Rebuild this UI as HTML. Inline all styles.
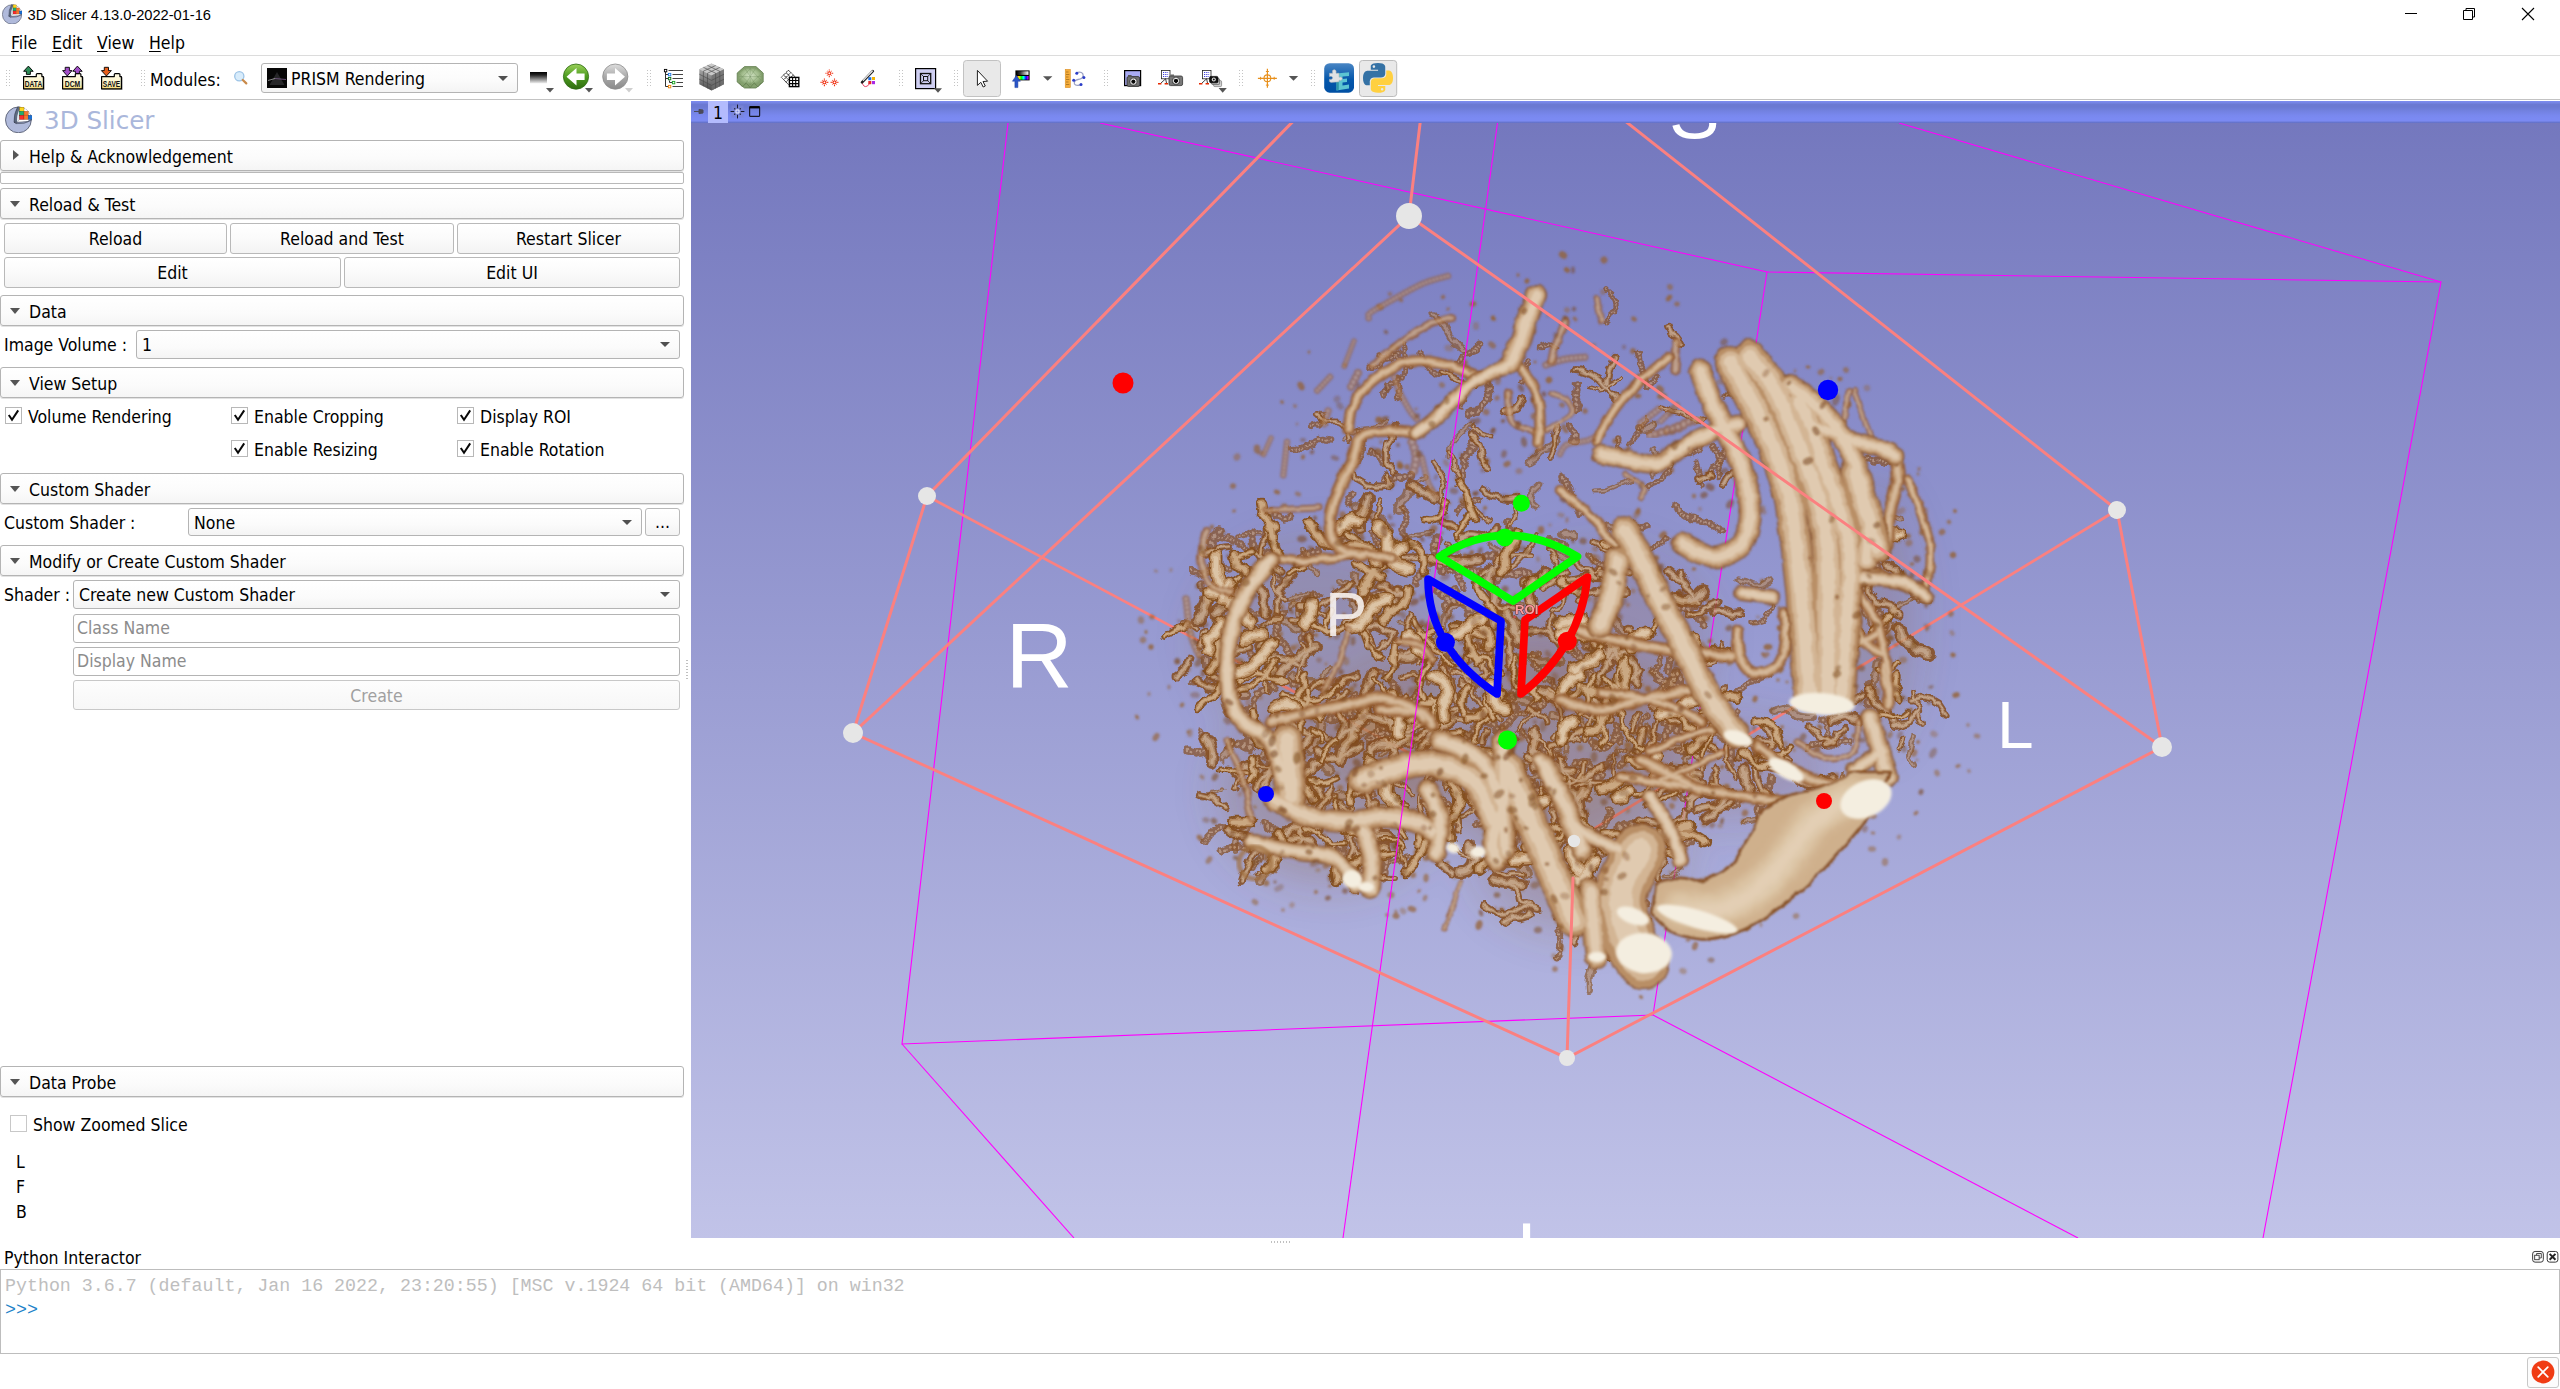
<!DOCTYPE html>
<html lang="en">
<head>
<meta charset="utf-8">
<title>3D Slicer 4.13.0-2022-01-16</title>
<style>
*{box-sizing:border-box;margin:0;padding:0}
html,body{width:2560px;height:1389px;overflow:hidden;background:#fff}
body{position:relative;font-family:"DejaVu Sans Condensed","Liberation Sans",sans-serif;font-size:17.5px;color:#000;line-height:1}
.abs{position:absolute}
.t{position:absolute;white-space:nowrap;line-height:20px;height:20px}
#titlebar{left:0;top:0;width:2560px;height:30px;background:#fff}
#title{left:27.5px;top:5px;font-family:"Liberation Sans",sans-serif;font-size:14.7px;line-height:20px;letter-spacing:-0.04px}
#menubar{left:0;top:30px;width:2560px;height:25px;background:#fff}
.menu{top:33px}
.menu u{text-decoration:underline;text-underline-offset:2px;text-decoration-thickness:1px}
#tbline1{left:0;top:55px;width:2560px;height:1px;background:#dcdcdc}
#tbline2{left:0;top:99px;width:2560px;height:1px;background:#c3c3c3}
.handle{position:absolute;top:69px;width:6px;height:18px;background-image:radial-gradient(circle,#c4c4c4 0.55px,transparent 0.95px);background-size:3px 3px}
.cbtn{position:absolute;left:0;width:684px;height:31px;border:1px solid #b4b4b4;border-radius:3px;background:linear-gradient(#ffffff,#fbfbfb 60%,#f5f5f5);box-shadow:0 1px 0 #e2e2e2}
.cbtn .lbl{position:absolute;left:28px;top:6px;line-height:20px;white-space:nowrap}
.cbtn .arr{position:absolute;left:9px;top:12px;width:0;height:0;border-left:5.5px solid transparent;border-right:5.5px solid transparent;border-top:6px solid #555}
.cbtn .arrr{position:absolute;left:12px;top:9px;width:0;height:0;border-top:5.5px solid transparent;border-bottom:5.5px solid transparent;border-left:6px solid #555}
.pbtn{position:absolute;height:31px;padding-top:1px;border:1px solid #b9b9b9;border-radius:3px;background:linear-gradient(#ffffff,#fafafa 55%,#f3f3f3);text-align:center;line-height:28px;white-space:nowrap}
.combo{position:absolute;height:29px;border:1px solid #b4b4b4;border-radius:3px;background:linear-gradient(#ffffff,#fbfbfb 60%,#f4f4f4);line-height:29px;padding-left:5px;white-space:nowrap}
.combo .dd{position:absolute;right:9px;top:11px;width:0;height:0;border-left:5px solid transparent;border-right:5px solid transparent;border-top:5.5px solid #505050}
.edit{position:absolute;left:73px;width:607px;height:29px;border:1px solid #b4b4b4;border-radius:3px;background:#fff;line-height:27px;padding-left:3px;color:#8c8c8c;white-space:nowrap}
.chk{position:absolute;width:17px;height:17px;border:1px solid #b8b8b8;background:#fff}
.chk svg{position:absolute;left:0;top:0}
.ddarrow{position:absolute;width:0;height:0;border-left:5px solid transparent;border-right:5px solid transparent;border-top:5px solid #555}
.sarrow{position:absolute;width:0;height:0;border-left:4px solid transparent;border-right:4px solid transparent;border-top:4.5px solid #555}
#view{left:691px;top:101px;width:1869px;height:1137px;overflow:hidden;background:linear-gradient(#7478be 22px,#c1c3e8 100%)}
#vbar{left:0;top:0;width:1869px;height:22px;background:linear-gradient(#7d8cf0 0%,#7584e4 8%,#6b79d2 16%,#6b79d2 27%,#7281e0 45%,#7988ee 65%,#7b8af2 80%,#7b8af2 90%,#6b79d4 96%,#5f6cc0 100%)}
#pybox{left:0;top:1269px;width:2560px;height:85px;border:1px solid #bdbdbd;background:#fff}
.mono{font-family:"Liberation Mono","DejaVu Sans Mono",monospace;font-size:18.3px;line-height:24px;white-space:pre;position:absolute}
</style>
</head>
<body>
<svg width="0" height="0" style="position:absolute">
<defs>
<g id="slicerlogo">
<circle cx="13.4" cy="13.9" r="12.9" fill="#b0badb" stroke="#4a5064" stroke-width=".8"/>
<path d="M13.4 1V13.9H26.3A12.9 12.9 0 0 0 13.4 1Z" fill="#fff"/>
<path d="M12.6 .9L16.6 1.6L14.2 13L11.6 17.6L9 16.2Q8.6 8 12.6 .9Z" fill="#5d6a80" stroke="#2a3040" stroke-width=".5"/>
<path d="M14.4 3.4L14.6 13.4L12 16.4Q11.6 9 14.4 3.4Z" fill="#dfe9ec"/>
<path d="M12 16.4L14.8 13.3L25.6 13.2L22.6 15.6Z" fill="#ffffff" stroke="#8088a0" stroke-width=".3"/>
<path d="M9 16.2L11.6 17.6Q19 18.6 26.2 14.4L26.4 13.2L22.6 15.6L12 16.4Z" fill="#9aa5c6" stroke="#2a3040" stroke-width=".5"/>
<rect x="14.7" y="1.2" width="4.3" height="4.1" fill="#fbd51e" stroke="#a07800" stroke-width=".4"/>
<rect x="14.7" y="5.3" width="4.3" height="4" fill="#1fae6e" stroke="#0a6a3c" stroke-width=".4"/>
<rect x="14.7" y="9.3" width="4.3" height="4" fill="#fa2d2d" stroke="#900" stroke-width=".4"/>
<rect x="19" y="5.3" width="4.2" height="8" fill="#f47a30" stroke="#a44a10" stroke-width=".4"/>
<path d="M19 9.3H23.2" stroke="#a44a10" stroke-width=".4"/>
<rect x="23.2" y="9.3" width="4" height="4" fill="#1c6fd0" stroke="#0a3c80" stroke-width=".4"/>
</g>
</defs>
</svg>
<div id="titlebar" class="abs"></div>
<!-- app icon -->
<svg class="abs" style="left:1.8px;top:3.8px" width="20.6" height="20.6" viewBox="0 0 27.4 27.4">
<use href="#slicerlogo"/>
</svg>
<div id="title" class="t">3D Slicer 4.13.0-2022-01-16</div>
<!-- window controls -->
<svg class="abs" style="left:2390px;top:0" width="170" height="30" viewBox="0 0 170 30">
<path d="M15 13.5H27" stroke="#000" stroke-width="1" fill="none"/>
<path d="M73.5 10.5V19.5H82.5V10.5Z M76 10.5V8.5H84.5V17H82.5" stroke="#000" stroke-width="1" fill="none"/>
<path d="M132 8L144 20M144 8L132 20" stroke="#000" stroke-width="1.1" fill="none"/>
</svg>
<div id="menubar" class="abs"></div>
<div class="t menu" style="left:11px"><u>F</u>ile</div>
<div class="t menu" style="left:52px"><u>E</u>dit</div>
<div class="t menu" style="left:97px"><u>V</u>iew</div>
<div class="t menu" style="left:149px"><u>H</u>elp</div>
<div id="tbline1" class="abs"></div>
<div id="tbline2" class="abs"></div>
<!-- toolbar handles -->
<div class="handle" style="left:5px"></div>
<div class="handle" style="left:140px"></div>
<div class="handle" style="left:645.5px"></div>
<div class="handle" style="left:897.5px"></div>
<div class="handle" style="left:952.5px"></div>
<div class="handle" style="left:1102.5px"></div>
<div class="handle" style="left:1237.5px"></div>
<div class="handle" style="left:1310px"></div>
<div class="t" style="left:150px;top:70.3px">Modules:</div>
<!-- module combo -->
<div class="combo" style="left:261px;top:63px;width:257px;height:30px;padding-left:29px;padding-top:1px;line-height:29px">PRISM Rendering<span class="dd" style="right:9px;top:12px"></span></div>
<svg class="abs" style="left:267px;top:68px" width="20" height="20" viewBox="0 0 20 20"><rect width="20" height="20" fill="#060606"/><path d="M10 4L17.5 17H2.5Z" fill="#262628"/><path d="M1 12.5L8 10.5" stroke="#bbb" stroke-width=".7"/><path d="M8 10.5L19 11.5" stroke="#7a5a8a" stroke-width=".8"/></svg>
<svg class="abs" style="left:0;top:56px" width="1400" height="44" viewBox="0 56 1400 44" font-family="'Liberation Sans',sans-serif">
<defs>
<linearGradient id="fold" x1="0" y1="0" x2="0" y2="1"><stop offset="0" stop-color="#fffbe6"/><stop offset=".7" stop-color="#fdf3c4"/><stop offset="1" stop-color="#f5d86a"/></linearGradient>
<linearGradient id="gball" x1="0" y1="0" x2="0" y2="1"><stop offset="0" stop-color="#9bd25a"/><stop offset=".5" stop-color="#4c9a1f"/><stop offset="1" stop-color="#2f6d10"/></linearGradient>
<linearGradient id="grball" x1="0" y1="0" x2="0" y2="1"><stop offset="0" stop-color="#dedede"/><stop offset=".5" stop-color="#a9a9a9"/><stop offset="1" stop-color="#8a8a8a"/></linearGradient>
<linearGradient id="bw" x1="0" y1="0" x2="0" y2="1"><stop offset="0" stop-color="#000"/><stop offset=".25" stop-color="#222"/><stop offset="1" stop-color="#f4f4f4"/></linearGradient>
<linearGradient id="bwh" x1="0" y1="0" x2="1" y2="0"><stop offset="0" stop-color="#000"/><stop offset=".3" stop-color="#333"/><stop offset="1" stop-color="#fff"/></linearGradient>
<linearGradient id="rainbow" x1="0" y1="0" x2="1" y2="0"><stop offset="0" stop-color="#f00"/><stop offset=".2" stop-color="#ff0"/><stop offset=".4" stop-color="#0f0"/><stop offset=".6" stop-color="#0ff"/><stop offset=".8" stop-color="#00f"/><stop offset="1" stop-color="#f0f"/></linearGradient>
<linearGradient id="extbg" x1="0" y1="0" x2="0" y2="1"><stop offset="0" stop-color="#4a86c4"/><stop offset=".55" stop-color="#0457ab"/><stop offset="1" stop-color="#004fa3"/></linearGradient>
<linearGradient id="cubeg" x1="0" y1="0" x2="0" y2="1"><stop offset="0" stop-color="#b9b9b9"/><stop offset=".5" stop-color="#8a8a8a"/><stop offset="1" stop-color="#4b4b4b"/></linearGradient>
<radialGradient id="gemg" cx=".5" cy=".45" r=".6"><stop offset="0" stop-color="#d2e3c4"/><stop offset=".6" stop-color="#a5bf90"/><stop offset="1" stop-color="#7c9966"/></radialGradient>
<radialGradient id="lens" cx=".5" cy=".5" r=".5"><stop offset="0" stop-color="#000"/><stop offset=".45" stop-color="#111"/><stop offset=".6" stop-color="#eee"/><stop offset=".8" stop-color="#999"/><stop offset="1" stop-color="#333"/></radialGradient>
<g id="folder"><path d="M1.2 19.2V31.8H21.8V19.2" fill="#6b6b6b" opacity=".55"/><path d="M.6 18.6V30.9H20.4V18.6H18.9V16.6Q18.9 15.7 18 15.7H14.2Q13.3 15.7 13.3 16.6V18.6Z" fill="url(#fold)" stroke="#000" stroke-width="1.2" stroke-linejoin="round"/></g>
</defs>
<!-- DATA / DCM / SAVE : origin at folder x, y=58 -->
<g transform="translate(23,58)"><use href="#folder"/><path d="M5.4 8.1L.6 13.3H3.4V16.4H7.4V13.3H10.2Z" fill="#2e8b57" stroke="#000" stroke-width=".9" stroke-linejoin="round"/><text x="10.5" y="28.8" font-size="8.6" font-weight="bold" text-anchor="middle" textLength="17.5" lengthAdjust="spacingAndGlyphs" fill="#111">DATA</text></g>
<g transform="translate(62,58)"><use href="#folder"/><path d="M3.2 9.3H7.4V12.6H10L5.3 18L.6 12.6H3.2Z" fill="#a24fc7" stroke="#000" stroke-width=".9" stroke-linejoin="round"/><path d="M15.4 8.1L10.8 13.3H13.4V15.6H17.4V13.3H20.2Z" fill="#a24fc7" stroke="#000" stroke-width=".9" stroke-linejoin="round"/><text x="10.5" y="28.8" font-size="8.6" font-weight="bold" text-anchor="middle" textLength="15.5" lengthAdjust="spacingAndGlyphs" fill="#111">DCM</text></g>
<g transform="translate(101,58)"><use href="#folder"/><path d="M3.3 9.3H7.5V12.6H10.4L5.4 18L.4 12.6H3.3Z" fill="#e8601c" stroke="#000" stroke-width=".9" stroke-linejoin="round"/><text x="10.5" y="28.8" font-size="8.6" font-weight="bold" text-anchor="middle" textLength="17.5" lengthAdjust="spacingAndGlyphs" fill="#111">SAVE</text></g>
<!-- magnifier -->
<g><circle cx="239.3" cy="76.3" r="4.6" fill="#d8ecfb" stroke="#9cc3e6" stroke-width="1.3"/><path d="M242.8 80L246.3 83.4" stroke="#c98a4a" stroke-width="2.2" stroke-linecap="round"/></g>
<!-- history gradient icon -->
<rect x="530" y="72" width="17" height="11.5" fill="url(#bw)"/><path d="M546 88H554L550 92.5Z" fill="#555"/>
<!-- back / forward -->
<circle cx="576" cy="76.6" r="12.6" fill="url(#gball)" stroke="#2c6a10" stroke-width=".8"/>
<path d="M566.5 76.8L576.5 68V73.6H584.6V80H576.5V85.6Z" fill="#fff"/>
<path d="M585 88H593L589 92.5Z" fill="#555"/>
<circle cx="615.3" cy="76.6" r="12.6" fill="url(#grball)" stroke="#8c8c8c" stroke-width=".8"/>
<path d="M625 76.8L615 68V73.6H606.9V80H615V85.6Z" fill="#fff"/>
<path d="M625 88H633L629 92.5Z" fill="#cfcfcf"/>
<!-- subject hierarchy tree -->
<g fill="none" stroke="#333" stroke-width="1">
<path d="M665.5 72V86.5H668M665.5 74.5H668M665.5 78.5H668M669.5 80.5V82.5H672"/>
<path d="M668.5 70.5H683M672.5 74.5H683M672.5 78.5H683M676.5 82.5H683M672.5 86.5H683" stroke="#444"/>
<rect x="664.4" y="69.4" width="2.4" height="2.4" stroke="#000" stroke-width=".9" fill="#fff"/>
<rect x="668.4" y="73.4" width="2.4" height="2.4" stroke="#1e78e6" stroke-width=".9" fill="#fff"/>
<rect x="668.4" y="77.4" width="2.4" height="2.4" stroke="#0a6e14" stroke-width=".9" fill="#fff"/>
<rect x="672.4" y="81.4" width="2.4" height="2.4" stroke="#14a01e" stroke-width=".9" fill="#fff"/>
<rect x="668.4" y="85.4" width="2.4" height="2.4" stroke="#f08200" stroke-width=".9" fill="#fff"/>
</g>
<!-- gray cube -->
<g><path d="M711.5 63.6L724 69.2V84.2L711.5 90.4L699.3 84.2V69.2Z" fill="url(#cubeg)"/><path d="M711.5 63.6L724 69.2L711.5 75.4L699.3 69.2Z" fill="#c9c9c9"/><path d="M711.5 75.4V90.4L724 84.2V69.2Z" fill="#6f6f6f" opacity=".75"/>
<path d="M703.4 67.3L715.8 73.3M707.5 65.4L719.9 71.4M715.6 65.5L703.3 71.2M719.8 67.4L707.4 73.3M699.3 74.2L711.5 80.4L724 74.2M699.3 79.2L711.5 85.4L724 79.2M703.4 71.3V86.3M707.5 73.3V88.4M715.6 73.4V88.4M719.8 71.3V86.3" stroke="#4a4a4a" stroke-width=".8" fill="none" opacity=".8"/></g>
<!-- green gem -->
<g><path d="M744.5 66.6H756L763.2 73V82L756 88H744.5L737.2 82V73Z" fill="#84a06e" stroke="#5f7c4c" stroke-width=".8"/>
<path d="M745 68.6H755.5L761.2 73.6V80.4L755.5 84.6H745L739.2 80.4V73.6Z" fill="url(#gemg)"/>
<path d="M750.2 68.6V84.6M739.2 76.6H761.2M745 68.6L755.5 84.6M755.5 68.6L745 84.6M739.2 73.6L750.2 84.6M761.2 73.6L750.2 84.6M739.2 80.4L750.2 68.6M761.2 80.4L750.2 68.6" stroke="#6a8756" stroke-width=".45" fill="none" opacity=".75"/>
<path d="M739 82.6L742.4 87L746.2 82.8L750.2 87.6L754.2 82.8L758 87L761.4 82.6" stroke="#4e6a3c" stroke-width=".6" fill="none" opacity=".8"/></g>
<!-- grid transforms -->
<g stroke="#000" fill="none"><path d="M788.4 70.2L795.6 77.3L788.4 84.5L781.3 77.3ZM786 72.6L793.2 79.7M783.7 75L790.8 82.1M790.8 72.6L783.7 79.7M793.2 75L786 82.1" stroke-width=".95" stroke-dasharray="1.1 .5"/><rect x="789.4" y="77.4" width="9.4" height="9.2" fill="#fff" stroke-width="1.4"/><path d="M792.6 77.4V86.6M795.7 77.4V86.6M789.4 80.5H798.8M789.4 83.6H798.8" stroke-width="1.1"/></g>
<!-- fiducial stars -->
<path d="M830.2 73.3L833.2 73.3M829.9 73.9L831.6 75.6M829.3 74.2L829.3 77.2M828.7 73.9L827.0 75.6M828.4 73.3L825.4 73.3M828.7 72.7L827.0 71.0M829.3 72.4L829.3 69.4M829.9 72.7L831.6 71.0M825.3 82.4L828.3 82.4M825.0 83.0L826.7 84.7M824.4 83.3L824.4 86.3M823.8 83.0L822.1 84.7M823.5 82.4L820.5 82.4M823.8 81.8L822.1 80.1M824.4 81.5L824.4 78.5M825.0 81.8L826.7 80.1M835.4 82.4L838.4 82.4M835.1 83.0L836.8 84.7M834.5 83.3L834.5 86.3M833.9 83.0L832.2 84.7M833.6 82.4L830.6 82.4M833.9 81.8L832.2 80.1M834.5 81.5L834.5 78.5M835.1 81.8L836.8 80.1" stroke="#f03214" stroke-width="1.1" fill="none" stroke-dasharray="1.3 .5"/>
<!-- segment editor pen -->
<g><path d="M862.2 82.6Q863.5 87.8 867 86.2Q869.5 85 869.8 82" stroke="#e6325a" stroke-width=".9" fill="none"/><rect x="868.3" y="77.2" width="3" height="3" fill="#1e6ee6"/><rect x="872" y="77" width="3" height="3" fill="#f5b400"/><rect x="868.3" y="81" width="3" height="3.2" fill="#e62828"/><rect x="872" y="81" width="3" height="3.2" fill="#aa28e6"/><path d="M862 82.4L872.8 71.2" stroke="#222" stroke-width="2.6" stroke-linecap="round"/><path d="M863.3 80.4L872.4 71" stroke="#f4f4f4" stroke-width="1.1" stroke-linecap="round"/></g>
<!-- layout -->
<g><rect x="915.6" y="68.6" width="20" height="20" fill="#cfcff2" stroke="#000" stroke-width="1.2"/><rect x="920.5" y="73.5" width="10.2" height="10.2" fill="none" stroke="#111" stroke-width="1.3"/><rect x="923.5" y="76.5" width="4.2" height="4.2" fill="none" stroke="#111" stroke-width="1"/><path d="M920.5 73.5L923.5 76.5M930.7 73.5L927.7 76.5M920.5 83.7L923.5 80.7M930.7 83.7L927.7 80.7" stroke="#111" stroke-width=".8"/><path d="M934 88.3H942L938 92.8Z" fill="#555"/></g>
<!-- pressed pointer button -->
<rect x="963.5" y="60.5" width="37" height="36" rx="3" fill="#e9e9e9" stroke="#c2c2c2"/>
<path d="M977.4 70.4V85.4L980.8 82.3L983.2 87L985.3 86L983 81.5L987.6 81.2Z" fill="#fff" stroke="#222" stroke-width="1" stroke-linejoin="miter"/>
<!-- window/level -->
<g><rect x="1015.4" y="70.4" width="14.2" height="10" fill="#000"/><rect x="1016.5" y="71.3" width="12" height="3.6" fill="url(#bwh)"/><rect x="1016.5" y="76" width="12" height="3.6" fill="url(#rainbow)"/><path d="M1016.4 75.4L1020.4 81.2H1017.9V87.6H1014.9V81.2H1012.4Z" fill="#2a55c8" stroke="#1b3c9c" stroke-width=".5"/><path d="M1043 76.2H1052.4L1047.7 80.8Z" fill="#555"/></g>
<!-- ruler + curve -->
<g><rect x="1065.2" y="69.3" width="5.2" height="18.4" fill="#f6ad3c" stroke="#d68a1e" stroke-width=".5"/><path d="M1066 72H1068.5M1066 74.5H1069.3M1066 77H1068.5M1066 79.5H1069.3M1066 82H1068.5M1066 84.5H1069.3" stroke="#8a5a10" stroke-width=".6"/><path d="M1076.5 72.6Q1083 71 1083.2 75.5Q1083 79 1078 79.5Q1073.5 80.6 1074.5 84Q1076 86.6 1081 84.6" fill="none" stroke="#9ba1c4" stroke-width="1.3"/><circle cx="1076.8" cy="73.2" r="1.5" fill="#2a3cc8"/><circle cx="1083.9" cy="77.4" r="1.5" fill="#2a3cc8"/><circle cx="1073.7" cy="80.2" r="1.5" fill="#2a3cc8"/><circle cx="1081" cy="84.4" r="1.5" fill="#2a3cc8"/></g>
<!-- screenshot camera -->
<g id="cam1"><rect x="1124.6" y="70.6" width="16" height="15" fill="#a9abf3" stroke="#000" stroke-width="1.2"/><rect x="1127" y="76.6" width="12.6" height="9.8" rx="1.5" fill="#707070" stroke="#2a2a2a" stroke-width=".8"/><rect x="1128" y="75" width="3.6" height="2" fill="#555"/><circle cx="1133.4" cy="81.6" r="3.9" fill="url(#lens)"/></g>
<!-- scene view camera -->
<g><rect x="1161.4" y="70.4" width="8.6" height="8.4" fill="#fff" stroke="#222" stroke-width=".8"/><path d="M1163 72.5H1168.5M1163 74.5H1168.5M1163 76.5H1168.5" stroke="#3c3cdc" stroke-width="1" stroke-dasharray="1 .8"/><path d="M1165.6 78.8L1161 83M1165.6 78.8L1166.5 83" stroke="#111" stroke-width=".8"/><path d="M1158 83.8H1161.4M1164.6 83.8H1168" stroke="#e62800" stroke-width="1.4"/><rect x="1169" y="76" width="13.6" height="9.6" rx="1.6" fill="#787878" stroke="#333" stroke-width=".8"/><rect x="1170.4" y="74.5" width="3.6" height="2" fill="#666"/><circle cx="1176" cy="80.8" r="3.9" fill="url(#lens)"/></g>
<!-- scene views restore -->
<g><rect x="1202.4" y="70.4" width="8.6" height="8.4" fill="#fff" stroke="#222" stroke-width=".8"/><path d="M1204 72.5H1209.5M1204 74.5H1209.5M1204 76.5H1209.5" stroke="#3c3cdc" stroke-width="1" stroke-dasharray="1 .8"/><path d="M1206.6 78.8L1202 83M1206.6 78.8L1207.5 83" stroke="#111" stroke-width=".8"/><path d="M1199 83.8H1202.4M1205.6 83.8H1209" stroke="#e62800" stroke-width="1.4"/><rect x="1213.6" y="80.6" width="8" height="6" rx="1.2" fill="#d2d2d2" stroke="#777" stroke-width=".7"/><rect x="1211.6" y="78.6" width="8" height="6" rx="1.2" fill="#bbb" stroke="#555" stroke-width=".7"/><rect x="1209.6" y="76.4" width="8.4" height="6.4" rx="1.4" fill="#111" stroke="#000" stroke-width=".7"/><circle cx="1213.8" cy="79.6" r="2" fill="#e6e6e6"/><circle cx="1213.8" cy="79.6" r="1" fill="#111"/><path d="M1218.6 88H1226.8L1222.7 92.8Z" fill="#555"/></g>
<!-- crosshair -->
<g stroke="#e8901c" fill="none"><path d="M1267.4 68.8V87.8M1257.9 78.3H1276.9" stroke-width="1.2"/><circle cx="1267.4" cy="78.3" r="3.4" stroke-width="1.1"/><path d="M1265.9 71.5H1268.9M1265.9 85.1H1268.9M1260.6 76.8V79.8M1274.2 76.8V79.8" stroke-width="1"/></g>
<path d="M1288.8 76H1298.2L1293.5 80.7Z" fill="#555"/>
<!-- extensions manager -->
<g><rect x="1324.2" y="63.2" width="29.8" height="29.5" rx="5.5" fill="url(#extbg)"/><path d="M1336.5 73.5V90.5L1349 88.5V84.6L1342.5 85.4V82.6L1347 82.1V78.6L1342.5 79V76.4L1349 76V72.2Z" fill="#5cc4d2"/><path d="M1336.5 73.5L1338.8 72.9V89.8L1336.5 90.5Z" fill="#2d96a8"/><path d="M1329.4 73.2H1332.6Q1331.6 70 1334.2 69.6Q1336.9 70 1336 73.2H1339V77.2Q1342 76.2 1342.3 78.6Q1342 81.2 1339 80.2V81.8L1331 82.4L1329.4 81.6V79.2Q1332.4 80.2 1332.6 77.8Q1332.4 75.6 1329.4 76.6Z" fill="#dfe1e4" stroke="#a8acb2" stroke-width=".5"/></g>
<!-- python button -->
<rect x="1359.5" y="60.5" width="37.2" height="36" rx="3" fill="#e9e9e9" stroke="#bcbcbc"/>
<g transform="translate(1363,63) scale(.2717)">
<path d="M54.9 0C26.8 0 28.6 12.2 28.6 12.2l.03 12.6H55.4v3.8H17.9S0 26.6 0 54.9c0 28.3 15.7 27.3 15.7 27.3h9.3V69S24.5 53.3 40.4 53.3h26.500000000000004S81.8 53.5 81.8 38.900000000000006V14.7S84.1 0 54.9 0ZM40.1 8.5a4.800000000000001 4.800000000000001 0 1 1 0 9.600000000000001 4.800000000000001 4.800000000000001 0 0 1 0 -9.600000000000001Z" fill="#3572a5"/>
<path d="M55.7 109.8c28.1 0 26.3 -12.2 26.3 -12.2l-.03 -12.6H55.2v-3.8h37.5s17.9 2 17.9 -26.3c0 -28.3 -15.7 -27.3 -15.7 -27.3h-9.3V40.8S86.1 56.5 70.2 56.5H43.7S28.8 56.3 28.8 70.9v24.200000000000003S26.5 109.8 55.7 109.8ZM70.5 101.3a4.800000000000001 4.800000000000001 0 1 1 0 -9.600000000000001 4.800000000000001 4.800000000000001 0 0 1 0 9.600000000000001Z" fill="#ffd040"/>
</g>
</svg>
<!-- left module panel -->
<svg class="abs" style="left:4.6px;top:105.8px" width="27.4" height="27.4" viewBox="0 0 27.4 27.4"><use href="#slicerlogo"/></svg>
<div class="t" style="left:44px;top:105px;height:32px;line-height:32px;font-family:'DejaVu Sans','Liberation Sans',sans-serif;font-size:24.6px;color:#aab7db">3D Slicer</div>

<div class="cbtn" style="top:140px"><span class="arrr"></span><span class="lbl">Help &amp; Acknowledgement</span></div>
<div class="abs" style="left:0;top:172px;width:684px;height:12px;border:1px solid #b9b9b9;border-radius:2px;background:#fff"></div>
<div class="cbtn" style="top:188px"><span class="arr"></span><span class="lbl">Reload &amp; Test</span></div>
<div class="pbtn" style="left:4px;top:223px;width:223px">Reload</div>
<div class="pbtn" style="left:230px;top:223px;width:224px">Reload and Test</div>
<div class="pbtn" style="left:457px;top:223px;width:223px">Restart Slicer</div>
<div class="pbtn" style="left:4px;top:257px;width:337px">Edit</div>
<div class="pbtn" style="left:344px;top:257px;width:336px">Edit UI</div>
<div class="cbtn" style="top:295px"><span class="arr"></span><span class="lbl">Data</span></div>
<div class="t" style="left:4px;top:335px">Image Volume :</div>
<div class="combo" style="left:136px;top:330px;width:544px">1<span class="dd"></span></div>
<div class="cbtn" style="top:367px"><span class="arr"></span><span class="lbl">View Setup</span></div>

<div class="chk" style="left:5px;top:407px"><svg width="15" height="15" viewBox="0 0 15 15"><path d="M2.8 7L6 11.8L12.2 2.4" stroke="#080808" stroke-width="2" fill="none"/></svg></div>
<div class="t" style="left:28px;top:407px">Volume Rendering</div>
<div class="chk" style="left:231px;top:407px"><svg width="15" height="15" viewBox="0 0 15 15"><path d="M2.8 7L6 11.8L12.2 2.4" stroke="#080808" stroke-width="2" fill="none"/></svg></div>
<div class="t" style="left:254px;top:407px">Enable Cropping</div>
<div class="chk" style="left:457px;top:407px"><svg width="15" height="15" viewBox="0 0 15 15"><path d="M2.8 7L6 11.8L12.2 2.4" stroke="#080808" stroke-width="2" fill="none"/></svg></div>
<div class="t" style="left:480px;top:407px">Display ROI</div>
<div class="chk" style="left:231px;top:440px"><svg width="15" height="15" viewBox="0 0 15 15"><path d="M2.8 7L6 11.8L12.2 2.4" stroke="#080808" stroke-width="2" fill="none"/></svg></div>
<div class="t" style="left:254px;top:440px">Enable Resizing</div>
<div class="chk" style="left:457px;top:440px"><svg width="15" height="15" viewBox="0 0 15 15"><path d="M2.8 7L6 11.8L12.2 2.4" stroke="#080808" stroke-width="2" fill="none"/></svg></div>
<div class="t" style="left:480px;top:440px">Enable Rotation</div>

<div class="cbtn" style="top:473px"><span class="arr"></span><span class="lbl">Custom Shader</span></div>
<div class="t" style="left:4px;top:513px">Custom Shader :</div>
<div class="combo" style="left:188px;top:508px;width:454px;height:28px;line-height:28px">None<span class="dd"></span></div>
<div class="pbtn" style="left:645px;top:508px;width:35px;height:28px;line-height:24px">...</div>
<div class="cbtn" style="top:545px"><span class="arr"></span><span class="lbl">Modify or Create Custom Shader</span></div>
<div class="t" style="left:4px;top:585px">Shader :</div>
<div class="combo" style="left:73px;top:580px;width:607px">Create new Custom Shader<span class="dd"></span></div>
<div class="edit" style="top:614px">Class Name</div>
<div class="edit" style="top:647px">Display Name</div>
<div class="pbtn" style="left:73px;top:680px;width:607px;height:30px;color:#a0a0a0;background:linear-gradient(#fdfdfd,#f7f7f7);border-color:#c8c8c8">Create</div>

<div class="cbtn" style="top:1066px;height:31px"><span class="arr"></span><span class="lbl" style="top:6px">Data Probe</span></div>
<div class="chk" style="left:10px;top:1115px;border-color:#c8c8c8"></div>
<div class="t" style="left:33px;top:1115px">Show Zoomed Slice</div>
<div class="t" style="left:16px;top:1152px">L</div>
<div class="t" style="left:16px;top:1177px">F</div>
<div class="t" style="left:16px;top:1202px">B</div>

<!-- splitter handle dots -->
<div class="abs" style="left:686px;top:659px;width:2px;height:22px;background-image:radial-gradient(circle,#c0c0c0 0.6px,transparent 0.9px);background-size:2px 3px"></div>
<div class="abs" style="left:1270px;top:1241px;width:22px;height:2px;background-image:radial-gradient(circle,#c0c0c0 0.6px,transparent 0.9px);background-size:3px 2px"></div>

<!-- python interactor -->
<div class="t" style="left:4px;top:1248px">Python Interactor</div>
<svg class="abs" style="left:2530.5px;top:1250px" width="29.5" height="13.6" viewBox="0 0 30 14"><rect x="1.5" y="1.5" width="11" height="11" rx="2.5" fill="#fff" stroke="#333" stroke-width="1"/><rect x="3.6" y="5.4" width="4.6" height="4.6" fill="none" stroke="#333" stroke-width=".9"/><path d="M5.6 5.4V3.6H10.4V8.2H8.2" fill="none" stroke="#333" stroke-width=".9"/><rect x="16.5" y="1.5" width="11" height="11" rx="2.5" fill="#fff" stroke="#333" stroke-width="1"/><path d="M19 4L25 10M25 4L19 10" stroke="#222" stroke-width="2"/></svg>
<div id="pybox" class="abs"></div>
<div class="mono" style="left:5px;top:1274px;color:#bebebe">Python 3.6.7 (default, Jan 16 2022, 23:20:55) [MSC v.1924 64 bit (AMD64)] on win32</div>
<div class="mono" style="left:5px;top:1298px;color:#1e82c8">&gt;&gt;&gt;</div>
<!-- status bar error button -->
<div class="abs" style="left:2527px;top:1357px;width:32px;height:31px;border:1px solid #c8c8c8;border-radius:3px;background:#fcfcfc"></div>
<svg class="abs" style="left:2531px;top:1360px" width="24" height="24" viewBox="0 0 24 24"><circle cx="12" cy="12" r="11.4" fill="#f03c14"/><path d="M7.2 7.2L16.8 16.8M16.8 7.2L7.2 16.8" stroke="#fff" stroke-width="1.7" stroke-linecap="round"/></svg>
<div id="view" class="abs">
<div id="vbar" class="abs"></div>
<div class="abs" style="left:17px;top:0;width:20px;height:22px;background:#b3bbfd"></div>
<div class="t" style="left:22px;top:2px;font-size:17.5px">1</div>
<svg class="abs" style="left:0;top:0" width="80" height="22" viewBox="691 101 80 22">
<path d="M694 111.5H699M699 109.4V113.6L703 113V110Z" stroke="#4a4a5a" stroke-width="1" fill="#4a4a5a"/>
<rect x="731.5" y="105.5" width="12" height="12" fill="#7c86d4" opacity=".7"/>
<g stroke="#1a1a2a" stroke-width="1" fill="none"><path d="M737.5 104.6V108.2M737.5 114.8V118.4M730.6 111.5H734.2M740.8 111.5H744.4"/><rect x="736" y="110" width="3" height="3" stroke="#eef" /><path d="M734.3 108.3L735.3 109.3M740.7 108.3L739.7 109.3M734.3 114.7L735.3 113.7M740.7 114.7L739.7 113.7" stroke-width="1.2"/></g>
<rect x="749.6" y="106.6" width="10" height="9.8" rx="1" fill="none" stroke="#1a1a2a" stroke-width="1.2"/><rect x="749.6" y="106.2" width="10" height="2.2" fill="#000"/>
</svg>
<svg class="abs" style="left:0;top:22px" width="1869" height="1115" viewBox="691 123 1869 1115" font-family="'Liberation Sans',sans-serif">
<!-- volume bounding box (magenta) -->
<g stroke="#ff00ff" stroke-width="1.1" fill="none" id="mag">
<path d="M1008 123L902 1044L1653 1015L1767 272L1100 123"/>
<path d="M902 1044L1074 1238"/>
<path d="M1653 1015L2078 1238"/>
<path d="M1767 272L2441 282L2263 1238"/>
<path d="M2441 282L1899 123"/>
</g>
<!-- ROI back edges -->
<g stroke="#fb8080" stroke-width="2.7" fill="none" stroke-linecap="round" id="roiback">
<path d="M927 496L1574 841L2117 510M1574 841L1573 878"/>
</g>
<!--VESSELS-->
<defs><filter id="vb" x="-8%" y="-8%" width="116%" height="116%"><feGaussianBlur stdDeviation="0.8"/></filter><filter id="vb2" x="-8%" y="-8%" width="116%" height="116%"><feGaussianBlur stdDeviation="1.6"/></filter><filter id="vb3" x="-30%" y="-30%" width="160%" height="160%"><feGaussianBlur stdDeviation="22"/></filter><filter id="vb4" x="-20%" y="-20%" width="140%" height="140%"><feGaussianBlur stdDeviation="5"/></filter><filter id="rg" x="-8%" y="-8%" width="116%" height="116%"><feTurbulence type="fractalNoise" baseFrequency="0.11" numOctaves="2" seed="4" result="n"/><feDisplacementMap in="SourceGraphic" in2="n" scale="7" xChannelSelector="R" yChannelSelector="G"/><feGaussianBlur stdDeviation="0.7"/></filter><filter id="rg2" x="-8%" y="-8%" width="116%" height="116%"><feTurbulence type="fractalNoise" baseFrequency="0.07" numOctaves="2" seed="9" result="n"/><feDisplacementMap in="SourceGraphic" in2="n" scale="5" xChannelSelector="R" yChannelSelector="G"/><feGaussianBlur stdDeviation="0.8"/></filter>
<path id="v0" d="M1199 647C1200 645 1201 642 1202 639C1203 637 1203 633 1204 631"/>
<path id="v1" d="M1191 683C1193 683 1200 684 1204 683C1209 681 1214 676 1216 675"/>
<path id="v2" d="M1393 854C1392 854 1388 855 1385 855C1383 856 1380 855 1378 854C1375 854 1373 853 1370 852C1368 852 1365 850 1363 849"/>
<path id="v3" d="M1576 825C1576 826 1576 831 1574 833C1573 836 1570 837 1570 840C1569 842 1570 847 1570 848"/>
<path id="v4" d="M1547 840C1549 840 1555 840 1558 839C1560 837 1564 833 1565 832"/>
<path id="v5" d="M1614 754C1614 756 1613 762 1613 766C1613 770 1612 774 1613 778C1613 782 1616 786 1618 789C1621 791 1627 793 1629 794"/>
<path id="v6" d="M1331 609C1331 610 1330 614 1329 616C1329 618 1327 620 1326 623C1326 625 1326 629 1325 630"/>
<path id="v7" d="M1698 664C1700 664 1706 665 1710 663C1713 662 1716 659 1718 655C1721 652 1722 646 1723 644"/>
<path id="v8" d="M1425 519C1427 519 1432 520 1435 519C1438 518 1441 515 1443 512C1444 509 1444 504 1445 502"/>
<path id="v9" d="M1357 863C1358 865 1362 872 1364 876C1366 881 1367 888 1367 890"/>
<path id="v10" d="M1384 726C1382 726 1375 726 1370 727C1366 729 1362 733 1358 735C1354 737 1348 740 1346 742"/>
<path id="v11" d="M1469 844C1469 846 1469 849 1469 851C1470 853 1471 855 1472 856C1473 858 1476 860 1476 861"/>
<path id="v12" d="M1224 598C1223 596 1222 589 1220 584C1219 580 1217 575 1216 571C1216 566 1216 559 1216 557"/>
<path id="v13" d="M1337 684C1338 683 1340 681 1342 680C1344 679 1347 680 1349 680C1351 680 1354 681 1355 681"/>
<path id="v14" d="M1639 824C1637 824 1631 824 1627 825C1622 826 1617 829 1615 830"/>
<path id="v15" d="M1595 830C1597 830 1601 829 1603 828C1605 826 1605 823 1607 821C1608 819 1610 816 1610 814C1610 812 1608 808 1608 807"/>
<path id="v16" d="M1557 847C1558 845 1561 839 1562 835C1563 830 1562 823 1562 821"/>
<path id="v17" d="M1240 577C1239 578 1235 580 1234 583C1233 585 1233 589 1232 590"/>
<path id="v18" d="M1273 744C1272 745 1267 748 1265 751C1263 754 1262 757 1261 761C1260 764 1261 768 1260 771C1259 775 1256 779 1255 781"/>
<path id="v19" d="M1594 576C1593 575 1591 571 1589 569C1586 568 1582 569 1580 568C1578 566 1576 562 1575 561"/>
<path id="v20" d="M1473 647C1472 646 1469 645 1467 644C1465 642 1464 640 1463 638C1461 637 1458 635 1458 634"/>
<path id="v21" d="M1246 640C1247 639 1250 635 1252 635C1255 634 1259 634 1261 634"/>
<path id="v22" d="M1378 620C1377 618 1375 610 1372 606C1369 603 1363 602 1358 601C1354 599 1347 596 1344 595"/>
<path id="v23" d="M1472 507C1473 508 1478 512 1481 515C1484 517 1489 520 1490 521"/>
<path id="v24" d="M1292 449C1294 449 1302 448 1307 447C1311 445 1314 440 1319 439C1323 438 1331 441 1333 441"/>
<path id="v25" d="M1305 624C1305 622 1308 619 1309 617C1310 615 1311 613 1311 611C1312 608 1312 605 1312 603"/>
<path id="v26" d="M1263 786C1264 784 1267 779 1268 775C1270 771 1272 765 1273 763"/>
<path id="v27" d="M1606 852C1605 850 1599 845 1597 841C1594 837 1593 832 1591 829C1588 825 1584 821 1580 820C1576 818 1568 820 1566 820"/>
<path id="v28" d="M1598 715C1598 716 1598 721 1599 723C1600 725 1604 726 1605 729C1606 731 1606 735 1606 737C1605 740 1602 743 1601 744"/>
<path id="v29" d="M1571 802C1572 801 1576 799 1578 798C1580 796 1582 792 1583 791"/>
<path id="v30" d="M1887 463C1886 462 1882 461 1880 460C1878 460 1876 461 1874 461C1871 461 1869 459 1867 459C1865 458 1862 459 1861 459"/>
<path id="v31" d="M1360 747C1359 748 1353 750 1349 752C1345 754 1342 757 1338 758C1334 759 1329 760 1326 758C1322 757 1318 751 1317 750"/>
<path id="v32" d="M1528 464C1529 463 1534 461 1536 459C1539 457 1539 452 1541 450C1544 448 1548 449 1551 447C1554 445 1557 441 1558 440"/>
<path id="v33" d="M1378 525C1379 527 1385 532 1387 537C1388 541 1387 546 1388 551C1390 555 1391 561 1395 564C1398 567 1406 568 1408 569"/>
<path id="v34" d="M1590 782C1590 784 1588 790 1586 793C1583 796 1579 797 1576 799C1572 801 1570 804 1566 805C1562 806 1556 804 1554 804"/>
<path id="v35" d="M1280 557C1279 555 1275 548 1274 544C1272 539 1272 534 1271 529C1269 525 1264 519 1263 516"/>
<path id="v36" d="M1553 716C1555 717 1562 719 1566 721C1570 724 1575 728 1577 730"/>
<path id="v37" d="M1515 658C1515 660 1513 668 1513 672C1513 677 1516 684 1516 686"/>
<path id="v38" d="M1570 681C1570 680 1571 677 1572 676C1573 674 1576 673 1577 673"/>
<path id="v39" d="M1718 477C1718 476 1720 470 1720 466C1720 462 1718 458 1717 454C1716 451 1713 445 1712 443"/>
<path id="v40" d="M1544 765C1544 764 1544 760 1545 757C1545 755 1547 752 1548 750C1549 748 1551 744 1551 743"/>
<path id="v41" d="M1482 742C1482 741 1483 738 1484 736C1485 734 1486 731 1487 730"/>
<path id="v42" d="M1724 483C1725 481 1727 477 1729 475C1732 474 1736 474 1738 473"/>
<path id="v43" d="M1450 527C1452 527 1455 527 1457 527C1459 527 1463 526 1464 526"/>
<path id="v44" d="M1806 817C1804 819 1799 824 1798 828C1796 832 1796 839 1796 841"/>
<path id="v45" d="M1628 629C1629 630 1632 632 1633 634C1634 635 1636 638 1637 639"/>
<path id="v46" d="M1549 775C1549 777 1549 782 1550 785C1551 788 1554 793 1555 794"/>
<path id="v47" d="M1353 575C1355 577 1357 584 1360 588C1363 591 1368 596 1370 598"/>
<path id="v48" d="M1330 848C1330 850 1333 854 1334 858C1334 861 1333 866 1333 868"/>
<path id="v49" d="M1775 742C1774 742 1768 740 1764 740C1760 740 1756 740 1752 741C1749 742 1746 745 1743 748C1741 751 1739 756 1738 758"/>
<path id="v50" d="M1632 732C1632 731 1633 726 1634 723C1635 720 1637 715 1638 714"/>
<path id="v51" d="M1214 678C1215 678 1219 678 1220 679C1222 680 1224 683 1225 683"/>
<path id="v52" d="M1398 700C1400 699 1406 700 1409 699C1413 697 1417 693 1419 692"/>
<path id="v53" d="M1468 633C1468 636 1468 643 1470 648C1471 652 1477 658 1478 660"/>
<path id="v54" d="M1506 574C1508 574 1513 573 1516 573C1520 572 1523 572 1527 573C1530 574 1533 576 1535 578C1538 580 1539 585 1540 587"/>
<path id="v55" d="M1184 623C1186 623 1189 624 1191 625C1193 626 1195 628 1196 629"/>
<path id="v56" d="M1703 784C1701 783 1697 782 1695 780C1693 779 1690 778 1688 776C1687 774 1686 769 1686 768"/>
<path id="v57" d="M1534 688C1534 689 1533 692 1534 694C1535 696 1537 699 1538 699"/>
<path id="v58" d="M1357 819C1358 818 1363 817 1367 817C1370 817 1374 817 1377 818C1380 819 1383 824 1384 825"/>
<path id="v59" d="M1620 741C1620 740 1618 736 1618 734C1617 731 1617 727 1616 726"/>
<path id="v60" d="M1540 703C1542 702 1546 700 1548 698C1550 696 1553 692 1554 691"/>
<path id="v61" d="M1619 686C1618 685 1617 681 1616 679C1616 676 1617 674 1618 672C1619 669 1621 667 1622 665C1623 663 1624 660 1625 658"/>
<path id="v62" d="M1259 742C1260 743 1263 743 1265 744C1267 746 1268 748 1269 750C1270 751 1271 754 1272 755"/>
<path id="v63" d="M1473 426C1474 427 1478 432 1481 434C1484 435 1490 436 1491 436"/>
<path id="v64" d="M1394 472C1393 470 1388 466 1387 462C1386 458 1386 453 1386 449C1387 445 1389 442 1391 438C1392 434 1394 428 1395 426"/>
<path id="v65" d="M1354 727C1356 725 1362 720 1364 716C1366 711 1363 706 1364 701C1365 696 1366 692 1367 687C1369 683 1373 677 1374 674"/>
<path id="v66" d="M1580 599C1581 599 1585 596 1588 594C1591 593 1596 591 1597 590"/>
<path id="v67" d="M1461 683C1462 683 1465 684 1467 685C1469 686 1470 689 1471 690"/>
<path id="v68" d="M1253 726C1254 725 1254 722 1254 720C1254 717 1253 714 1253 713"/>
<path id="v69" d="M1372 780C1372 778 1373 772 1373 768C1372 765 1370 761 1370 757C1370 754 1371 748 1371 746"/>
<path id="v70" d="M1498 822C1499 823 1505 826 1507 829C1509 832 1510 835 1511 839C1512 842 1513 846 1514 850C1516 853 1520 857 1521 859"/>
<path id="v71" d="M1491 653C1491 655 1492 660 1492 663C1491 667 1490 670 1488 673C1486 676 1484 678 1481 680C1478 682 1474 685 1473 686"/>
<path id="v72" d="M1683 799C1682 798 1679 795 1677 793C1675 792 1672 791 1670 789C1667 788 1664 785 1663 784"/>
<path id="v73" d="M1408 636C1409 637 1414 638 1415 640C1417 642 1416 646 1418 648C1419 650 1423 652 1424 653"/>
<path id="v74" d="M1301 722C1301 720 1300 715 1302 712C1303 709 1307 705 1308 704"/>
<path id="v75" d="M1351 796C1352 796 1357 793 1360 792C1363 791 1368 791 1370 791"/>
<path id="v76" d="M1666 682C1665 681 1660 679 1658 676C1655 674 1652 670 1651 669"/>
<path id="v77" d="M1347 533C1345 533 1340 533 1337 534C1334 535 1330 538 1329 539"/>
<path id="v78" d="M1461 407C1462 405 1464 399 1465 396C1467 392 1469 387 1470 385"/>
<path id="v79" d="M1430 723C1428 723 1423 723 1421 724C1418 725 1417 728 1414 729C1412 731 1407 731 1406 731"/>
<path id="v80" d="M1359 528C1359 527 1359 521 1360 518C1361 515 1363 512 1365 509C1366 506 1367 501 1368 499"/>
<path id="v81" d="M1822 719C1822 719 1824 722 1825 724C1826 726 1828 729 1828 730"/>
<path id="v82" d="M1511 831C1512 830 1514 827 1516 826C1518 825 1521 823 1523 822C1525 822 1529 822 1530 822"/>
<path id="v83" d="M1302 763C1302 761 1303 754 1301 751C1300 747 1296 744 1294 741C1291 738 1287 736 1285 733C1283 729 1283 723 1282 721"/>
<path id="v84" d="M1714 432C1715 432 1718 431 1720 431C1722 430 1724 429 1726 428C1728 428 1730 427 1732 427C1734 427 1737 427 1738 427"/>
<path id="v85" d="M1481 344C1480 345 1476 349 1474 351C1471 353 1467 353 1464 355C1461 357 1459 360 1457 363C1455 365 1452 369 1451 371"/>
<path id="v86" d="M1594 862C1593 863 1590 868 1588 870C1586 873 1585 877 1582 879C1580 881 1574 881 1572 881"/>
<path id="v87" d="M1411 485C1412 485 1415 487 1417 489C1419 490 1421 491 1423 492C1425 493 1427 494 1429 495C1431 496 1434 497 1435 498"/>
<path id="v88" d="M1654 765C1655 766 1657 768 1659 770C1660 771 1661 773 1662 775C1664 776 1666 776 1668 777C1670 778 1672 781 1673 781"/>
<path id="v89" d="M1388 562C1387 560 1384 556 1382 552C1381 549 1379 546 1377 542C1375 539 1373 534 1372 532"/>
<path id="v90" d="M1530 555C1528 555 1520 555 1516 555C1511 555 1506 554 1502 556C1498 558 1496 564 1493 567C1489 570 1483 573 1481 575"/>
<path id="v91" d="M1339 793C1337 794 1330 796 1328 799C1325 802 1323 809 1322 811"/>
<path id="v92" d="M1655 775C1656 774 1657 771 1657 769C1657 767 1655 765 1655 763C1654 761 1656 757 1656 756"/>
<path id="v93" d="M1853 787C1852 786 1847 785 1845 783C1844 781 1842 776 1842 775"/>
<path id="v94" d="M1802 460C1801 461 1799 464 1797 465C1795 466 1792 467 1790 468C1788 468 1784 467 1783 467"/>
<path id="v95" d="M1638 751C1638 750 1640 744 1641 741C1642 737 1642 731 1643 730"/>
<path id="v96" d="M1580 513C1579 511 1575 504 1573 500C1571 496 1570 492 1568 487C1566 483 1563 477 1562 475"/>
<path id="v97" d="M1288 769C1286 769 1279 771 1276 773C1272 775 1270 780 1266 781C1262 783 1257 782 1253 782C1249 782 1242 783 1240 783"/>
<path id="v98" d="M1659 833C1660 833 1664 836 1667 836C1670 836 1673 835 1675 833C1677 832 1679 829 1681 827C1684 826 1688 826 1690 826"/>
<path id="v99" d="M1355 827C1356 825 1362 821 1365 818C1367 814 1370 810 1370 806C1371 802 1367 795 1367 793"/>
<path id="v100" d="M1895 625C1894 625 1890 627 1888 628C1886 630 1884 634 1883 635"/>
<path id="v101" d="M1189 659C1188 661 1186 666 1184 669C1182 672 1177 675 1176 676"/>
<path id="v102" d="M1675 598C1677 599 1682 601 1685 601C1688 601 1692 601 1695 599C1698 598 1702 593 1703 592"/>
<path id="v103" d="M1728 394C1730 395 1736 396 1739 398C1743 399 1747 404 1748 405"/>
<path id="v104" d="M1899 535C1898 535 1893 534 1890 533C1887 532 1883 532 1882 531"/>
<path id="v105" d="M1412 795C1411 794 1410 790 1408 789C1406 787 1404 786 1402 785C1399 784 1396 783 1395 782"/>
<path id="v106" d="M1362 871C1362 872 1362 876 1362 878C1362 881 1363 884 1363 885"/>
<path id="v107" d="M1420 354C1420 355 1422 359 1424 362C1426 364 1427 367 1430 369C1432 371 1435 373 1437 374C1440 375 1445 374 1447 375"/>
<path id="v108" d="M1724 396C1726 395 1732 394 1736 392C1739 390 1743 385 1744 383"/>
<path id="v109" d="M1618 400C1616 398 1612 393 1608 390C1605 387 1603 383 1599 380C1596 377 1592 375 1588 373C1584 371 1577 370 1575 370"/>
<path id="v110" d="M1249 742C1249 741 1249 736 1249 733C1249 730 1247 727 1247 724C1246 721 1247 717 1246 715C1245 712 1240 710 1239 709"/>
<path id="v111" d="M1739 580C1741 581 1745 581 1747 582C1750 583 1752 585 1755 585C1758 585 1761 584 1763 584C1766 583 1769 581 1770 580"/>
<path id="v112" d="M1662 593C1663 595 1666 602 1670 605C1673 607 1679 609 1683 609C1687 608 1694 605 1696 604"/>
<path id="v113" d="M1551 457C1551 455 1554 450 1555 447C1556 443 1554 440 1555 436C1555 433 1557 427 1557 426"/>
<path id="v114" d="M1486 718C1487 719 1491 722 1493 724C1495 726 1496 729 1498 731C1500 733 1503 734 1506 736C1508 737 1513 739 1514 739"/>
<path id="v115" d="M1305 776C1304 777 1299 780 1297 782C1296 785 1296 789 1296 793C1296 796 1297 800 1298 803C1299 806 1303 810 1304 811"/>
<path id="v116" d="M1564 867C1562 866 1554 865 1550 861C1547 858 1545 850 1544 848"/>
<path id="v117" d="M1360 717C1363 717 1370 716 1374 717C1379 718 1383 720 1387 723C1391 725 1394 728 1398 730C1402 733 1408 736 1410 737"/>
<path id="v118" d="M1429 639C1428 640 1422 644 1418 646C1415 649 1411 651 1407 653C1404 656 1399 658 1397 661C1394 664 1392 671 1392 673"/>
<path id="v119" d="M1497 529C1495 530 1490 535 1486 536C1482 537 1477 534 1472 534C1468 534 1462 537 1459 538"/>
<path id="v120" d="M1396 709C1396 707 1396 702 1394 699C1393 697 1389 696 1386 693C1384 691 1382 688 1380 685C1378 683 1375 679 1374 678"/>
<path id="v121" d="M1476 621C1477 622 1479 625 1481 626C1483 628 1485 629 1487 631C1488 633 1490 636 1490 638C1491 641 1489 644 1489 646"/>
<path id="v122" d="M1560 624C1561 623 1567 622 1570 621C1574 620 1579 620 1581 619"/>
<path id="v123" d="M1593 929C1591 928 1585 928 1581 928C1577 928 1571 927 1569 927"/>
<path id="v124" d="M1358 729C1357 729 1351 729 1349 730C1346 731 1342 735 1341 736"/>
<path id="v125" d="M1701 678C1701 680 1699 683 1699 686C1699 688 1701 691 1702 693"/>
<path id="v126" d="M1297 712C1299 712 1305 712 1308 712C1312 712 1318 712 1320 712"/>
<path id="v127" d="M1621 378C1620 379 1615 382 1611 384C1608 386 1605 389 1601 389C1598 390 1592 387 1590 387"/>
<path id="v128" d="M1467 777C1468 777 1472 779 1474 779C1476 779 1480 777 1481 776"/>
<path id="v129" d="M1456 548C1454 549 1447 552 1443 554C1439 556 1433 560 1431 562"/>
<path id="v130" d="M1422 572C1422 573 1418 575 1417 577C1415 579 1415 583 1415 584"/>
<path id="v131" d="M1247 773C1246 773 1241 772 1238 771C1235 771 1232 769 1229 769C1226 768 1222 770 1220 770"/>
<path id="v132" d="M1561 652C1563 651 1569 650 1572 647C1575 644 1575 639 1577 635C1579 632 1584 628 1586 626"/>
<path id="v133" d="M1403 740C1405 740 1412 740 1416 739C1420 737 1423 733 1427 731C1431 729 1436 730 1440 728C1443 725 1447 719 1448 717"/>
<path id="v134" d="M1707 914C1707 912 1708 908 1709 906C1709 903 1708 900 1709 897C1709 895 1710 892 1710 889C1710 887 1708 883 1708 882"/>
<path id="v135" d="M1389 532C1387 530 1383 523 1380 520C1376 517 1371 516 1367 514C1363 511 1356 508 1354 507"/>
<path id="v136" d="M1557 751C1555 752 1549 756 1545 758C1540 759 1534 757 1530 759C1526 761 1524 767 1521 770C1517 773 1510 776 1508 777"/>
<path id="v137" d="M1252 758C1253 759 1253 763 1253 766C1253 769 1255 772 1254 774C1254 777 1250 780 1250 781"/>
<path id="v138" d="M1256 667C1254 667 1248 669 1244 670C1240 670 1233 669 1231 669"/>
<path id="v139" d="M1377 517C1378 515 1379 511 1380 508C1380 506 1380 501 1380 500"/>
<path id="v140" d="M1406 597C1405 596 1401 596 1400 595C1398 594 1397 590 1397 589"/>
<path id="v141" d="M1540 830C1542 829 1548 826 1552 827C1555 827 1559 829 1563 831C1566 833 1570 837 1572 838"/>
<path id="v142" d="M1605 715C1604 716 1603 719 1602 721C1601 722 1600 725 1599 726C1598 728 1597 730 1595 731C1593 732 1589 731 1588 731"/>
<path id="v143" d="M1253 721C1254 720 1255 714 1255 711C1256 708 1255 702 1255 701"/>
<path id="v144" d="M1372 740C1372 739 1372 735 1373 733C1374 731 1377 730 1378 729C1379 727 1379 723 1380 722"/>
<path id="v145" d="M1383 578C1381 577 1376 575 1374 573C1371 571 1368 570 1365 568C1362 567 1357 565 1355 564"/>
<path id="v146" d="M1695 701C1693 701 1688 702 1686 703C1683 705 1682 708 1679 710C1677 711 1673 711 1670 712C1667 713 1663 714 1661 714"/>
<path id="v147" d="M1322 797C1322 796 1320 792 1319 789C1317 786 1314 782 1313 781"/>
<path id="v148" d="M1603 543C1604 544 1608 545 1611 545C1613 545 1617 543 1618 543"/>
<path id="v149" d="M1218 643C1218 644 1219 650 1219 653C1218 656 1218 660 1216 663C1215 666 1211 670 1210 671"/>
<path id="v150" d="M1250 622C1248 621 1244 615 1240 612C1237 608 1231 603 1229 602"/>
<path id="v151" d="M1647 549C1649 549 1655 547 1658 545C1661 543 1665 539 1667 538"/>
<path id="v152" d="M1234 789C1235 787 1236 783 1238 780C1239 778 1241 775 1243 773C1246 772 1250 771 1252 770"/>
<path id="v153" d="M1899 750C1899 749 1901 746 1901 744C1902 742 1903 739 1903 738"/>
<path id="v154" d="M1292 660C1291 658 1289 651 1287 648C1285 644 1279 642 1278 638C1276 634 1277 628 1278 624C1279 620 1283 614 1284 612"/>
<path id="v155" d="M1462 602C1460 603 1453 605 1450 609C1447 612 1445 617 1444 621C1443 626 1443 633 1443 635"/>
<path id="v156" d="M1873 686C1873 684 1875 678 1875 674C1876 670 1876 663 1877 661"/>
<path id="v157" d="M1427 658C1428 656 1429 649 1431 646C1433 643 1438 639 1440 638"/>
<path id="v158" d="M1654 425C1653 426 1649 428 1647 429C1644 429 1640 428 1639 428"/>
<path id="v159" d="M1408 805C1406 804 1399 804 1395 802C1391 800 1388 797 1385 793C1383 790 1382 783 1381 781"/>
<path id="v160" d="M1400 734C1398 733 1392 729 1389 729C1385 728 1380 729 1376 731C1373 733 1369 738 1367 740"/>
<path id="v161" d="M1623 661C1621 660 1618 658 1616 656C1615 654 1614 651 1613 648C1612 646 1611 643 1610 641C1608 639 1603 639 1602 638"/>
<path id="v162" d="M1908 712C1907 713 1902 717 1899 717C1895 718 1891 716 1888 715C1884 715 1880 714 1877 715C1873 716 1869 720 1868 721"/>
<path id="v163" d="M1428 775C1427 777 1424 784 1422 788C1421 793 1419 797 1419 802C1419 807 1421 814 1422 816"/>
<path id="v164" d="M1448 736C1448 738 1448 742 1449 745C1450 747 1452 751 1453 752"/>
<path id="v165" d="M1763 726C1764 727 1769 731 1770 734C1772 737 1773 741 1772 745C1772 748 1768 753 1768 755"/>
<path id="v166" d="M1538 909C1536 909 1528 905 1524 906C1519 907 1516 912 1511 913C1506 914 1501 914 1496 913C1492 912 1486 907 1484 906"/>
<path id="v167" d="M1278 755C1277 754 1273 749 1269 747C1266 745 1261 745 1259 742C1256 739 1254 733 1253 731"/>
<path id="v168" d="M1790 760C1788 759 1784 755 1783 751C1781 748 1782 743 1780 741C1777 738 1772 737 1770 735C1768 732 1767 726 1766 724"/>
<path id="v169" d="M1239 611C1240 611 1244 611 1247 611C1249 612 1252 613 1254 614C1257 614 1261 616 1262 616"/>
<path id="v170" d="M1457 535C1458 534 1461 528 1463 525C1465 522 1468 517 1469 515"/>
<path id="v171" d="M1406 728C1404 729 1399 731 1395 732C1392 733 1388 732 1384 733C1380 733 1375 734 1373 734"/>
<path id="v172" d="M1440 749C1438 748 1432 747 1429 745C1426 743 1423 740 1421 736C1420 733 1422 728 1420 724C1419 721 1413 718 1412 716"/>
<path id="v173" d="M1335 524C1336 526 1340 530 1343 532C1346 534 1349 535 1353 537C1356 538 1361 541 1362 542"/>
<path id="v174" d="M1587 929C1587 928 1589 925 1591 924C1593 922 1596 923 1598 922C1600 921 1602 918 1603 917"/>
<path id="v175" d="M1647 525C1646 525 1643 527 1641 527C1639 527 1637 526 1635 525C1633 524 1630 524 1629 523"/>
<path id="v176" d="M1445 743C1447 743 1452 745 1455 746C1458 747 1463 747 1465 748"/>
<path id="v177" d="M1626 592C1624 592 1619 592 1616 591C1612 591 1609 591 1606 591C1602 591 1597 592 1595 592"/>
<path id="v178" d="M1690 798C1691 797 1694 794 1696 792C1698 790 1700 786 1701 785"/>
<path id="v179" d="M1547 878C1549 879 1554 883 1557 885C1560 888 1563 892 1567 893C1570 894 1577 892 1579 892"/>
<path id="v180" d="M1255 551C1256 552 1258 557 1260 558C1263 560 1267 558 1269 560C1272 561 1272 565 1275 567C1277 569 1281 571 1282 572"/>
<path id="v181" d="M1596 628C1595 629 1595 634 1594 636C1594 639 1594 643 1594 644"/>
<path id="v182" d="M1473 789C1474 789 1478 793 1481 794C1484 795 1489 793 1491 793"/>
<path id="v183" d="M1731 796C1730 794 1726 789 1723 787C1719 785 1713 784 1711 784"/>
<path id="v184" d="M1522 399C1521 401 1518 407 1515 409C1512 411 1505 411 1503 412"/>
<path id="v185" d="M1406 873C1407 871 1410 868 1412 865C1414 863 1415 860 1417 857C1419 854 1422 853 1423 850C1425 847 1425 842 1426 841"/>
<path id="v186" d="M1492 752C1493 755 1494 762 1493 767C1491 771 1487 774 1483 778C1480 781 1475 787 1474 788"/>
<path id="v187" d="M1425 805C1426 806 1429 810 1430 812C1432 815 1434 818 1434 820"/>
<path id="v188" d="M1914 736C1914 737 1912 742 1911 746C1910 749 1909 753 1909 756C1910 759 1913 763 1914 765"/>
<path id="v189" d="M1479 765C1480 767 1484 772 1487 775C1490 778 1494 779 1497 782C1500 785 1504 790 1505 792"/>
<path id="v190" d="M1789 769C1791 771 1794 776 1797 779C1800 782 1804 785 1808 785C1812 786 1817 783 1821 782C1825 781 1830 778 1832 777"/>
<path id="v191" d="M1209 678C1210 677 1213 672 1216 670C1218 668 1223 668 1226 666C1228 664 1229 660 1231 656C1232 653 1233 648 1233 646"/>
<path id="v192" d="M1316 822C1315 824 1313 831 1310 833C1306 836 1300 836 1297 838C1294 841 1293 849 1292 851"/>
<path id="v193" d="M1261 628C1262 628 1265 625 1267 623C1269 622 1272 620 1274 619C1277 619 1281 619 1282 618"/>
<path id="v194" d="M1756 721C1758 721 1762 722 1765 723C1768 723 1772 724 1774 726C1776 728 1776 732 1777 735C1778 738 1780 742 1780 744"/>
<path id="v195" d="M1709 474C1710 472 1714 467 1717 464C1719 460 1721 455 1724 453C1727 450 1734 447 1736 446"/>
<path id="v196" d="M1464 714C1463 712 1462 707 1462 704C1462 701 1462 698 1463 695C1464 692 1467 688 1468 687"/>
<path id="v197" d="M1515 498C1515 500 1514 505 1514 508C1513 512 1516 515 1515 518C1514 521 1509 525 1508 526"/>
<path id="v198" d="M1474 648C1474 647 1475 644 1475 642C1474 640 1473 637 1472 636"/>
<path id="v199" d="M1640 911C1639 913 1633 918 1630 920C1626 923 1622 926 1617 927C1613 928 1606 926 1604 926"/>
<path id="v200" d="M1513 849C1513 846 1511 839 1511 834C1512 829 1514 824 1516 820C1518 816 1523 810 1524 808"/>
<path id="v201" d="M1437 739C1438 737 1440 731 1443 727C1445 724 1449 721 1452 718C1454 714 1459 709 1460 707"/>
<path id="v202" d="M1406 867C1405 865 1404 861 1403 858C1402 855 1401 851 1401 849"/>
<path id="v203" d="M1529 709C1530 710 1534 712 1537 713C1539 715 1542 714 1544 716C1546 718 1548 722 1548 723"/>
<path id="v204" d="M1690 807C1690 805 1691 800 1693 798C1694 795 1698 794 1700 792C1701 789 1702 784 1702 782"/>
<path id="v205" d="M1358 430C1359 432 1362 437 1363 440C1363 444 1362 448 1362 452C1361 455 1359 460 1357 462C1354 465 1348 466 1346 467"/>
<path id="v206" d="M1576 636C1578 636 1582 637 1585 637C1588 637 1591 637 1594 637C1597 637 1602 637 1603 637"/>
<path id="v207" d="M1635 860C1636 859 1639 856 1641 853C1643 851 1646 849 1647 848"/>
<path id="v208" d="M1624 691C1624 690 1624 686 1624 684C1625 682 1626 679 1626 677C1626 675 1626 672 1626 670C1626 668 1624 664 1624 663"/>
<path id="v209" d="M1596 857C1596 856 1593 854 1592 853C1590 853 1587 854 1585 854C1583 854 1581 854 1579 854C1577 854 1574 855 1573 855"/>
<path id="v210" d="M1475 743C1476 741 1474 733 1476 729C1478 725 1486 721 1487 719"/>
<path id="v211" d="M1700 774C1699 774 1695 774 1693 773C1691 772 1689 769 1687 769C1685 768 1681 769 1680 769"/>
<path id="v212" d="M1732 716C1730 715 1726 712 1722 711C1719 710 1715 708 1712 708C1708 708 1703 711 1701 712"/>
<path id="v213" d="M1531 858C1529 858 1525 858 1522 858C1520 859 1516 860 1514 860"/>
<path id="v214" d="M1620 530C1619 530 1616 529 1614 528C1612 527 1609 526 1608 525"/>
<path id="v215" d="M1418 664C1418 663 1420 661 1420 659C1421 657 1421 655 1422 653C1423 651 1426 651 1427 649C1428 647 1428 644 1428 643"/>
<path id="v216" d="M1501 673C1499 672 1495 670 1493 668C1490 665 1490 661 1487 659C1484 658 1481 658 1477 657C1474 656 1469 655 1468 655"/>
<path id="v217" d="M1692 778C1689 778 1682 777 1678 778C1674 780 1670 784 1667 787C1663 789 1659 792 1655 795C1652 798 1648 803 1646 805"/>
<path id="v218" d="M1614 556C1616 555 1621 550 1625 550C1629 549 1634 551 1638 553C1641 554 1647 559 1648 560"/>
<path id="v219" d="M1596 858C1594 856 1589 852 1586 849C1584 845 1582 841 1580 837C1579 833 1578 828 1578 824C1577 820 1577 813 1577 811"/>
<path id="v220" d="M1690 664C1691 662 1695 656 1696 652C1696 648 1694 641 1693 639"/>
<path id="v221" d="M1566 751C1566 749 1567 742 1566 738C1565 733 1563 727 1563 725"/>
<path id="v222" d="M1826 780C1827 783 1827 790 1830 794C1832 798 1838 799 1841 802C1845 805 1848 810 1851 813C1855 815 1862 818 1864 819"/>
<path id="v223" d="M1272 643C1271 645 1266 650 1263 654C1260 658 1258 662 1254 665C1251 668 1246 670 1241 671C1237 673 1230 674 1228 674"/>
<path id="v224" d="M1344 440C1345 439 1350 435 1353 433C1356 431 1360 429 1364 429C1368 428 1372 429 1376 428C1379 427 1384 423 1386 422"/>
<path id="v225" d="M1710 475C1709 475 1706 477 1704 478C1702 479 1699 480 1698 480"/>
<path id="v226" d="M1458 831C1458 829 1459 822 1458 818C1456 815 1451 812 1449 810"/>
<path id="v227" d="M1454 733C1456 733 1460 732 1463 733C1465 734 1468 738 1469 738"/>
<path id="v228" d="M1371 600C1370 601 1365 606 1363 609C1362 613 1363 620 1363 622"/>
<path id="v229" d="M1886 565C1888 566 1893 567 1895 569C1897 570 1898 575 1899 577"/>
<path id="v230" d="M1570 427C1571 428 1574 431 1574 433C1575 435 1574 437 1574 440C1574 442 1574 445 1574 446"/>
<path id="v231" d="M1201 585C1202 587 1206 593 1207 597C1209 601 1209 607 1210 610"/>
<path id="v232" d="M1351 627C1353 626 1359 626 1362 623C1365 621 1366 616 1368 613C1370 610 1373 607 1376 604C1379 602 1385 601 1387 600"/>
<path id="v233" d="M1630 917C1632 917 1636 915 1639 916C1641 916 1645 918 1647 919"/>
<path id="v234" d="M1398 398C1398 397 1399 394 1399 392C1399 390 1398 387 1398 386"/>
<path id="v235" d="M1404 551C1404 549 1406 544 1406 540C1406 537 1403 533 1403 529C1403 526 1406 522 1406 519C1406 515 1404 510 1403 508"/>
<path id="v236" d="M1512 666C1513 668 1514 673 1516 676C1517 680 1519 685 1520 686"/>
<path id="v237" d="M1386 741C1387 742 1389 745 1391 748C1392 750 1394 752 1394 755C1395 758 1395 761 1394 763C1393 766 1390 768 1389 770"/>
<path id="v238" d="M1498 688C1499 690 1503 695 1506 697C1510 699 1514 700 1518 700C1522 701 1528 702 1530 702"/>
<path id="v239" d="M1691 842C1689 842 1683 845 1679 845C1675 845 1671 842 1667 841C1663 839 1656 838 1654 837"/>
<path id="v240" d="M1444 774C1444 773 1443 769 1442 767C1440 765 1439 764 1437 762C1435 761 1431 760 1430 760"/>
<path id="v241" d="M1252 551C1250 551 1246 554 1242 555C1239 556 1235 558 1233 559"/>
<path id="v242" d="M1380 657C1378 655 1372 651 1369 647C1367 643 1365 635 1364 633"/>
<path id="v243" d="M1350 858C1350 856 1353 851 1353 847C1353 844 1350 841 1348 837C1346 834 1344 830 1343 827C1343 823 1343 817 1343 816"/>
<path id="v244" d="M1282 765C1282 767 1281 775 1282 779C1283 784 1287 790 1288 792"/>
<path id="v245" d="M1303 598C1302 599 1299 604 1299 607C1298 610 1298 614 1299 616C1300 619 1304 623 1305 624"/>
<path id="v246" d="M1652 766C1652 767 1653 772 1653 776C1653 779 1653 784 1652 786C1650 789 1647 792 1644 793C1641 795 1635 795 1633 795"/>
<path id="v247" d="M1487 468C1486 466 1483 460 1482 456C1481 452 1481 447 1479 443C1477 439 1472 435 1471 433"/>
<path id="v248" d="M1577 786C1579 786 1584 783 1587 783C1591 782 1594 783 1598 783C1601 783 1605 784 1608 783C1612 782 1616 778 1618 777"/>
<path id="v249" d="M1418 771C1418 770 1417 765 1418 762C1418 759 1421 757 1421 754C1421 751 1418 749 1417 746C1417 743 1416 739 1416 737"/>
<path id="v250" d="M1859 592C1861 590 1865 585 1868 583C1872 581 1878 578 1880 578"/>
<path id="v251" d="M1680 712C1681 713 1683 719 1685 722C1687 726 1692 730 1693 732"/>
<path id="v252" d="M1483 772C1484 770 1487 765 1489 762C1491 758 1492 755 1494 751C1496 748 1499 746 1501 742C1503 739 1504 733 1505 731"/>
<path id="v253" d="M1727 793C1729 793 1734 794 1738 794C1741 794 1746 794 1748 795"/>
<path id="v254" d="M1358 521C1357 521 1352 519 1350 520C1347 521 1346 524 1343 526C1341 528 1337 529 1336 530"/>
<path id="v255" d="M1810 727C1811 728 1813 730 1815 732C1817 734 1818 736 1820 737C1822 738 1825 739 1827 740C1829 742 1833 743 1834 743"/>
<path id="v256" d="M1337 778C1335 779 1328 783 1324 783C1320 784 1313 781 1311 781"/>
<path id="v257" d="M1443 705C1444 707 1447 711 1448 714C1449 717 1448 723 1448 724"/>
<path id="v258" d="M1543 807C1542 805 1540 801 1539 798C1539 795 1541 790 1542 789"/>
<path id="v259" d="M1607 290C1608 291 1613 294 1614 297C1616 300 1616 304 1616 307C1615 311 1612 313 1610 316C1608 319 1605 323 1604 325"/>
<path id="v260" d="M1488 696C1487 697 1486 701 1487 703C1487 706 1490 708 1491 710C1492 712 1492 717 1493 718"/>
<path id="v261" d="M1276 829C1274 829 1270 829 1268 827C1266 826 1265 822 1264 821"/>
<path id="v262" d="M1519 690C1520 690 1523 691 1525 691C1528 692 1530 693 1532 692C1534 692 1537 690 1537 689"/>
<path id="v263" d="M1416 817C1416 819 1419 826 1421 830C1422 834 1426 840 1427 842"/>
<path id="v264" d="M1661 580C1661 581 1661 587 1662 590C1662 594 1662 597 1663 601C1664 604 1666 608 1665 611C1665 614 1661 618 1660 620"/>
<path id="v265" d="M1915 599C1913 599 1908 601 1905 603C1902 604 1899 606 1896 609C1894 611 1890 613 1889 616C1888 619 1888 625 1888 627"/>
<path id="v266" d="M1824 655C1823 655 1817 655 1814 653C1811 652 1807 651 1805 649C1802 646 1802 642 1801 639C1800 635 1799 630 1799 628"/>
<path id="v267" d="M1624 751C1622 751 1617 752 1614 753C1612 755 1609 759 1608 760"/>
<path id="v268" d="M1405 605C1404 605 1401 604 1399 604C1397 603 1396 601 1394 600C1392 599 1389 598 1389 597"/>
<path id="v269" d="M1356 793C1358 793 1363 796 1367 796C1370 796 1375 794 1377 793"/>
<path id="v270" d="M1547 790C1549 789 1554 784 1558 783C1561 782 1566 785 1570 784C1574 783 1579 780 1581 777C1583 774 1583 767 1584 764"/>
<path id="v271" d="M1863 695C1862 695 1859 698 1857 699C1855 700 1852 700 1850 701C1847 701 1844 702 1842 702"/>
<path id="v272" d="M1437 772C1438 771 1440 766 1442 764C1445 762 1449 762 1452 762C1455 762 1459 765 1460 766"/>
<path id="v273" d="M1685 705C1685 703 1685 699 1685 696C1684 693 1682 690 1682 688C1681 685 1681 681 1680 679C1679 676 1675 673 1674 672"/>
<path id="v274" d="M1508 523C1508 524 1509 527 1509 529C1508 531 1506 533 1506 535C1506 537 1507 540 1507 542C1507 544 1507 547 1507 548"/>
<path id="v275" d="M1490 673C1488 674 1482 679 1477 679C1473 679 1469 676 1464 675C1460 674 1453 672 1451 672"/>
<path id="v276" d="M1292 620C1294 620 1298 621 1300 620C1303 619 1306 617 1308 616"/>
<path id="v277" d="M1841 578C1842 577 1847 573 1849 569C1851 566 1852 562 1853 558C1854 554 1855 548 1856 546"/>
<path id="v278" d="M1701 660C1703 659 1708 653 1713 652C1717 651 1724 654 1727 654"/>
<path id="v279" d="M1456 655C1454 656 1449 658 1446 659C1443 661 1439 663 1438 664"/>
<path id="v280" d="M1562 740C1563 738 1562 731 1564 728C1566 725 1573 723 1574 721"/>
<path id="v281" d="M1427 775C1428 775 1432 773 1434 772C1437 772 1441 773 1442 773"/>
<path id="v282" d="M1862 632C1861 633 1861 640 1859 643C1857 647 1853 650 1850 652C1846 653 1839 652 1837 652"/>
<path id="v283" d="M1872 631C1873 630 1875 628 1877 627C1879 626 1880 625 1882 623C1883 622 1885 621 1887 620C1888 618 1890 616 1891 615"/>
<path id="v284" d="M1443 652C1444 654 1444 660 1445 663C1447 667 1451 671 1452 672"/>
<path id="v285" d="M1611 665C1610 663 1609 656 1606 653C1603 650 1598 650 1595 646C1593 643 1594 637 1591 635C1589 632 1582 630 1580 629"/>
<path id="v286" d="M1492 603C1493 603 1495 606 1497 607C1499 608 1501 609 1503 609C1505 609 1507 606 1509 606C1511 606 1514 608 1515 608"/>
<path id="v287" d="M1353 823C1352 822 1348 819 1345 817C1342 815 1339 814 1337 811C1336 808 1335 803 1335 801"/>
<path id="v288" d="M1188 625C1186 626 1180 628 1176 630C1172 631 1167 635 1165 636"/>
<path id="v289" d="M1475 647C1474 648 1470 650 1468 653C1467 655 1466 658 1465 660C1465 663 1464 667 1464 669"/>
<path id="v290" d="M1552 611C1553 610 1559 608 1561 606C1563 603 1563 599 1565 595C1566 592 1567 588 1570 585C1572 583 1578 581 1579 580"/>
<path id="v291" d="M1473 862C1473 863 1472 866 1470 868C1469 869 1468 871 1466 871C1464 872 1461 872 1460 872"/>
<path id="v292" d="M1452 747C1453 746 1454 743 1455 741C1456 739 1458 736 1459 735"/>
<path id="v293" d="M1681 345C1680 344 1679 340 1677 338C1676 336 1673 335 1671 333C1670 331 1669 328 1668 326"/>
<path id="v294" d="M1899 628C1900 630 1902 637 1905 640C1908 643 1912 646 1915 649C1919 651 1926 653 1928 654"/>
<path id="v295" d="M1494 794C1493 793 1490 791 1487 790C1484 789 1482 787 1479 787C1476 788 1473 790 1471 791"/>
<path id="v296" d="M1870 566C1869 566 1866 568 1864 568C1861 569 1859 570 1857 570C1855 570 1852 567 1851 567"/>
<path id="v297" d="M1403 344C1403 345 1404 348 1404 350C1404 352 1403 354 1404 356C1404 358 1404 360 1405 362C1406 364 1409 366 1409 367"/>
<path id="v298" d="M1239 673C1241 673 1246 674 1249 674C1253 675 1257 674 1260 675C1262 676 1265 680 1266 683C1268 685 1267 691 1267 693"/>
<path id="v299" d="M1340 685C1338 685 1333 686 1329 687C1325 687 1320 689 1318 689"/>
<path id="v300" d="M1353 807C1352 809 1346 814 1344 818C1343 822 1344 829 1344 832"/>
<path id="v301" d="M1377 769C1378 771 1380 776 1382 779C1385 782 1388 784 1389 787C1391 790 1390 794 1391 797C1392 800 1396 804 1397 806"/>
<path id="v302" d="M1365 813C1364 814 1361 816 1359 817C1357 818 1354 819 1353 821C1351 822 1349 824 1348 826C1346 828 1345 831 1344 832"/>
<path id="v303" d="M1302 643C1303 645 1305 652 1304 656C1304 660 1301 664 1300 669C1299 673 1298 679 1298 681"/>
<path id="v304" d="M1403 547C1402 548 1399 551 1397 552C1395 554 1393 555 1390 556C1388 556 1385 556 1382 557C1380 558 1377 560 1376 561"/>
<path id="v305" d="M1728 792C1727 794 1724 800 1722 803C1720 807 1718 810 1715 813C1712 816 1706 818 1705 819"/>
<path id="v306" d="M1647 420C1646 421 1643 424 1642 426C1640 428 1639 431 1638 433C1636 435 1635 437 1633 439C1631 441 1628 444 1626 445"/>
<path id="v307" d="M1501 835C1500 835 1497 834 1495 833C1493 831 1491 830 1491 828C1490 826 1490 823 1490 822"/>
<path id="v308" d="M1302 785C1303 786 1305 790 1307 793C1309 795 1313 797 1314 798"/>
<path id="v309" d="M1388 837C1386 837 1380 837 1377 836C1373 835 1370 832 1366 831C1363 830 1358 831 1355 829C1351 828 1348 823 1346 822"/>
<path id="v310" d="M1498 748C1498 747 1498 743 1499 741C1500 739 1503 736 1504 735"/>
<path id="v311" d="M1668 571C1670 572 1674 576 1677 578C1680 580 1685 583 1686 584"/>
<path id="v312" d="M1318 828C1316 828 1309 827 1304 827C1299 827 1294 827 1290 830C1286 832 1284 838 1280 840C1276 843 1268 844 1266 845"/>
<path id="v313" d="M1462 481C1462 479 1463 473 1463 469C1464 465 1464 461 1465 457C1467 454 1471 451 1472 447C1474 444 1474 437 1475 435"/>
<path id="v314" d="M1877 569C1877 567 1876 561 1875 557C1874 554 1874 549 1872 546C1870 543 1864 540 1863 539"/>
<path id="v315" d="M1724 789C1724 790 1722 792 1721 794C1720 796 1720 798 1719 800C1718 801 1716 803 1715 804C1713 806 1711 808 1711 808"/>
<path id="v316" d="M1382 839C1384 839 1391 838 1395 839C1398 841 1403 846 1404 848"/>
<path id="v317" d="M1237 593C1236 595 1235 600 1233 602C1231 605 1226 605 1224 607C1221 608 1217 612 1216 613"/>
<path id="v318" d="M1462 809C1460 809 1454 809 1451 807C1447 805 1444 800 1443 798"/>
<path id="v319" d="M1460 701C1458 700 1454 697 1453 694C1452 691 1453 687 1452 684C1451 681 1448 679 1447 676C1445 673 1443 668 1443 667"/>
<path id="v320" d="M1387 780C1387 782 1385 789 1386 793C1388 797 1392 800 1395 803C1398 806 1402 811 1403 813"/>
<path id="v321" d="M1593 697C1593 696 1594 691 1594 687C1593 684 1591 682 1590 678C1590 675 1592 670 1592 669"/>
<path id="v322" d="M1630 889C1629 888 1626 885 1626 882C1625 880 1626 876 1626 874"/>
<path id="v323" d="M1293 573C1292 575 1288 579 1286 582C1284 585 1280 587 1279 590C1278 593 1279 597 1278 601C1278 605 1277 610 1277 612"/>
<path id="v324" d="M1251 655C1252 656 1256 658 1258 659C1261 659 1264 659 1266 660C1269 661 1272 662 1274 664C1275 666 1276 671 1277 672"/>
<path id="v325" d="M1283 731C1283 733 1285 739 1287 742C1289 746 1292 751 1292 753"/>
<path id="v326" d="M1461 564C1458 564 1451 565 1446 564C1441 563 1437 560 1432 559C1427 558 1422 558 1417 557C1412 557 1405 558 1402 558"/>
<path id="v327" d="M1359 833C1359 830 1358 823 1355 819C1352 814 1348 812 1344 808C1341 805 1336 799 1334 797"/>
<path id="v328" d="M1320 595C1319 595 1316 595 1314 595C1312 596 1311 597 1309 598C1307 599 1306 601 1305 603C1305 605 1306 608 1306 609"/>
<path id="v329" d="M1591 852C1590 853 1586 855 1584 858C1583 860 1584 864 1583 867C1582 869 1579 871 1576 872C1573 874 1568 874 1567 874"/>
<path id="v330" d="M1648 849C1646 847 1642 843 1638 841C1635 840 1630 840 1626 839C1622 838 1619 834 1615 833C1611 833 1605 834 1603 834"/>
<path id="v331" d="M1620 680C1620 678 1620 673 1620 670C1620 667 1620 663 1620 660C1620 657 1620 652 1620 650"/>
<path id="v332" d="M1494 623C1494 621 1492 614 1492 610C1492 605 1496 601 1495 596C1495 592 1490 588 1489 584C1488 580 1490 573 1491 570"/>
<path id="v333" d="M1529 914C1528 915 1524 916 1521 917C1518 918 1515 918 1512 918C1510 919 1506 921 1505 922"/>
<path id="v334" d="M1672 842C1673 841 1678 835 1681 834C1685 833 1690 834 1694 835C1698 837 1703 841 1705 842"/>
<path id="v335" d="M1389 769C1390 768 1395 765 1398 764C1401 762 1405 759 1406 758"/>
<path id="v336" d="M1289 574C1290 573 1293 571 1295 570C1297 569 1300 569 1302 568C1304 567 1307 565 1308 564"/>
<path id="v337" d="M1712 748C1711 747 1709 743 1707 741C1705 738 1702 737 1700 735C1699 733 1697 729 1697 727"/>
<path id="v338" d="M1476 583C1476 584 1478 590 1480 593C1482 596 1485 599 1487 602C1489 605 1493 609 1494 610"/>
<path id="v339" d="M1498 579C1499 578 1502 574 1502 571C1503 568 1502 565 1501 562C1499 560 1497 557 1494 556C1492 555 1487 556 1486 556"/>
<path id="v340" d="M1350 441C1350 440 1349 433 1347 430C1345 427 1342 423 1339 422C1335 420 1330 423 1327 422C1323 421 1319 416 1317 415"/>
<path id="v341" d="M1268 554C1266 553 1261 552 1258 550C1256 548 1253 545 1252 542C1252 539 1253 533 1253 532"/>
<path id="v342" d="M1315 807C1316 805 1318 799 1317 795C1316 791 1313 788 1311 784C1310 780 1308 774 1308 772"/>
<path id="v343" d="M1625 652C1622 652 1614 654 1611 657C1607 660 1606 666 1604 670C1601 674 1598 681 1597 683"/>
<path id="v344" d="M1682 852C1682 849 1679 843 1679 838C1679 834 1682 829 1683 824C1684 820 1684 813 1685 811"/>
<path id="v345" d="M1812 473C1813 475 1812 480 1814 483C1815 486 1818 488 1821 490C1823 492 1827 492 1829 495C1832 497 1833 502 1834 503"/>
<path id="v346" d="M1359 596C1361 596 1369 598 1373 597C1377 596 1381 592 1385 590C1390 589 1397 588 1399 588"/>
<path id="v347" d="M1648 486C1650 485 1656 483 1660 480C1663 477 1666 474 1669 471C1671 467 1671 462 1673 458C1675 455 1680 450 1681 448"/>
<path id="v348" d="M1458 820C1456 820 1450 821 1447 823C1444 824 1439 829 1438 830"/>
<path id="v349" d="M1503 792C1504 794 1507 799 1506 802C1506 806 1503 810 1503 812"/>
<path id="v350" d="M1411 488C1410 489 1408 493 1407 496C1405 498 1402 500 1401 503C1400 505 1399 510 1398 511"/>
<path id="v351" d="M1421 626C1419 626 1414 625 1411 624C1408 624 1403 622 1401 622"/>
<path id="v352" d="M1485 711C1484 712 1481 716 1478 717C1476 718 1471 718 1469 718"/>
<path id="v353" d="M1302 637C1302 636 1304 632 1306 629C1308 627 1311 626 1313 623C1314 620 1314 617 1315 614C1317 611 1319 608 1320 606"/>
<path id="v354" d="M1262 641C1263 643 1264 649 1266 652C1269 655 1273 657 1276 658C1280 659 1284 658 1288 660C1291 661 1296 665 1298 666"/>
<path id="v355" d="M1477 806C1475 807 1471 813 1467 815C1463 817 1458 817 1454 818C1451 820 1447 823 1443 826C1440 828 1434 831 1432 832"/>
<path id="v356" d="M1737 698C1735 698 1729 697 1725 697C1722 697 1717 698 1714 700C1711 702 1709 708 1708 709"/>
<path id="v357" d="M1362 591C1362 592 1362 596 1361 598C1360 599 1359 602 1358 603"/>
<path id="v358" d="M1496 766C1495 765 1489 763 1487 760C1484 758 1483 752 1482 750"/>
<path id="v359" d="M1252 821C1250 822 1244 827 1240 828C1236 830 1231 827 1226 827C1222 828 1216 828 1213 831C1209 833 1206 840 1204 842"/>
<path id="v360" d="M1900 519C1899 519 1896 517 1893 517C1891 518 1888 518 1886 520C1884 521 1883 524 1882 526C1881 529 1881 533 1880 534"/>
<path id="v361" d="M1475 805C1473 804 1470 799 1467 797C1463 796 1457 795 1456 795"/>
<path id="v362" d="M1678 686C1677 685 1673 684 1671 683C1669 683 1667 682 1664 682C1662 681 1658 681 1657 681"/>
<path id="v363" d="M1437 539C1436 541 1435 547 1434 551C1434 554 1434 559 1435 562C1437 566 1441 569 1443 571"/>
<path id="v364" d="M1333 745C1334 743 1340 739 1342 734C1344 730 1344 725 1343 720C1342 716 1338 712 1337 707C1337 703 1338 696 1338 693"/>
<path id="v365" d="M1317 786C1315 785 1309 782 1305 779C1301 776 1298 772 1294 770C1290 768 1285 770 1280 769C1276 768 1269 766 1266 766"/>
<path id="v366" d="M1289 783C1291 783 1295 783 1298 782C1300 780 1302 778 1304 776C1306 773 1308 771 1310 769C1312 766 1316 764 1317 763"/>
<path id="v367" d="M1380 769C1382 769 1385 772 1387 772C1390 773 1393 773 1395 772C1398 772 1400 771 1403 770C1405 769 1408 767 1410 767"/>
<path id="v368" d="M1267 520C1267 523 1267 530 1266 535C1265 540 1263 544 1261 549C1260 554 1259 559 1259 564C1259 568 1262 576 1262 578"/>
<path id="v369" d="M1518 640C1517 637 1516 630 1514 625C1512 621 1507 615 1506 613"/>
<path id="v370" d="M1383 620C1385 618 1389 613 1392 610C1396 607 1401 607 1404 604C1406 601 1408 593 1408 591"/>
<path id="v371" d="M1604 891C1603 890 1597 891 1595 889C1592 888 1590 885 1588 882C1587 879 1587 875 1586 872C1585 869 1582 865 1581 864"/>
<path id="v372" d="M1350 877C1351 875 1352 869 1353 865C1355 861 1358 857 1361 854C1364 851 1368 848 1372 847C1376 846 1383 849 1385 849"/>
<path id="v373" d="M1371 452C1373 453 1377 455 1379 457C1381 460 1384 464 1385 465"/>
<path id="v374" d="M1656 736C1654 735 1649 729 1644 729C1640 728 1633 731 1630 731"/>
<path id="v375" d="M1484 679C1484 678 1485 675 1485 673C1485 671 1484 670 1483 668C1483 666 1482 663 1482 662"/>
<path id="v376" d="M1672 651C1673 652 1676 655 1678 656C1680 657 1684 657 1685 657"/>
<path id="v377" d="M1592 659C1590 658 1584 658 1581 657C1577 656 1572 653 1571 652"/>
<path id="v378" d="M1594 714C1594 715 1591 718 1590 720C1589 722 1589 724 1588 727C1587 729 1587 731 1587 733C1586 735 1585 739 1585 740"/>
<path id="v379" d="M1764 763C1763 761 1758 756 1755 752C1753 748 1752 742 1749 739C1746 736 1738 734 1736 733"/>
<path id="v380" d="M1432 660C1431 662 1426 667 1424 671C1422 675 1419 680 1419 684C1419 689 1423 695 1424 698"/>
<path id="v381" d="M1334 826C1335 826 1339 825 1341 825C1344 825 1346 826 1348 828C1350 829 1352 831 1353 833C1355 835 1357 838 1358 839"/>
<path id="v382" d="M1244 711C1245 711 1251 709 1253 706C1255 704 1254 699 1256 696C1258 693 1262 691 1265 690C1268 688 1273 687 1275 686"/>
<path id="v383" d="M1393 696C1393 698 1395 702 1396 705C1397 708 1399 711 1399 715C1400 718 1399 721 1399 725C1399 728 1399 733 1399 734"/>
<path id="v384" d="M1322 414C1322 415 1322 419 1321 420C1320 422 1319 424 1317 425C1315 426 1312 426 1311 427"/>
<path id="v385" d="M1405 721C1406 719 1411 714 1412 710C1414 706 1414 699 1414 697"/>
<path id="v386" d="M1410 476C1408 476 1401 477 1397 478C1392 478 1386 479 1383 479"/>
<path id="v387" d="M1441 681C1440 680 1435 678 1432 677C1428 677 1425 677 1421 676C1418 676 1415 675 1411 675C1408 675 1403 677 1402 678"/>
<path id="v388" d="M1419 857C1417 857 1411 856 1408 857C1404 858 1402 861 1398 862C1395 863 1389 861 1387 861"/>
<path id="v389" d="M1580 675C1579 676 1574 678 1572 679C1569 681 1566 683 1565 686C1563 689 1562 694 1561 695"/>
<path id="v390" d="M1834 487C1833 488 1828 492 1827 496C1825 499 1824 503 1824 507C1825 510 1828 515 1829 517"/>
<path id="v391" d="M1406 839C1405 838 1404 835 1403 833C1403 831 1401 827 1401 826"/>
<path id="v392" d="M1209 750C1208 751 1204 751 1202 752C1199 752 1197 753 1195 753C1192 753 1189 750 1188 750"/>
<path id="v393" d="M1553 616C1552 617 1549 621 1549 624C1548 627 1550 631 1551 633"/>
<path id="v394" d="M1531 801C1529 801 1524 802 1521 802C1518 802 1514 801 1511 802C1509 803 1506 807 1503 807C1500 808 1495 805 1494 805"/>
<path id="v395" d="M1312 731C1311 733 1309 740 1306 744C1303 747 1298 748 1293 750C1289 751 1282 750 1279 750"/>
<path id="v396" d="M1640 849C1642 849 1649 851 1653 852C1657 852 1662 850 1667 852C1671 853 1676 857 1678 859"/>
<path id="v397" d="M1743 768C1744 770 1745 777 1746 781C1748 786 1750 792 1750 794"/>
<path id="v398" d="M1547 769C1546 770 1542 774 1539 775C1536 777 1531 778 1530 778"/>
<path id="v399" d="M1212 763C1212 761 1213 754 1212 750C1211 746 1207 740 1206 738"/>
<path id="v400" d="M1522 884C1520 884 1513 884 1508 883C1504 883 1497 881 1494 880"/>
<path id="v401" d="M1665 876C1666 875 1671 875 1673 874C1676 873 1679 870 1680 869"/>
<path id="v402" d="M1683 731C1682 731 1678 731 1676 729C1674 728 1673 725 1671 723C1669 722 1664 722 1663 721"/>
<path id="v403" d="M1647 748C1648 747 1652 743 1653 740C1655 736 1654 732 1655 729C1655 725 1656 722 1657 719C1659 716 1664 712 1665 711"/>
<path id="v404" d="M1302 550C1303 551 1307 554 1308 557C1310 559 1309 563 1311 566C1312 569 1316 571 1317 573"/>
<path id="v405" d="M1263 740C1263 739 1264 734 1264 732C1263 729 1262 727 1260 725C1259 723 1256 721 1254 720C1252 719 1248 719 1246 719"/>
<path id="v406" d="M1320 688C1320 686 1321 680 1322 677C1324 674 1328 670 1329 668"/>
<path id="v407" d="M1337 686C1335 687 1331 692 1327 694C1324 697 1321 700 1317 701C1313 702 1307 699 1305 698"/>
<path id="v408" d="M1582 780C1583 779 1588 775 1592 773C1596 770 1601 767 1603 766"/>
<path id="v409" d="M1274 867C1273 868 1271 870 1269 871C1267 872 1265 874 1264 875C1262 877 1261 880 1260 881"/>
<path id="v410" d="M1575 537C1574 537 1571 534 1569 534C1567 533 1563 534 1562 534"/>
<path id="v411" d="M1309 523C1310 524 1313 529 1315 532C1318 535 1319 539 1322 541C1324 543 1330 544 1332 544"/>
<path id="v412" d="M1446 726C1445 726 1441 726 1438 727C1436 729 1433 730 1431 732C1429 735 1428 737 1427 740C1425 742 1423 746 1422 747"/>
<path id="v413" d="M1706 439C1705 441 1701 448 1698 450C1695 453 1687 453 1685 454"/>
<path id="v414" d="M1611 889C1611 890 1611 893 1611 895C1611 897 1610 899 1609 901C1608 902 1606 905 1605 905"/>
<path id="v415" d="M1400 593C1399 593 1394 594 1392 593C1390 592 1388 588 1386 587C1383 586 1379 586 1378 586"/>
<path id="v416" d="M1869 584C1869 585 1868 590 1869 593C1870 596 1874 598 1875 601C1875 604 1874 609 1873 610"/>
<path id="v417" d="M1773 608C1772 609 1768 616 1765 619C1761 622 1753 623 1751 623"/>
<path id="v418" d="M1563 649C1562 647 1558 642 1555 639C1551 635 1548 632 1544 631C1539 629 1535 631 1530 631C1526 632 1519 633 1517 634"/>
<path id="v419" d="M1333 690C1335 689 1339 683 1343 680C1346 678 1353 677 1356 676"/>
<path id="v420" d="M1289 681C1290 681 1292 684 1294 685C1296 686 1299 687 1301 687C1304 688 1307 689 1308 690"/>
<path id="v421" d="M1621 711C1621 712 1621 718 1622 722C1623 726 1624 729 1626 733C1628 736 1630 740 1633 742C1635 745 1641 747 1642 749"/>
<path id="v422" d="M1517 832C1517 833 1516 836 1516 838C1515 840 1515 842 1513 844C1512 845 1510 846 1508 847C1506 848 1503 849 1502 849"/>
<path id="v423" d="M1271 540C1270 538 1265 534 1262 533C1258 532 1254 534 1250 534C1246 535 1240 536 1238 537"/>
<path id="v424" d="M1911 700C1914 700 1921 697 1925 697C1929 698 1934 700 1938 703C1941 706 1944 713 1946 715"/>
<path id="v425" d="M1408 740C1405 740 1398 739 1393 739C1389 738 1384 736 1379 737C1375 737 1368 741 1366 742"/>
<path id="v426" d="M1858 721C1855 720 1849 716 1845 716C1840 716 1834 720 1832 721"/>
<path id="v427" d="M1678 750C1680 751 1687 753 1692 753C1696 753 1701 749 1705 749C1710 748 1717 751 1719 752"/>
<path id="v428" d="M1349 554C1348 552 1347 547 1346 543C1344 540 1342 535 1341 533"/>
<path id="v429" d="M1367 631C1367 632 1369 638 1371 641C1372 644 1373 648 1375 651C1377 654 1381 657 1383 658"/>
<path id="v430" d="M1730 695C1732 694 1738 691 1741 689C1744 687 1747 684 1751 683C1754 681 1758 679 1761 678C1765 676 1770 674 1772 673"/>
<path id="v431" d="M1313 832C1312 832 1309 832 1307 830C1305 829 1304 827 1303 825C1301 823 1300 822 1298 821C1296 819 1294 817 1293 816"/>
<path id="v432" d="M1561 634C1563 633 1569 630 1574 629C1578 628 1582 628 1587 628C1591 628 1598 629 1600 629"/>
<path id="v433" d="M1535 800C1536 799 1538 797 1540 795C1541 794 1543 792 1543 790C1543 788 1542 784 1542 783"/>
<path id="v434" d="M1593 734C1595 735 1599 738 1602 740C1605 742 1610 744 1612 745"/>
<path id="v435" d="M1591 882C1591 881 1591 876 1590 873C1589 869 1588 865 1587 863"/>
<path id="v436" d="M1316 647C1314 648 1308 649 1305 651C1302 653 1300 656 1297 659C1294 661 1290 663 1287 666C1284 668 1281 673 1279 675"/>
<path id="v437" d="M1426 704C1426 706 1424 713 1421 716C1419 720 1414 722 1411 724C1407 727 1402 732 1400 733"/>
<path id="v438" d="M1687 615C1689 615 1695 614 1698 613C1702 611 1705 609 1708 607C1711 605 1716 603 1718 602"/>
<path id="v439" d="M1595 491C1597 491 1604 490 1608 489C1612 488 1616 486 1620 484C1624 483 1630 480 1632 480"/>
<path id="v440" d="M1330 719C1332 719 1337 717 1341 715C1344 714 1349 713 1351 712"/>
<path id="v441" d="M1707 658C1706 658 1701 656 1698 656C1696 657 1693 660 1690 660C1687 660 1684 658 1681 656C1679 655 1677 651 1676 649"/>
<path id="v442" d="M1600 573C1601 573 1606 576 1610 576C1613 576 1616 572 1619 572C1622 571 1628 572 1629 573"/>
<path id="v443" d="M1318 551C1317 551 1314 552 1312 552C1310 553 1308 554 1306 555C1304 556 1302 557 1300 558C1299 560 1298 563 1298 564"/>
<path id="v444" d="M1382 755C1383 754 1388 749 1390 745C1392 741 1391 736 1393 733C1395 729 1399 726 1403 725C1407 723 1414 725 1416 726"/>
<path id="v445" d="M1538 710C1537 711 1534 715 1531 717C1529 719 1525 720 1523 723C1521 725 1519 730 1518 731"/>
<path id="v446" d="M1758 751C1759 752 1763 756 1766 756C1769 757 1772 756 1775 755C1778 755 1782 755 1784 753C1787 752 1790 748 1791 747"/>
<path id="v447" d="M1406 741C1403 742 1397 744 1393 745C1388 745 1383 743 1379 745C1375 746 1371 753 1369 754"/>
<path id="v448" d="M1394 801C1392 802 1388 805 1385 806C1382 807 1378 805 1376 807C1373 808 1370 811 1368 812C1365 814 1361 817 1360 818"/>
<path id="v449" d="M1559 913C1559 915 1559 921 1559 925C1559 929 1560 933 1560 936C1560 940 1561 944 1560 948C1560 952 1558 957 1557 959"/>
<path id="v450" d="M1603 640C1605 641 1610 645 1614 646C1618 646 1623 645 1626 643C1630 641 1632 634 1634 633"/>
<path id="v451" d="M1262 853C1262 855 1260 860 1258 862C1256 865 1251 868 1250 869"/>
<path id="v452" d="M1714 611C1715 611 1720 610 1723 611C1726 611 1729 613 1732 614C1735 614 1740 613 1741 613"/>
<path id="v453" d="M1525 813C1525 812 1524 809 1524 807C1524 805 1525 803 1526 801C1526 799 1525 796 1526 794C1526 792 1528 789 1528 788"/>
<path id="v454" d="M1344 843C1341 843 1333 845 1329 843C1325 842 1322 836 1318 833C1314 831 1308 828 1305 827"/>
<path id="v455" d="M1647 633C1646 634 1642 634 1640 635C1637 636 1635 638 1634 640C1632 642 1632 646 1632 647"/>
<path id="v456" d="M1309 596C1308 597 1305 599 1303 600C1301 601 1298 602 1296 603C1294 605 1291 607 1290 607"/>
<path id="v457" d="M1599 725C1600 722 1602 716 1604 712C1606 708 1612 706 1613 702C1615 698 1615 693 1614 689C1612 685 1607 680 1606 678"/>
<path id="v458" d="M1206 662C1208 663 1215 664 1219 666C1223 667 1228 670 1230 674C1233 677 1234 683 1237 687C1239 690 1244 695 1246 697"/>
<path id="v459" d="M1394 562C1395 560 1396 553 1398 550C1399 546 1401 541 1405 539C1408 536 1413 536 1417 535C1421 534 1427 533 1430 533"/>
<path id="v460" d="M1622 909C1624 908 1630 905 1632 903C1634 900 1635 895 1635 891C1635 887 1633 881 1633 880"/>
<path id="v461" d="M1345 622C1346 621 1351 617 1354 616C1357 615 1361 615 1365 615C1369 615 1374 614 1376 614"/>
<path id="v462" d="M1686 748C1688 748 1692 751 1694 753C1697 755 1699 757 1701 760C1702 762 1703 767 1703 769"/>
<path id="v463" d="M1573 771C1572 771 1566 772 1563 770C1560 769 1556 765 1554 764"/>
<path id="v464" d="M1783 753C1782 754 1781 759 1778 761C1776 762 1773 762 1770 763C1768 764 1764 765 1762 766"/>
<path id="v465" d="M1395 646C1395 648 1393 654 1393 658C1393 661 1394 666 1393 669C1392 673 1388 677 1387 679"/>
<path id="v466" d="M1258 847C1257 849 1253 854 1251 858C1249 861 1248 865 1247 869C1245 873 1242 879 1242 881"/>
<path id="v467" d="M1725 737C1723 736 1719 735 1716 733C1714 732 1712 729 1711 726C1710 723 1710 719 1709 717"/>
<path id="v468" d="M1345 550C1346 549 1349 546 1352 546C1354 545 1357 546 1360 546C1362 546 1365 547 1368 548C1370 549 1373 552 1374 553"/>
<path id="v469" d="M1869 804C1869 802 1871 797 1871 794C1871 790 1870 787 1869 784C1868 780 1866 777 1863 775C1861 772 1856 770 1854 769"/>
<path id="v470" d="M1267 787C1267 786 1266 782 1267 780C1267 777 1270 776 1271 773C1271 771 1270 767 1270 766"/>
<path id="v471" d="M1274 841C1274 842 1275 848 1274 851C1274 854 1272 857 1270 860C1269 863 1269 867 1267 869C1265 871 1260 872 1258 873"/>
<path id="v472" d="M1589 556C1591 558 1596 563 1600 565C1604 567 1609 566 1613 568C1617 569 1623 573 1625 574"/>
<path id="v473" d="M1676 506C1677 508 1681 514 1685 516C1688 518 1694 518 1698 520C1702 521 1706 523 1711 524C1715 526 1721 530 1723 531"/>
<path id="v474" d="M1358 825C1357 827 1355 832 1353 835C1351 837 1349 841 1346 843C1344 844 1339 843 1336 845C1334 847 1331 852 1330 853"/>
<path id="v475" d="M1572 846C1572 847 1571 852 1571 855C1572 858 1573 861 1575 863C1576 866 1579 870 1580 871"/>
<path id="v476" d="M1248 848C1247 848 1242 848 1239 848C1237 848 1233 847 1231 847C1228 848 1224 850 1222 851"/>
<path id="v477" d="M1623 658C1625 659 1631 661 1633 663C1635 666 1636 670 1636 674C1637 677 1636 683 1636 684"/>
<path id="v478" d="M1636 873C1637 871 1642 867 1643 863C1645 860 1644 854 1644 852"/>
<path id="v479" d="M1569 699C1570 698 1575 696 1577 694C1579 692 1580 687 1581 686"/>
<path id="v480" d="M1919 711C1918 712 1915 714 1913 716C1911 718 1911 721 1909 723C1907 724 1904 724 1902 725C1899 726 1896 727 1894 727"/>
<path id="v481" d="M1355 794C1352 795 1345 796 1340 797C1335 797 1331 798 1326 799C1321 799 1316 798 1311 799C1307 800 1301 805 1298 806"/>
<path id="v482" d="M1651 764C1649 765 1643 766 1639 766C1636 765 1631 760 1629 759"/>
<path id="v483" d="M1251 572C1252 574 1253 579 1255 582C1257 586 1260 588 1262 591C1263 595 1263 599 1264 603C1265 606 1265 612 1265 614"/>
<path id="v484" d="M1474 612C1473 611 1470 608 1468 607C1466 605 1464 604 1461 603C1459 602 1455 602 1454 601"/>
<path id="v485" d="M1226 807C1224 806 1219 801 1214 799C1210 797 1203 796 1200 795"/>
<path id="v486" d="M1394 878C1392 878 1385 878 1381 877C1377 876 1373 873 1370 871C1367 868 1365 863 1362 860C1360 857 1355 852 1354 851"/>
<path id="v487" d="M1647 381C1646 379 1643 372 1641 368C1640 363 1639 356 1638 353"/>
<path id="v488" d="M1573 640C1575 639 1579 635 1581 632C1582 629 1581 623 1581 621"/>
<path id="v489" d="M1712 785C1712 784 1713 781 1713 779C1714 777 1715 774 1716 773"/>
<path id="v490" d="M1637 795C1636 794 1634 792 1632 791C1631 790 1630 788 1628 786C1627 785 1625 784 1623 782C1622 781 1621 778 1621 777"/>
<path id="v491" d="M1462 733C1460 733 1453 732 1449 734C1446 736 1443 742 1441 744"/>
<path id="v492" d="M1621 590C1619 588 1614 583 1610 581C1605 579 1598 579 1595 579"/>
<path id="v493" d="M1543 704C1541 705 1536 706 1533 708C1530 709 1526 712 1525 713"/>
<path id="v494" d="M1708 714C1706 715 1701 719 1699 722C1697 725 1696 730 1697 733C1698 737 1702 741 1703 743"/>
<path id="v495" d="M1280 579C1278 578 1271 573 1267 572C1262 572 1257 575 1253 577C1248 579 1243 581 1239 583C1234 585 1228 588 1225 589"/>
<path id="v496" d="M1527 362C1527 363 1528 367 1527 370C1527 372 1526 375 1525 377C1524 379 1521 382 1521 383"/>
<path id="v497" d="M1792 488C1794 489 1800 490 1804 491C1807 493 1811 496 1815 496C1819 497 1823 495 1827 496C1831 497 1836 500 1838 501"/>
<path id="v498" d="M1418 844C1419 842 1419 836 1420 833C1421 830 1424 828 1426 825C1428 823 1430 820 1432 817C1434 814 1437 810 1438 809"/>
<path id="v499" d="M1744 794C1743 796 1740 802 1737 804C1734 807 1727 808 1726 808"/>
<path id="v500" d="M1508 708C1509 706 1511 700 1512 696C1514 692 1515 688 1516 684C1518 680 1520 677 1521 673C1522 669 1522 662 1523 660"/>
<path id="v501" d="M1492 610C1493 610 1497 610 1499 609C1502 608 1504 607 1506 606C1509 606 1511 605 1514 605C1516 605 1520 605 1521 605"/>
<path id="v502" d="M1341 847C1341 848 1342 852 1343 854C1345 856 1347 859 1349 860C1351 860 1356 860 1357 860"/>
<path id="v503" d="M1433 676C1435 677 1441 679 1444 682C1446 685 1448 690 1448 693C1447 697 1443 701 1443 705C1442 709 1444 715 1444 717"/>
<path id="v504" d="M1592 679C1592 678 1590 673 1588 670C1587 667 1585 665 1583 662C1581 659 1581 656 1579 653C1577 650 1574 647 1573 645"/>
<path id="v505" d="M1615 786C1615 787 1614 792 1615 795C1615 797 1618 801 1619 803"/>
<path id="v506" d="M1602 646C1601 647 1597 651 1596 653C1594 656 1593 660 1592 662C1590 664 1585 667 1584 668"/>
<path id="v507" d="M1463 588C1462 587 1461 582 1460 579C1459 575 1457 572 1457 569C1456 565 1458 560 1458 558"/>
<path id="v508" d="M1732 801C1730 802 1725 807 1721 808C1717 809 1713 806 1709 806C1705 807 1699 809 1697 810"/>
<path id="v509" d="M1223 702C1224 704 1225 711 1228 715C1231 718 1236 720 1239 723C1243 726 1245 730 1248 733C1252 737 1257 741 1258 743"/>
<path id="v510" d="M1295 852C1293 851 1288 847 1285 844C1283 841 1279 835 1278 834"/>
<path id="v511" d="M1583 587C1584 585 1586 579 1589 576C1592 573 1598 570 1600 569"/>
<path id="v512" d="M1541 348C1542 348 1546 345 1549 345C1551 345 1555 347 1556 348"/>
<path id="v513" d="M1448 762C1450 760 1456 756 1459 753C1461 749 1461 743 1463 740C1465 736 1470 734 1473 730C1476 727 1480 721 1481 719"/>
<path id="v514" d="M1898 662C1897 662 1895 665 1894 666C1892 668 1890 669 1889 669C1887 670 1885 671 1883 671C1881 671 1878 670 1877 670"/>
<path id="v515" d="M1573 769C1575 771 1580 774 1582 777C1584 781 1582 785 1584 789C1585 793 1588 798 1589 799"/>
<path id="v516" d="M1899 700C1899 698 1896 692 1895 688C1895 684 1896 677 1896 675"/>
<path id="v517" d="M1555 553C1557 553 1561 556 1564 557C1567 559 1572 561 1573 562"/>
<path id="v518" d="M1303 714C1303 712 1301 706 1302 703C1303 699 1305 695 1307 692C1310 689 1312 686 1316 684C1319 682 1325 681 1327 681"/>
<path id="v519" d="M1470 615C1470 614 1470 609 1469 607C1467 605 1465 604 1462 602C1460 601 1456 600 1455 600"/>
<path id="v520" d="M1250 748C1248 747 1242 744 1238 744C1234 743 1228 745 1225 746"/>
<path id="v521" d="M1418 496C1417 495 1415 490 1415 488C1415 485 1417 482 1419 481C1421 479 1425 478 1426 477"/>
<path id="v522" d="M1340 760C1341 758 1341 751 1343 748C1345 744 1350 742 1352 738C1353 735 1353 728 1353 725"/>
<path id="v523" d="M1207 669C1209 668 1215 666 1219 663C1222 661 1225 658 1228 655C1232 652 1237 648 1239 647"/>
<path id="v524" d="M1347 692C1346 693 1343 696 1340 698C1338 700 1333 701 1331 701"/>
<path id="v525" d="M1299 852C1299 851 1297 847 1298 844C1299 842 1303 839 1304 838"/>
<path id="v526" d="M1499 777C1498 776 1494 771 1492 769C1489 767 1486 765 1483 763C1480 761 1476 757 1475 756"/>
<path id="v527" d="M1238 772C1239 771 1242 769 1244 768C1246 767 1248 767 1250 765C1252 764 1255 762 1256 762"/>
<path id="v528" d="M1467 747C1466 749 1462 754 1459 757C1455 760 1451 761 1448 764C1445 767 1443 772 1440 774C1436 777 1430 780 1429 782"/>
<path id="v529" d="M1541 579C1543 578 1548 576 1551 577C1553 578 1557 582 1558 583"/>
<path id="v530" d="M1469 645C1470 646 1475 649 1478 651C1481 653 1487 654 1489 655"/>
<path id="v531" d="M1810 651C1811 649 1817 645 1819 642C1821 638 1821 633 1821 629C1821 625 1820 618 1820 616"/>
<path id="v532" d="M1758 791C1760 792 1766 794 1769 796C1773 797 1776 801 1780 803C1783 805 1787 807 1791 807C1795 807 1801 803 1803 802"/>
<path id="v533" d="M1569 790C1570 791 1575 795 1577 798C1578 801 1578 805 1579 808C1580 812 1583 815 1583 818C1583 822 1580 827 1579 829"/>
<path id="v534" d="M1464 349C1463 348 1457 345 1454 342C1451 340 1450 336 1448 333C1446 329 1444 325 1442 322C1439 319 1434 316 1433 314"/>
<path id="v535" d="M1430 699C1432 699 1435 699 1438 699C1440 698 1442 698 1445 698C1447 698 1451 698 1452 699"/>
<path id="v536" d="M1208 596C1208 598 1205 604 1204 608C1202 612 1200 618 1199 620"/>
<path id="v537" d="M1570 785C1569 783 1565 777 1563 773C1562 769 1561 762 1561 759"/>
<path id="v538" d="M1714 767C1715 768 1716 771 1716 773C1717 776 1716 778 1716 780C1716 783 1717 786 1717 787"/>
<path id="v539" d="M1357 828C1356 828 1352 829 1350 829C1347 828 1344 826 1342 826"/>
<path id="v540" d="M1756 756C1757 754 1758 750 1761 748C1763 746 1766 745 1769 744C1772 744 1777 745 1779 745"/>
<path id="v541" d="M1332 786C1331 789 1329 796 1326 800C1324 804 1319 807 1317 811C1314 815 1311 822 1310 824"/>
<path id="v542" d="M1500 744C1500 742 1499 737 1500 733C1501 730 1504 727 1506 724C1508 722 1511 719 1513 716C1514 713 1515 707 1515 706"/>
<path id="v543" d="M1230 569C1229 569 1224 568 1220 569C1217 569 1214 570 1211 571C1207 572 1204 574 1201 574C1198 574 1194 570 1192 570"/>
<path id="v544" d="M1582 730C1581 731 1577 733 1575 734C1572 736 1571 739 1568 740C1566 742 1563 743 1560 744C1557 744 1552 745 1551 746"/>
<path id="v545" d="M1496 819C1495 819 1492 820 1490 820C1488 820 1486 821 1484 822C1482 823 1480 824 1478 824C1476 824 1473 822 1472 821"/>
<path id="v546" d="M1339 693C1340 695 1342 700 1345 702C1347 705 1352 705 1354 707C1357 710 1357 714 1360 716C1362 719 1366 723 1367 724"/>
<path id="v547" d="M1334 743C1332 742 1326 737 1322 735C1317 734 1312 735 1308 734C1303 732 1299 730 1295 727C1291 725 1286 720 1284 718"/>
<path id="v548" d="M1352 604C1353 605 1356 609 1357 612C1357 615 1355 619 1354 621"/>
<path id="v549" d="M1468 414C1470 413 1476 411 1480 408C1483 406 1487 402 1488 398C1490 394 1489 389 1488 385C1487 381 1482 375 1480 374"/>
<path id="v550" d="M1580 583C1581 582 1583 579 1585 577C1586 575 1589 575 1591 573C1593 572 1596 570 1598 569C1600 567 1602 565 1603 564"/>
<path id="v551" d="M1254 765C1257 766 1264 768 1268 767C1272 766 1276 763 1280 761C1284 758 1287 755 1291 753C1295 751 1302 749 1304 748"/>
<path id="v552" d="M1562 789C1563 791 1567 796 1568 799C1568 803 1569 807 1568 811C1567 815 1562 819 1561 821"/>
<path id="v553" d="M1541 770C1540 769 1537 764 1535 761C1532 759 1527 757 1525 756"/>
<path id="v554" d="M1428 683C1429 683 1433 684 1435 683C1437 683 1438 680 1440 679C1442 678 1445 678 1446 678"/>
<path id="v555" d="M1639 821C1641 821 1646 821 1650 822C1654 822 1657 823 1661 824C1665 824 1669 825 1672 824C1676 824 1681 820 1683 819"/>
<path id="v556" d="M1489 650C1488 650 1483 649 1480 648C1477 647 1473 644 1471 643"/>
<path id="v557" d="M1478 560C1477 560 1474 562 1471 562C1469 562 1466 561 1464 562C1461 562 1459 563 1456 563C1454 563 1450 561 1449 561"/>
<path id="v558" d="M1615 685C1616 687 1618 690 1619 693C1620 696 1620 699 1620 702C1620 705 1619 709 1619 710"/>
<path id="v559" d="M1236 691C1238 690 1245 689 1249 687C1252 685 1256 683 1259 681C1263 678 1265 674 1267 671C1270 667 1274 662 1275 661"/>
<path id="v560" d="M1490 866C1492 866 1499 865 1504 864C1508 864 1514 863 1518 865C1522 866 1526 873 1528 875"/>
<path id="v561" d="M1696 462C1697 464 1698 470 1699 474C1700 478 1703 483 1703 485"/>
<path id="v562" d="M1543 588C1545 587 1551 582 1555 580C1559 577 1565 573 1567 572"/>
<path id="v563" d="M1565 694C1564 694 1559 697 1556 697C1554 697 1551 695 1548 694C1545 693 1540 692 1539 692"/>
<path id="v564" d="M1698 750C1696 750 1691 752 1689 754C1687 756 1686 759 1686 762C1685 765 1687 768 1688 771C1690 774 1693 778 1694 779"/>
<path id="v565" d="M1535 739C1534 740 1533 744 1533 746C1534 748 1535 751 1537 753C1538 755 1540 757 1542 758C1545 759 1549 758 1550 758"/>
<path id="v566" d="M1510 712C1510 710 1509 707 1508 705C1507 703 1504 702 1503 700C1502 698 1501 694 1501 693"/>
<path id="v567" d="M1439 742C1439 740 1440 735 1439 732C1439 729 1438 726 1437 723C1435 720 1432 716 1431 715"/>
<path id="v568" d="M1869 684C1869 687 1870 693 1870 697C1869 701 1868 707 1868 709"/>
<path id="v569" d="M1743 752C1744 753 1747 756 1749 758C1751 760 1752 763 1754 764C1757 766 1761 766 1763 766"/>
<path id="v570" d="M1769 816C1767 817 1761 819 1757 820C1753 821 1747 822 1745 822"/>
<path id="v571" d="M1253 846C1252 845 1249 840 1247 838C1244 836 1240 837 1237 835C1234 834 1230 831 1229 830"/>
<path id="v572" d="M1868 538C1867 540 1864 545 1863 548C1862 551 1860 557 1860 558"/>
<path id="v573" d="M1275 528C1274 526 1267 521 1265 517C1263 513 1263 506 1262 503"/>
<path id="v574" d="M1717 708C1717 706 1720 701 1721 697C1723 693 1725 688 1725 686"/>
<path id="v575" d="M1454 626C1456 626 1460 628 1463 629C1467 630 1470 630 1473 632C1476 633 1480 635 1482 636"/>
<path id="v576" d="M1551 835C1551 834 1551 829 1551 827C1552 824 1554 821 1555 819C1555 816 1553 812 1553 810"/>
<path id="v577" d="M1873 626C1872 625 1870 620 1869 617C1867 614 1867 611 1865 608C1863 605 1862 601 1859 600C1857 598 1851 597 1850 597"/>
<path id="v578" d="M1221 684C1220 685 1219 689 1218 692C1216 694 1214 696 1212 697C1210 699 1207 700 1205 701C1203 703 1200 706 1199 707"/>
<path id="v579" d="M1371 586C1369 586 1364 584 1360 584C1357 584 1353 585 1349 585C1346 584 1341 581 1339 581"/>
<path id="v580" d="M1703 624C1702 622 1700 619 1698 617C1696 615 1693 614 1691 613C1689 611 1687 609 1685 607C1684 605 1684 600 1684 599"/>
<path id="v581" d="M1574 942C1574 940 1575 933 1577 929C1578 925 1580 919 1581 917"/>
<path id="v582" d="M1316 598C1315 598 1310 595 1307 594C1304 594 1301 594 1298 595C1295 596 1291 599 1289 599"/>
<path id="v583" d="M1681 572C1681 574 1682 581 1684 584C1685 588 1689 590 1691 593C1694 597 1697 601 1699 603"/>
<path id="v584" d="M1282 695C1284 696 1290 697 1293 698C1297 700 1300 702 1304 703C1307 705 1312 705 1314 708C1317 710 1319 716 1320 718"/>
<path id="v585" d="M1606 765C1605 766 1603 769 1601 771C1600 773 1598 776 1598 779C1598 781 1600 785 1601 786"/>
<path id="v586" d="M1580 713C1582 711 1587 706 1588 702C1590 698 1587 692 1588 688C1590 683 1594 677 1595 675"/>
<path id="v587" d="M1593 541C1595 542 1601 546 1605 549C1609 551 1614 552 1617 555C1620 558 1621 564 1622 568C1622 573 1620 580 1620 582"/>
<path id="v588" d="M1451 665C1449 663 1443 659 1440 655C1437 652 1434 647 1431 643C1428 640 1424 636 1421 633C1418 629 1415 622 1414 620"/>
<path id="v589" d="M1473 783C1474 784 1476 788 1477 790C1479 793 1479 796 1480 798C1481 801 1482 805 1483 807"/>
<path id="v590" d="M1579 740C1578 739 1574 740 1572 739C1569 738 1568 735 1566 734C1564 733 1561 733 1559 733C1557 733 1554 736 1553 737"/>
<path id="v591" d="M1615 736C1614 737 1614 741 1612 743C1611 745 1608 747 1606 748C1603 748 1600 748 1598 747C1595 746 1592 743 1591 742"/>
<path id="v592" d="M1513 657C1515 657 1520 656 1523 656C1526 656 1530 657 1533 656C1536 656 1541 655 1542 655"/>
<path id="v593" d="M1507 777C1506 779 1502 784 1501 788C1500 791 1501 796 1503 799C1504 803 1508 808 1509 809"/>
<path id="v594" d="M1348 504C1349 503 1348 500 1349 498C1350 496 1353 495 1354 494"/>
<path id="v595" d="M1246 571C1245 570 1240 568 1238 565C1236 563 1235 558 1234 556"/>
<path id="v596" d="M1490 755C1488 756 1482 758 1478 758C1474 759 1469 758 1465 759C1461 761 1456 764 1454 765"/>
<path id="v597" d="M1877 760C1878 762 1882 769 1883 773C1883 778 1880 785 1880 788"/>
<path id="v598" d="M1877 610C1878 612 1883 617 1884 621C1885 624 1883 629 1883 633C1883 637 1885 643 1886 645"/>
<path id="v599" d="M1366 708C1365 709 1363 713 1362 715C1361 717 1359 720 1358 721"/>
<path id="v600" d="M1829 687C1828 686 1826 683 1824 682C1822 681 1820 681 1818 680C1815 680 1813 679 1811 679C1809 679 1805 679 1804 679"/>
<path id="v601" d="M1424 803C1426 803 1431 805 1434 806C1437 808 1441 808 1444 810C1447 812 1450 813 1452 816C1455 818 1457 823 1458 824"/>
<path id="v602" d="M1357 776C1356 777 1353 779 1352 782C1351 784 1351 787 1351 789C1350 791 1350 794 1350 796C1350 799 1351 803 1351 804"/>
<path id="v603" d="M1275 708C1276 707 1282 704 1285 704C1289 704 1295 707 1296 707"/>
<path id="v604" d="M1592 940C1592 942 1594 947 1596 949C1598 951 1602 951 1605 952C1607 954 1611 957 1612 958"/>
<path id="v605" d="M1510 885C1511 886 1516 888 1517 890C1519 893 1519 897 1520 900C1522 902 1528 903 1529 904"/>
<path id="v606" d="M1660 659C1660 660 1658 664 1658 667C1657 670 1657 673 1657 675C1658 678 1661 679 1662 682C1664 684 1665 688 1665 690"/>
<path id="v607" d="M1410 745C1409 743 1408 735 1405 732C1402 728 1396 728 1393 725C1389 722 1387 717 1384 713C1381 710 1375 706 1373 704"/>
<path id="v608" d="M1199 730C1200 733 1203 739 1204 744C1206 749 1208 756 1208 758"/>
<path id="v609" d="M1668 698C1669 696 1673 692 1674 689C1675 685 1674 681 1673 678C1672 674 1668 672 1668 668C1668 665 1671 660 1671 658"/>
<path id="v610" d="M1370 639C1369 638 1366 634 1365 631C1365 629 1365 625 1366 623C1367 620 1369 617 1371 615C1373 613 1377 611 1378 610"/>
<path id="v611" d="M1922 724C1922 723 1919 719 1918 716C1918 713 1920 710 1920 707C1919 705 1916 703 1915 700C1914 697 1913 693 1913 691"/>
<path id="v612" d="M1197 681C1199 682 1206 687 1211 688C1215 688 1221 685 1225 686C1230 687 1235 694 1237 695"/>
<path id="v613" d="M1416 714C1417 716 1419 722 1422 725C1426 728 1431 727 1434 730C1438 733 1440 737 1442 741C1443 745 1445 751 1445 753"/>
<path id="v614" d="M1322 741C1321 740 1320 736 1319 734C1317 733 1314 731 1313 731"/>
<path id="v615" d="M1406 696C1405 697 1401 700 1399 701C1396 702 1393 701 1390 702C1387 702 1385 705 1382 705C1380 705 1375 704 1374 703"/>
<path id="v616" d="M1433 809C1436 809 1443 809 1447 808C1451 808 1458 805 1460 804"/>
<path id="v617" d="M1286 707C1285 708 1279 709 1277 711C1274 714 1273 719 1272 720"/>
<path id="v618" d="M1581 850C1582 850 1587 852 1589 852C1592 853 1595 851 1598 851C1600 852 1604 855 1605 856"/>
<path id="v619" d="M1729 768C1729 766 1732 761 1732 758C1732 755 1730 751 1731 748C1732 745 1735 741 1736 739"/>
<path id="v620" d="M1488 861C1487 862 1484 863 1482 865C1481 866 1479 869 1479 870"/>
<path id="v621" d="M1653 474C1653 472 1656 466 1657 462C1657 458 1655 452 1654 450"/>
<path id="v622" d="M1658 376C1657 377 1655 381 1653 382C1651 384 1648 386 1647 386"/>
<path id="v623" d="M1611 613C1612 615 1615 621 1618 625C1620 628 1624 631 1628 633C1631 635 1638 634 1640 635"/>
<path id="v624" d="M1442 372C1444 373 1450 376 1454 378C1458 380 1462 384 1466 385C1470 386 1476 385 1480 383C1484 382 1488 376 1490 375"/>
<path id="v625" d="M1598 578C1597 578 1592 576 1590 576C1587 576 1584 577 1581 577C1578 578 1576 579 1573 579C1570 580 1566 580 1565 580"/>
<path id="v626" d="M1454 591C1454 592 1453 595 1452 597C1451 599 1449 601 1448 603C1446 605 1445 608 1444 609"/>
<path id="v627" d="M1346 829C1345 827 1344 821 1341 818C1338 815 1331 814 1330 813"/>
<path id="v628" d="M1574 669C1576 668 1583 666 1587 664C1591 662 1597 657 1599 655"/>
<path id="v629" d="M1335 741C1334 741 1331 744 1329 746C1327 748 1326 750 1324 752C1323 754 1321 758 1320 759"/>
<path id="v630" d="M1585 688C1586 689 1589 691 1592 692C1594 693 1596 694 1599 694C1601 694 1604 692 1606 691"/>
<path id="v631" d="M1696 682C1696 683 1696 687 1696 689C1696 691 1696 693 1697 695C1697 697 1699 700 1700 701"/>
<path id="v632" d="M1720 416C1720 418 1719 423 1721 427C1722 430 1726 434 1727 435"/>
<path id="v633" d="M1503 760C1501 759 1496 757 1492 756C1488 755 1485 754 1481 754C1477 754 1471 756 1469 757"/>
<path id="v634" d="M1458 529C1457 528 1455 526 1453 525C1452 524 1449 524 1447 524C1445 524 1442 523 1442 522"/>
<path id="v635" d="M1331 851C1328 851 1320 853 1316 851C1312 849 1310 842 1306 840C1302 838 1297 840 1292 840C1287 840 1280 840 1278 840"/>
<path id="v636" d="M1380 357C1382 357 1387 354 1390 354C1393 354 1397 356 1399 359C1402 361 1404 364 1405 367C1405 371 1404 376 1403 378"/>
<path id="v637" d="M1715 793C1713 792 1706 792 1703 790C1699 788 1697 783 1694 780C1691 777 1685 773 1684 772"/>
<path id="v638" d="M1604 650C1604 648 1602 641 1601 636C1601 631 1602 624 1603 621"/>
<path id="v639" d="M1618 689C1619 691 1623 695 1623 698C1624 701 1623 705 1621 708C1620 711 1615 713 1613 714"/>
<path id="v640" d="M1532 658C1534 659 1538 662 1541 663C1544 663 1547 662 1551 662C1554 661 1559 660 1561 660"/>
<path id="v641" d="M1688 698C1686 700 1679 704 1677 708C1674 712 1675 718 1673 722C1671 727 1666 730 1665 735C1664 739 1667 747 1667 749"/>
<path id="v642" d="M1636 903C1637 903 1641 904 1643 904C1646 904 1649 904 1651 904"/>
<path id="v643" d="M1614 554C1614 555 1612 560 1611 563C1610 566 1611 569 1611 572C1610 575 1608 580 1608 581"/>
<path id="v644" d="M1580 719C1581 720 1584 725 1587 727C1589 730 1594 732 1595 733"/>
<path id="v645" d="M1469 857C1467 856 1462 855 1459 853C1457 851 1454 847 1453 846"/>
<path id="v646" d="M1277 617C1279 618 1284 620 1287 622C1290 624 1294 628 1296 629"/>
<path id="v647" d="M1363 593C1364 591 1365 587 1366 584C1367 581 1370 578 1371 576C1373 573 1375 570 1377 568C1379 566 1384 564 1385 563"/>
<path id="v648" d="M1514 673C1514 671 1511 666 1510 663C1509 660 1511 656 1510 653C1510 649 1510 646 1509 642C1508 639 1506 634 1506 632"/>
<path id="v649" d="M1557 692C1556 690 1555 685 1553 683C1551 681 1547 681 1545 679C1543 677 1542 674 1540 671C1538 669 1535 666 1534 664"/>
<path id="v650" d="M1551 549C1552 550 1555 555 1556 558C1557 561 1556 567 1556 568"/>
<path id="v651" d="M1309 637C1309 639 1312 643 1311 646C1311 649 1308 651 1307 653C1305 656 1304 660 1303 662"/>
<path id="v652" d="M1528 809C1529 808 1532 807 1533 806C1535 805 1537 804 1539 803C1541 802 1544 801 1545 800"/>
<path id="v653" d="M1291 745C1292 743 1295 740 1297 737C1298 734 1300 731 1300 728C1300 725 1298 722 1297 719C1296 716 1294 711 1293 710"/>
<path id="v654" d="M1558 919C1559 920 1564 925 1568 926C1572 926 1577 925 1580 923C1584 921 1588 916 1589 914"/>
<path id="v655" d="M1536 506C1535 505 1532 503 1531 501C1530 499 1530 496 1531 494C1531 492 1534 491 1535 489C1537 487 1540 485 1540 484"/>
<path id="v656" d="M1281 728C1281 730 1281 737 1283 740C1285 743 1290 743 1292 746C1295 749 1298 754 1299 756"/>
<path id="v657" d="M1483 489C1485 490 1487 494 1490 495C1493 497 1496 497 1499 497C1502 498 1505 499 1508 499C1511 499 1516 498 1517 498"/>
<path id="v658" d="M1634 760C1636 760 1641 759 1644 760C1647 761 1651 764 1652 765"/>
<path id="v659" d="M1385 748C1387 747 1392 744 1394 741C1397 738 1400 735 1401 731C1402 728 1400 722 1400 720"/>
<path id="v660" d="M1352 864C1354 864 1359 862 1362 860C1365 859 1368 854 1369 853"/>
<path id="v661" d="M1370 368C1372 368 1376 367 1378 366C1381 365 1382 362 1384 360C1387 359 1390 359 1392 358C1395 356 1398 353 1399 353"/>
<path id="v662" d="M1657 621C1656 623 1654 631 1651 634C1647 637 1640 639 1637 640"/>
<path id="v663" d="M1526 582C1528 582 1534 583 1537 581C1540 580 1544 575 1545 573"/>
<path id="v664" d="M1598 722C1596 721 1591 718 1587 716C1584 714 1580 713 1577 710C1574 708 1570 702 1569 701"/>
<path id="v665" d="M1532 580C1531 582 1530 587 1529 591C1529 595 1530 599 1531 602C1532 606 1535 611 1536 612"/>
<path id="v666" d="M1378 868C1376 869 1369 871 1366 874C1363 877 1361 884 1360 886"/>
<path id="v667" d="M1446 661C1448 661 1455 664 1460 663C1465 663 1470 660 1473 657C1477 654 1477 648 1479 644C1482 640 1486 634 1487 632"/>
<path id="v668" d="M1300 731C1300 729 1300 724 1300 720C1301 717 1302 713 1304 710C1305 707 1308 704 1309 701C1309 697 1308 692 1308 690"/>
<path id="v669" d="M1320 850C1322 851 1327 856 1330 860C1333 863 1338 865 1341 869C1344 872 1346 877 1348 881C1350 885 1353 891 1354 893"/>
<path id="v670" d="M1479 501C1477 501 1473 501 1470 501C1467 502 1464 504 1462 505C1460 507 1458 511 1457 512"/>
<path id="v671" d="M1501 572C1502 571 1505 566 1506 562C1507 559 1505 555 1506 552C1508 549 1513 547 1514 544C1516 541 1516 535 1517 534"/>
<path id="v672" d="M1400 859C1400 857 1399 850 1399 846C1399 841 1401 837 1401 833C1402 829 1404 824 1403 820C1402 816 1397 811 1396 809"/>
<path id="v673" d="M1602 776C1601 775 1596 772 1594 770C1591 767 1588 764 1585 763C1582 762 1576 763 1574 763"/>
<path id="v674" d="M1467 777C1466 775 1464 771 1463 769C1463 766 1462 761 1462 760"/>
<path id="v675" d="M1808 747C1810 746 1815 743 1818 743C1821 743 1825 746 1828 746C1832 746 1835 743 1839 742C1842 741 1848 741 1850 741"/>
<path id="v676" d="M1884 557C1883 557 1881 554 1880 552C1879 550 1879 548 1878 546C1878 543 1876 540 1876 539"/>
<path id="v677" d="M1775 711C1777 711 1784 708 1788 709C1792 710 1795 715 1799 716C1803 718 1810 717 1812 717"/>
<path id="v678" d="M1316 802C1317 801 1320 799 1323 799C1325 798 1329 798 1330 798"/>
<path id="v679" d="M1426 657C1424 656 1420 654 1417 654C1414 654 1411 657 1407 657C1404 657 1399 656 1398 656"/>
<path id="v680" d="M1486 717C1485 716 1481 713 1478 713C1475 712 1472 714 1469 713C1467 713 1465 710 1462 709C1459 708 1455 709 1453 709"/>
<path id="v681" d="M1737 778C1736 776 1731 770 1729 766C1727 761 1726 756 1726 751C1726 746 1728 739 1729 736"/>
<path id="v682" d="M1821 779C1822 779 1827 780 1829 782C1832 783 1836 786 1837 787"/>
<path id="v683" d="M1592 779C1590 779 1585 782 1582 781C1578 781 1574 780 1571 778C1569 776 1565 772 1564 770"/>
<path id="v684" d="M1542 859C1540 858 1536 855 1532 853C1529 851 1525 848 1523 847"/>
<path id="v685" d="M1579 592C1577 591 1572 590 1569 588C1566 587 1562 582 1561 580"/>
<path id="v686" d="M1328 623C1328 622 1327 617 1325 616C1323 614 1319 613 1318 612"/>
<path id="v687" d="M1305 648C1306 646 1308 641 1310 637C1312 634 1314 629 1315 627"/>
<path id="v688" d="M1350 779C1350 782 1350 789 1350 794C1350 798 1350 806 1350 808"/>
<path id="v689" d="M1450 453C1451 455 1453 458 1454 461C1454 464 1454 467 1455 469C1456 472 1459 474 1459 477C1460 479 1458 483 1457 485"/>
<path id="v690" d="M1618 438C1618 440 1617 446 1618 449C1619 452 1622 455 1625 457C1627 458 1631 459 1635 459C1638 460 1643 461 1645 461"/>
<path id="v691" d="M1491 685C1492 686 1494 689 1494 692C1495 694 1493 697 1494 700C1495 702 1496 704 1498 706C1500 708 1504 709 1505 709"/>
<path id="v692" d="M1771 779C1770 781 1769 786 1768 789C1767 792 1765 795 1764 798C1762 801 1759 804 1759 807C1758 811 1761 816 1761 817"/>
<path id="v693" d="M1221 622C1220 624 1219 629 1217 632C1215 635 1211 636 1209 639C1208 642 1209 648 1209 650"/>
<path id="v694" d="M1629 681C1630 680 1633 678 1635 677C1637 675 1640 672 1640 671"/>
<path id="v695" d="M1283 700C1285 700 1291 703 1294 703C1298 703 1303 700 1306 701C1310 702 1314 707 1316 708"/>
<path id="v696" d="M1384 878C1384 877 1384 873 1384 870C1384 867 1385 865 1385 862C1385 859 1386 856 1385 854C1384 851 1380 849 1379 848"/>
<path id="v697" d="M1719 756C1718 754 1713 749 1710 745C1707 741 1703 735 1702 733"/>
<path id="v698" d="M1870 687C1870 689 1870 695 1872 698C1873 702 1877 704 1880 706C1883 709 1887 710 1889 713C1891 715 1893 721 1894 723"/>
<path id="v699" d="M1305 618C1307 619 1312 624 1316 627C1320 629 1325 632 1330 632C1334 632 1341 628 1343 627"/>
<path id="v700" d="M1646 727C1645 727 1643 730 1641 732C1639 733 1635 733 1634 734"/>
<path id="v701" d="M1522 733C1523 734 1528 739 1531 741C1534 744 1538 746 1542 748C1545 750 1549 752 1553 754C1557 756 1563 758 1565 759"/>
<path id="v702" d="M1532 781C1533 783 1536 788 1538 792C1540 795 1544 799 1546 801"/>
<path id="v703" d="M1246 549C1244 548 1241 545 1238 543C1235 541 1232 539 1229 538C1226 537 1220 537 1219 537"/>
<path id="v704" d="M1825 745C1826 744 1829 743 1831 742C1833 741 1834 739 1836 737C1837 736 1838 734 1840 733C1842 731 1844 730 1845 729"/>
<path id="v705" d="M1233 742C1232 743 1229 748 1228 751C1226 754 1223 758 1222 760"/>
<path id="v706" d="M1383 394C1384 393 1386 390 1387 388C1389 386 1391 384 1393 383C1395 381 1398 379 1399 378"/>
<path id="v707" d="M1586 692C1584 692 1580 693 1578 694C1576 696 1574 698 1573 700C1571 702 1568 705 1568 705"/>
<path id="v708" d="M1430 583C1431 584 1436 587 1438 590C1441 592 1443 596 1446 598C1448 600 1454 600 1456 601"/>
<path id="v709" d="M1826 746C1826 744 1828 737 1828 732C1828 728 1828 721 1827 718"/>
<path id="v710" d="M1396 546C1398 546 1404 543 1408 544C1412 544 1416 546 1419 549C1421 552 1423 556 1424 560C1425 563 1424 569 1424 571"/>
<path id="v711" d="M1451 784C1453 786 1458 792 1459 797C1460 801 1458 807 1456 811C1455 816 1449 819 1448 824C1447 828 1450 836 1450 838"/>
<path id="v712" d="M1669 607C1670 607 1674 608 1675 607C1677 606 1679 604 1680 602C1680 600 1680 597 1679 595C1679 593 1677 591 1676 590"/>
<path id="v713" d="M1607 383C1607 382 1608 377 1608 374C1609 371 1611 368 1612 366C1613 363 1614 358 1615 357"/>
<path id="v714" d="M1676 671C1675 673 1673 679 1670 682C1668 686 1663 689 1661 691"/>
<path id="v715" d="M1594 936C1595 939 1598 946 1598 950C1598 955 1596 959 1594 964C1593 968 1590 972 1589 977C1588 981 1589 989 1589 991"/>
<path id="v716" d="M1875 602C1877 603 1885 603 1889 605C1893 607 1897 613 1899 615"/>
<path id="v717" d="M1453 718C1456 718 1462 720 1466 720C1470 719 1472 714 1476 713C1480 712 1485 712 1489 713C1493 714 1498 718 1500 719"/>
<path id="v718" d="M1661 407C1663 408 1668 410 1672 411C1676 412 1680 412 1683 414C1687 415 1690 419 1693 420C1697 421 1703 419 1705 419"/>
<path id="v719" d="M1530 731C1532 733 1537 737 1541 741C1544 744 1548 748 1550 752C1551 757 1548 764 1548 767"/>
<path id="v720" d="M1469 426C1467 427 1462 431 1459 434C1456 438 1452 441 1451 445C1449 449 1449 456 1449 458"/>
<path id="v721" d="M1578 410C1577 407 1576 401 1576 397C1576 392 1577 386 1577 383"/>
<path id="v722" d="M1676 794C1674 794 1668 796 1664 797C1660 798 1654 800 1652 800"/>
<path id="v723" d="M1563 544C1562 544 1558 543 1556 543C1553 543 1549 542 1548 542"/>
<path id="v724" d="M1712 730C1710 731 1706 733 1704 736C1701 738 1700 741 1698 743C1696 746 1691 749 1690 750"/>
<path id="v725" d="M1330 772C1329 771 1326 767 1325 765C1324 762 1325 759 1326 756C1326 754 1328 750 1328 748"/>
<path id="v726" d="M1337 880C1337 878 1336 875 1336 873C1336 871 1336 868 1337 866C1338 864 1341 863 1342 862"/>
<path id="v727" d="M1563 687C1562 688 1558 692 1558 695C1557 698 1557 702 1558 705C1559 708 1561 711 1561 714C1562 717 1560 722 1560 723"/>
<path id="v728" d="M1690 757C1688 755 1683 749 1679 747C1675 745 1669 748 1664 746C1659 745 1654 743 1651 739C1648 735 1648 727 1647 725"/>
<path id="v729" d="M1452 716C1452 717 1450 721 1448 723C1446 724 1443 725 1441 725C1438 725 1435 724 1433 723C1431 721 1429 717 1428 716"/>
<path id="v730" d="M1763 766C1766 767 1773 768 1778 769C1782 770 1789 774 1791 775"/>
<path id="v731" d="M1292 676C1293 677 1297 679 1300 680C1303 681 1306 682 1309 682C1312 683 1317 682 1318 682"/>
<path id="v732" d="M1492 776C1494 776 1501 775 1506 775C1510 775 1517 777 1519 777"/>
<path id="v733" d="M1502 694C1501 695 1499 698 1497 700C1495 702 1493 703 1492 705C1491 707 1492 711 1492 712"/>
<path id="v734" d="M1276 845C1276 848 1276 855 1274 859C1273 863 1268 868 1267 870"/>
<path id="v735" d="M1490 863C1491 864 1493 869 1495 871C1498 873 1501 874 1505 875C1508 875 1511 874 1514 874C1518 874 1523 874 1524 875"/>
<path id="v736" d="M1550 690C1552 691 1556 696 1560 696C1563 697 1569 694 1571 694"/>
<path id="v737" d="M1839 570C1840 571 1844 573 1846 573C1848 573 1852 572 1853 572"/>
<path id="v738" d="M1433 756C1432 755 1429 753 1428 751C1426 750 1425 748 1424 746C1422 744 1420 742 1419 741"/>
<path id="v739" d="M1378 649C1380 648 1384 645 1387 642C1389 640 1393 635 1394 634"/>
<path id="v740" d="M1471 798C1472 799 1476 803 1478 806C1480 808 1482 811 1484 814C1486 816 1490 818 1491 821C1493 824 1492 829 1492 831"/>
<path id="v741" d="M1376 671C1378 671 1385 672 1387 675C1390 678 1391 682 1393 686C1395 689 1399 694 1400 696"/>
<path id="v742" d="M1475 519C1474 517 1472 513 1471 510C1469 507 1468 504 1468 500C1467 497 1467 494 1466 491C1465 488 1461 484 1460 482"/>
<path id="v743" d="M1374 805C1373 807 1371 814 1371 818C1372 822 1376 828 1377 830"/>
<path id="v744" d="M1523 863C1523 861 1524 855 1526 852C1529 849 1534 849 1537 847C1540 845 1544 843 1546 840C1547 837 1547 831 1547 829"/>
<path id="v745" d="M1268 759C1269 758 1269 754 1271 752C1272 750 1274 748 1277 748C1279 747 1283 748 1284 748"/>
<path id="v746" d="M1462 673C1463 675 1468 679 1470 683C1471 687 1470 692 1472 695C1474 698 1478 701 1481 703C1484 706 1489 710 1491 711"/>
<path id="v747" d="M1724 733C1725 731 1730 726 1732 722C1735 718 1738 712 1739 710"/>
<path id="v748" d="M1249 648C1248 649 1242 649 1239 650C1236 652 1233 655 1230 657C1227 659 1223 662 1221 663"/>
<path id="v749" d="M1508 566C1507 565 1505 563 1503 561C1502 559 1500 558 1499 556C1498 554 1498 551 1497 549C1495 548 1492 546 1491 546"/>
<path id="v750" d="M1230 547C1228 547 1221 548 1217 549C1212 551 1206 553 1203 554"/>
<path id="v751" d="M1352 584C1350 586 1343 589 1339 592C1335 595 1332 599 1328 601C1324 604 1319 607 1314 607C1309 608 1302 607 1299 607"/>
<path id="v752" d="M1757 758C1757 760 1756 767 1756 772C1756 777 1758 782 1760 786C1762 790 1765 794 1769 797C1773 800 1779 803 1781 804"/>
<path id="v753" d="M1515 782C1514 782 1511 782 1508 781C1506 781 1504 780 1502 779C1500 778 1498 775 1498 774"/>
<path id="v754" d="M1681 752C1682 751 1683 747 1683 745C1684 743 1684 741 1685 739C1686 737 1689 735 1690 734"/>
<path id="v755" d="M1455 635C1456 635 1461 633 1464 630C1467 628 1468 625 1471 623C1474 621 1479 619 1481 619"/>
<path id="v756" d="M1804 837C1805 837 1809 837 1811 839C1813 840 1814 844 1814 845"/>
<path id="v757" d="M1601 647C1599 647 1592 648 1589 647C1585 646 1583 640 1580 639C1576 637 1569 637 1567 637"/>
<path id="v758" d="M1661 585C1659 584 1653 582 1650 581C1646 579 1642 578 1639 575C1637 573 1636 568 1634 565C1631 562 1626 560 1624 558"/>
<path id="v759" d="M1479 786C1480 786 1483 786 1486 786C1488 787 1491 786 1493 786C1495 787 1497 790 1498 791"/>
<path id="v760" d="M1499 571C1500 571 1505 572 1508 573C1511 574 1516 576 1517 576"/>
<path id="v761" d="M1239 682C1241 681 1245 676 1249 675C1253 673 1257 674 1261 675C1266 675 1269 678 1273 679C1277 680 1283 681 1285 682"/>
<path id="v762" d="M1877 506C1876 508 1874 514 1872 516C1869 519 1865 520 1862 522C1858 524 1853 527 1852 528"/>
<path id="v763" d="M1533 701C1532 702 1530 709 1526 712C1523 714 1515 715 1513 715"/>
<path id="v764" d="M1301 827C1301 829 1302 836 1301 841C1299 845 1295 851 1294 853"/>
<path id="v765" d="M1389 487C1389 486 1389 483 1389 481C1388 479 1387 476 1386 475"/>
<path id="v766" d="M1390 485C1388 486 1382 487 1378 487C1375 487 1371 486 1367 485C1364 483 1360 481 1357 479C1354 476 1351 471 1350 470"/>
<path id="v767" d="M1441 501C1441 499 1441 494 1441 491C1442 487 1443 484 1443 480C1443 477 1442 474 1440 471C1439 468 1435 464 1434 462"/>
<path id="v768" d="M1451 571C1453 571 1458 568 1462 568C1465 568 1468 571 1472 572C1476 572 1481 572 1483 572"/>
<path id="v769" d="M1215 686C1216 686 1221 685 1224 686C1227 687 1230 690 1232 692C1234 695 1234 700 1234 702"/>
<path id="v770" d="M1360 554C1362 554 1369 554 1373 553C1378 552 1383 549 1385 548"/>
<path id="v771" d="M1456 548C1456 548 1453 547 1451 546C1449 545 1447 543 1446 543"/>
<path id="v772" d="M1396 642C1398 641 1404 641 1408 641C1412 640 1416 640 1420 639C1424 638 1427 635 1430 633C1434 631 1439 629 1441 628"/>
<path id="v773" d="M1573 781C1574 783 1577 787 1579 790C1581 793 1585 797 1586 798"/>
<path id="v774" d="M1702 757C1702 755 1704 749 1706 745C1708 742 1712 739 1713 736C1715 732 1713 726 1712 724"/>
<path id="v775" d="M1219 567C1217 565 1213 559 1212 555C1211 550 1211 545 1212 541C1214 536 1219 531 1221 529"/>
<path id="v776" d="M1392 634C1391 633 1387 631 1384 630C1381 629 1378 626 1376 626C1373 625 1368 627 1366 627"/>
<path id="v777" d="M1585 734C1583 733 1577 729 1572 726C1568 724 1561 722 1558 721"/>
<path id="v778" d="M1455 755C1454 756 1453 759 1453 761C1453 763 1454 766 1454 767"/>
<path id="v779" d="M1524 775C1524 777 1525 782 1525 786C1526 789 1527 793 1527 796C1527 800 1526 805 1526 807"/>
<path id="v780" d="M1209 592C1210 592 1214 593 1216 593C1219 592 1222 592 1224 591C1226 589 1228 585 1229 584"/>
<path id="v781" d="M1635 749C1635 750 1633 752 1631 754C1630 756 1628 757 1626 759C1625 760 1624 762 1622 764C1621 766 1617 767 1617 768"/>
<path id="v782" d="M1484 644C1486 644 1491 646 1494 646C1497 645 1501 642 1502 642"/>
<path id="v783" d="M1618 797C1619 797 1622 797 1624 796C1626 795 1627 793 1628 792"/>
<path id="v784" d="M1651 594C1651 592 1652 586 1651 583C1650 581 1646 579 1644 576C1641 574 1638 569 1637 568"/>
<path id="v785" d="M1368 760C1369 761 1372 764 1374 766C1375 768 1377 772 1378 773"/>
<path id="v786" d="M1601 789C1603 789 1609 787 1612 785C1616 783 1620 779 1622 778"/>
<path id="v787" d="M1496 796C1497 796 1500 797 1503 798C1505 799 1508 801 1509 802"/>
<path id="v788" d="M1558 655C1559 653 1563 648 1566 645C1568 642 1572 636 1573 635"/>
<path id="v789" d="M1249 824C1248 825 1246 828 1244 830C1242 832 1240 834 1238 836C1236 838 1234 840 1234 842C1233 845 1235 849 1235 850"/>
<path id="v790" d="M1642 736C1641 735 1640 732 1640 730C1639 728 1640 725 1641 723C1641 721 1642 719 1644 718C1645 716 1649 716 1650 716"/>
<path id="v791" d="M1526 864C1525 864 1521 864 1518 864C1516 864 1513 863 1510 862C1508 862 1505 861 1503 860C1500 859 1497 856 1496 856"/>
<path id="v792" d="M1536 767C1536 766 1536 761 1535 758C1535 755 1533 752 1533 749C1533 746 1535 743 1536 739C1536 736 1534 732 1534 730"/>
<path id="v793" d="M1908 587C1910 589 1913 596 1916 599C1920 601 1927 601 1930 602"/>
<path id="v794" d="M1304 674C1304 676 1305 683 1304 686C1302 690 1298 695 1297 696"/>
<path id="v795" d="M1446 789C1446 787 1445 783 1446 780C1447 777 1449 775 1450 772C1451 769 1451 766 1451 763C1451 760 1450 756 1450 754"/>
<path id="v796" d="M1672 850C1671 851 1667 852 1665 854C1663 856 1664 860 1663 863C1661 865 1658 867 1657 869C1657 872 1658 877 1658 878"/>
<path id="v797" d="M1564 779C1563 779 1560 776 1558 775C1556 774 1554 772 1551 771C1549 771 1545 773 1544 773"/>
<path id="v798" d="M1609 696C1608 697 1606 700 1606 703C1605 705 1605 709 1604 710"/>
<path id="v799" d="M1234 822C1235 822 1240 822 1242 822C1245 822 1249 822 1251 822"/>
<path id="v800" d="M1678 789C1677 788 1675 782 1674 779C1672 776 1670 770 1670 769"/>
<path id="v801" d="M1411 614C1411 615 1409 620 1408 624C1407 627 1408 631 1406 634C1405 637 1401 640 1399 642"/>
<path id="v802" d="M1261 646C1262 647 1266 650 1267 653C1269 655 1269 659 1270 662C1271 665 1273 669 1273 670"/>
<path id="v803" d="M1680 722C1678 722 1674 723 1671 721C1669 720 1668 717 1666 715C1664 714 1661 713 1659 711C1657 709 1654 706 1653 705"/>
<path id="v804" d="M1285 601C1283 599 1277 594 1275 590C1273 586 1274 578 1273 576"/>
<path id="v805" d="M1423 845C1425 847 1431 850 1434 853C1437 856 1439 861 1442 864C1445 868 1450 872 1452 873"/>
<path id="v806" d="M1609 719C1609 718 1606 714 1604 712C1603 710 1601 707 1599 705C1597 703 1593 701 1592 700"/>
<path id="v807" d="M1286 767C1285 768 1281 771 1278 772C1275 773 1271 772 1268 773C1265 774 1262 776 1260 779C1258 781 1257 786 1256 788"/>
<path id="v808" d="M1501 770C1502 769 1508 769 1511 769C1515 768 1520 767 1522 767"/>
<path id="v809" d="M1619 640C1618 641 1617 644 1616 646C1615 648 1614 649 1612 651C1611 652 1608 654 1607 655"/>
<path id="v810" d="M1354 695C1353 697 1350 704 1349 708C1349 713 1353 719 1354 722"/>
<path id="v811" d="M1224 788C1223 789 1220 791 1217 792C1215 793 1212 793 1209 794C1207 795 1203 798 1202 798"/>
<path id="v812" d="M1298 715C1300 716 1307 716 1311 717C1316 718 1322 721 1324 722"/>
<path id="v813" d="M1290 517C1289 518 1285 519 1282 518C1280 517 1278 515 1275 514C1273 513 1269 512 1268 512"/>
<path id="v814" d="M1291 839C1292 837 1295 834 1296 831C1298 828 1299 824 1298 821C1298 818 1294 815 1293 813"/>
<path id="v815" d="M1410 721C1411 720 1413 715 1414 712C1416 709 1419 706 1421 704C1424 703 1428 703 1432 703C1435 702 1440 700 1441 700"/>
<path id="v816" d="M1315 713C1316 715 1321 718 1321 722C1322 725 1321 729 1320 732C1319 735 1317 738 1315 741C1314 744 1311 749 1310 750"/>
<path id="v817" d="M1536 534C1535 536 1534 541 1532 545C1530 548 1527 551 1525 554C1522 556 1520 559 1517 562C1515 564 1510 568 1509 569"/>
<path id="v818" d="M1230 701C1231 702 1230 705 1231 707C1231 709 1233 712 1233 713"/>
<path id="v819" d="M1431 699C1431 700 1435 704 1435 707C1435 710 1432 714 1433 717C1433 720 1435 725 1436 726"/>
<path id="v820" d="M1448 276C1444 277 1431 280 1422 284C1413 288 1401 295 1392 300C1383 305 1374 310 1370 313C1366 316 1370 320 1370 321"/>
<path id="v821" d="M1451 318C1447 319 1435 322 1428 325C1421 328 1414 333 1408 337C1402 341 1396 346 1390 351C1384 356 1375 363 1372 365"/>
<path id="v822" d="M1348 430C1349 426 1349 414 1352 407C1355 400 1362 391 1368 385C1374 379 1383 373 1390 369C1397 365 1404 362 1412 361C1420 360 1430 361 1438 363C1446 365 1455 368 1463 371C1471 374 1481 377 1485 378"/>
<path id="v823" d="M1537 295C1535 299 1530 312 1527 320C1524 328 1522 338 1519 345C1516 352 1513 359 1512 362"/>
<path id="v824" d="M1512 362C1509 364 1500 369 1493 372C1486 375 1480 377 1473 382C1466 387 1460 394 1453 401C1446 408 1438 416 1432 421C1426 426 1419 431 1416 433"/>
<path id="v825" d="M1416 433C1412 433 1400 431 1392 431C1384 431 1374 432 1368 433C1362 434 1360 439 1358 440"/>
<path id="v826" d="M1358 440C1357 444 1355 455 1352 462C1349 469 1345 475 1342 482C1339 489 1336 496 1334 502C1332 508 1330 514 1330 520C1330 526 1330 532 1331 536C1332 540 1334 543 1337 546C1340 549 1344 550 1348 552C1352 554 1360 554 1362 555"/>
<path id="v827" d="M1394 377C1395 380 1397 387 1400 393C1403 399 1407 406 1410 411C1413 416 1417 419 1418 421"/>
<path id="v828" d="M1412 442C1413 445 1416 452 1416 458C1416 464 1413 473 1412 476"/>
<path id="v829" d="M1422 458C1423 462 1426 476 1428 482C1430 488 1435 494 1436 496"/>
<path id="v830" d="M1330 377L1315 393"/>
<path id="v831" d="M1328 411L1323 427"/>
<path id="v832" d="M1287 442L1283 478"/>
<path id="v833" d="M1271 438L1263 456"/>
<path id="v834" d="M1267 510L1319 508"/>
<path id="v835" d="M1354 341L1344 367"/>
<path id="v836" d="M1358 373L1350 389"/>
<path id="v837" d="M1514 361C1517 364 1526 374 1530 381C1534 388 1536 394 1538 401C1540 408 1540 418 1540 425C1540 432 1538 439 1538 442"/>
<path id="v838" d="M1546 365C1549 364 1559 360 1566 359C1573 358 1585 357 1589 357"/>
<path id="v839" d="M1566 321C1564 325 1558 338 1556 345C1554 352 1553 358 1552 361"/>
<path id="v840" d="M1597 298L1601 321"/>
<path id="v841" d="M1669 357C1665 360 1653 370 1645 377C1637 384 1628 393 1621 401C1614 409 1609 418 1605 425C1601 432 1598 439 1597 442"/>
<path id="v842" d="M1677 341L1675 371"/>
<path id="v843" d="M1601 454C1606 455 1620 458 1629 460C1638 462 1648 466 1657 464C1666 462 1673 453 1683 447C1693 441 1707 434 1716 430C1725 426 1734 425 1738 424"/>
<path id="v844" d="M1560 490C1562 492 1570 498 1575 502C1580 506 1585 510 1591 516C1597 522 1604 533 1611 540C1618 547 1628 553 1631 556"/>
<path id="v845" d="M1560 454C1561 452 1563 446 1568 444C1573 442 1584 442 1589 440C1594 438 1599 434 1601 433"/>
<path id="v846" d="M1641 423L1659 409"/>
<path id="v847" d="M1661 421L1677 405"/>
<path id="v848" d="M1625 474C1628 476 1642 484 1645 488C1648 492 1642 496 1641 498"/>
<path id="v849" d="M1508 393C1509 398 1507 414 1512 421C1517 428 1531 428 1536 433C1541 438 1539 446 1540 448"/>
<path id="v850" d="M1552 393C1555 394 1565 397 1568 401C1571 405 1575 410 1571 415C1567 420 1550 428 1546 430"/>
<path id="v851" d="M1700 370C1702 376 1708 393 1713 404C1718 415 1724 426 1729 437C1734 448 1740 459 1743 470C1746 481 1749 494 1750 504C1751 514 1750 523 1748 530C1746 537 1744 544 1738 548C1732 552 1721 558 1712 557C1703 556 1687 546 1682 544"/>
<path id="v852" d="M1790 385C1797 391 1819 406 1830 420C1841 434 1852 453 1858 470C1864 487 1867 505 1868 520C1869 535 1866 553 1866 560"/>
<path id="v853" d="M1799 401C1801 406 1808 419 1812 429C1816 439 1818 451 1822 462C1826 473 1831 484 1835 495C1839 506 1842 517 1845 528C1848 539 1850 548 1850 560C1850 572 1849 585 1848 600C1847 615 1846 634 1845 650C1844 666 1842 688 1842 695"/>
<path id="v854" d="M1730 362C1733 368 1743 385 1749 396C1755 407 1761 418 1766 429C1771 440 1775 451 1779 462C1783 473 1786 484 1789 495C1792 506 1792 517 1794 528C1796 539 1797 548 1798 560C1799 572 1801 585 1802 600C1803 615 1805 634 1806 650C1807 666 1809 688 1810 695"/>
<path id="v855" d="M1749 356C1752 360 1763 370 1769 380C1775 390 1781 402 1786 413C1791 424 1795 435 1799 446C1803 457 1808 468 1812 479C1816 490 1819 498 1822 512C1825 526 1827 544 1828 560C1829 576 1828 595 1828 610C1828 625 1828 636 1828 650C1828 664 1828 688 1828 695"/>
<path id="v856" d="M1815 426C1821 428 1838 435 1849 439C1860 443 1874 446 1882 449C1890 452 1893 455 1895 456"/>
<path id="v857" d="M1895 456C1896 460 1899 470 1898 479C1897 488 1892 501 1890 512C1888 523 1888 540 1888 545"/>
<path id="v858" d="M1908 479C1910 484 1917 501 1921 512C1925 523 1929 540 1931 545"/>
<path id="v859" d="M1849 390C1848 394 1846 406 1845 413C1844 420 1842 426 1842 429"/>
<path id="v860" d="M1854 390C1855 394 1859 405 1862 413C1865 421 1869 432 1870 436"/>
<path id="v861" d="M1650 436C1654 435 1667 431 1675 428C1683 425 1696 420 1700 418"/>
<path id="v862" d="M1271 560C1268 564 1257 576 1251 585C1245 594 1241 604 1237 613C1233 622 1231 631 1229 641C1227 651 1227 661 1227 671C1227 681 1228 694 1231 702C1234 710 1236 715 1243 722C1250 729 1264 732 1271 742C1278 752 1281 774 1283 780"/>
<path id="v863" d="M1271 558C1276 558 1291 561 1301 561C1311 561 1322 559 1332 558C1342 557 1352 554 1362 554C1372 554 1387 557 1392 558"/>
<path id="v864" d="M1271 722C1278 720 1298 715 1311 712C1324 709 1340 706 1352 704C1364 702 1372 697 1382 698C1392 699 1405 705 1412 708C1419 711 1422 716 1424 718"/>
<path id="v865" d="M1398 641C1402 642 1416 642 1422 645C1428 648 1430 658 1432 661"/>
<path id="v866" d="M1348 629C1347 634 1344 651 1340 661C1336 671 1326 686 1323 691"/>
<path id="v867" d="M1186 599C1187 604 1188 621 1190 631C1192 641 1198 653 1200 657"/>
<path id="v868" d="M1207 530C1206 535 1200 551 1201 560C1202 569 1206 580 1211 585C1216 590 1228 592 1231 593"/>
<path id="v869" d="M1617 560C1616 566 1614 586 1611 597C1608 608 1602 620 1600 625"/>
<path id="v870" d="M1625 530C1628 535 1636 550 1640 558C1644 566 1646 570 1651 581C1656 592 1664 608 1671 621C1678 634 1684 648 1691 661C1698 674 1704 690 1712 702C1720 714 1732 729 1736 734"/>
<path id="v871" d="M1738 631C1738 635 1737 650 1740 657C1743 664 1748 672 1754 673C1760 674 1773 670 1778 665C1783 660 1785 650 1786 641C1787 632 1784 618 1784 613"/>
<path id="v872" d="M1742 593L1772 597"/>
<path id="v873" d="M1581 631C1588 633 1608 638 1621 641C1634 644 1648 647 1661 649C1674 651 1690 652 1702 653C1714 654 1727 656 1732 657"/>
<path id="v874" d="M1601 693C1608 694 1628 695 1641 698C1654 701 1671 706 1681 710C1691 714 1698 720 1702 722"/>
<path id="v875" d="M1863 571C1866 572 1877 575 1883 577C1889 579 1897 580 1900 581"/>
<path id="v876" d="M1855 621C1856 624 1858 636 1863 641C1868 646 1880 651 1883 653"/>
<path id="v877" d="M1883 665L1889 702"/>
<path id="v878" d="M1649 752C1654 750 1670 742 1681 738C1692 734 1707 731 1712 730"/>
<path id="v879" d="M1661 780C1668 777 1692 767 1702 762C1712 757 1719 754 1722 752"/>
<path id="v880" d="M1798 742C1802 745 1814 756 1823 758C1832 760 1847 758 1853 752C1859 746 1858 727 1859 722"/>
<path id="v881" d="M1930 545C1930 549 1931 558 1930 567C1929 576 1923 592 1922 597"/>
<path id="v882" d="M1855 473C1857 479 1862 498 1866 510C1870 522 1875 542 1877 548"/>
<path id="v883" d="M1862 578C1869 579 1892 579 1903 582C1914 585 1922 594 1926 597"/>
<path id="v884" d="M1855 590C1859 596 1872 609 1877 623C1882 637 1886 658 1888 672C1890 686 1888 700 1888 705"/>
<path id="v885" d="M1851 619C1852 623 1855 640 1859 642C1863 644 1874 635 1877 634"/>
<path id="v886" d="M1870 717C1872 723 1878 744 1881 754C1884 764 1887 773 1888 777"/>
<path id="v887" d="M1287 740C1287 745 1288 761 1289 770C1290 779 1291 792 1291 796"/>
<path id="v888" d="M1275 800C1281 803 1298 814 1311 817C1324 820 1340 821 1352 821C1364 821 1372 817 1382 817C1392 817 1404 819 1412 821C1420 823 1429 829 1432 831"/>
<path id="v889" d="M1251 841C1256 842 1271 847 1281 849C1291 851 1302 852 1311 853C1320 854 1326 854 1332 857C1338 860 1344 866 1348 871C1352 876 1355 883 1356 885"/>
<path id="v890" d="M1362 780C1367 778 1380 773 1392 770C1404 767 1418 762 1432 764C1446 766 1463 771 1473 780C1483 789 1490 813 1493 820"/>
<path id="v891" d="M1428 790C1430 795 1439 810 1440 820C1441 830 1437 848 1436 853"/>
<path id="v892" d="M1503 740C1503 750 1505 783 1503 800C1501 817 1494 831 1493 841C1492 851 1496 858 1497 861"/>
<path id="v893" d="M1364 831C1365 836 1371 851 1372 861C1373 871 1370 884 1370 889"/>
<path id="v894" d="M1461 881C1460 885 1456 897 1453 905C1450 913 1446 925 1444 929"/>
<path id="v895" d="M1227 740C1230 747 1239 767 1243 780C1247 793 1250 813 1251 820"/>
<path id="v896" d="M1507 768C1510 774 1517 792 1523 805C1529 818 1535 832 1541 845C1547 858 1552 872 1558 885C1564 898 1571 915 1574 921"/>
<path id="v897" d="M1545 765C1548 772 1559 791 1565 805C1571 819 1579 842 1582 850"/>
<path id="v898" d="M1621 776C1631 778 1661 783 1681 786C1701 789 1725 793 1742 796C1759 799 1775 801 1782 802"/>
<path id="v899" d="M1758 746C1762 749 1773 758 1782 764C1791 770 1804 776 1814 780C1824 784 1838 785 1843 786"/>
<path id="v900" d="M1853 770L1883 752"/>
<path id="v901" d="M1649 796C1652 800 1660 813 1665 821C1670 829 1674 838 1677 845C1680 852 1680 858 1681 861"/>
<path id="v902" d="M1640 850C1638 855 1628 871 1625 880C1622 889 1620 895 1621 905C1622 915 1627 932 1631 942C1635 952 1641 959 1643 962"/>
<path id="v903" d="M1590 890C1591 897 1593 919 1594 930C1595 941 1596 952 1597 957"/>
<path id="v904" d="M1440 740C1447 743 1470 750 1480 760C1490 770 1496 785 1500 800C1504 815 1504 842 1505 850"/>
<path id="v905" d="M1540 760C1543 767 1553 788 1560 800C1567 812 1570 822 1580 830C1590 838 1613 847 1620 850"/>
<path id="v906" d="M1560 700C1567 702 1587 710 1600 710C1613 710 1625 703 1640 700C1655 697 1682 692 1690 690"/>
<path id="v907" d="M1640 760C1647 763 1670 775 1680 780C1690 785 1697 788 1700 790"/>
<path id="v908" d="M1380 710C1387 710 1411 710 1420 712C1429 714 1430 723 1432 725"/>
</defs>
<g id="vessels">
<g fill="#8a5a30" filter="url(#vb3)"><ellipse cx="1510" cy="735" rx="175" ry="95" opacity=".30"/><ellipse cx="1330" cy="790" rx="110" ry="95" opacity=".26"/><ellipse cx="1320" cy="640" rx="120" ry="100" opacity=".18"/><ellipse cx="1600" cy="640" rx="110" ry="90" opacity=".20"/><ellipse cx="1580" cy="860" rx="100" ry="70" opacity=".26"/><ellipse cx="1870" cy="620" rx="45" ry="130" opacity=".22"/><ellipse cx="1720" cy="770" rx="110" ry="50" opacity=".20"/></g>
<g fill="#94602f" filter="url(#vb)"><ellipse cx="1672" cy="470" rx="2.9" ry="2.1" opacity="0.72" transform="rotate(91 1672 470)"/><ellipse cx="1400" cy="859" rx="2.9" ry="2.7" opacity="0.68" transform="rotate(162 1400 859)"/><ellipse cx="1821" cy="372" rx="3.6" ry="2.8" opacity="0.57" transform="rotate(150 1821 372)"/><ellipse cx="1869" cy="578" rx="3.4" ry="2.8" opacity="0.52" transform="rotate(175 1869 578)"/><ellipse cx="1813" cy="401" rx="2.2" ry="2.4" opacity="0.48" transform="rotate(172 1813 401)"/><ellipse cx="1513" cy="910" rx="2.3" ry="1.6" opacity="0.47" transform="rotate(109 1513 910)"/><ellipse cx="1503" cy="728" rx="3.5" ry="3.2" opacity="0.71" transform="rotate(63 1503 728)"/><ellipse cx="1508" cy="771" rx="3.8" ry="3.2" opacity="0.67" transform="rotate(65 1508 771)"/><ellipse cx="1805" cy="649" rx="1.6" ry="1.7" opacity="0.66" transform="rotate(111 1805 649)"/><ellipse cx="1835" cy="740" rx="1.8" ry="1.5" opacity="0.45" transform="rotate(128 1835 740)"/><ellipse cx="1344" cy="615" rx="2.4" ry="2.2" opacity="0.68" transform="rotate(103 1344 615)"/><ellipse cx="1447" cy="863" rx="2.7" ry="1.8" opacity="0.75" transform="rotate(161 1447 863)"/><ellipse cx="1638" cy="511" rx="3.5" ry="2.3" opacity="0.72" transform="rotate(110 1638 511)"/><ellipse cx="1677" cy="304" rx="2.8" ry="2.4" opacity="0.63" transform="rotate(16 1677 304)"/><ellipse cx="1333" cy="849" rx="2.2" ry="1.5" opacity="0.64" transform="rotate(160 1333 849)"/><ellipse cx="1780" cy="758" rx="3.0" ry="2.4" opacity="0.47" transform="rotate(171 1780 758)"/><ellipse cx="1417" cy="688" rx="3.0" ry="3.2" opacity="0.69" transform="rotate(145 1417 688)"/><ellipse cx="1538" cy="661" rx="2.1" ry="1.7" opacity="0.43" transform="rotate(12 1538 661)"/><ellipse cx="1597" cy="558" rx="4.2" ry="3.3" opacity="0.42" transform="rotate(44 1597 558)"/><ellipse cx="1716" cy="357" rx="2.1" ry="2.3" opacity="0.48" transform="rotate(88 1716 357)"/><ellipse cx="1821" cy="846" rx="2.6" ry="1.7" opacity="0.77" transform="rotate(98 1821 846)"/><ellipse cx="1434" cy="528" rx="3.6" ry="3.2" opacity="0.63" transform="rotate(19 1434 528)"/><ellipse cx="1927" cy="629" rx="2.5" ry="1.7" opacity="0.62" transform="rotate(110 1927 629)"/><ellipse cx="1779" cy="608" rx="1.9" ry="1.9" opacity="0.65" transform="rotate(88 1779 608)"/><ellipse cx="1969" cy="771" rx="2.1" ry="1.8" opacity="0.44" transform="rotate(32 1969 771)"/><ellipse cx="1143" cy="640" rx="3.3" ry="3.2" opacity="0.55" transform="rotate(143 1143 640)"/><ellipse cx="1640" cy="578" rx="2.9" ry="2.0" opacity="0.41" transform="rotate(47 1640 578)"/><ellipse cx="1693" cy="778" rx="2.7" ry="2.2" opacity="0.69" transform="rotate(18 1693 778)"/><ellipse cx="1668" cy="850" rx="3.2" ry="2.2" opacity="0.54" transform="rotate(68 1668 850)"/><ellipse cx="1841" cy="597" rx="3.1" ry="2.4" opacity="0.69" transform="rotate(58 1841 597)"/><ellipse cx="1555" cy="969" rx="2.8" ry="2.8" opacity="0.61" transform="rotate(86 1555 969)"/><ellipse cx="1425" cy="626" rx="2.4" ry="1.8" opacity="0.66" transform="rotate(96 1425 626)"/><ellipse cx="1417" cy="548" rx="4.4" ry="3.1" opacity="0.63" transform="rotate(96 1417 548)"/><ellipse cx="1518" cy="636" rx="1.9" ry="1.5" opacity="0.79" transform="rotate(43 1518 636)"/><ellipse cx="1224" cy="533" rx="2.5" ry="1.6" opacity="0.55" transform="rotate(107 1224 533)"/><ellipse cx="1482" cy="624" rx="2.2" ry="2.2" opacity="0.76" transform="rotate(83 1482 624)"/><ellipse cx="1437" cy="747" rx="3.4" ry="2.3" opacity="0.73" transform="rotate(105 1437 747)"/><ellipse cx="1384" cy="616" rx="3.2" ry="2.8" opacity="0.55" transform="rotate(152 1384 616)"/><ellipse cx="1567" cy="270" rx="3.2" ry="2.5" opacity="0.78" transform="rotate(33 1567 270)"/><ellipse cx="1421" cy="773" rx="2.7" ry="2.2" opacity="0.68" transform="rotate(116 1421 773)"/><ellipse cx="1874" cy="634" rx="1.8" ry="2.0" opacity="0.76" transform="rotate(29 1874 634)"/><ellipse cx="1763" cy="395" rx="2.3" ry="2.2" opacity="0.53" transform="rotate(49 1763 395)"/><ellipse cx="1758" cy="617" rx="2.2" ry="1.5" opacity="0.38" transform="rotate(4 1758 617)"/><ellipse cx="1901" cy="511" rx="4.8" ry="3.0" opacity="0.37" transform="rotate(152 1901 511)"/><ellipse cx="1663" cy="535" rx="4.3" ry="3.1" opacity="0.76" transform="rotate(139 1663 535)"/><ellipse cx="1663" cy="882" rx="3.0" ry="2.3" opacity="0.36" transform="rotate(165 1663 882)"/><ellipse cx="1761" cy="925" rx="2.0" ry="1.5" opacity="0.47" transform="rotate(94 1761 925)"/><ellipse cx="1602" cy="550" rx="1.9" ry="1.4" opacity="0.58" transform="rotate(34 1602 550)"/><ellipse cx="1878" cy="646" rx="4.3" ry="3.2" opacity="0.68" transform="rotate(81 1878 646)"/><ellipse cx="1795" cy="371" rx="2.0" ry="1.4" opacity="0.45" transform="rotate(101 1795 371)"/><ellipse cx="1286" cy="713" rx="2.9" ry="2.4" opacity="0.70" transform="rotate(19 1286 713)"/><ellipse cx="1399" cy="378" rx="2.5" ry="2.7" opacity="0.53" transform="rotate(124 1399 378)"/><ellipse cx="1628" cy="811" rx="2.8" ry="1.9" opacity="0.46" transform="rotate(130 1628 811)"/><ellipse cx="1501" cy="875" rx="3.3" ry="3.3" opacity="0.61" transform="rotate(154 1501 875)"/><ellipse cx="1789" cy="478" rx="2.9" ry="2.5" opacity="0.68" transform="rotate(132 1789 478)"/><ellipse cx="1704" cy="618" rx="3.6" ry="3.3" opacity="0.72" transform="rotate(124 1704 618)"/><ellipse cx="1670" cy="872" rx="1.5" ry="1.4" opacity="0.47" transform="rotate(32 1670 872)"/><ellipse cx="1407" cy="467" rx="2.9" ry="2.8" opacity="0.65" transform="rotate(57 1407 467)"/><ellipse cx="1253" cy="663" rx="3.6" ry="3.2" opacity="0.78" transform="rotate(144 1253 663)"/><ellipse cx="1933" cy="573" rx="1.4" ry="1.6" opacity="0.42" transform="rotate(130 1933 573)"/><ellipse cx="1263" cy="608" rx="2.5" ry="1.7" opacity="0.77" transform="rotate(98 1263 608)"/><ellipse cx="1561" cy="515" rx="3.7" ry="2.4" opacity="0.38" transform="rotate(15 1561 515)"/><ellipse cx="1593" cy="847" rx="2.2" ry="1.7" opacity="0.54" transform="rotate(48 1593 847)"/><ellipse cx="1589" cy="599" rx="2.7" ry="2.7" opacity="0.42" transform="rotate(133 1589 599)"/><ellipse cx="1323" cy="706" rx="2.1" ry="1.7" opacity="0.66" transform="rotate(170 1323 706)"/><ellipse cx="1669" cy="298" rx="3.9" ry="2.4" opacity="0.75" transform="rotate(129 1669 298)"/><ellipse cx="1942" cy="532" rx="3.4" ry="3.0" opacity="0.66" transform="rotate(150 1942 532)"/><ellipse cx="1899" cy="837" rx="2.6" ry="2.2" opacity="0.39" transform="rotate(122 1899 837)"/><ellipse cx="1578" cy="765" rx="3.6" ry="2.6" opacity="0.63" transform="rotate(122 1578 765)"/><ellipse cx="1427" cy="858" rx="4.2" ry="2.8" opacity="0.69" transform="rotate(171 1427 858)"/><ellipse cx="1579" cy="717" rx="1.5" ry="1.5" opacity="0.42" transform="rotate(95 1579 717)"/><ellipse cx="1387" cy="703" rx="2.8" ry="2.4" opacity="0.69" transform="rotate(91 1387 703)"/><ellipse cx="1779" cy="770" rx="2.8" ry="1.9" opacity="0.54" transform="rotate(96 1779 770)"/><ellipse cx="1815" cy="476" rx="3.7" ry="2.6" opacity="0.60" transform="rotate(119 1815 476)"/><ellipse cx="1562" cy="641" rx="1.8" ry="1.6" opacity="0.63" transform="rotate(12 1562 641)"/><ellipse cx="1754" cy="623" rx="2.2" ry="2.4" opacity="0.62" transform="rotate(106 1754 623)"/><ellipse cx="1686" cy="626" rx="2.4" ry="2.0" opacity="0.77" transform="rotate(47 1686 626)"/><ellipse cx="1326" cy="697" rx="1.7" ry="1.7" opacity="0.57" transform="rotate(6 1326 697)"/><ellipse cx="1840" cy="820" rx="2.0" ry="1.6" opacity="0.66" transform="rotate(163 1840 820)"/><ellipse cx="1243" cy="687" rx="2.1" ry="1.8" opacity="0.78" transform="rotate(10 1243 687)"/><ellipse cx="1608" cy="613" rx="2.9" ry="3.2" opacity="0.72" transform="rotate(127 1608 613)"/><ellipse cx="1272" cy="797" rx="3.7" ry="2.6" opacity="0.61" transform="rotate(139 1272 797)"/><ellipse cx="1475" cy="512" rx="3.8" ry="3.1" opacity="0.80" transform="rotate(110 1475 512)"/><ellipse cx="1696" cy="648" rx="2.6" ry="2.3" opacity="0.50" transform="rotate(132 1696 648)"/><ellipse cx="1824" cy="666" rx="3.9" ry="3.2" opacity="0.40" transform="rotate(176 1824 666)"/><ellipse cx="1368" cy="383" rx="2.2" ry="1.8" opacity="0.73" transform="rotate(68 1368 383)"/><ellipse cx="1898" cy="540" rx="2.5" ry="2.6" opacity="0.52" transform="rotate(178 1898 540)"/><ellipse cx="1495" cy="908" rx="2.2" ry="1.5" opacity="0.37" transform="rotate(148 1495 908)"/><ellipse cx="1507" cy="464" rx="3.8" ry="2.7" opacity="0.70" transform="rotate(152 1507 464)"/><ellipse cx="1626" cy="750" rx="2.9" ry="2.1" opacity="0.59" transform="rotate(175 1626 750)"/><ellipse cx="1827" cy="407" rx="4.0" ry="2.8" opacity="0.54" transform="rotate(103 1827 407)"/><ellipse cx="1903" cy="489" rx="2.2" ry="2.0" opacity="0.71" transform="rotate(154 1903 489)"/><ellipse cx="1894" cy="572" rx="4.4" ry="3.3" opacity="0.37" transform="rotate(27 1894 572)"/><ellipse cx="1327" cy="611" rx="3.5" ry="2.7" opacity="0.78" transform="rotate(95 1327 611)"/><ellipse cx="1909" cy="543" rx="3.6" ry="3.2" opacity="0.48" transform="rotate(157 1909 543)"/><ellipse cx="1541" cy="530" rx="4.0" ry="3.3" opacity="0.70" transform="rotate(94 1541 530)"/><ellipse cx="1566" cy="431" rx="2.8" ry="1.9" opacity="0.76" transform="rotate(17 1566 431)"/><ellipse cx="1786" cy="379" rx="4.1" ry="2.6" opacity="0.78" transform="rotate(150 1786 379)"/><ellipse cx="1755" cy="699" rx="3.4" ry="2.6" opacity="0.72" transform="rotate(109 1755 699)"/><ellipse cx="1603" cy="292" rx="3.0" ry="2.9" opacity="0.44" transform="rotate(76 1603 292)"/><ellipse cx="1318" cy="870" rx="2.7" ry="2.1" opacity="0.36" transform="rotate(159 1318 870)"/><ellipse cx="1431" cy="629" rx="4.5" ry="2.9" opacity="0.58" transform="rotate(117 1431 629)"/><ellipse cx="1617" cy="747" rx="2.1" ry="1.8" opacity="0.44" transform="rotate(129 1617 747)"/><ellipse cx="1759" cy="810" rx="3.4" ry="2.2" opacity="0.44" transform="rotate(21 1759 810)"/><ellipse cx="1956" cy="695" rx="3.7" ry="2.7" opacity="0.80" transform="rotate(164 1956 695)"/><ellipse cx="1873" cy="833" rx="2.3" ry="1.5" opacity="0.59" transform="rotate(7 1873 833)"/><ellipse cx="1825" cy="681" rx="2.9" ry="2.9" opacity="0.55" transform="rotate(19 1825 681)"/><ellipse cx="1156" cy="571" rx="2.2" ry="1.4" opacity="0.46" transform="rotate(11 1156 571)"/><ellipse cx="1814" cy="454" rx="4.0" ry="2.9" opacity="0.58" transform="rotate(114 1814 454)"/><ellipse cx="1782" cy="900" rx="3.5" ry="2.4" opacity="0.67" transform="rotate(132 1782 900)"/><ellipse cx="1457" cy="551" rx="3.0" ry="3.0" opacity="0.65" transform="rotate(162 1457 551)"/><ellipse cx="1415" cy="725" rx="3.6" ry="3.4" opacity="0.45" transform="rotate(57 1415 725)"/><ellipse cx="1784" cy="900" rx="2.8" ry="2.1" opacity="0.59" transform="rotate(65 1784 900)"/><ellipse cx="1326" cy="866" rx="3.5" ry="2.7" opacity="0.56" transform="rotate(159 1326 866)"/><ellipse cx="1635" cy="958" rx="2.2" ry="1.7" opacity="0.41" transform="rotate(146 1635 958)"/><ellipse cx="1695" cy="934" rx="3.1" ry="2.0" opacity="0.77" transform="rotate(110 1695 934)"/><ellipse cx="1188" cy="732" rx="1.4" ry="1.5" opacity="0.77" transform="rotate(98 1188 732)"/><ellipse cx="1280" cy="635" rx="3.9" ry="2.6" opacity="0.65" transform="rotate(110 1280 635)"/><ellipse cx="1266" cy="523" rx="2.0" ry="2.0" opacity="0.56" transform="rotate(171 1266 523)"/><ellipse cx="1716" cy="554" rx="4.1" ry="3.3" opacity="0.48" transform="rotate(172 1716 554)"/><ellipse cx="1346" cy="661" rx="4.3" ry="3.2" opacity="0.44" transform="rotate(77 1346 661)"/><ellipse cx="1381" cy="598" rx="2.9" ry="2.0" opacity="0.41" transform="rotate(130 1381 598)"/><ellipse cx="1911" cy="710" rx="2.5" ry="1.9" opacity="0.77" transform="rotate(79 1911 710)"/><ellipse cx="1584" cy="891" rx="4.0" ry="3.0" opacity="0.76" transform="rotate(39 1584 891)"/><ellipse cx="1493" cy="318" rx="2.7" ry="2.2" opacity="0.78" transform="rotate(76 1493 318)"/><ellipse cx="1500" cy="876" rx="2.6" ry="2.8" opacity="0.35" transform="rotate(112 1500 876)"/><ellipse cx="1502" cy="910" rx="3.0" ry="2.4" opacity="0.74" transform="rotate(34 1502 910)"/><ellipse cx="1695" cy="916" rx="4.4" ry="2.9" opacity="0.45" transform="rotate(59 1695 916)"/><ellipse cx="1350" cy="532" rx="4.4" ry="3.3" opacity="0.56" transform="rotate(104 1350 532)"/><ellipse cx="1693" cy="770" rx="2.9" ry="3.0" opacity="0.45" transform="rotate(159 1693 770)"/><ellipse cx="1560" cy="745" rx="3.3" ry="2.4" opacity="0.40" transform="rotate(139 1560 745)"/><ellipse cx="1270" cy="766" rx="3.8" ry="3.0" opacity="0.65" transform="rotate(113 1270 766)"/><ellipse cx="1614" cy="885" rx="2.2" ry="2.3" opacity="0.71" transform="rotate(89 1614 885)"/><ellipse cx="1628" cy="449" rx="3.5" ry="2.2" opacity="0.77" transform="rotate(125 1628 449)"/><ellipse cx="1768" cy="647" rx="4.4" ry="2.9" opacity="0.78" transform="rotate(177 1768 647)"/><ellipse cx="1651" cy="560" rx="2.1" ry="1.5" opacity="0.53" transform="rotate(70 1651 560)"/><ellipse cx="1394" cy="483" rx="2.6" ry="1.8" opacity="0.59" transform="rotate(96 1394 483)"/><ellipse cx="1422" cy="556" rx="2.1" ry="1.4" opacity="0.71" transform="rotate(123 1422 556)"/><ellipse cx="1729" cy="663" rx="3.0" ry="2.0" opacity="0.53" transform="rotate(71 1729 663)"/><ellipse cx="1343" cy="755" rx="3.4" ry="2.5" opacity="0.62" transform="rotate(66 1343 755)"/><ellipse cx="1639" cy="892" rx="1.6" ry="1.5" opacity="0.54" transform="rotate(57 1639 892)"/><ellipse cx="1243" cy="723" rx="3.4" ry="3.2" opacity="0.60" transform="rotate(15 1243 723)"/><ellipse cx="1320" cy="715" rx="1.9" ry="1.5" opacity="0.76" transform="rotate(174 1320 715)"/><ellipse cx="1564" cy="427" rx="2.8" ry="2.7" opacity="0.70" transform="rotate(17 1564 427)"/><ellipse cx="1200" cy="838" rx="3.9" ry="2.5" opacity="0.72" transform="rotate(46 1200 838)"/><ellipse cx="1303" cy="457" rx="2.6" ry="2.0" opacity="0.76" transform="rotate(100 1303 457)"/><ellipse cx="1421" cy="681" rx="2.1" ry="2.1" opacity="0.79" transform="rotate(169 1421 681)"/><ellipse cx="1885" cy="862" rx="3.9" ry="3.2" opacity="0.49" transform="rotate(96 1885 862)"/><ellipse cx="1396" cy="912" rx="2.4" ry="1.7" opacity="0.54" transform="rotate(72 1396 912)"/><ellipse cx="1760" cy="773" rx="2.3" ry="1.8" opacity="0.43" transform="rotate(179 1760 773)"/><ellipse cx="1190" cy="733" rx="4.2" ry="2.7" opacity="0.42" transform="rotate(99 1190 733)"/><ellipse cx="1955" cy="511" rx="1.9" ry="2.1" opacity="0.75" transform="rotate(167 1955 511)"/><ellipse cx="1378" cy="811" rx="1.7" ry="1.6" opacity="0.60" transform="rotate(116 1378 811)"/><ellipse cx="1344" cy="537" rx="2.9" ry="2.6" opacity="0.74" transform="rotate(43 1344 537)"/><ellipse cx="1351" cy="690" rx="3.8" ry="2.8" opacity="0.73" transform="rotate(121 1351 690)"/><ellipse cx="1257" cy="449" rx="4.6" ry="3.3" opacity="0.67" transform="rotate(88 1257 449)"/><ellipse cx="1627" cy="555" rx="4.1" ry="3.4" opacity="0.44" transform="rotate(23 1627 555)"/><ellipse cx="1412" cy="909" rx="4.5" ry="2.9" opacity="0.66" transform="rotate(17 1412 909)"/><ellipse cx="1233" cy="486" rx="3.0" ry="2.8" opacity="0.68" transform="rotate(11 1233 486)"/><ellipse cx="1763" cy="752" rx="1.6" ry="1.5" opacity="0.75" transform="rotate(3 1763 752)"/><ellipse cx="1630" cy="653" rx="5.2" ry="3.3" opacity="0.71" transform="rotate(44 1630 653)"/><ellipse cx="1694" cy="496" rx="2.3" ry="2.3" opacity="0.63" transform="rotate(22 1694 496)"/><ellipse cx="1820" cy="727" rx="3.2" ry="2.1" opacity="0.79" transform="rotate(46 1820 727)"/><ellipse cx="1833" cy="700" rx="2.8" ry="3.0" opacity="0.70" transform="rotate(61 1833 700)"/><ellipse cx="1251" cy="863" rx="4.8" ry="3.2" opacity="0.73" transform="rotate(164 1251 863)"/><ellipse cx="1504" cy="545" rx="2.9" ry="2.2" opacity="0.44" transform="rotate(177 1504 545)"/><ellipse cx="1284" cy="610" rx="2.2" ry="1.8" opacity="0.39" transform="rotate(131 1284 610)"/><ellipse cx="1517" cy="495" rx="3.2" ry="3.4" opacity="0.48" transform="rotate(124 1517 495)"/><ellipse cx="1918" cy="742" rx="1.8" ry="1.9" opacity="0.72" transform="rotate(66 1918 742)"/><ellipse cx="1420" cy="853" rx="3.7" ry="2.5" opacity="0.53" transform="rotate(9 1420 853)"/><ellipse cx="1466" cy="651" rx="3.2" ry="2.5" opacity="0.67" transform="rotate(172 1466 651)"/><ellipse cx="1156" cy="737" rx="4.4" ry="2.9" opacity="0.64" transform="rotate(123 1156 737)"/><ellipse cx="1676" cy="767" rx="3.5" ry="3.0" opacity="0.58" transform="rotate(40 1676 767)"/><ellipse cx="1353" cy="628" rx="2.2" ry="1.4" opacity="0.77" transform="rotate(0 1353 628)"/><ellipse cx="1284" cy="506" rx="3.1" ry="3.2" opacity="0.43" transform="rotate(83 1284 506)"/><ellipse cx="1484" cy="598" rx="1.5" ry="1.6" opacity="0.39" transform="rotate(172 1484 598)"/><ellipse cx="1452" cy="710" rx="2.1" ry="1.8" opacity="0.55" transform="rotate(12 1452 710)"/><ellipse cx="1688" cy="940" rx="2.5" ry="2.0" opacity="0.54" transform="rotate(7 1688 940)"/><ellipse cx="1856" cy="632" rx="3.0" ry="3.2" opacity="0.36" transform="rotate(46 1856 632)"/><ellipse cx="1189" cy="632" rx="3.1" ry="2.3" opacity="0.40" transform="rotate(61 1189 632)"/><ellipse cx="1773" cy="840" rx="3.8" ry="2.8" opacity="0.76" transform="rotate(86 1773 840)"/><ellipse cx="1502" cy="660" rx="2.2" ry="1.6" opacity="0.39" transform="rotate(58 1502 660)"/><ellipse cx="1594" cy="345" rx="2.2" ry="1.8" opacity="0.48" transform="rotate(22 1594 345)"/><ellipse cx="1659" cy="940" rx="1.5" ry="1.5" opacity="0.72" transform="rotate(33 1659 940)"/><ellipse cx="1295" cy="406" rx="2.1" ry="1.9" opacity="0.52" transform="rotate(43 1295 406)"/><ellipse cx="1763" cy="747" rx="1.9" ry="1.8" opacity="0.43" transform="rotate(134 1763 747)"/><ellipse cx="1255" cy="902" rx="3.6" ry="2.7" opacity="0.52" transform="rotate(33 1255 902)"/><ellipse cx="1755" cy="915" rx="5.1" ry="3.2" opacity="0.66" transform="rotate(53 1755 915)"/><ellipse cx="1762" cy="509" rx="3.9" ry="2.7" opacity="0.46" transform="rotate(125 1762 509)"/><ellipse cx="1563" cy="589" rx="3.4" ry="2.2" opacity="0.75" transform="rotate(93 1563 589)"/><ellipse cx="1628" cy="745" rx="3.7" ry="3.1" opacity="0.80" transform="rotate(159 1628 745)"/><ellipse cx="1444" cy="506" rx="2.1" ry="1.9" opacity="0.74" transform="rotate(157 1444 506)"/><ellipse cx="1482" cy="664" rx="2.5" ry="2.5" opacity="0.73" transform="rotate(21 1482 664)"/><ellipse cx="1266" cy="858" rx="3.4" ry="2.6" opacity="0.78" transform="rotate(115 1266 858)"/><ellipse cx="1839" cy="557" rx="1.9" ry="1.5" opacity="0.59" transform="rotate(98 1839 557)"/><ellipse cx="1958" cy="766" rx="2.8" ry="1.8" opacity="0.63" transform="rotate(166 1958 766)"/><ellipse cx="1377" cy="812" rx="4.9" ry="3.4" opacity="0.79" transform="rotate(121 1377 812)"/><ellipse cx="1380" cy="870" rx="4.9" ry="3.4" opacity="0.45" transform="rotate(139 1380 870)"/><ellipse cx="1519" cy="334" rx="2.4" ry="1.6" opacity="0.51" transform="rotate(74 1519 334)"/><ellipse cx="1773" cy="423" rx="4.1" ry="3.0" opacity="0.62" transform="rotate(134 1773 423)"/><ellipse cx="1315" cy="825" rx="2.9" ry="1.8" opacity="0.43" transform="rotate(26 1315 825)"/><ellipse cx="1883" cy="564" rx="2.2" ry="1.8" opacity="0.59" transform="rotate(69 1883 564)"/><ellipse cx="1563" cy="255" rx="4.4" ry="3.4" opacity="0.73" transform="rotate(34 1563 255)"/><ellipse cx="1456" cy="832" rx="2.3" ry="2.4" opacity="0.54" transform="rotate(19 1456 832)"/><ellipse cx="1588" cy="649" rx="4.4" ry="3.2" opacity="0.71" transform="rotate(28 1588 649)"/><ellipse cx="1876" cy="633" rx="2.3" ry="2.5" opacity="0.65" transform="rotate(73 1876 633)"/><ellipse cx="1679" cy="672" rx="1.6" ry="1.5" opacity="0.46" transform="rotate(131 1679 672)"/><ellipse cx="1301" cy="386" rx="4.7" ry="3.1" opacity="0.72" transform="rotate(61 1301 386)"/><ellipse cx="1473" cy="797" rx="2.0" ry="1.9" opacity="0.61" transform="rotate(51 1473 797)"/><ellipse cx="1951" cy="614" rx="3.1" ry="2.5" opacity="0.62" transform="rotate(131 1951 614)"/><ellipse cx="1678" cy="576" rx="1.8" ry="1.6" opacity="0.64" transform="rotate(123 1678 576)"/><ellipse cx="1700" cy="509" rx="2.3" ry="1.7" opacity="0.39" transform="rotate(84 1700 509)"/><ellipse cx="1670" cy="724" rx="2.6" ry="2.2" opacity="0.58" transform="rotate(88 1670 724)"/><ellipse cx="1720" cy="826" rx="2.9" ry="2.2" opacity="0.37" transform="rotate(11 1720 826)"/><ellipse cx="1695" cy="946" rx="4.4" ry="2.8" opacity="0.65" transform="rotate(109 1695 946)"/><ellipse cx="1953" cy="655" rx="2.7" ry="2.3" opacity="0.78" transform="rotate(22 1953 655)"/><ellipse cx="1348" cy="850" rx="2.8" ry="1.9" opacity="0.75" transform="rotate(2 1348 850)"/><ellipse cx="1702" cy="588" rx="3.2" ry="2.1" opacity="0.67" transform="rotate(72 1702 588)"/><ellipse cx="1478" cy="739" rx="2.3" ry="1.9" opacity="0.76" transform="rotate(125 1478 739)"/><ellipse cx="1263" cy="571" rx="3.5" ry="2.7" opacity="0.46" transform="rotate(151 1263 571)"/><ellipse cx="1596" cy="743" rx="2.9" ry="2.5" opacity="0.57" transform="rotate(140 1596 743)"/><ellipse cx="1552" cy="582" rx="2.1" ry="1.4" opacity="0.56" transform="rotate(47 1552 582)"/><ellipse cx="1759" cy="880" rx="2.1" ry="2.0" opacity="0.48" transform="rotate(35 1759 880)"/><ellipse cx="1212" cy="527" rx="2.4" ry="2.1" opacity="0.71" transform="rotate(72 1212 527)"/><ellipse cx="1554" cy="915" rx="2.3" ry="1.6" opacity="0.45" transform="rotate(169 1554 915)"/><ellipse cx="1720" cy="382" rx="3.9" ry="2.7" opacity="0.38" transform="rotate(20 1720 382)"/><ellipse cx="1504" cy="917" rx="1.8" ry="1.5" opacity="0.74" transform="rotate(138 1504 917)"/><ellipse cx="1567" cy="310" rx="3.1" ry="2.7" opacity="0.43" transform="rotate(13 1567 310)"/><ellipse cx="1562" cy="405" rx="2.9" ry="2.5" opacity="0.64" transform="rotate(23 1562 405)"/><ellipse cx="1314" cy="839" rx="2.8" ry="2.0" opacity="0.45" transform="rotate(142 1314 839)"/><ellipse cx="1339" cy="762" rx="3.4" ry="2.5" opacity="0.75" transform="rotate(112 1339 762)"/><ellipse cx="1606" cy="576" rx="1.7" ry="1.5" opacity="0.51" transform="rotate(119 1606 576)"/><ellipse cx="1231" cy="709" rx="2.4" ry="2.4" opacity="0.42" transform="rotate(162 1231 709)"/><ellipse cx="1846" cy="370" rx="3.0" ry="2.8" opacity="0.56" transform="rotate(35 1846 370)"/><ellipse cx="1447" cy="572" rx="2.2" ry="1.8" opacity="0.63" transform="rotate(83 1447 572)"/><ellipse cx="1647" cy="884" rx="4.1" ry="2.5" opacity="0.75" transform="rotate(73 1647 884)"/><ellipse cx="1277" cy="492" rx="3.2" ry="2.2" opacity="0.76" transform="rotate(25 1277 492)"/><ellipse cx="1282" cy="606" rx="2.8" ry="1.9" opacity="0.60" transform="rotate(30 1282 606)"/><ellipse cx="1778" cy="680" rx="1.9" ry="1.9" opacity="0.56" transform="rotate(117 1778 680)"/><ellipse cx="1372" cy="839" rx="3.9" ry="2.6" opacity="0.53" transform="rotate(4 1372 839)"/><ellipse cx="1293" cy="648" rx="3.2" ry="2.8" opacity="0.65" transform="rotate(26 1293 648)"/><ellipse cx="1707" cy="910" rx="3.2" ry="3.3" opacity="0.49" transform="rotate(126 1707 910)"/><ellipse cx="1666" cy="432" rx="2.4" ry="2.2" opacity="0.71" transform="rotate(108 1666 432)"/><ellipse cx="1362" cy="543" rx="2.0" ry="1.5" opacity="0.70" transform="rotate(85 1362 543)"/><ellipse cx="1343" cy="515" rx="4.0" ry="3.3" opacity="0.62" transform="rotate(65 1343 515)"/><ellipse cx="1361" cy="535" rx="2.7" ry="2.6" opacity="0.59" transform="rotate(96 1361 535)"/><ellipse cx="1364" cy="635" rx="3.9" ry="2.9" opacity="0.63" transform="rotate(144 1364 635)"/><ellipse cx="1811" cy="729" rx="2.7" ry="2.9" opacity="0.37" transform="rotate(47 1811 729)"/><ellipse cx="1575" cy="319" rx="2.7" ry="1.9" opacity="0.66" transform="rotate(45 1575 319)"/><ellipse cx="1482" cy="826" rx="4.1" ry="2.8" opacity="0.57" transform="rotate(44 1482 826)"/><ellipse cx="1408" cy="694" rx="1.9" ry="1.5" opacity="0.66" transform="rotate(177 1408 694)"/><ellipse cx="1333" cy="588" rx="2.1" ry="1.5" opacity="0.39" transform="rotate(94 1333 588)"/><ellipse cx="1301" cy="771" rx="4.6" ry="3.4" opacity="0.74" transform="rotate(11 1301 771)"/><ellipse cx="1670" cy="452" rx="2.4" ry="2.4" opacity="0.76" transform="rotate(80 1670 452)"/><ellipse cx="1302" cy="828" rx="3.2" ry="2.1" opacity="0.63" transform="rotate(152 1302 828)"/><ellipse cx="1624" cy="686" rx="4.5" ry="3.4" opacity="0.75" transform="rotate(151 1624 686)"/><ellipse cx="1842" cy="511" rx="1.8" ry="1.7" opacity="0.37" transform="rotate(66 1842 511)"/><ellipse cx="1578" cy="592" rx="4.9" ry="3.4" opacity="0.54" transform="rotate(80 1578 592)"/><ellipse cx="1614" cy="797" rx="2.7" ry="1.8" opacity="0.48" transform="rotate(97 1614 797)"/><ellipse cx="1387" cy="915" rx="1.6" ry="1.7" opacity="0.73" transform="rotate(117 1387 915)"/><ellipse cx="1457" cy="538" rx="1.6" ry="1.6" opacity="0.66" transform="rotate(79 1457 538)"/><ellipse cx="1860" cy="495" rx="4.0" ry="2.7" opacity="0.79" transform="rotate(55 1860 495)"/><ellipse cx="1316" cy="635" rx="2.3" ry="2.0" opacity="0.70" transform="rotate(35 1316 635)"/><ellipse cx="1476" cy="513" rx="2.7" ry="2.8" opacity="0.69" transform="rotate(3 1476 513)"/><ellipse cx="1702" cy="646" rx="4.7" ry="3.4" opacity="0.47" transform="rotate(101 1702 646)"/><ellipse cx="1272" cy="619" rx="3.5" ry="2.8" opacity="0.75" transform="rotate(152 1272 619)"/><ellipse cx="1275" cy="612" rx="3.4" ry="3.3" opacity="0.75" transform="rotate(61 1275 612)"/><ellipse cx="1919" cy="469" rx="2.4" ry="1.7" opacity="0.51" transform="rotate(110 1919 469)"/><ellipse cx="1728" cy="390" rx="2.1" ry="2.0" opacity="0.50" transform="rotate(94 1728 390)"/><ellipse cx="1830" cy="803" rx="4.0" ry="3.2" opacity="0.60" transform="rotate(64 1830 803)"/><ellipse cx="1438" cy="619" rx="3.0" ry="2.3" opacity="0.75" transform="rotate(81 1438 619)"/><ellipse cx="1454" cy="692" rx="2.1" ry="2.1" opacity="0.55" transform="rotate(93 1454 692)"/><ellipse cx="1426" cy="878" rx="4.2" ry="2.7" opacity="0.59" transform="rotate(94 1426 878)"/><ellipse cx="1668" cy="792" rx="4.1" ry="2.7" opacity="0.52" transform="rotate(175 1668 792)"/><ellipse cx="1275" cy="678" rx="3.4" ry="2.3" opacity="0.74" transform="rotate(84 1275 678)"/><ellipse cx="1655" cy="423" rx="3.0" ry="2.2" opacity="0.57" transform="rotate(159 1655 423)"/><ellipse cx="1857" cy="543" rx="3.1" ry="3.0" opacity="0.78" transform="rotate(95 1857 543)"/><ellipse cx="1890" cy="735" rx="3.7" ry="2.4" opacity="0.55" transform="rotate(118 1890 735)"/><ellipse cx="1292" cy="905" rx="2.8" ry="2.7" opacity="0.37" transform="rotate(107 1292 905)"/><ellipse cx="1683" cy="789" rx="2.2" ry="1.6" opacity="0.77" transform="rotate(51 1683 789)"/><ellipse cx="1403" cy="911" rx="3.7" ry="2.9" opacity="0.38" transform="rotate(48 1403 911)"/><ellipse cx="1863" cy="772" rx="1.8" ry="1.5" opacity="0.71" transform="rotate(125 1863 772)"/><ellipse cx="1337" cy="716" rx="1.8" ry="1.4" opacity="0.43" transform="rotate(149 1337 716)"/><ellipse cx="1340" cy="730" rx="2.3" ry="1.9" opacity="0.46" transform="rotate(130 1340 730)"/><ellipse cx="1567" cy="520" rx="2.9" ry="1.8" opacity="0.45" transform="rotate(97 1567 520)"/><ellipse cx="1223" cy="597" rx="2.8" ry="2.3" opacity="0.54" transform="rotate(131 1223 597)"/><ellipse cx="1558" cy="898" rx="1.5" ry="1.5" opacity="0.41" transform="rotate(121 1558 898)"/><ellipse cx="1867" cy="388" rx="3.2" ry="3.3" opacity="0.36" transform="rotate(66 1867 388)"/><ellipse cx="1903" cy="660" rx="4.2" ry="3.2" opacity="0.48" transform="rotate(168 1903 660)"/><ellipse cx="1298" cy="494" rx="3.3" ry="2.2" opacity="0.54" transform="rotate(27 1298 494)"/><ellipse cx="1887" cy="690" rx="3.5" ry="3.1" opacity="0.52" transform="rotate(169 1887 690)"/><ellipse cx="1199" cy="656" rx="2.2" ry="1.9" opacity="0.62" transform="rotate(82 1199 656)"/><ellipse cx="1413" cy="875" rx="3.1" ry="3.1" opacity="0.65" transform="rotate(91 1413 875)"/><ellipse cx="1794" cy="750" rx="1.9" ry="1.5" opacity="0.58" transform="rotate(58 1794 750)"/><ellipse cx="1661" cy="772" rx="3.4" ry="2.8" opacity="0.75" transform="rotate(111 1661 772)"/><ellipse cx="1392" cy="818" rx="2.1" ry="2.3" opacity="0.54" transform="rotate(27 1392 818)"/><ellipse cx="1836" cy="777" rx="4.6" ry="3.0" opacity="0.67" transform="rotate(102 1836 777)"/><ellipse cx="1410" cy="544" rx="3.9" ry="3.0" opacity="0.66" transform="rotate(113 1410 544)"/><ellipse cx="1386" cy="739" rx="3.7" ry="2.7" opacity="0.64" transform="rotate(45 1386 739)"/><ellipse cx="1593" cy="559" rx="5.0" ry="3.2" opacity="0.77" transform="rotate(89 1593 559)"/><ellipse cx="1260" cy="697" rx="3.3" ry="2.8" opacity="0.40" transform="rotate(38 1260 697)"/><ellipse cx="1493" cy="571" rx="2.0" ry="2.1" opacity="0.71" transform="rotate(168 1493 571)"/><ellipse cx="1505" cy="610" rx="4.9" ry="3.2" opacity="0.79" transform="rotate(73 1505 610)"/><ellipse cx="1741" cy="911" rx="3.8" ry="2.4" opacity="0.77" transform="rotate(123 1741 911)"/><ellipse cx="1443" cy="297" rx="2.2" ry="2.1" opacity="0.69" transform="rotate(152 1443 297)"/><ellipse cx="1705" cy="763" rx="2.9" ry="2.8" opacity="0.79" transform="rotate(112 1705 763)"/><ellipse cx="1357" cy="878" rx="3.4" ry="3.3" opacity="0.57" transform="rotate(115 1357 878)"/><ellipse cx="1637" cy="514" rx="5.1" ry="3.2" opacity="0.44" transform="rotate(125 1637 514)"/><ellipse cx="1419" cy="891" rx="2.1" ry="1.4" opacity="0.66" transform="rotate(138 1419 891)"/><ellipse cx="1556" cy="792" rx="3.3" ry="2.5" opacity="0.60" transform="rotate(114 1556 792)"/><ellipse cx="1870" cy="794" rx="2.9" ry="2.2" opacity="0.45" transform="rotate(156 1870 794)"/><ellipse cx="1679" cy="725" rx="2.7" ry="2.0" opacity="0.40" transform="rotate(115 1679 725)"/><ellipse cx="1519" cy="546" rx="3.6" ry="2.9" opacity="0.50" transform="rotate(115 1519 546)"/><ellipse cx="1483" cy="865" rx="2.8" ry="2.6" opacity="0.60" transform="rotate(150 1483 865)"/><ellipse cx="1332" cy="523" rx="2.9" ry="2.5" opacity="0.38" transform="rotate(10 1332 523)"/><ellipse cx="1802" cy="590" rx="3.5" ry="2.6" opacity="0.71" transform="rotate(145 1802 590)"/><ellipse cx="1952" cy="633" rx="3.2" ry="2.3" opacity="0.40" transform="rotate(61 1952 633)"/><ellipse cx="1178" cy="662" rx="2.1" ry="1.7" opacity="0.61" transform="rotate(28 1178 662)"/><ellipse cx="1263" cy="511" rx="3.5" ry="2.6" opacity="0.37" transform="rotate(150 1263 511)"/><ellipse cx="1725" cy="690" rx="2.5" ry="1.7" opacity="0.44" transform="rotate(31 1725 690)"/><ellipse cx="1787" cy="682" rx="1.9" ry="1.5" opacity="0.52" transform="rotate(179 1787 682)"/><ellipse cx="1473" cy="304" rx="3.6" ry="2.5" opacity="0.76" transform="rotate(163 1473 304)"/><ellipse cx="1523" cy="890" rx="1.8" ry="1.5" opacity="0.39" transform="rotate(128 1523 890)"/><ellipse cx="1750" cy="913" rx="5.4" ry="3.4" opacity="0.79" transform="rotate(62 1750 913)"/><ellipse cx="1489" cy="752" rx="5.2" ry="3.4" opacity="0.73" transform="rotate(83 1489 752)"/><ellipse cx="1877" cy="749" rx="3.5" ry="2.4" opacity="0.64" transform="rotate(55 1877 749)"/><ellipse cx="1642" cy="380" rx="4.5" ry="3.1" opacity="0.70" transform="rotate(20 1642 380)"/><ellipse cx="1146" cy="632" rx="1.9" ry="1.5" opacity="0.80" transform="rotate(90 1146 632)"/><ellipse cx="1877" cy="692" rx="4.9" ry="3.2" opacity="0.56" transform="rotate(84 1877 692)"/><ellipse cx="1149" cy="694" rx="2.3" ry="1.6" opacity="0.44" transform="rotate(92 1149 694)"/><ellipse cx="1515" cy="597" rx="4.1" ry="2.7" opacity="0.55" transform="rotate(132 1515 597)"/><ellipse cx="1524" cy="856" rx="2.6" ry="1.8" opacity="0.40" transform="rotate(68 1524 856)"/><ellipse cx="1916" cy="813" rx="2.8" ry="1.8" opacity="0.66" transform="rotate(142 1916 813)"/><ellipse cx="1595" cy="602" rx="2.5" ry="2.2" opacity="0.45" transform="rotate(52 1595 602)"/><ellipse cx="1937" cy="773" rx="3.5" ry="2.7" opacity="0.48" transform="rotate(72 1937 773)"/><ellipse cx="1727" cy="787" rx="3.0" ry="3.3" opacity="0.77" transform="rotate(164 1727 787)"/><ellipse cx="1436" cy="547" rx="2.7" ry="2.3" opacity="0.78" transform="rotate(107 1436 547)"/><ellipse cx="1447" cy="657" rx="2.3" ry="1.9" opacity="0.56" transform="rotate(121 1447 657)"/><ellipse cx="1617" cy="748" rx="2.1" ry="2.3" opacity="0.61" transform="rotate(112 1617 748)"/><ellipse cx="1383" cy="420" rx="3.9" ry="2.7" opacity="0.48" transform="rotate(150 1383 420)"/><ellipse cx="1840" cy="379" rx="2.6" ry="2.3" opacity="0.69" transform="rotate(171 1840 379)"/><ellipse cx="1261" cy="453" rx="3.6" ry="2.3" opacity="0.51" transform="rotate(172 1261 453)"/><ellipse cx="1442" cy="533" rx="1.8" ry="1.6" opacity="0.54" transform="rotate(166 1442 533)"/><ellipse cx="1498" cy="366" rx="4.4" ry="2.8" opacity="0.48" transform="rotate(170 1498 366)"/><ellipse cx="1779" cy="904" rx="4.8" ry="3.1" opacity="0.39" transform="rotate(55 1779 904)"/><ellipse cx="1647" cy="461" rx="2.0" ry="1.7" opacity="0.51" transform="rotate(171 1647 461)"/><ellipse cx="1456" cy="401" rx="4.2" ry="2.9" opacity="0.41" transform="rotate(170 1456 401)"/><ellipse cx="1844" cy="491" rx="3.7" ry="2.8" opacity="0.70" transform="rotate(142 1844 491)"/><ellipse cx="1869" cy="453" rx="2.1" ry="1.6" opacity="0.78" transform="rotate(150 1869 453)"/><ellipse cx="1534" cy="864" rx="2.4" ry="2.4" opacity="0.40" transform="rotate(175 1534 864)"/><ellipse cx="1609" cy="715" rx="2.7" ry="1.7" opacity="0.80" transform="rotate(132 1609 715)"/><ellipse cx="1240" cy="661" rx="4.3" ry="2.9" opacity="0.70" transform="rotate(24 1240 661)"/><ellipse cx="1288" cy="819" rx="2.9" ry="2.5" opacity="0.51" transform="rotate(70 1288 819)"/><ellipse cx="1595" cy="549" rx="3.1" ry="2.8" opacity="0.44" transform="rotate(41 1595 549)"/><ellipse cx="1731" cy="796" rx="4.6" ry="3.4" opacity="0.37" transform="rotate(38 1731 796)"/><ellipse cx="1896" cy="645" rx="2.8" ry="1.9" opacity="0.43" transform="rotate(8 1896 645)"/><ellipse cx="1535" cy="362" rx="1.6" ry="1.5" opacity="0.77" transform="rotate(151 1535 362)"/><ellipse cx="1452" cy="817" rx="3.5" ry="2.8" opacity="0.58" transform="rotate(11 1452 817)"/><ellipse cx="1282" cy="402" rx="2.1" ry="1.8" opacity="0.69" transform="rotate(42 1282 402)"/><ellipse cx="1433" cy="664" rx="1.9" ry="1.5" opacity="0.75" transform="rotate(49 1433 664)"/><ellipse cx="1311" cy="610" rx="3.5" ry="2.5" opacity="0.48" transform="rotate(44 1311 610)"/><ellipse cx="1511" cy="679" rx="3.0" ry="3.2" opacity="0.70" transform="rotate(124 1511 679)"/><ellipse cx="1628" cy="605" rx="2.4" ry="2.0" opacity="0.43" transform="rotate(140 1628 605)"/><ellipse cx="1593" cy="458" rx="2.4" ry="1.6" opacity="0.79" transform="rotate(142 1593 458)"/><ellipse cx="1714" cy="744" rx="2.8" ry="2.1" opacity="0.40" transform="rotate(175 1714 744)"/><ellipse cx="1665" cy="742" rx="2.2" ry="1.8" opacity="0.63" transform="rotate(30 1665 742)"/><ellipse cx="1694" cy="569" rx="2.2" ry="1.7" opacity="0.72" transform="rotate(170 1694 569)"/><ellipse cx="1319" cy="743" rx="2.8" ry="2.3" opacity="0.52" transform="rotate(44 1319 743)"/><ellipse cx="1741" cy="511" rx="2.5" ry="2.2" opacity="0.65" transform="rotate(131 1741 511)"/><ellipse cx="1563" cy="484" rx="1.6" ry="1.4" opacity="0.45" transform="rotate(34 1563 484)"/><ellipse cx="1171" cy="570" rx="2.3" ry="1.7" opacity="0.36" transform="rotate(99 1171 570)"/><ellipse cx="1710" cy="934" rx="3.5" ry="2.7" opacity="0.74" transform="rotate(20 1710 934)"/><ellipse cx="1764" cy="512" rx="2.7" ry="2.6" opacity="0.39" transform="rotate(158 1764 512)"/><ellipse cx="1689" cy="839" rx="2.3" ry="2.5" opacity="0.37" transform="rotate(4 1689 839)"/><ellipse cx="1739" cy="361" rx="3.0" ry="2.6" opacity="0.56" transform="rotate(8 1739 361)"/><ellipse cx="1330" cy="886" rx="1.9" ry="1.5" opacity="0.67" transform="rotate(173 1330 886)"/><ellipse cx="1479" cy="925" rx="5.1" ry="3.3" opacity="0.72" transform="rotate(110 1479 925)"/><ellipse cx="1660" cy="389" rx="4.4" ry="3.2" opacity="0.71" transform="rotate(41 1660 389)"/><ellipse cx="1364" cy="828" rx="2.3" ry="1.8" opacity="0.65" transform="rotate(164 1364 828)"/><ellipse cx="1568" cy="785" rx="3.1" ry="2.5" opacity="0.71" transform="rotate(107 1568 785)"/><ellipse cx="1462" cy="502" rx="3.7" ry="2.3" opacity="0.75" transform="rotate(67 1462 502)"/><ellipse cx="1352" cy="828" rx="2.3" ry="1.6" opacity="0.79" transform="rotate(94 1352 828)"/><ellipse cx="1768" cy="856" rx="2.1" ry="1.5" opacity="0.59" transform="rotate(130 1768 856)"/><ellipse cx="1914" cy="753" rx="3.9" ry="3.2" opacity="0.60" transform="rotate(119 1914 753)"/><ellipse cx="1430" cy="491" rx="4.4" ry="3.2" opacity="0.50" transform="rotate(145 1430 491)"/><ellipse cx="1816" cy="501" rx="4.0" ry="2.9" opacity="0.37" transform="rotate(107 1816 501)"/><ellipse cx="1674" cy="798" rx="3.3" ry="2.7" opacity="0.74" transform="rotate(20 1674 798)"/><ellipse cx="1229" cy="597" rx="3.3" ry="3.3" opacity="0.48" transform="rotate(28 1229 597)"/><ellipse cx="1678" cy="708" rx="3.5" ry="2.4" opacity="0.72" transform="rotate(22 1678 708)"/><ellipse cx="1725" cy="720" rx="2.8" ry="1.9" opacity="0.60" transform="rotate(27 1725 720)"/><ellipse cx="1671" cy="451" rx="2.7" ry="2.9" opacity="0.48" transform="rotate(115 1671 451)"/><ellipse cx="1662" cy="396" rx="5.1" ry="3.3" opacity="0.73" transform="rotate(172 1662 396)"/><ellipse cx="1750" cy="592" rx="3.3" ry="2.3" opacity="0.64" transform="rotate(143 1750 592)"/><ellipse cx="1793" cy="547" rx="3.2" ry="2.6" opacity="0.77" transform="rotate(161 1793 547)"/><ellipse cx="1844" cy="736" rx="3.1" ry="2.0" opacity="0.70" transform="rotate(67 1844 736)"/><ellipse cx="1281" cy="618" rx="1.8" ry="1.5" opacity="0.55" transform="rotate(173 1281 618)"/><ellipse cx="1720" cy="462" rx="3.7" ry="2.4" opacity="0.70" transform="rotate(72 1720 462)"/><ellipse cx="1838" cy="438" rx="2.5" ry="2.7" opacity="0.62" transform="rotate(12 1838 438)"/><ellipse cx="1359" cy="573" rx="3.0" ry="2.2" opacity="0.38" transform="rotate(94 1359 573)"/><ellipse cx="1912" cy="564" rx="2.4" ry="1.8" opacity="0.70" transform="rotate(179 1912 564)"/><ellipse cx="1248" cy="702" rx="4.8" ry="3.1" opacity="0.37" transform="rotate(89 1248 702)"/><ellipse cx="1628" cy="672" rx="3.7" ry="2.6" opacity="0.65" transform="rotate(85 1628 672)"/><ellipse cx="1554" cy="703" rx="4.0" ry="2.6" opacity="0.57" transform="rotate(102 1554 703)"/><ellipse cx="1391" cy="480" rx="3.4" ry="2.6" opacity="0.48" transform="rotate(81 1391 480)"/><ellipse cx="1316" cy="892" rx="2.1" ry="2.2" opacity="0.58" transform="rotate(3 1316 892)"/><ellipse cx="1137" cy="717" rx="2.7" ry="1.8" opacity="0.70" transform="rotate(59 1137 717)"/><ellipse cx="1584" cy="911" rx="4.3" ry="2.9" opacity="0.58" transform="rotate(42 1584 911)"/><ellipse cx="1785" cy="745" rx="4.2" ry="3.1" opacity="0.41" transform="rotate(87 1785 745)"/><ellipse cx="1446" cy="463" rx="4.0" ry="2.5" opacity="0.39" transform="rotate(58 1446 463)"/><ellipse cx="1646" cy="844" rx="3.8" ry="2.6" opacity="0.48" transform="rotate(165 1646 844)"/><ellipse cx="1372" cy="519" rx="2.0" ry="2.1" opacity="0.43" transform="rotate(118 1372 519)"/><ellipse cx="1449" cy="348" rx="4.5" ry="3.4" opacity="0.35" transform="rotate(2 1449 348)"/><ellipse cx="1846" cy="689" rx="5.2" ry="3.4" opacity="0.50" transform="rotate(123 1846 689)"/><ellipse cx="1395" cy="348" rx="5.2" ry="3.4" opacity="0.69" transform="rotate(12 1395 348)"/><ellipse cx="1891" cy="583" rx="4.2" ry="3.2" opacity="0.69" transform="rotate(165 1891 583)"/><ellipse cx="1253" cy="620" rx="3.0" ry="2.6" opacity="0.72" transform="rotate(171 1253 620)"/><ellipse cx="1756" cy="795" rx="2.3" ry="2.3" opacity="0.56" transform="rotate(119 1756 795)"/><ellipse cx="1644" cy="794" rx="2.3" ry="1.5" opacity="0.42" transform="rotate(53 1644 794)"/><ellipse cx="1415" cy="631" rx="4.1" ry="2.6" opacity="0.37" transform="rotate(113 1415 631)"/><ellipse cx="1815" cy="534" rx="2.9" ry="3.1" opacity="0.77" transform="rotate(85 1815 534)"/><ellipse cx="1266" cy="883" rx="3.3" ry="3.0" opacity="0.70" transform="rotate(16 1266 883)"/><ellipse cx="1451" cy="822" rx="4.0" ry="3.1" opacity="0.43" transform="rotate(158 1451 822)"/><ellipse cx="1442" cy="385" rx="3.2" ry="2.6" opacity="0.55" transform="rotate(35 1442 385)"/><ellipse cx="1272" cy="510" rx="2.8" ry="2.3" opacity="0.54" transform="rotate(142 1272 510)"/><ellipse cx="1467" cy="734" rx="4.3" ry="2.9" opacity="0.43" transform="rotate(27 1467 734)"/><ellipse cx="1337" cy="755" rx="1.9" ry="1.4" opacity="0.78" transform="rotate(82 1337 755)"/><ellipse cx="1977" cy="736" rx="3.3" ry="2.4" opacity="0.50" transform="rotate(17 1977 736)"/><ellipse cx="1368" cy="699" rx="2.2" ry="2.2" opacity="0.72" transform="rotate(22 1368 699)"/><ellipse cx="1638" cy="396" rx="3.4" ry="2.3" opacity="0.76" transform="rotate(171 1638 396)"/><ellipse cx="1193" cy="627" rx="1.9" ry="1.5" opacity="0.74" transform="rotate(87 1193 627)"/><ellipse cx="1234" cy="511" rx="2.0" ry="1.6" opacity="0.66" transform="rotate(172 1234 511)"/><ellipse cx="1555" cy="957" rx="4.5" ry="2.8" opacity="0.38" transform="rotate(45 1555 957)"/><ellipse cx="1683" cy="971" rx="3.8" ry="3.0" opacity="0.41" transform="rotate(23 1683 971)"/><ellipse cx="1534" cy="849" rx="2.2" ry="2.4" opacity="0.61" transform="rotate(52 1534 849)"/><ellipse cx="1633" cy="591" rx="2.6" ry="2.4" opacity="0.44" transform="rotate(16 1633 591)"/><ellipse cx="1953" cy="555" rx="3.2" ry="3.1" opacity="0.77" transform="rotate(157 1953 555)"/><ellipse cx="1626" cy="765" rx="2.3" ry="2.5" opacity="0.60" transform="rotate(177 1626 765)"/><ellipse cx="1585" cy="411" rx="2.7" ry="2.8" opacity="0.68" transform="rotate(152 1585 411)"/><ellipse cx="1745" cy="813" rx="3.5" ry="3.2" opacity="0.66" transform="rotate(110 1745 813)"/><ellipse cx="1225" cy="684" rx="1.8" ry="1.7" opacity="0.39" transform="rotate(119 1225 684)"/><ellipse cx="1634" cy="319" rx="3.0" ry="2.3" opacity="0.70" transform="rotate(36 1634 319)"/><ellipse cx="1209" cy="860" rx="4.3" ry="2.7" opacity="0.56" transform="rotate(125 1209 860)"/><ellipse cx="1497" cy="709" rx="2.7" ry="2.4" opacity="0.76" transform="rotate(58 1497 709)"/><ellipse cx="1781" cy="670" rx="3.4" ry="2.2" opacity="0.79" transform="rotate(124 1781 670)"/><ellipse cx="1408" cy="632" rx="4.1" ry="2.9" opacity="0.68" transform="rotate(34 1408 632)"/><ellipse cx="1463" cy="499" rx="4.0" ry="3.1" opacity="0.41" transform="rotate(170 1463 499)"/><ellipse cx="1391" cy="895" rx="3.7" ry="3.2" opacity="0.53" transform="rotate(11 1391 895)"/><ellipse cx="1199" cy="651" rx="2.5" ry="1.6" opacity="0.69" transform="rotate(119 1199 651)"/><ellipse cx="1577" cy="720" rx="3.3" ry="3.2" opacity="0.71" transform="rotate(48 1577 720)"/><ellipse cx="1327" cy="786" rx="2.0" ry="2.1" opacity="0.60" transform="rotate(144 1327 786)"/><ellipse cx="1684" cy="581" rx="2.4" ry="1.6" opacity="0.37" transform="rotate(170 1684 581)"/><ellipse cx="1187" cy="670" rx="4.4" ry="2.8" opacity="0.52" transform="rotate(144 1187 670)"/><ellipse cx="1763" cy="654" rx="2.1" ry="1.9" opacity="0.62" transform="rotate(22 1763 654)"/><ellipse cx="1341" cy="540" rx="2.2" ry="1.7" opacity="0.36" transform="rotate(55 1341 540)"/><ellipse cx="1785" cy="755" rx="3.6" ry="3.1" opacity="0.61" transform="rotate(174 1785 755)"/><ellipse cx="1518" cy="275" rx="1.9" ry="1.6" opacity="0.68" transform="rotate(103 1518 275)"/><ellipse cx="1545" cy="809" rx="2.1" ry="1.4" opacity="0.57" transform="rotate(54 1545 809)"/><ellipse cx="1796" cy="916" rx="3.3" ry="2.8" opacity="0.48" transform="rotate(151 1796 916)"/><ellipse cx="1386" cy="562" rx="2.2" ry="2.3" opacity="0.76" transform="rotate(58 1386 562)"/><ellipse cx="1550" cy="525" rx="1.7" ry="1.8" opacity="0.37" transform="rotate(53 1550 525)"/><ellipse cx="1888" cy="632" rx="3.0" ry="2.9" opacity="0.71" transform="rotate(50 1888 632)"/><ellipse cx="1527" cy="281" rx="2.7" ry="2.3" opacity="0.78" transform="rotate(129 1527 281)"/><ellipse cx="1699" cy="736" rx="3.8" ry="3.0" opacity="0.78" transform="rotate(158 1699 736)"/><ellipse cx="1850" cy="638" rx="2.0" ry="1.6" opacity="0.54" transform="rotate(98 1850 638)"/><ellipse cx="1390" cy="843" rx="3.6" ry="2.5" opacity="0.54" transform="rotate(75 1390 843)"/><ellipse cx="1629" cy="825" rx="1.9" ry="1.4" opacity="0.55" transform="rotate(179 1629 825)"/><ellipse cx="1450" cy="503" rx="1.8" ry="1.5" opacity="0.49" transform="rotate(51 1450 503)"/><ellipse cx="1774" cy="595" rx="2.3" ry="1.7" opacity="0.70" transform="rotate(50 1774 595)"/><ellipse cx="1324" cy="836" rx="2.8" ry="2.7" opacity="0.66" transform="rotate(104 1324 836)"/><ellipse cx="1497" cy="398" rx="2.7" ry="2.5" opacity="0.61" transform="rotate(137 1497 398)"/><ellipse cx="1624" cy="771" rx="2.5" ry="1.6" opacity="0.51" transform="rotate(3 1624 771)"/><ellipse cx="1400" cy="465" rx="4.5" ry="2.9" opacity="0.59" transform="rotate(66 1400 465)"/><ellipse cx="1766" cy="655" rx="3.8" ry="2.5" opacity="0.59" transform="rotate(150 1766 655)"/><ellipse cx="1737" cy="767" rx="2.1" ry="1.5" opacity="0.43" transform="rotate(89 1737 767)"/><ellipse cx="1549" cy="380" rx="3.2" ry="3.3" opacity="0.79" transform="rotate(60 1549 380)"/><ellipse cx="1379" cy="420" rx="3.7" ry="3.4" opacity="0.78" transform="rotate(18 1379 420)"/><ellipse cx="1888" cy="639" rx="4.5" ry="3.0" opacity="0.68" transform="rotate(150 1888 639)"/><ellipse cx="1440" cy="822" rx="1.8" ry="1.6" opacity="0.52" transform="rotate(3 1440 822)"/><ellipse cx="1561" cy="948" rx="3.4" ry="2.4" opacity="0.70" transform="rotate(48 1561 948)"/><ellipse cx="1869" cy="686" rx="1.9" ry="1.7" opacity="0.38" transform="rotate(108 1869 686)"/><ellipse cx="1330" cy="637" rx="2.1" ry="1.7" opacity="0.45" transform="rotate(122 1330 637)"/><ellipse cx="1558" cy="640" rx="2.2" ry="1.6" opacity="0.64" transform="rotate(140 1558 640)"/><ellipse cx="1722" cy="875" rx="1.6" ry="1.5" opacity="0.56" transform="rotate(29 1722 875)"/><ellipse cx="1542" cy="673" rx="2.8" ry="1.8" opacity="0.36" transform="rotate(98 1542 673)"/><ellipse cx="1742" cy="358" rx="2.4" ry="1.5" opacity="0.76" transform="rotate(170 1742 358)"/><ellipse cx="1416" cy="409" rx="2.0" ry="1.5" opacity="0.45" transform="rotate(137 1416 409)"/><ellipse cx="1817" cy="749" rx="3.6" ry="3.4" opacity="0.78" transform="rotate(84 1817 749)"/><ellipse cx="1295" cy="569" rx="3.7" ry="2.6" opacity="0.57" transform="rotate(128 1295 569)"/><ellipse cx="1464" cy="367" rx="2.7" ry="2.6" opacity="0.47" transform="rotate(152 1464 367)"/><ellipse cx="1448" cy="309" rx="2.2" ry="1.6" opacity="0.56" transform="rotate(128 1448 309)"/><ellipse cx="1637" cy="647" rx="2.4" ry="1.5" opacity="0.60" transform="rotate(39 1637 647)"/><ellipse cx="1182" cy="705" rx="2.6" ry="2.2" opacity="0.67" transform="rotate(112 1182 705)"/><ellipse cx="1670" cy="287" rx="3.0" ry="2.9" opacity="0.56" transform="rotate(74 1670 287)"/><ellipse cx="1283" cy="910" rx="1.9" ry="2.0" opacity="0.46" transform="rotate(128 1283 910)"/><ellipse cx="1464" cy="363" rx="4.0" ry="3.1" opacity="0.70" transform="rotate(158 1464 363)"/><ellipse cx="1141" cy="620" rx="3.8" ry="3.2" opacity="0.48" transform="rotate(79 1141 620)"/><ellipse cx="1918" cy="474" rx="1.7" ry="1.7" opacity="0.48" transform="rotate(21 1918 474)"/><ellipse cx="1718" cy="812" rx="3.1" ry="2.8" opacity="0.70" transform="rotate(125 1718 812)"/><ellipse cx="1521" cy="825" rx="2.1" ry="2.1" opacity="0.65" transform="rotate(47 1521 825)"/><ellipse cx="1781" cy="845" rx="1.7" ry="1.7" opacity="0.43" transform="rotate(64 1781 845)"/><ellipse cx="1840" cy="825" rx="1.9" ry="1.8" opacity="0.53" transform="rotate(42 1840 825)"/><ellipse cx="1709" cy="808" rx="5.2" ry="3.4" opacity="0.46" transform="rotate(149 1709 808)"/><ellipse cx="1566" cy="597" rx="2.3" ry="2.3" opacity="0.44" transform="rotate(2 1566 597)"/><ellipse cx="1596" cy="598" rx="2.5" ry="1.9" opacity="0.76" transform="rotate(159 1596 598)"/><ellipse cx="1492" cy="345" rx="4.3" ry="2.8" opacity="0.63" transform="rotate(38 1492 345)"/><ellipse cx="1522" cy="738" rx="4.1" ry="3.2" opacity="0.62" transform="rotate(144 1522 738)"/><ellipse cx="1381" cy="442" rx="2.4" ry="1.9" opacity="0.44" transform="rotate(101 1381 442)"/><ellipse cx="1379" cy="452" rx="4.3" ry="3.2" opacity="0.80" transform="rotate(36 1379 452)"/><ellipse cx="1328" cy="805" rx="2.0" ry="1.8" opacity="0.60" transform="rotate(141 1328 805)"/><ellipse cx="1511" cy="910" rx="2.5" ry="1.7" opacity="0.44" transform="rotate(121 1511 910)"/><ellipse cx="1854" cy="736" rx="2.9" ry="2.7" opacity="0.54" transform="rotate(19 1854 736)"/><ellipse cx="1682" cy="664" rx="4.2" ry="3.2" opacity="0.73" transform="rotate(4 1682 664)"/><ellipse cx="1566" cy="789" rx="2.7" ry="2.7" opacity="0.69" transform="rotate(122 1566 789)"/><ellipse cx="1561" cy="577" rx="2.3" ry="2.2" opacity="0.70" transform="rotate(35 1561 577)"/><ellipse cx="1498" cy="381" rx="4.1" ry="2.9" opacity="0.50" transform="rotate(102 1498 381)"/><ellipse cx="1601" cy="540" rx="2.7" ry="2.5" opacity="0.35" transform="rotate(89 1601 540)"/><ellipse cx="1250" cy="586" rx="2.5" ry="2.4" opacity="0.36" transform="rotate(52 1250 586)"/><ellipse cx="1411" cy="594" rx="4.2" ry="3.2" opacity="0.79" transform="rotate(144 1411 594)"/><ellipse cx="1785" cy="500" rx="4.4" ry="2.8" opacity="0.62" transform="rotate(11 1785 500)"/><ellipse cx="1519" cy="471" rx="3.1" ry="3.4" opacity="0.42" transform="rotate(86 1519 471)"/><ellipse cx="1713" cy="449" rx="1.7" ry="1.6" opacity="0.57" transform="rotate(162 1713 449)"/><ellipse cx="1434" cy="795" rx="4.2" ry="3.3" opacity="0.75" transform="rotate(77 1434 795)"/><ellipse cx="1520" cy="712" rx="2.2" ry="2.1" opacity="0.75" transform="rotate(128 1520 712)"/><ellipse cx="1642" cy="685" rx="2.3" ry="1.7" opacity="0.53" transform="rotate(12 1642 685)"/><ellipse cx="1237" cy="457" rx="3.7" ry="3.2" opacity="0.49" transform="rotate(138 1237 457)"/><ellipse cx="1255" cy="807" rx="1.9" ry="1.5" opacity="0.60" transform="rotate(25 1255 807)"/><ellipse cx="1676" cy="650" rx="3.7" ry="2.4" opacity="0.71" transform="rotate(21 1676 650)"/><ellipse cx="1225" cy="660" rx="2.5" ry="2.5" opacity="0.45" transform="rotate(123 1225 660)"/><ellipse cx="1779" cy="628" rx="2.8" ry="2.3" opacity="0.79" transform="rotate(79 1779 628)"/><ellipse cx="1810" cy="747" rx="1.5" ry="1.7" opacity="0.66" transform="rotate(68 1810 747)"/><ellipse cx="1790" cy="774" rx="3.2" ry="3.3" opacity="0.63" transform="rotate(37 1790 774)"/><ellipse cx="1383" cy="827" rx="1.9" ry="1.5" opacity="0.46" transform="rotate(156 1383 827)"/><ellipse cx="1848" cy="405" rx="3.5" ry="3.0" opacity="0.72" transform="rotate(163 1848 405)"/><ellipse cx="1633" cy="351" rx="2.9" ry="3.0" opacity="0.71" transform="rotate(17 1633 351)"/><ellipse cx="1819" cy="573" rx="2.5" ry="2.4" opacity="0.63" transform="rotate(49 1819 573)"/><ellipse cx="1465" cy="556" rx="2.9" ry="2.3" opacity="0.74" transform="rotate(66 1465 556)"/><ellipse cx="1634" cy="572" rx="2.1" ry="2.0" opacity="0.36" transform="rotate(61 1634 572)"/><ellipse cx="1519" cy="622" rx="3.4" ry="2.8" opacity="0.44" transform="rotate(123 1519 622)"/><ellipse cx="1520" cy="675" rx="3.9" ry="2.7" opacity="0.73" transform="rotate(56 1520 675)"/><ellipse cx="1593" cy="542" rx="2.7" ry="2.7" opacity="0.35" transform="rotate(5 1593 542)"/><ellipse cx="1534" cy="704" rx="2.1" ry="1.5" opacity="0.69" transform="rotate(81 1534 704)"/><ellipse cx="1355" cy="833" rx="3.0" ry="2.3" opacity="0.47" transform="rotate(19 1355 833)"/><ellipse cx="1743" cy="503" rx="3.2" ry="2.4" opacity="0.36" transform="rotate(139 1743 503)"/><ellipse cx="1710" cy="641" rx="2.7" ry="2.3" opacity="0.69" transform="rotate(141 1710 641)"/><ellipse cx="1487" cy="461" rx="3.4" ry="2.8" opacity="0.71" transform="rotate(60 1487 461)"/><ellipse cx="1804" cy="625" rx="4.3" ry="3.4" opacity="0.58" transform="rotate(90 1804 625)"/><ellipse cx="1397" cy="541" rx="3.5" ry="2.9" opacity="0.43" transform="rotate(43 1397 541)"/><ellipse cx="1309" cy="352" rx="1.6" ry="1.4" opacity="0.73" transform="rotate(123 1309 352)"/><ellipse cx="1293" cy="602" rx="3.3" ry="2.6" opacity="0.71" transform="rotate(171 1293 602)"/><ellipse cx="1949" cy="522" rx="2.3" ry="2.2" opacity="0.63" transform="rotate(44 1949 522)"/><ellipse cx="1830" cy="661" rx="2.2" ry="2.3" opacity="0.45" transform="rotate(28 1830 661)"/><ellipse cx="1820" cy="829" rx="3.2" ry="2.0" opacity="0.54" transform="rotate(130 1820 829)"/><ellipse cx="1881" cy="556" rx="1.6" ry="1.5" opacity="0.56" transform="rotate(8 1881 556)"/><ellipse cx="1394" cy="354" rx="2.4" ry="1.5" opacity="0.72" transform="rotate(160 1394 354)"/><ellipse cx="1425" cy="638" rx="3.9" ry="3.2" opacity="0.65" transform="rotate(148 1425 638)"/><ellipse cx="1494" cy="319" rx="2.6" ry="1.8" opacity="0.44" transform="rotate(33 1494 319)"/><ellipse cx="1721" cy="454" rx="2.4" ry="2.0" opacity="0.50" transform="rotate(149 1721 454)"/><ellipse cx="1747" cy="797" rx="4.4" ry="2.8" opacity="0.76" transform="rotate(32 1747 797)"/><ellipse cx="1271" cy="686" rx="3.6" ry="2.9" opacity="0.55" transform="rotate(88 1271 686)"/><ellipse cx="1476" cy="326" rx="4.1" ry="3.0" opacity="0.36" transform="rotate(86 1476 326)"/><ellipse cx="1485" cy="508" rx="2.0" ry="2.2" opacity="0.73" transform="rotate(37 1485 508)"/><ellipse cx="1484" cy="574" rx="2.3" ry="1.9" opacity="0.62" transform="rotate(129 1484 574)"/><ellipse cx="1908" cy="536" rx="2.6" ry="2.8" opacity="0.70" transform="rotate(84 1908 536)"/><ellipse cx="1584" cy="724" rx="4.0" ry="2.5" opacity="0.41" transform="rotate(18 1584 724)"/><ellipse cx="1540" cy="418" rx="1.5" ry="1.4" opacity="0.60" transform="rotate(150 1540 418)"/><ellipse cx="1534" cy="416" rx="3.5" ry="3.2" opacity="0.64" transform="rotate(131 1534 416)"/><ellipse cx="1616" cy="441" rx="3.7" ry="2.8" opacity="0.76" transform="rotate(178 1616 441)"/><ellipse cx="1246" cy="629" rx="2.4" ry="2.4" opacity="0.47" transform="rotate(27 1246 629)"/><ellipse cx="1604" cy="734" rx="1.8" ry="2.0" opacity="0.50" transform="rotate(14 1604 734)"/><ellipse cx="1762" cy="581" rx="2.1" ry="2.1" opacity="0.75" transform="rotate(166 1762 581)"/><ellipse cx="1707" cy="619" rx="3.6" ry="2.6" opacity="0.38" transform="rotate(113 1707 619)"/><ellipse cx="1708" cy="373" rx="4.4" ry="3.3" opacity="0.58" transform="rotate(136 1708 373)"/><ellipse cx="1400" cy="707" rx="3.7" ry="2.4" opacity="0.35" transform="rotate(53 1400 707)"/><ellipse cx="1373" cy="819" rx="2.0" ry="1.5" opacity="0.47" transform="rotate(14 1373 819)"/><ellipse cx="1793" cy="709" rx="2.6" ry="1.8" opacity="0.68" transform="rotate(148 1793 709)"/><ellipse cx="1554" cy="787" rx="1.6" ry="1.7" opacity="0.71" transform="rotate(151 1554 787)"/><ellipse cx="1859" cy="543" rx="3.3" ry="2.6" opacity="0.59" transform="rotate(71 1859 543)"/><ellipse cx="1507" cy="396" rx="3.3" ry="2.1" opacity="0.80" transform="rotate(97 1507 396)"/><ellipse cx="1839" cy="575" rx="3.3" ry="3.2" opacity="0.67" transform="rotate(26 1839 575)"/><ellipse cx="1917" cy="760" rx="1.8" ry="1.6" opacity="0.38" transform="rotate(16 1917 760)"/><ellipse cx="1672" cy="806" rx="3.0" ry="2.8" opacity="0.59" transform="rotate(74 1672 806)"/><ellipse cx="1763" cy="401" rx="2.7" ry="3.0" opacity="0.36" transform="rotate(125 1763 401)"/><ellipse cx="1853" cy="702" rx="2.5" ry="2.2" opacity="0.45" transform="rotate(97 1853 702)"/><ellipse cx="1630" cy="751" rx="3.7" ry="2.8" opacity="0.72" transform="rotate(163 1630 751)"/><ellipse cx="1334" cy="631" rx="2.6" ry="2.2" opacity="0.49" transform="rotate(10 1334 631)"/><ellipse cx="1278" cy="674" rx="2.0" ry="1.9" opacity="0.49" transform="rotate(92 1278 674)"/><ellipse cx="1345" cy="365" rx="1.8" ry="1.8" opacity="0.72" transform="rotate(53 1345 365)"/><ellipse cx="1266" cy="768" rx="4.5" ry="2.8" opacity="0.40" transform="rotate(9 1266 768)"/><ellipse cx="1770" cy="455" rx="3.0" ry="2.5" opacity="0.62" transform="rotate(44 1770 455)"/><ellipse cx="1831" cy="378" rx="1.6" ry="1.4" opacity="0.36" transform="rotate(87 1831 378)"/><ellipse cx="1451" cy="604" rx="2.0" ry="1.6" opacity="0.69" transform="rotate(30 1451 604)"/><ellipse cx="1514" cy="834" rx="2.4" ry="2.4" opacity="0.72" transform="rotate(168 1514 834)"/><ellipse cx="1656" cy="558" rx="2.8" ry="3.1" opacity="0.77" transform="rotate(101 1656 558)"/><ellipse cx="1242" cy="715" rx="1.5" ry="1.6" opacity="0.36" transform="rotate(99 1242 715)"/><ellipse cx="1872" cy="849" rx="4.0" ry="2.7" opacity="0.47" transform="rotate(5 1872 849)"/><ellipse cx="1871" cy="809" rx="2.5" ry="2.6" opacity="0.36" transform="rotate(156 1871 809)"/><ellipse cx="1468" cy="874" rx="2.5" ry="1.7" opacity="0.52" transform="rotate(86 1468 874)"/><ellipse cx="1381" cy="588" rx="1.6" ry="1.5" opacity="0.47" transform="rotate(170 1381 588)"/><ellipse cx="1513" cy="840" rx="1.7" ry="1.6" opacity="0.56" transform="rotate(175 1513 840)"/><ellipse cx="1483" cy="463" rx="4.1" ry="3.3" opacity="0.61" transform="rotate(12 1483 463)"/><ellipse cx="1377" cy="544" rx="3.6" ry="2.5" opacity="0.64" transform="rotate(160 1377 544)"/><ellipse cx="1400" cy="466" rx="2.8" ry="3.1" opacity="0.80" transform="rotate(101 1400 466)"/><ellipse cx="1722" cy="767" rx="2.4" ry="2.1" opacity="0.72" transform="rotate(152 1722 767)"/><ellipse cx="1361" cy="533" rx="2.1" ry="1.5" opacity="0.76" transform="rotate(22 1361 533)"/><ellipse cx="1652" cy="800" rx="2.7" ry="2.3" opacity="0.73" transform="rotate(171 1652 800)"/><ellipse cx="1867" cy="613" rx="2.2" ry="1.9" opacity="0.51" transform="rotate(95 1867 613)"/><ellipse cx="1925" cy="512" rx="4.5" ry="2.9" opacity="0.43" transform="rotate(95 1925 512)"/><ellipse cx="1808" cy="367" rx="2.4" ry="1.5" opacity="0.78" transform="rotate(6 1808 367)"/><ellipse cx="1830" cy="659" rx="3.7" ry="2.8" opacity="0.38" transform="rotate(29 1830 659)"/><ellipse cx="1241" cy="707" rx="2.6" ry="2.3" opacity="0.72" transform="rotate(117 1241 707)"/><ellipse cx="1299" cy="720" rx="2.2" ry="1.6" opacity="0.45" transform="rotate(104 1299 720)"/><ellipse cx="1240" cy="794" rx="2.6" ry="2.3" opacity="0.37" transform="rotate(111 1240 794)"/><ellipse cx="1540" cy="795" rx="2.7" ry="2.5" opacity="0.55" transform="rotate(75 1540 795)"/><ellipse cx="1553" cy="797" rx="4.2" ry="3.0" opacity="0.68" transform="rotate(78 1553 797)"/><ellipse cx="1890" cy="483" rx="1.4" ry="1.4" opacity="0.43" transform="rotate(86 1890 483)"/><ellipse cx="1513" cy="771" rx="2.7" ry="2.4" opacity="0.55" transform="rotate(119 1513 771)"/><ellipse cx="1743" cy="821" rx="2.6" ry="2.1" opacity="0.74" transform="rotate(105 1743 821)"/><ellipse cx="1648" cy="689" rx="3.3" ry="3.1" opacity="0.75" transform="rotate(85 1648 689)"/><ellipse cx="1403" cy="605" rx="4.7" ry="3.0" opacity="0.57" transform="rotate(129 1403 605)"/><ellipse cx="1430" cy="762" rx="4.3" ry="2.7" opacity="0.61" transform="rotate(171 1430 762)"/><ellipse cx="1652" cy="673" rx="4.3" ry="3.2" opacity="0.56" transform="rotate(21 1652 673)"/><ellipse cx="1892" cy="479" rx="2.7" ry="2.3" opacity="0.66" transform="rotate(165 1892 479)"/><ellipse cx="1603" cy="684" rx="3.8" ry="3.1" opacity="0.69" transform="rotate(29 1603 684)"/><ellipse cx="1335" cy="820" rx="2.8" ry="3.0" opacity="0.63" transform="rotate(141 1335 820)"/><ellipse cx="1390" cy="294" rx="2.2" ry="2.4" opacity="0.49" transform="rotate(80 1390 294)"/><ellipse cx="1340" cy="788" rx="3.2" ry="3.2" opacity="0.58" transform="rotate(1 1340 788)"/><ellipse cx="1538" cy="559" rx="2.7" ry="2.1" opacity="0.41" transform="rotate(77 1538 559)"/><ellipse cx="1934" cy="734" rx="3.9" ry="3.1" opacity="0.37" transform="rotate(33 1934 734)"/><ellipse cx="1663" cy="589" rx="3.6" ry="3.4" opacity="0.74" transform="rotate(44 1663 589)"/><ellipse cx="1704" cy="824" rx="3.3" ry="3.1" opacity="0.52" transform="rotate(76 1704 824)"/><ellipse cx="1297" cy="646" rx="3.3" ry="2.6" opacity="0.37" transform="rotate(161 1297 646)"/><ellipse cx="1775" cy="494" rx="3.8" ry="3.0" opacity="0.71" transform="rotate(139 1775 494)"/><ellipse cx="1326" cy="664" rx="1.5" ry="1.7" opacity="0.47" transform="rotate(50 1326 664)"/><ellipse cx="1548" cy="315" rx="1.7" ry="1.7" opacity="0.49" transform="rotate(40 1548 315)"/><ellipse cx="1457" cy="479" rx="2.3" ry="2.5" opacity="0.72" transform="rotate(127 1457 479)"/><ellipse cx="1752" cy="790" rx="2.3" ry="1.6" opacity="0.55" transform="rotate(177 1752 790)"/><ellipse cx="1711" cy="797" rx="2.9" ry="2.3" opacity="0.69" transform="rotate(78 1711 797)"/><ellipse cx="1169" cy="687" rx="2.6" ry="1.7" opacity="0.51" transform="rotate(91 1169 687)"/><ellipse cx="1536" cy="451" rx="2.1" ry="1.8" opacity="0.58" transform="rotate(69 1536 451)"/><ellipse cx="1509" cy="498" rx="4.5" ry="3.1" opacity="0.35" transform="rotate(47 1509 498)"/><ellipse cx="1923" cy="531" rx="4.8" ry="3.2" opacity="0.72" transform="rotate(122 1923 531)"/><ellipse cx="1765" cy="833" rx="2.8" ry="2.3" opacity="0.48" transform="rotate(153 1765 833)"/><ellipse cx="1839" cy="594" rx="2.5" ry="1.9" opacity="0.43" transform="rotate(170 1839 594)"/><ellipse cx="1437" cy="494" rx="1.7" ry="1.4" opacity="0.74" transform="rotate(145 1437 494)"/><ellipse cx="1873" cy="816" rx="3.7" ry="2.8" opacity="0.65" transform="rotate(0 1873 816)"/><ellipse cx="1417" cy="853" rx="4.8" ry="3.4" opacity="0.79" transform="rotate(98 1417 853)"/><ellipse cx="1832" cy="680" rx="3.4" ry="2.7" opacity="0.47" transform="rotate(33 1832 680)"/><ellipse cx="1707" cy="600" rx="3.7" ry="2.3" opacity="0.71" transform="rotate(35 1707 600)"/><ellipse cx="1423" cy="435" rx="3.4" ry="2.2" opacity="0.76" transform="rotate(78 1423 435)"/><ellipse cx="1396" cy="916" rx="3.6" ry="2.9" opacity="0.68" transform="rotate(13 1396 916)"/><ellipse cx="1546" cy="882" rx="4.0" ry="3.1" opacity="0.72" transform="rotate(115 1546 882)"/><ellipse cx="1604" cy="661" rx="3.1" ry="2.9" opacity="0.58" transform="rotate(85 1604 661)"/><ellipse cx="1968" cy="725" rx="1.9" ry="1.8" opacity="0.50" transform="rotate(178 1968 725)"/><ellipse cx="1306" cy="733" rx="1.9" ry="1.6" opacity="0.64" transform="rotate(36 1306 733)"/><ellipse cx="1604" cy="260" rx="3.5" ry="3.4" opacity="0.70" transform="rotate(143 1604 260)"/><ellipse cx="1516" cy="502" rx="3.2" ry="2.4" opacity="0.36" transform="rotate(72 1516 502)"/><ellipse cx="1572" cy="797" rx="2.3" ry="2.4" opacity="0.79" transform="rotate(17 1572 797)"/><ellipse cx="1626" cy="660" rx="2.3" ry="2.3" opacity="0.77" transform="rotate(145 1626 660)"/><ellipse cx="1680" cy="592" rx="2.4" ry="1.7" opacity="0.70" transform="rotate(162 1680 592)"/><ellipse cx="1788" cy="652" rx="3.6" ry="3.2" opacity="0.72" transform="rotate(115 1788 652)"/><ellipse cx="1274" cy="570" rx="4.2" ry="2.8" opacity="0.67" transform="rotate(84 1274 570)"/><ellipse cx="1569" cy="579" rx="3.7" ry="2.3" opacity="0.49" transform="rotate(13 1569 579)"/><ellipse cx="1753" cy="430" rx="3.3" ry="2.7" opacity="0.44" transform="rotate(163 1753 430)"/><ellipse cx="1694" cy="640" rx="2.5" ry="2.4" opacity="0.60" transform="rotate(151 1694 640)"/><ellipse cx="1438" cy="672" rx="4.5" ry="3.3" opacity="0.65" transform="rotate(122 1438 672)"/><ellipse cx="1782" cy="727" rx="1.8" ry="1.7" opacity="0.79" transform="rotate(145 1782 727)"/><ellipse cx="1380" cy="307" rx="3.6" ry="2.7" opacity="0.72" transform="rotate(19 1380 307)"/><ellipse cx="1566" cy="756" rx="2.3" ry="1.8" opacity="0.48" transform="rotate(168 1566 756)"/><ellipse cx="1202" cy="777" rx="2.9" ry="1.9" opacity="0.52" transform="rotate(41 1202 777)"/><ellipse cx="1670" cy="630" rx="5.2" ry="3.3" opacity="0.72" transform="rotate(64 1670 630)"/><ellipse cx="1355" cy="626" rx="2.2" ry="1.5" opacity="0.76" transform="rotate(78 1355 626)"/><ellipse cx="1619" cy="525" rx="3.3" ry="2.3" opacity="0.64" transform="rotate(116 1619 525)"/><ellipse cx="1396" cy="612" rx="4.8" ry="3.1" opacity="0.66" transform="rotate(30 1396 612)"/><ellipse cx="1815" cy="619" rx="4.3" ry="3.3" opacity="0.48" transform="rotate(130 1815 619)"/><ellipse cx="1152" cy="617" rx="2.9" ry="2.3" opacity="0.64" transform="rotate(17 1152 617)"/><ellipse cx="1580" cy="748" rx="3.4" ry="3.1" opacity="0.55" transform="rotate(132 1580 748)"/><ellipse cx="1151" cy="647" rx="2.6" ry="2.7" opacity="0.78" transform="rotate(2 1151 647)"/><ellipse cx="1641" cy="997" rx="2.2" ry="1.7" opacity="0.73" transform="rotate(39 1641 997)"/><ellipse cx="1455" cy="877" rx="2.5" ry="1.9" opacity="0.49" transform="rotate(104 1455 877)"/><ellipse cx="1446" cy="633" rx="2.4" ry="2.3" opacity="0.58" transform="rotate(89 1446 633)"/><ellipse cx="1401" cy="300" rx="2.4" ry="2.3" opacity="0.61" transform="rotate(23 1401 300)"/><ellipse cx="1847" cy="570" rx="3.4" ry="2.2" opacity="0.60" transform="rotate(124 1847 570)"/><ellipse cx="1425" cy="898" rx="3.2" ry="2.2" opacity="0.50" transform="rotate(115 1425 898)"/><ellipse cx="1706" cy="473" rx="3.3" ry="2.6" opacity="0.47" transform="rotate(153 1706 473)"/><ellipse cx="1246" cy="587" rx="2.5" ry="1.9" opacity="0.72" transform="rotate(37 1246 587)"/><ellipse cx="1604" cy="677" rx="3.3" ry="2.4" opacity="0.54" transform="rotate(130 1604 677)"/><ellipse cx="1729" cy="460" rx="3.2" ry="2.1" opacity="0.40" transform="rotate(25 1729 460)"/><ellipse cx="1638" cy="693" rx="2.7" ry="1.9" opacity="0.45" transform="rotate(61 1638 693)"/><ellipse cx="1870" cy="567" rx="4.9" ry="3.3" opacity="0.71" transform="rotate(54 1870 567)"/><ellipse cx="1297" cy="424" rx="1.4" ry="1.5" opacity="0.44" transform="rotate(38 1297 424)"/><ellipse cx="1472" cy="552" rx="2.0" ry="2.2" opacity="0.75" transform="rotate(132 1472 552)"/><ellipse cx="1438" cy="409" rx="4.5" ry="3.3" opacity="0.70" transform="rotate(91 1438 409)"/><ellipse cx="1381" cy="715" rx="3.1" ry="2.5" opacity="0.44" transform="rotate(167 1381 715)"/><ellipse cx="1558" cy="743" rx="2.5" ry="2.7" opacity="0.50" transform="rotate(139 1558 743)"/><ellipse cx="1361" cy="559" rx="2.5" ry="1.7" opacity="0.54" transform="rotate(18 1361 559)"/><ellipse cx="1365" cy="639" rx="3.1" ry="2.0" opacity="0.51" transform="rotate(50 1365 639)"/><ellipse cx="1887" cy="766" rx="2.1" ry="1.8" opacity="0.56" transform="rotate(96 1887 766)"/><ellipse cx="1486" cy="412" rx="3.4" ry="3.1" opacity="0.64" transform="rotate(24 1486 412)"/><ellipse cx="1668" cy="450" rx="1.5" ry="1.5" opacity="0.43" transform="rotate(14 1668 450)"/><ellipse cx="1466" cy="770" rx="5.1" ry="3.2" opacity="0.55" transform="rotate(12 1466 770)"/></g>
<g opacity=".68" filter="url(#rg)"><g fill="none" stroke="#8a5628" stroke-linecap="round" stroke-linejoin="round" opacity="1" ><use href="#v10" stroke-width="10.0"/><use href="#v18" stroke-width="5.0"/><use href="#v20" stroke-width="6.0"/><use href="#v32" stroke-width="7.0"/><use href="#v36" stroke-width="8.0"/><use href="#v38" stroke-width="7.0"/><use href="#v47" stroke-width="8.0"/><use href="#v91" stroke-width="6.0"/><use href="#v97" stroke-width="6.0"/><use href="#v100" stroke-width="7.0"/><use href="#v103" stroke-width="6.0"/><use href="#v111" stroke-width="7.0"/><use href="#v116" stroke-width="8.0"/><use href="#v129" stroke-width="9.0"/><use href="#v135" stroke-width="10.0"/><use href="#v136" stroke-width="10.0"/><use href="#v155" stroke-width="7.0"/><use href="#v156" stroke-width="8.0"/><use href="#v157" stroke-width="10.0"/><use href="#v158" stroke-width="8.0"/><use href="#v164" stroke-width="7.0"/><use href="#v172" stroke-width="8.0"/><use href="#v174" stroke-width="8.0"/><use href="#v181" stroke-width="10.0"/><use href="#v188" stroke-width="6.0"/><use href="#v189" stroke-width="6.0"/><use href="#v198" stroke-width="7.0"/><use href="#v200" stroke-width="6.0"/><use href="#v207" stroke-width="6.0"/><use href="#v214" stroke-width="6.0"/><use href="#v221" stroke-width="7.0"/><use href="#v224" stroke-width="5.0"/><use href="#v227" stroke-width="8.0"/><use href="#v238" stroke-width="10.0"/><use href="#v245" stroke-width="6.0"/><use href="#v249" stroke-width="6.0"/><use href="#v257" stroke-width="8.0"/><use href="#v265" stroke-width="6.0"/><use href="#v266" stroke-width="5.0"/><use href="#v301" stroke-width="8.0"/><use href="#v302" stroke-width="6.0"/><use href="#v315" stroke-width="7.0"/><use href="#v342" stroke-width="7.0"/><use href="#v350" stroke-width="10.0"/><use href="#v351" stroke-width="5.0"/><use href="#v360" stroke-width="5.0"/><use href="#v371" stroke-width="5.0"/><use href="#v379" stroke-width="7.0"/><use href="#v381" stroke-width="9.0"/><use href="#v385" stroke-width="7.0"/><use href="#v398" stroke-width="7.0"/><use href="#v401" stroke-width="5.0"/><use href="#v404" stroke-width="6.0"/><use href="#v406" stroke-width="6.0"/><use href="#v409" stroke-width="10.0"/><use href="#v410" stroke-width="8.0"/><use href="#v433" stroke-width="6.0"/><use href="#v435" stroke-width="10.0"/><use href="#v439" stroke-width="5.0"/><use href="#v444" stroke-width="6.0"/><use href="#v448" stroke-width="5.0"/><use href="#v456" stroke-width="6.0"/><use href="#v459" stroke-width="6.0"/><use href="#v467" stroke-width="7.0"/><use href="#v469" stroke-width="8.0"/><use href="#v481" stroke-width="9.0"/><use href="#v492" stroke-width="6.0"/><use href="#v501" stroke-width="8.0"/><use href="#v517" stroke-width="6.0"/><use href="#v521" stroke-width="5.0"/><use href="#v530" stroke-width="9.0"/><use href="#v532" stroke-width="8.0"/><use href="#v534" stroke-width="7.0"/><use href="#v546" stroke-width="6.0"/><use href="#v548" stroke-width="8.0"/><use href="#v560" stroke-width="10.0"/><use href="#v564" stroke-width="7.0"/><use href="#v570" stroke-width="7.0"/><use href="#v577" stroke-width="8.0"/><use href="#v579" stroke-width="6.0"/><use href="#v582" stroke-width="6.0"/><use href="#v600" stroke-width="8.0"/><use href="#v621" stroke-width="7.0"/><use href="#v623" stroke-width="10.0"/><use href="#v640" stroke-width="10.0"/><use href="#v644" stroke-width="5.0"/><use href="#v646" stroke-width="10.0"/><use href="#v655" stroke-width="7.0"/><use href="#v658" stroke-width="9.0"/><use href="#v667" stroke-width="8.0"/><use href="#v672" stroke-width="7.0"/><use href="#v677" stroke-width="10.0"/><use href="#v688" stroke-width="5.0"/><use href="#v700" stroke-width="5.0"/><use href="#v705" stroke-width="7.0"/><use href="#v714" stroke-width="8.0"/><use href="#v715" stroke-width="8.0"/><use href="#v720" stroke-width="5.0"/><use href="#v725" stroke-width="9.0"/><use href="#v728" stroke-width="6.0"/><use href="#v731" stroke-width="9.0"/><use href="#v737" stroke-width="6.0"/><use href="#v749" stroke-width="7.0"/><use href="#v756" stroke-width="7.0"/><use href="#v769" stroke-width="9.0"/><use href="#v770" stroke-width="7.0"/><use href="#v784" stroke-width="7.0"/><use href="#v788" stroke-width="5.0"/><use href="#v789" stroke-width="8.0"/><use href="#v811" stroke-width="5.0"/><use href="#v812" stroke-width="5.0"/><use href="#v814" stroke-width="8.0"/><use href="#v816" stroke-width="10.0"/></g><g fill="none" stroke="#b48a62" stroke-linecap="round" stroke-linejoin="round" opacity="1" ><use href="#v10" stroke-width="4.0"/><use href="#v18" stroke-width="1.8"/><use href="#v20" stroke-width="2.2"/><use href="#v32" stroke-width="2.7"/><use href="#v36" stroke-width="3.1"/><use href="#v38" stroke-width="2.7"/><use href="#v47" stroke-width="3.1"/><use href="#v91" stroke-width="2.2"/><use href="#v97" stroke-width="2.2"/><use href="#v100" stroke-width="2.7"/><use href="#v103" stroke-width="2.2"/><use href="#v111" stroke-width="2.7"/><use href="#v116" stroke-width="3.1"/><use href="#v129" stroke-width="3.6"/><use href="#v135" stroke-width="4.0"/><use href="#v136" stroke-width="4.0"/><use href="#v155" stroke-width="2.7"/><use href="#v156" stroke-width="3.1"/><use href="#v157" stroke-width="4.0"/><use href="#v158" stroke-width="3.1"/><use href="#v164" stroke-width="2.7"/><use href="#v172" stroke-width="3.1"/><use href="#v174" stroke-width="3.1"/><use href="#v181" stroke-width="4.0"/><use href="#v188" stroke-width="2.2"/><use href="#v189" stroke-width="2.2"/><use href="#v198" stroke-width="2.7"/><use href="#v200" stroke-width="2.2"/><use href="#v207" stroke-width="2.2"/><use href="#v214" stroke-width="2.2"/><use href="#v221" stroke-width="2.7"/><use href="#v224" stroke-width="1.8"/><use href="#v227" stroke-width="3.1"/><use href="#v238" stroke-width="4.0"/><use href="#v245" stroke-width="2.2"/><use href="#v249" stroke-width="2.2"/><use href="#v257" stroke-width="3.1"/><use href="#v265" stroke-width="2.2"/><use href="#v266" stroke-width="1.8"/><use href="#v301" stroke-width="3.1"/><use href="#v302" stroke-width="2.2"/><use href="#v315" stroke-width="2.7"/><use href="#v342" stroke-width="2.7"/><use href="#v350" stroke-width="4.0"/><use href="#v351" stroke-width="1.8"/><use href="#v360" stroke-width="1.8"/><use href="#v371" stroke-width="1.8"/><use href="#v379" stroke-width="2.7"/><use href="#v381" stroke-width="3.6"/><use href="#v385" stroke-width="2.7"/><use href="#v398" stroke-width="2.7"/><use href="#v401" stroke-width="1.8"/><use href="#v404" stroke-width="2.2"/><use href="#v406" stroke-width="2.2"/><use href="#v409" stroke-width="4.0"/><use href="#v410" stroke-width="3.1"/><use href="#v433" stroke-width="2.2"/><use href="#v435" stroke-width="4.0"/><use href="#v439" stroke-width="1.8"/><use href="#v444" stroke-width="2.2"/><use href="#v448" stroke-width="1.8"/><use href="#v456" stroke-width="2.2"/><use href="#v459" stroke-width="2.2"/><use href="#v467" stroke-width="2.7"/><use href="#v469" stroke-width="3.1"/><use href="#v481" stroke-width="3.6"/><use href="#v492" stroke-width="2.2"/><use href="#v501" stroke-width="3.1"/><use href="#v517" stroke-width="2.2"/><use href="#v521" stroke-width="1.8"/><use href="#v530" stroke-width="3.6"/><use href="#v532" stroke-width="3.1"/><use href="#v534" stroke-width="2.7"/><use href="#v546" stroke-width="2.2"/><use href="#v548" stroke-width="3.1"/><use href="#v560" stroke-width="4.0"/><use href="#v564" stroke-width="2.7"/><use href="#v570" stroke-width="2.7"/><use href="#v577" stroke-width="3.1"/><use href="#v579" stroke-width="2.2"/><use href="#v582" stroke-width="2.2"/><use href="#v600" stroke-width="3.1"/><use href="#v621" stroke-width="2.7"/><use href="#v623" stroke-width="4.0"/><use href="#v640" stroke-width="4.0"/><use href="#v644" stroke-width="1.8"/><use href="#v646" stroke-width="4.0"/><use href="#v655" stroke-width="2.7"/><use href="#v658" stroke-width="3.6"/><use href="#v667" stroke-width="3.1"/><use href="#v672" stroke-width="2.7"/><use href="#v677" stroke-width="4.0"/><use href="#v688" stroke-width="1.8"/><use href="#v700" stroke-width="1.8"/><use href="#v705" stroke-width="2.7"/><use href="#v714" stroke-width="3.1"/><use href="#v715" stroke-width="3.1"/><use href="#v720" stroke-width="1.8"/><use href="#v725" stroke-width="3.6"/><use href="#v728" stroke-width="2.2"/><use href="#v731" stroke-width="3.6"/><use href="#v737" stroke-width="2.2"/><use href="#v749" stroke-width="2.7"/><use href="#v756" stroke-width="2.7"/><use href="#v769" stroke-width="3.6"/><use href="#v770" stroke-width="2.7"/><use href="#v784" stroke-width="2.7"/><use href="#v788" stroke-width="1.8"/><use href="#v789" stroke-width="3.1"/><use href="#v811" stroke-width="1.8"/><use href="#v812" stroke-width="1.8"/><use href="#v814" stroke-width="3.1"/><use href="#v816" stroke-width="4.0"/></g></g>
<g opacity=".75" filter="url(#rg)"><g fill="none" stroke="#87522a" stroke-linecap="round" stroke-linejoin="round" opacity="1" ><use href="#v1" stroke-width="6.5" stroke-dasharray="0.1 3.6"/><use href="#v3" stroke-width="7.5" stroke-dasharray="0.1 4.3"/><use href="#v9" stroke-width="5.5" stroke-dasharray="0.1 2.9"/><use href="#v13" stroke-width="10.5" stroke-dasharray="0.1 6.5"/><use href="#v14" stroke-width="10.5" stroke-dasharray="0.1 6.5"/><use href="#v15" stroke-width="6.5" stroke-dasharray="0.1 3.6"/><use href="#v22" stroke-width="7.5" stroke-dasharray="0.1 4.3"/><use href="#v24" stroke-width="6.5" stroke-dasharray="0.1 3.6"/><use href="#v30" stroke-width="7.5" stroke-dasharray="0.1 4.3"/><use href="#v39" stroke-width="6.5" stroke-dasharray="0.1 3.6"/><use href="#v40" stroke-width="7.5" stroke-dasharray="0.1 4.3"/><use href="#v43" stroke-width="6.5" stroke-dasharray="0.1 3.6"/><use href="#v44" stroke-width="5.5" stroke-dasharray="0.1 2.9"/><use href="#v52" stroke-width="7.5" stroke-dasharray="0.1 4.3"/><use href="#v54" stroke-width="9.5" stroke-dasharray="0.1 5.8"/><use href="#v58" stroke-width="7.5" stroke-dasharray="0.1 4.3"/><use href="#v59" stroke-width="8.5" stroke-dasharray="0.1 5.0"/><use href="#v60" stroke-width="7.5" stroke-dasharray="0.1 4.3"/><use href="#v71" stroke-width="8.5" stroke-dasharray="0.1 5.0"/><use href="#v72" stroke-width="7.5" stroke-dasharray="0.1 4.3"/><use href="#v76" stroke-width="6.5" stroke-dasharray="0.1 3.6"/><use href="#v78" stroke-width="5.5" stroke-dasharray="0.1 2.9"/><use href="#v81" stroke-width="7.5" stroke-dasharray="0.1 4.3"/><use href="#v83" stroke-width="9.5" stroke-dasharray="0.1 5.8"/><use href="#v84" stroke-width="6.5" stroke-dasharray="0.1 3.6"/><use href="#v85" stroke-width="6.5" stroke-dasharray="0.1 3.6"/><use href="#v88" stroke-width="5.5" stroke-dasharray="0.1 2.9"/><use href="#v89" stroke-width="6.5" stroke-dasharray="0.1 3.6"/><use href="#v94" stroke-width="6.5" stroke-dasharray="0.1 3.6"/><use href="#v96" stroke-width="7.5" stroke-dasharray="0.1 4.3"/><use href="#v106" stroke-width="6.5" stroke-dasharray="0.1 3.6"/><use href="#v107" stroke-width="5.5" stroke-dasharray="0.1 2.9"/><use href="#v108" stroke-width="5.5" stroke-dasharray="0.1 2.9"/><use href="#v110" stroke-width="10.5" stroke-dasharray="0.1 6.5"/><use href="#v112" stroke-width="9.5" stroke-dasharray="0.1 5.8"/><use href="#v114" stroke-width="8.5" stroke-dasharray="0.1 5.0"/><use href="#v115" stroke-width="10.5" stroke-dasharray="0.1 6.5"/><use href="#v123" stroke-width="10.5" stroke-dasharray="0.1 6.5"/><use href="#v128" stroke-width="7.5" stroke-dasharray="0.1 4.3"/><use href="#v130" stroke-width="7.5" stroke-dasharray="0.1 4.3"/><use href="#v134" stroke-width="5.5" stroke-dasharray="0.1 2.9"/><use href="#v143" stroke-width="5.5" stroke-dasharray="0.1 2.9"/><use href="#v144" stroke-width="6.5" stroke-dasharray="0.1 3.6"/><use href="#v151" stroke-width="6.5" stroke-dasharray="0.1 3.6"/><use href="#v154" stroke-width="7.5" stroke-dasharray="0.1 4.3"/><use href="#v160" stroke-width="6.5" stroke-dasharray="0.1 3.6"/><use href="#v169" stroke-width="6.5" stroke-dasharray="0.1 3.6"/><use href="#v171" stroke-width="8.5" stroke-dasharray="0.1 5.0"/><use href="#v175" stroke-width="7.5" stroke-dasharray="0.1 4.3"/><use href="#v179" stroke-width="8.5" stroke-dasharray="0.1 5.0"/><use href="#v182" stroke-width="6.5" stroke-dasharray="0.1 3.6"/><use href="#v186" stroke-width="7.5" stroke-dasharray="0.1 4.3"/><use href="#v192" stroke-width="8.5" stroke-dasharray="0.1 5.0"/><use href="#v195" stroke-width="7.5" stroke-dasharray="0.1 4.3"/><use href="#v199" stroke-width="6.5" stroke-dasharray="0.1 3.6"/><use href="#v205" stroke-width="5.5" stroke-dasharray="0.1 2.9"/><use href="#v219" stroke-width="9.5" stroke-dasharray="0.1 5.8"/><use href="#v222" stroke-width="6.5" stroke-dasharray="0.1 3.6"/><use href="#v230" stroke-width="8.5" stroke-dasharray="0.1 5.0"/><use href="#v231" stroke-width="9.5" stroke-dasharray="0.1 5.8"/><use href="#v234" stroke-width="6.5" stroke-dasharray="0.1 3.6"/><use href="#v235" stroke-width="7.5" stroke-dasharray="0.1 4.3"/><use href="#v236" stroke-width="6.5" stroke-dasharray="0.1 3.6"/><use href="#v239" stroke-width="6.5" stroke-dasharray="0.1 3.6"/><use href="#v240" stroke-width="5.5" stroke-dasharray="0.1 2.9"/><use href="#v250" stroke-width="9.5" stroke-dasharray="0.1 5.8"/><use href="#v252" stroke-width="5.5" stroke-dasharray="0.1 2.9"/><use href="#v259" stroke-width="5.5" stroke-dasharray="0.1 2.9"/><use href="#v261" stroke-width="7.5" stroke-dasharray="0.1 4.3"/><use href="#v262" stroke-width="6.5" stroke-dasharray="0.1 3.6"/><use href="#v264" stroke-width="9.5" stroke-dasharray="0.1 5.8"/><use href="#v267" stroke-width="5.5" stroke-dasharray="0.1 2.9"/><use href="#v269" stroke-width="6.5" stroke-dasharray="0.1 3.6"/><use href="#v273" stroke-width="10.5" stroke-dasharray="0.1 6.5"/><use href="#v274" stroke-width="10.5" stroke-dasharray="0.1 6.5"/><use href="#v279" stroke-width="8.5" stroke-dasharray="0.1 5.0"/><use href="#v284" stroke-width="10.5" stroke-dasharray="0.1 6.5"/><use href="#v292" stroke-width="10.5" stroke-dasharray="0.1 6.5"/><use href="#v297" stroke-width="5.5" stroke-dasharray="0.1 2.9"/><use href="#v299" stroke-width="9.5" stroke-dasharray="0.1 5.8"/><use href="#v306" stroke-width="5.5" stroke-dasharray="0.1 2.9"/><use href="#v307" stroke-width="8.5" stroke-dasharray="0.1 5.0"/><use href="#v313" stroke-width="8.5" stroke-dasharray="0.1 5.0"/><use href="#v314" stroke-width="7.5" stroke-dasharray="0.1 4.3"/><use href="#v318" stroke-width="6.5" stroke-dasharray="0.1 3.6"/><use href="#v321" stroke-width="5.5" stroke-dasharray="0.1 2.9"/><use href="#v324" stroke-width="8.5" stroke-dasharray="0.1 5.0"/><use href="#v325" stroke-width="7.5" stroke-dasharray="0.1 4.3"/><use href="#v328" stroke-width="6.5" stroke-dasharray="0.1 3.6"/><use href="#v331" stroke-width="6.5" stroke-dasharray="0.1 3.6"/><use href="#v337" stroke-width="9.5" stroke-dasharray="0.1 5.8"/><use href="#v339" stroke-width="9.5" stroke-dasharray="0.1 5.8"/><use href="#v341" stroke-width="9.5" stroke-dasharray="0.1 5.8"/><use href="#v345" stroke-width="6.5" stroke-dasharray="0.1 3.6"/><use href="#v346" stroke-width="8.5" stroke-dasharray="0.1 5.0"/><use href="#v347" stroke-width="6.5" stroke-dasharray="0.1 3.6"/><use href="#v348" stroke-width="5.5" stroke-dasharray="0.1 2.9"/><use href="#v349" stroke-width="7.5" stroke-dasharray="0.1 4.3"/><use href="#v353" stroke-width="8.5" stroke-dasharray="0.1 5.0"/><use href="#v359" stroke-width="6.5" stroke-dasharray="0.1 3.6"/><use href="#v361" stroke-width="8.5" stroke-dasharray="0.1 5.0"/><use href="#v362" stroke-width="10.5" stroke-dasharray="0.1 6.5"/><use href="#v363" stroke-width="9.5" stroke-dasharray="0.1 5.8"/><use href="#v365" stroke-width="8.5" stroke-dasharray="0.1 5.0"/><use href="#v367" stroke-width="7.5" stroke-dasharray="0.1 4.3"/><use href="#v373" stroke-width="6.5" stroke-dasharray="0.1 3.6"/><use href="#v374" stroke-width="8.5" stroke-dasharray="0.1 5.0"/><use href="#v377" stroke-width="6.5" stroke-dasharray="0.1 3.6"/><use href="#v382" stroke-width="9.5" stroke-dasharray="0.1 5.8"/><use href="#v384" stroke-width="6.5" stroke-dasharray="0.1 3.6"/><use href="#v386" stroke-width="8.5" stroke-dasharray="0.1 5.0"/><use href="#v388" stroke-width="5.5" stroke-dasharray="0.1 2.9"/><use href="#v390" stroke-width="8.5" stroke-dasharray="0.1 5.0"/><use href="#v392" stroke-width="7.5" stroke-dasharray="0.1 4.3"/><use href="#v402" stroke-width="10.5" stroke-dasharray="0.1 6.5"/><use href="#v405" stroke-width="6.5" stroke-dasharray="0.1 3.6"/><use href="#v413" stroke-width="6.5" stroke-dasharray="0.1 3.6"/><use href="#v414" stroke-width="7.5" stroke-dasharray="0.1 4.3"/><use href="#v417" stroke-width="5.5" stroke-dasharray="0.1 2.9"/><use href="#v420" stroke-width="9.5" stroke-dasharray="0.1 5.8"/><use href="#v422" stroke-width="8.5" stroke-dasharray="0.1 5.0"/><use href="#v423" stroke-width="5.5" stroke-dasharray="0.1 2.9"/><use href="#v425" stroke-width="7.5" stroke-dasharray="0.1 4.3"/><use href="#v427" stroke-width="7.5" stroke-dasharray="0.1 4.3"/><use href="#v428" stroke-width="10.5" stroke-dasharray="0.1 6.5"/><use href="#v430" stroke-width="6.5" stroke-dasharray="0.1 3.6"/><use href="#v440" stroke-width="8.5" stroke-dasharray="0.1 5.0"/><use href="#v441" stroke-width="8.5" stroke-dasharray="0.1 5.0"/><use href="#v443" stroke-width="8.5" stroke-dasharray="0.1 5.0"/><use href="#v449" stroke-width="6.5" stroke-dasharray="0.1 3.6"/><use href="#v450" stroke-width="8.5" stroke-dasharray="0.1 5.0"/><use href="#v451" stroke-width="6.5" stroke-dasharray="0.1 3.6"/><use href="#v458" stroke-width="10.5" stroke-dasharray="0.1 6.5"/><use href="#v472" stroke-width="7.5" stroke-dasharray="0.1 4.3"/><use href="#v473" stroke-width="7.5" stroke-dasharray="0.1 4.3"/><use href="#v476" stroke-width="7.5" stroke-dasharray="0.1 4.3"/><use href="#v484" stroke-width="6.5" stroke-dasharray="0.1 3.6"/><use href="#v487" stroke-width="6.5" stroke-dasharray="0.1 3.6"/><use href="#v489" stroke-width="8.5" stroke-dasharray="0.1 5.0"/><use href="#v490" stroke-width="7.5" stroke-dasharray="0.1 4.3"/><use href="#v493" stroke-width="7.5" stroke-dasharray="0.1 4.3"/><use href="#v495" stroke-width="6.5" stroke-dasharray="0.1 3.6"/><use href="#v496" stroke-width="5.5" stroke-dasharray="0.1 2.9"/><use href="#v497" stroke-width="6.5" stroke-dasharray="0.1 3.6"/><use href="#v499" stroke-width="6.5" stroke-dasharray="0.1 3.6"/><use href="#v500" stroke-width="9.5" stroke-dasharray="0.1 5.8"/><use href="#v502" stroke-width="10.5" stroke-dasharray="0.1 6.5"/><use href="#v504" stroke-width="7.5" stroke-dasharray="0.1 4.3"/><use href="#v507" stroke-width="7.5" stroke-dasharray="0.1 4.3"/><use href="#v509" stroke-width="5.5" stroke-dasharray="0.1 2.9"/><use href="#v512" stroke-width="6.5" stroke-dasharray="0.1 3.6"/><use href="#v513" stroke-width="7.5" stroke-dasharray="0.1 4.3"/><use href="#v515" stroke-width="9.5" stroke-dasharray="0.1 5.8"/><use href="#v519" stroke-width="10.5" stroke-dasharray="0.1 6.5"/><use href="#v520" stroke-width="10.5" stroke-dasharray="0.1 6.5"/><use href="#v526" stroke-width="7.5" stroke-dasharray="0.1 4.3"/><use href="#v528" stroke-width="7.5" stroke-dasharray="0.1 4.3"/><use href="#v529" stroke-width="10.5" stroke-dasharray="0.1 6.5"/><use href="#v540" stroke-width="7.5" stroke-dasharray="0.1 4.3"/><use href="#v542" stroke-width="8.5" stroke-dasharray="0.1 5.0"/><use href="#v543" stroke-width="7.5" stroke-dasharray="0.1 4.3"/><use href="#v545" stroke-width="7.5" stroke-dasharray="0.1 4.3"/><use href="#v549" stroke-width="8.5" stroke-dasharray="0.1 5.0"/><use href="#v550" stroke-width="7.5" stroke-dasharray="0.1 4.3"/><use href="#v554" stroke-width="6.5" stroke-dasharray="0.1 3.6"/><use href="#v556" stroke-width="6.5" stroke-dasharray="0.1 3.6"/><use href="#v561" stroke-width="5.5" stroke-dasharray="0.1 2.9"/><use href="#v567" stroke-width="7.5" stroke-dasharray="0.1 4.3"/><use href="#v568" stroke-width="10.5" stroke-dasharray="0.1 6.5"/><use href="#v572" stroke-width="8.5" stroke-dasharray="0.1 5.0"/><use href="#v580" stroke-width="8.5" stroke-dasharray="0.1 5.0"/><use href="#v585" stroke-width="8.5" stroke-dasharray="0.1 5.0"/><use href="#v591" stroke-width="7.5" stroke-dasharray="0.1 4.3"/><use href="#v592" stroke-width="6.5" stroke-dasharray="0.1 3.6"/><use href="#v594" stroke-width="6.5" stroke-dasharray="0.1 3.6"/><use href="#v597" stroke-width="7.5" stroke-dasharray="0.1 4.3"/><use href="#v598" stroke-width="9.5" stroke-dasharray="0.1 5.8"/><use href="#v599" stroke-width="8.5" stroke-dasharray="0.1 5.0"/><use href="#v606" stroke-width="6.5" stroke-dasharray="0.1 3.6"/><use href="#v608" stroke-width="5.5" stroke-dasharray="0.1 2.9"/><use href="#v609" stroke-width="8.5" stroke-dasharray="0.1 5.0"/><use href="#v610" stroke-width="7.5" stroke-dasharray="0.1 4.3"/><use href="#v613" stroke-width="7.5" stroke-dasharray="0.1 4.3"/><use href="#v616" stroke-width="7.5" stroke-dasharray="0.1 4.3"/><use href="#v618" stroke-width="10.5" stroke-dasharray="0.1 6.5"/><use href="#v619" stroke-width="8.5" stroke-dasharray="0.1 5.0"/><use href="#v622" stroke-width="6.5" stroke-dasharray="0.1 3.6"/><use href="#v626" stroke-width="9.5" stroke-dasharray="0.1 5.8"/><use href="#v627" stroke-width="8.5" stroke-dasharray="0.1 5.0"/><use href="#v636" stroke-width="5.5" stroke-dasharray="0.1 2.9"/><use href="#v639" stroke-width="6.5" stroke-dasharray="0.1 3.6"/><use href="#v641" stroke-width="8.5" stroke-dasharray="0.1 5.0"/><use href="#v642" stroke-width="8.5" stroke-dasharray="0.1 5.0"/><use href="#v643" stroke-width="6.5" stroke-dasharray="0.1 3.6"/><use href="#v649" stroke-width="6.5" stroke-dasharray="0.1 3.6"/><use href="#v661" stroke-width="5.5" stroke-dasharray="0.1 2.9"/><use href="#v666" stroke-width="10.5" stroke-dasharray="0.1 6.5"/><use href="#v670" stroke-width="6.5" stroke-dasharray="0.1 3.6"/><use href="#v673" stroke-width="8.5" stroke-dasharray="0.1 5.0"/><use href="#v675" stroke-width="7.5" stroke-dasharray="0.1 4.3"/><use href="#v678" stroke-width="8.5" stroke-dasharray="0.1 5.0"/><use href="#v687" stroke-width="6.5" stroke-dasharray="0.1 3.6"/><use href="#v690" stroke-width="5.5" stroke-dasharray="0.1 2.9"/><use href="#v692" stroke-width="10.5" stroke-dasharray="0.1 6.5"/><use href="#v695" stroke-width="7.5" stroke-dasharray="0.1 4.3"/><use href="#v696" stroke-width="9.5" stroke-dasharray="0.1 5.8"/><use href="#v701" stroke-width="7.5" stroke-dasharray="0.1 4.3"/><use href="#v702" stroke-width="8.5" stroke-dasharray="0.1 5.0"/><use href="#v703" stroke-width="6.5" stroke-dasharray="0.1 3.6"/><use href="#v706" stroke-width="7.5" stroke-dasharray="0.1 4.3"/><use href="#v708" stroke-width="9.5" stroke-dasharray="0.1 5.8"/><use href="#v709" stroke-width="5.5" stroke-dasharray="0.1 2.9"/><use href="#v712" stroke-width="10.5" stroke-dasharray="0.1 6.5"/><use href="#v721" stroke-width="8.5" stroke-dasharray="0.1 5.0"/><use href="#v723" stroke-width="10.5" stroke-dasharray="0.1 6.5"/><use href="#v738" stroke-width="8.5" stroke-dasharray="0.1 5.0"/><use href="#v741" stroke-width="7.5" stroke-dasharray="0.1 4.3"/><use href="#v745" stroke-width="8.5" stroke-dasharray="0.1 5.0"/><use href="#v747" stroke-width="6.5" stroke-dasharray="0.1 3.6"/><use href="#v753" stroke-width="6.5" stroke-dasharray="0.1 3.6"/><use href="#v754" stroke-width="6.5" stroke-dasharray="0.1 3.6"/><use href="#v757" stroke-width="8.5" stroke-dasharray="0.1 5.0"/><use href="#v760" stroke-width="6.5" stroke-dasharray="0.1 3.6"/><use href="#v762" stroke-width="6.5" stroke-dasharray="0.1 3.6"/><use href="#v763" stroke-width="6.5" stroke-dasharray="0.1 3.6"/><use href="#v768" stroke-width="7.5" stroke-dasharray="0.1 4.3"/><use href="#v773" stroke-width="6.5" stroke-dasharray="0.1 3.6"/><use href="#v775" stroke-width="10.5" stroke-dasharray="0.1 6.5"/><use href="#v777" stroke-width="7.5" stroke-dasharray="0.1 4.3"/><use href="#v779" stroke-width="7.5" stroke-dasharray="0.1 4.3"/><use href="#v781" stroke-width="7.5" stroke-dasharray="0.1 4.3"/><use href="#v790" stroke-width="5.5" stroke-dasharray="0.1 2.9"/><use href="#v793" stroke-width="7.5" stroke-dasharray="0.1 4.3"/><use href="#v810" stroke-width="6.5" stroke-dasharray="0.1 3.6"/><use href="#v813" stroke-width="8.5" stroke-dasharray="0.1 5.0"/></g><g fill="none" stroke="#b98f68" stroke-linecap="round" stroke-linejoin="round" opacity="1" ><use href="#v1" stroke-width="2.2" stroke-dasharray="0.1 3.6"/><use href="#v3" stroke-width="2.7" stroke-dasharray="0.1 4.3"/><use href="#v9" stroke-width="1.8" stroke-dasharray="0.1 2.9"/><use href="#v13" stroke-width="4.0" stroke-dasharray="0.1 6.5"/><use href="#v14" stroke-width="4.0" stroke-dasharray="0.1 6.5"/><use href="#v15" stroke-width="2.2" stroke-dasharray="0.1 3.6"/><use href="#v22" stroke-width="2.7" stroke-dasharray="0.1 4.3"/><use href="#v24" stroke-width="2.2" stroke-dasharray="0.1 3.6"/><use href="#v30" stroke-width="2.7" stroke-dasharray="0.1 4.3"/><use href="#v39" stroke-width="2.2" stroke-dasharray="0.1 3.6"/><use href="#v40" stroke-width="2.7" stroke-dasharray="0.1 4.3"/><use href="#v43" stroke-width="2.2" stroke-dasharray="0.1 3.6"/><use href="#v44" stroke-width="1.8" stroke-dasharray="0.1 2.9"/><use href="#v52" stroke-width="2.7" stroke-dasharray="0.1 4.3"/><use href="#v54" stroke-width="3.6" stroke-dasharray="0.1 5.8"/><use href="#v58" stroke-width="2.7" stroke-dasharray="0.1 4.3"/><use href="#v59" stroke-width="3.1" stroke-dasharray="0.1 5.0"/><use href="#v60" stroke-width="2.7" stroke-dasharray="0.1 4.3"/><use href="#v71" stroke-width="3.1" stroke-dasharray="0.1 5.0"/><use href="#v72" stroke-width="2.7" stroke-dasharray="0.1 4.3"/><use href="#v76" stroke-width="2.2" stroke-dasharray="0.1 3.6"/><use href="#v78" stroke-width="1.8" stroke-dasharray="0.1 2.9"/><use href="#v81" stroke-width="2.7" stroke-dasharray="0.1 4.3"/><use href="#v83" stroke-width="3.6" stroke-dasharray="0.1 5.8"/><use href="#v84" stroke-width="2.2" stroke-dasharray="0.1 3.6"/><use href="#v85" stroke-width="2.2" stroke-dasharray="0.1 3.6"/><use href="#v88" stroke-width="1.8" stroke-dasharray="0.1 2.9"/><use href="#v89" stroke-width="2.2" stroke-dasharray="0.1 3.6"/><use href="#v94" stroke-width="2.2" stroke-dasharray="0.1 3.6"/><use href="#v96" stroke-width="2.7" stroke-dasharray="0.1 4.3"/><use href="#v106" stroke-width="2.2" stroke-dasharray="0.1 3.6"/><use href="#v107" stroke-width="1.8" stroke-dasharray="0.1 2.9"/><use href="#v108" stroke-width="1.8" stroke-dasharray="0.1 2.9"/><use href="#v110" stroke-width="4.0" stroke-dasharray="0.1 6.5"/><use href="#v112" stroke-width="3.6" stroke-dasharray="0.1 5.8"/><use href="#v114" stroke-width="3.1" stroke-dasharray="0.1 5.0"/><use href="#v115" stroke-width="4.0" stroke-dasharray="0.1 6.5"/><use href="#v123" stroke-width="4.0" stroke-dasharray="0.1 6.5"/><use href="#v128" stroke-width="2.7" stroke-dasharray="0.1 4.3"/><use href="#v130" stroke-width="2.7" stroke-dasharray="0.1 4.3"/><use href="#v134" stroke-width="1.8" stroke-dasharray="0.1 2.9"/><use href="#v143" stroke-width="1.8" stroke-dasharray="0.1 2.9"/><use href="#v144" stroke-width="2.2" stroke-dasharray="0.1 3.6"/><use href="#v151" stroke-width="2.2" stroke-dasharray="0.1 3.6"/><use href="#v154" stroke-width="2.7" stroke-dasharray="0.1 4.3"/><use href="#v160" stroke-width="2.2" stroke-dasharray="0.1 3.6"/><use href="#v169" stroke-width="2.2" stroke-dasharray="0.1 3.6"/><use href="#v171" stroke-width="3.1" stroke-dasharray="0.1 5.0"/><use href="#v175" stroke-width="2.7" stroke-dasharray="0.1 4.3"/><use href="#v179" stroke-width="3.1" stroke-dasharray="0.1 5.0"/><use href="#v182" stroke-width="2.2" stroke-dasharray="0.1 3.6"/><use href="#v186" stroke-width="2.7" stroke-dasharray="0.1 4.3"/><use href="#v192" stroke-width="3.1" stroke-dasharray="0.1 5.0"/><use href="#v195" stroke-width="2.7" stroke-dasharray="0.1 4.3"/><use href="#v199" stroke-width="2.2" stroke-dasharray="0.1 3.6"/><use href="#v205" stroke-width="1.8" stroke-dasharray="0.1 2.9"/><use href="#v219" stroke-width="3.6" stroke-dasharray="0.1 5.8"/><use href="#v222" stroke-width="2.2" stroke-dasharray="0.1 3.6"/><use href="#v230" stroke-width="3.1" stroke-dasharray="0.1 5.0"/><use href="#v231" stroke-width="3.6" stroke-dasharray="0.1 5.8"/><use href="#v234" stroke-width="2.2" stroke-dasharray="0.1 3.6"/><use href="#v235" stroke-width="2.7" stroke-dasharray="0.1 4.3"/><use href="#v236" stroke-width="2.2" stroke-dasharray="0.1 3.6"/><use href="#v239" stroke-width="2.2" stroke-dasharray="0.1 3.6"/><use href="#v240" stroke-width="1.8" stroke-dasharray="0.1 2.9"/><use href="#v250" stroke-width="3.6" stroke-dasharray="0.1 5.8"/><use href="#v252" stroke-width="1.8" stroke-dasharray="0.1 2.9"/><use href="#v259" stroke-width="1.8" stroke-dasharray="0.1 2.9"/><use href="#v261" stroke-width="2.7" stroke-dasharray="0.1 4.3"/><use href="#v262" stroke-width="2.2" stroke-dasharray="0.1 3.6"/><use href="#v264" stroke-width="3.6" stroke-dasharray="0.1 5.8"/><use href="#v267" stroke-width="1.8" stroke-dasharray="0.1 2.9"/><use href="#v269" stroke-width="2.2" stroke-dasharray="0.1 3.6"/><use href="#v273" stroke-width="4.0" stroke-dasharray="0.1 6.5"/><use href="#v274" stroke-width="4.0" stroke-dasharray="0.1 6.5"/><use href="#v279" stroke-width="3.1" stroke-dasharray="0.1 5.0"/><use href="#v284" stroke-width="4.0" stroke-dasharray="0.1 6.5"/><use href="#v292" stroke-width="4.0" stroke-dasharray="0.1 6.5"/><use href="#v297" stroke-width="1.8" stroke-dasharray="0.1 2.9"/><use href="#v299" stroke-width="3.6" stroke-dasharray="0.1 5.8"/><use href="#v306" stroke-width="1.8" stroke-dasharray="0.1 2.9"/><use href="#v307" stroke-width="3.1" stroke-dasharray="0.1 5.0"/><use href="#v313" stroke-width="3.1" stroke-dasharray="0.1 5.0"/><use href="#v314" stroke-width="2.7" stroke-dasharray="0.1 4.3"/><use href="#v318" stroke-width="2.2" stroke-dasharray="0.1 3.6"/><use href="#v321" stroke-width="1.8" stroke-dasharray="0.1 2.9"/><use href="#v324" stroke-width="3.1" stroke-dasharray="0.1 5.0"/><use href="#v325" stroke-width="2.7" stroke-dasharray="0.1 4.3"/><use href="#v328" stroke-width="2.2" stroke-dasharray="0.1 3.6"/><use href="#v331" stroke-width="2.2" stroke-dasharray="0.1 3.6"/><use href="#v337" stroke-width="3.6" stroke-dasharray="0.1 5.8"/><use href="#v339" stroke-width="3.6" stroke-dasharray="0.1 5.8"/><use href="#v341" stroke-width="3.6" stroke-dasharray="0.1 5.8"/><use href="#v345" stroke-width="2.2" stroke-dasharray="0.1 3.6"/><use href="#v346" stroke-width="3.1" stroke-dasharray="0.1 5.0"/><use href="#v347" stroke-width="2.2" stroke-dasharray="0.1 3.6"/><use href="#v348" stroke-width="1.8" stroke-dasharray="0.1 2.9"/><use href="#v349" stroke-width="2.7" stroke-dasharray="0.1 4.3"/><use href="#v353" stroke-width="3.1" stroke-dasharray="0.1 5.0"/><use href="#v359" stroke-width="2.2" stroke-dasharray="0.1 3.6"/><use href="#v361" stroke-width="3.1" stroke-dasharray="0.1 5.0"/><use href="#v362" stroke-width="4.0" stroke-dasharray="0.1 6.5"/><use href="#v363" stroke-width="3.6" stroke-dasharray="0.1 5.8"/><use href="#v365" stroke-width="3.1" stroke-dasharray="0.1 5.0"/><use href="#v367" stroke-width="2.7" stroke-dasharray="0.1 4.3"/><use href="#v373" stroke-width="2.2" stroke-dasharray="0.1 3.6"/><use href="#v374" stroke-width="3.1" stroke-dasharray="0.1 5.0"/><use href="#v377" stroke-width="2.2" stroke-dasharray="0.1 3.6"/><use href="#v382" stroke-width="3.6" stroke-dasharray="0.1 5.8"/><use href="#v384" stroke-width="2.2" stroke-dasharray="0.1 3.6"/><use href="#v386" stroke-width="3.1" stroke-dasharray="0.1 5.0"/><use href="#v388" stroke-width="1.8" stroke-dasharray="0.1 2.9"/><use href="#v390" stroke-width="3.1" stroke-dasharray="0.1 5.0"/><use href="#v392" stroke-width="2.7" stroke-dasharray="0.1 4.3"/><use href="#v402" stroke-width="4.0" stroke-dasharray="0.1 6.5"/><use href="#v405" stroke-width="2.2" stroke-dasharray="0.1 3.6"/><use href="#v413" stroke-width="2.2" stroke-dasharray="0.1 3.6"/><use href="#v414" stroke-width="2.7" stroke-dasharray="0.1 4.3"/><use href="#v417" stroke-width="1.8" stroke-dasharray="0.1 2.9"/><use href="#v420" stroke-width="3.6" stroke-dasharray="0.1 5.8"/><use href="#v422" stroke-width="3.1" stroke-dasharray="0.1 5.0"/><use href="#v423" stroke-width="1.8" stroke-dasharray="0.1 2.9"/><use href="#v425" stroke-width="2.7" stroke-dasharray="0.1 4.3"/><use href="#v427" stroke-width="2.7" stroke-dasharray="0.1 4.3"/><use href="#v428" stroke-width="4.0" stroke-dasharray="0.1 6.5"/><use href="#v430" stroke-width="2.2" stroke-dasharray="0.1 3.6"/><use href="#v440" stroke-width="3.1" stroke-dasharray="0.1 5.0"/><use href="#v441" stroke-width="3.1" stroke-dasharray="0.1 5.0"/><use href="#v443" stroke-width="3.1" stroke-dasharray="0.1 5.0"/><use href="#v449" stroke-width="2.2" stroke-dasharray="0.1 3.6"/><use href="#v450" stroke-width="3.1" stroke-dasharray="0.1 5.0"/><use href="#v451" stroke-width="2.2" stroke-dasharray="0.1 3.6"/><use href="#v458" stroke-width="4.0" stroke-dasharray="0.1 6.5"/><use href="#v472" stroke-width="2.7" stroke-dasharray="0.1 4.3"/><use href="#v473" stroke-width="2.7" stroke-dasharray="0.1 4.3"/><use href="#v476" stroke-width="2.7" stroke-dasharray="0.1 4.3"/><use href="#v484" stroke-width="2.2" stroke-dasharray="0.1 3.6"/><use href="#v487" stroke-width="2.2" stroke-dasharray="0.1 3.6"/><use href="#v489" stroke-width="3.1" stroke-dasharray="0.1 5.0"/><use href="#v490" stroke-width="2.7" stroke-dasharray="0.1 4.3"/><use href="#v493" stroke-width="2.7" stroke-dasharray="0.1 4.3"/><use href="#v495" stroke-width="2.2" stroke-dasharray="0.1 3.6"/><use href="#v496" stroke-width="1.8" stroke-dasharray="0.1 2.9"/><use href="#v497" stroke-width="2.2" stroke-dasharray="0.1 3.6"/><use href="#v499" stroke-width="2.2" stroke-dasharray="0.1 3.6"/><use href="#v500" stroke-width="3.6" stroke-dasharray="0.1 5.8"/><use href="#v502" stroke-width="4.0" stroke-dasharray="0.1 6.5"/><use href="#v504" stroke-width="2.7" stroke-dasharray="0.1 4.3"/><use href="#v507" stroke-width="2.7" stroke-dasharray="0.1 4.3"/><use href="#v509" stroke-width="1.8" stroke-dasharray="0.1 2.9"/><use href="#v512" stroke-width="2.2" stroke-dasharray="0.1 3.6"/><use href="#v513" stroke-width="2.7" stroke-dasharray="0.1 4.3"/><use href="#v515" stroke-width="3.6" stroke-dasharray="0.1 5.8"/><use href="#v519" stroke-width="4.0" stroke-dasharray="0.1 6.5"/><use href="#v520" stroke-width="4.0" stroke-dasharray="0.1 6.5"/><use href="#v526" stroke-width="2.7" stroke-dasharray="0.1 4.3"/><use href="#v528" stroke-width="2.7" stroke-dasharray="0.1 4.3"/><use href="#v529" stroke-width="4.0" stroke-dasharray="0.1 6.5"/><use href="#v540" stroke-width="2.7" stroke-dasharray="0.1 4.3"/><use href="#v542" stroke-width="3.1" stroke-dasharray="0.1 5.0"/><use href="#v543" stroke-width="2.7" stroke-dasharray="0.1 4.3"/><use href="#v545" stroke-width="2.7" stroke-dasharray="0.1 4.3"/><use href="#v549" stroke-width="3.1" stroke-dasharray="0.1 5.0"/><use href="#v550" stroke-width="2.7" stroke-dasharray="0.1 4.3"/><use href="#v554" stroke-width="2.2" stroke-dasharray="0.1 3.6"/><use href="#v556" stroke-width="2.2" stroke-dasharray="0.1 3.6"/><use href="#v561" stroke-width="1.8" stroke-dasharray="0.1 2.9"/><use href="#v567" stroke-width="2.7" stroke-dasharray="0.1 4.3"/><use href="#v568" stroke-width="4.0" stroke-dasharray="0.1 6.5"/><use href="#v572" stroke-width="3.1" stroke-dasharray="0.1 5.0"/><use href="#v580" stroke-width="3.1" stroke-dasharray="0.1 5.0"/><use href="#v585" stroke-width="3.1" stroke-dasharray="0.1 5.0"/><use href="#v591" stroke-width="2.7" stroke-dasharray="0.1 4.3"/><use href="#v592" stroke-width="2.2" stroke-dasharray="0.1 3.6"/><use href="#v594" stroke-width="2.2" stroke-dasharray="0.1 3.6"/><use href="#v597" stroke-width="2.7" stroke-dasharray="0.1 4.3"/><use href="#v598" stroke-width="3.6" stroke-dasharray="0.1 5.8"/><use href="#v599" stroke-width="3.1" stroke-dasharray="0.1 5.0"/><use href="#v606" stroke-width="2.2" stroke-dasharray="0.1 3.6"/><use href="#v608" stroke-width="1.8" stroke-dasharray="0.1 2.9"/><use href="#v609" stroke-width="3.1" stroke-dasharray="0.1 5.0"/><use href="#v610" stroke-width="2.7" stroke-dasharray="0.1 4.3"/><use href="#v613" stroke-width="2.7" stroke-dasharray="0.1 4.3"/><use href="#v616" stroke-width="2.7" stroke-dasharray="0.1 4.3"/><use href="#v618" stroke-width="4.0" stroke-dasharray="0.1 6.5"/><use href="#v619" stroke-width="3.1" stroke-dasharray="0.1 5.0"/><use href="#v622" stroke-width="2.2" stroke-dasharray="0.1 3.6"/><use href="#v626" stroke-width="3.6" stroke-dasharray="0.1 5.8"/><use href="#v627" stroke-width="3.1" stroke-dasharray="0.1 5.0"/><use href="#v636" stroke-width="1.8" stroke-dasharray="0.1 2.9"/><use href="#v639" stroke-width="2.2" stroke-dasharray="0.1 3.6"/><use href="#v641" stroke-width="3.1" stroke-dasharray="0.1 5.0"/><use href="#v642" stroke-width="3.1" stroke-dasharray="0.1 5.0"/><use href="#v643" stroke-width="2.2" stroke-dasharray="0.1 3.6"/><use href="#v649" stroke-width="2.2" stroke-dasharray="0.1 3.6"/><use href="#v661" stroke-width="1.8" stroke-dasharray="0.1 2.9"/><use href="#v666" stroke-width="4.0" stroke-dasharray="0.1 6.5"/><use href="#v670" stroke-width="2.2" stroke-dasharray="0.1 3.6"/><use href="#v673" stroke-width="3.1" stroke-dasharray="0.1 5.0"/><use href="#v675" stroke-width="2.7" stroke-dasharray="0.1 4.3"/><use href="#v678" stroke-width="3.1" stroke-dasharray="0.1 5.0"/><use href="#v687" stroke-width="2.2" stroke-dasharray="0.1 3.6"/><use href="#v690" stroke-width="1.8" stroke-dasharray="0.1 2.9"/><use href="#v692" stroke-width="4.0" stroke-dasharray="0.1 6.5"/><use href="#v695" stroke-width="2.7" stroke-dasharray="0.1 4.3"/><use href="#v696" stroke-width="3.6" stroke-dasharray="0.1 5.8"/><use href="#v701" stroke-width="2.7" stroke-dasharray="0.1 4.3"/><use href="#v702" stroke-width="3.1" stroke-dasharray="0.1 5.0"/><use href="#v703" stroke-width="2.2" stroke-dasharray="0.1 3.6"/><use href="#v706" stroke-width="2.7" stroke-dasharray="0.1 4.3"/><use href="#v708" stroke-width="3.6" stroke-dasharray="0.1 5.8"/><use href="#v709" stroke-width="1.8" stroke-dasharray="0.1 2.9"/><use href="#v712" stroke-width="4.0" stroke-dasharray="0.1 6.5"/><use href="#v721" stroke-width="3.1" stroke-dasharray="0.1 5.0"/><use href="#v723" stroke-width="4.0" stroke-dasharray="0.1 6.5"/><use href="#v738" stroke-width="3.1" stroke-dasharray="0.1 5.0"/><use href="#v741" stroke-width="2.7" stroke-dasharray="0.1 4.3"/><use href="#v745" stroke-width="3.1" stroke-dasharray="0.1 5.0"/><use href="#v747" stroke-width="2.2" stroke-dasharray="0.1 3.6"/><use href="#v753" stroke-width="2.2" stroke-dasharray="0.1 3.6"/><use href="#v754" stroke-width="2.2" stroke-dasharray="0.1 3.6"/><use href="#v757" stroke-width="3.1" stroke-dasharray="0.1 5.0"/><use href="#v760" stroke-width="2.2" stroke-dasharray="0.1 3.6"/><use href="#v762" stroke-width="2.2" stroke-dasharray="0.1 3.6"/><use href="#v763" stroke-width="2.2" stroke-dasharray="0.1 3.6"/><use href="#v768" stroke-width="2.7" stroke-dasharray="0.1 4.3"/><use href="#v773" stroke-width="2.2" stroke-dasharray="0.1 3.6"/><use href="#v775" stroke-width="4.0" stroke-dasharray="0.1 6.5"/><use href="#v777" stroke-width="2.7" stroke-dasharray="0.1 4.3"/><use href="#v779" stroke-width="2.7" stroke-dasharray="0.1 4.3"/><use href="#v781" stroke-width="2.7" stroke-dasharray="0.1 4.3"/><use href="#v790" stroke-width="1.8" stroke-dasharray="0.1 2.9"/><use href="#v793" stroke-width="2.7" stroke-dasharray="0.1 4.3"/><use href="#v810" stroke-width="2.2" stroke-dasharray="0.1 3.6"/><use href="#v813" stroke-width="3.1" stroke-dasharray="0.1 5.0"/></g></g>
<g opacity=".88" filter="url(#rg)"><g fill="none" stroke="#864f22" stroke-linecap="round" stroke-linejoin="round" opacity="1" ><use href="#v0" stroke-width="7.0"/><use href="#v5" stroke-width="5.0"/><use href="#v7" stroke-width="6.0"/><use href="#v11" stroke-width="12.0"/><use href="#v16" stroke-width="10.0"/><use href="#v19" stroke-width="7.0"/><use href="#v23" stroke-width="5.0"/><use href="#v26" stroke-width="10.0"/><use href="#v29" stroke-width="14.0"/><use href="#v31" stroke-width="10.0"/><use href="#v34" stroke-width="10.0"/><use href="#v41" stroke-width="8.0"/><use href="#v42" stroke-width="8.0"/><use href="#v45" stroke-width="8.0"/><use href="#v48" stroke-width="8.0"/><use href="#v49" stroke-width="7.0"/><use href="#v50" stroke-width="6.0"/><use href="#v51" stroke-width="8.0"/><use href="#v55" stroke-width="6.0"/><use href="#v56" stroke-width="9.0"/><use href="#v62" stroke-width="12.0"/><use href="#v63" stroke-width="5.0"/><use href="#v64" stroke-width="8.0"/><use href="#v65" stroke-width="14.0"/><use href="#v66" stroke-width="7.0"/><use href="#v67" stroke-width="8.0"/><use href="#v69" stroke-width="8.0"/><use href="#v70" stroke-width="8.0"/><use href="#v75" stroke-width="8.0"/><use href="#v77" stroke-width="7.0"/><use href="#v79" stroke-width="8.0"/><use href="#v80" stroke-width="14.0"/><use href="#v82" stroke-width="14.0"/><use href="#v87" stroke-width="12.0"/><use href="#v90" stroke-width="6.0"/><use href="#v93" stroke-width="6.0"/><use href="#v95" stroke-width="10.0"/><use href="#v99" stroke-width="7.0"/><use href="#v101" stroke-width="9.0"/><use href="#v102" stroke-width="14.0"/><use href="#v105" stroke-width="6.0"/><use href="#v109" stroke-width="8.0"/><use href="#v113" stroke-width="6.0"/><use href="#v117" stroke-width="12.0"/><use href="#v118" stroke-width="7.0"/><use href="#v119" stroke-width="8.0"/><use href="#v124" stroke-width="10.0"/><use href="#v125" stroke-width="12.0"/><use href="#v127" stroke-width="5.0"/><use href="#v132" stroke-width="6.0"/><use href="#v133" stroke-width="7.0"/><use href="#v138" stroke-width="12.0"/><use href="#v139" stroke-width="6.0"/><use href="#v140" stroke-width="9.0"/><use href="#v147" stroke-width="10.0"/><use href="#v152" stroke-width="6.0"/><use href="#v153" stroke-width="5.0"/><use href="#v161" stroke-width="14.0"/><use href="#v163" stroke-width="5.0"/><use href="#v165" stroke-width="7.0"/><use href="#v166" stroke-width="8.0"/><use href="#v168" stroke-width="6.0"/><use href="#v177" stroke-width="10.0"/><use href="#v178" stroke-width="9.0"/><use href="#v180" stroke-width="7.0"/><use href="#v183" stroke-width="6.0"/><use href="#v184" stroke-width="8.0"/><use href="#v187" stroke-width="6.0"/><use href="#v190" stroke-width="10.0"/><use href="#v191" stroke-width="6.0"/><use href="#v193" stroke-width="6.0"/><use href="#v197" stroke-width="5.0"/><use href="#v201" stroke-width="5.0"/><use href="#v202" stroke-width="5.0"/><use href="#v203" stroke-width="7.0"/><use href="#v204" stroke-width="9.0"/><use href="#v211" stroke-width="10.0"/><use href="#v215" stroke-width="6.0"/><use href="#v217" stroke-width="7.0"/><use href="#v218" stroke-width="6.0"/><use href="#v225" stroke-width="8.0"/><use href="#v226" stroke-width="7.0"/><use href="#v228" stroke-width="9.0"/><use href="#v229" stroke-width="10.0"/><use href="#v237" stroke-width="10.0"/><use href="#v243" stroke-width="7.0"/><use href="#v244" stroke-width="5.0"/><use href="#v247" stroke-width="8.0"/><use href="#v248" stroke-width="6.0"/><use href="#v253" stroke-width="7.0"/><use href="#v255" stroke-width="7.0"/><use href="#v258" stroke-width="6.0"/><use href="#v263" stroke-width="7.0"/><use href="#v268" stroke-width="9.0"/><use href="#v270" stroke-width="6.0"/><use href="#v271" stroke-width="9.0"/><use href="#v272" stroke-width="12.0"/><use href="#v275" stroke-width="6.0"/><use href="#v276" stroke-width="7.0"/><use href="#v277" stroke-width="10.0"/><use href="#v281" stroke-width="6.0"/><use href="#v285" stroke-width="8.0"/><use href="#v286" stroke-width="7.0"/><use href="#v289" stroke-width="8.0"/><use href="#v290" stroke-width="6.0"/><use href="#v291" stroke-width="14.0"/><use href="#v293" stroke-width="8.0"/><use href="#v294" stroke-width="14.0"/><use href="#v295" stroke-width="12.0"/><use href="#v296" stroke-width="7.0"/><use href="#v298" stroke-width="5.0"/><use href="#v300" stroke-width="6.0"/><use href="#v303" stroke-width="5.0"/><use href="#v305" stroke-width="12.0"/><use href="#v309" stroke-width="14.0"/><use href="#v310" stroke-width="8.0"/><use href="#v311" stroke-width="10.0"/><use href="#v312" stroke-width="14.0"/><use href="#v317" stroke-width="14.0"/><use href="#v319" stroke-width="8.0"/><use href="#v322" stroke-width="14.0"/><use href="#v323" stroke-width="8.0"/><use href="#v326" stroke-width="8.0"/><use href="#v327" stroke-width="6.0"/><use href="#v329" stroke-width="14.0"/><use href="#v332" stroke-width="14.0"/><use href="#v333" stroke-width="10.0"/><use href="#v335" stroke-width="6.0"/><use href="#v340" stroke-width="6.0"/><use href="#v343" stroke-width="10.0"/><use href="#v344" stroke-width="7.0"/><use href="#v354" stroke-width="9.0"/><use href="#v355" stroke-width="5.0"/><use href="#v357" stroke-width="7.0"/><use href="#v364" stroke-width="8.0"/><use href="#v366" stroke-width="14.0"/><use href="#v368" stroke-width="6.0"/><use href="#v369" stroke-width="14.0"/><use href="#v372" stroke-width="12.0"/><use href="#v375" stroke-width="6.0"/><use href="#v376" stroke-width="8.0"/><use href="#v378" stroke-width="6.0"/><use href="#v387" stroke-width="6.0"/><use href="#v393" stroke-width="7.0"/><use href="#v395" stroke-width="10.0"/><use href="#v397" stroke-width="12.0"/><use href="#v399" stroke-width="12.0"/><use href="#v400" stroke-width="12.0"/><use href="#v403" stroke-width="7.0"/><use href="#v408" stroke-width="9.0"/><use href="#v412" stroke-width="10.0"/><use href="#v415" stroke-width="10.0"/><use href="#v416" stroke-width="8.0"/><use href="#v418" stroke-width="8.0"/><use href="#v419" stroke-width="9.0"/><use href="#v424" stroke-width="7.0"/><use href="#v426" stroke-width="12.0"/><use href="#v429" stroke-width="7.0"/><use href="#v431" stroke-width="5.0"/><use href="#v434" stroke-width="5.0"/><use href="#v436" stroke-width="12.0"/><use href="#v437" stroke-width="14.0"/><use href="#v438" stroke-width="7.0"/><use href="#v442" stroke-width="9.0"/><use href="#v445" stroke-width="5.0"/><use href="#v447" stroke-width="12.0"/><use href="#v452" stroke-width="10.0"/><use href="#v453" stroke-width="8.0"/><use href="#v460" stroke-width="8.0"/><use href="#v461" stroke-width="6.0"/><use href="#v462" stroke-width="6.0"/><use href="#v463" stroke-width="10.0"/><use href="#v466" stroke-width="8.0"/><use href="#v470" stroke-width="7.0"/><use href="#v471" stroke-width="5.0"/><use href="#v474" stroke-width="5.0"/><use href="#v477" stroke-width="12.0"/><use href="#v478" stroke-width="6.0"/><use href="#v480" stroke-width="8.0"/><use href="#v483" stroke-width="12.0"/><use href="#v485" stroke-width="8.0"/><use href="#v486" stroke-width="6.0"/><use href="#v488" stroke-width="9.0"/><use href="#v494" stroke-width="12.0"/><use href="#v505" stroke-width="6.0"/><use href="#v508" stroke-width="8.0"/><use href="#v511" stroke-width="5.0"/><use href="#v518" stroke-width="8.0"/><use href="#v522" stroke-width="14.0"/><use href="#v523" stroke-width="7.0"/><use href="#v524" stroke-width="9.0"/><use href="#v525" stroke-width="6.0"/><use href="#v527" stroke-width="14.0"/><use href="#v531" stroke-width="6.0"/><use href="#v533" stroke-width="12.0"/><use href="#v535" stroke-width="7.0"/><use href="#v536" stroke-width="14.0"/><use href="#v537" stroke-width="8.0"/><use href="#v538" stroke-width="7.0"/><use href="#v541" stroke-width="7.0"/><use href="#v544" stroke-width="8.0"/><use href="#v547" stroke-width="8.0"/><use href="#v551" stroke-width="5.0"/><use href="#v552" stroke-width="8.0"/><use href="#v553" stroke-width="8.0"/><use href="#v555" stroke-width="9.0"/><use href="#v557" stroke-width="14.0"/><use href="#v562" stroke-width="8.0"/><use href="#v563" stroke-width="14.0"/><use href="#v565" stroke-width="8.0"/><use href="#v566" stroke-width="8.0"/><use href="#v571" stroke-width="12.0"/><use href="#v574" stroke-width="6.0"/><use href="#v576" stroke-width="7.0"/><use href="#v581" stroke-width="7.0"/><use href="#v583" stroke-width="9.0"/><use href="#v587" stroke-width="7.0"/><use href="#v590" stroke-width="6.0"/><use href="#v601" stroke-width="8.0"/><use href="#v605" stroke-width="8.0"/><use href="#v607" stroke-width="7.0"/><use href="#v611" stroke-width="6.0"/><use href="#v612" stroke-width="9.0"/><use href="#v615" stroke-width="7.0"/><use href="#v617" stroke-width="8.0"/><use href="#v624" stroke-width="7.0"/><use href="#v625" stroke-width="8.0"/><use href="#v631" stroke-width="6.0"/><use href="#v632" stroke-width="5.0"/><use href="#v634" stroke-width="8.0"/><use href="#v635" stroke-width="12.0"/><use href="#v637" stroke-width="14.0"/><use href="#v638" stroke-width="7.0"/><use href="#v645" stroke-width="5.0"/><use href="#v648" stroke-width="9.0"/><use href="#v650" stroke-width="6.0"/><use href="#v651" stroke-width="9.0"/><use href="#v653" stroke-width="6.0"/><use href="#v654" stroke-width="7.0"/><use href="#v656" stroke-width="14.0"/><use href="#v657" stroke-width="8.0"/><use href="#v659" stroke-width="9.0"/><use href="#v663" stroke-width="14.0"/><use href="#v664" stroke-width="5.0"/><use href="#v669" stroke-width="6.0"/><use href="#v674" stroke-width="5.0"/><use href="#v676" stroke-width="10.0"/><use href="#v679" stroke-width="14.0"/><use href="#v680" stroke-width="9.0"/><use href="#v681" stroke-width="6.0"/><use href="#v683" stroke-width="6.0"/><use href="#v686" stroke-width="5.0"/><use href="#v689" stroke-width="5.0"/><use href="#v694" stroke-width="8.0"/><use href="#v697" stroke-width="7.0"/><use href="#v698" stroke-width="10.0"/><use href="#v704" stroke-width="8.0"/><use href="#v707" stroke-width="5.0"/><use href="#v713" stroke-width="8.0"/><use href="#v716" stroke-width="9.0"/><use href="#v717" stroke-width="6.0"/><use href="#v718" stroke-width="5.0"/><use href="#v719" stroke-width="5.0"/><use href="#v727" stroke-width="6.0"/><use href="#v729" stroke-width="12.0"/><use href="#v730" stroke-width="8.0"/><use href="#v732" stroke-width="14.0"/><use href="#v735" stroke-width="6.0"/><use href="#v736" stroke-width="7.0"/><use href="#v739" stroke-width="8.0"/><use href="#v740" stroke-width="14.0"/><use href="#v743" stroke-width="12.0"/><use href="#v744" stroke-width="8.0"/><use href="#v746" stroke-width="6.0"/><use href="#v748" stroke-width="9.0"/><use href="#v750" stroke-width="8.0"/><use href="#v751" stroke-width="8.0"/><use href="#v752" stroke-width="8.0"/><use href="#v758" stroke-width="6.0"/><use href="#v759" stroke-width="9.0"/><use href="#v764" stroke-width="9.0"/><use href="#v765" stroke-width="5.0"/><use href="#v766" stroke-width="7.0"/><use href="#v767" stroke-width="6.0"/><use href="#v771" stroke-width="5.0"/><use href="#v776" stroke-width="10.0"/><use href="#v782" stroke-width="7.0"/><use href="#v791" stroke-width="8.0"/><use href="#v792" stroke-width="12.0"/><use href="#v795" stroke-width="5.0"/><use href="#v796" stroke-width="8.0"/><use href="#v800" stroke-width="14.0"/><use href="#v801" stroke-width="7.0"/><use href="#v802" stroke-width="14.0"/><use href="#v803" stroke-width="9.0"/><use href="#v804" stroke-width="5.0"/><use href="#v805" stroke-width="9.0"/><use href="#v806" stroke-width="12.0"/><use href="#v807" stroke-width="9.0"/><use href="#v809" stroke-width="12.0"/><use href="#v817" stroke-width="6.0"/><use href="#v818" stroke-width="14.0"/></g><g fill="none" stroke="#b0855a" stroke-linecap="round" stroke-linejoin="round" opacity="1" ><use href="#v0" stroke-width="3.6"/><use href="#v5" stroke-width="2.4"/><use href="#v7" stroke-width="3.0"/><use href="#v11" stroke-width="6.6"/><use href="#v16" stroke-width="5.4"/><use href="#v19" stroke-width="3.6"/><use href="#v23" stroke-width="2.4"/><use href="#v26" stroke-width="5.4"/><use href="#v29" stroke-width="7.8"/><use href="#v31" stroke-width="5.4"/><use href="#v34" stroke-width="5.4"/><use href="#v41" stroke-width="4.2"/><use href="#v42" stroke-width="4.2"/><use href="#v45" stroke-width="4.2"/><use href="#v48" stroke-width="4.2"/><use href="#v49" stroke-width="3.6"/><use href="#v50" stroke-width="3.0"/><use href="#v51" stroke-width="4.2"/><use href="#v55" stroke-width="3.0"/><use href="#v56" stroke-width="4.8"/><use href="#v62" stroke-width="6.6"/><use href="#v63" stroke-width="2.4"/><use href="#v64" stroke-width="4.2"/><use href="#v65" stroke-width="7.8"/><use href="#v66" stroke-width="3.6"/><use href="#v67" stroke-width="4.2"/><use href="#v69" stroke-width="4.2"/><use href="#v70" stroke-width="4.2"/><use href="#v75" stroke-width="4.2"/><use href="#v77" stroke-width="3.6"/><use href="#v79" stroke-width="4.2"/><use href="#v80" stroke-width="7.8"/><use href="#v82" stroke-width="7.8"/><use href="#v87" stroke-width="6.6"/><use href="#v90" stroke-width="3.0"/><use href="#v93" stroke-width="3.0"/><use href="#v95" stroke-width="5.4"/><use href="#v99" stroke-width="3.6"/><use href="#v101" stroke-width="4.8"/><use href="#v102" stroke-width="7.8"/><use href="#v105" stroke-width="3.0"/><use href="#v109" stroke-width="4.2"/><use href="#v113" stroke-width="3.0"/><use href="#v117" stroke-width="6.6"/><use href="#v118" stroke-width="3.6"/><use href="#v119" stroke-width="4.2"/><use href="#v124" stroke-width="5.4"/><use href="#v125" stroke-width="6.6"/><use href="#v127" stroke-width="2.4"/><use href="#v132" stroke-width="3.0"/><use href="#v133" stroke-width="3.6"/><use href="#v138" stroke-width="6.6"/><use href="#v139" stroke-width="3.0"/><use href="#v140" stroke-width="4.8"/><use href="#v147" stroke-width="5.4"/><use href="#v152" stroke-width="3.0"/><use href="#v153" stroke-width="2.4"/><use href="#v161" stroke-width="7.8"/><use href="#v163" stroke-width="2.4"/><use href="#v165" stroke-width="3.6"/><use href="#v166" stroke-width="4.2"/><use href="#v168" stroke-width="3.0"/><use href="#v177" stroke-width="5.4"/><use href="#v178" stroke-width="4.8"/><use href="#v180" stroke-width="3.6"/><use href="#v183" stroke-width="3.0"/><use href="#v184" stroke-width="4.2"/><use href="#v187" stroke-width="3.0"/><use href="#v190" stroke-width="5.4"/><use href="#v191" stroke-width="3.0"/><use href="#v193" stroke-width="3.0"/><use href="#v197" stroke-width="2.4"/><use href="#v201" stroke-width="2.4"/><use href="#v202" stroke-width="2.4"/><use href="#v203" stroke-width="3.6"/><use href="#v204" stroke-width="4.8"/><use href="#v211" stroke-width="5.4"/><use href="#v215" stroke-width="3.0"/><use href="#v217" stroke-width="3.6"/><use href="#v218" stroke-width="3.0"/><use href="#v225" stroke-width="4.2"/><use href="#v226" stroke-width="3.6"/><use href="#v228" stroke-width="4.8"/><use href="#v229" stroke-width="5.4"/><use href="#v237" stroke-width="5.4"/><use href="#v243" stroke-width="3.6"/><use href="#v244" stroke-width="2.4"/><use href="#v247" stroke-width="4.2"/><use href="#v248" stroke-width="3.0"/><use href="#v253" stroke-width="3.6"/><use href="#v255" stroke-width="3.6"/><use href="#v258" stroke-width="3.0"/><use href="#v263" stroke-width="3.6"/><use href="#v268" stroke-width="4.8"/><use href="#v270" stroke-width="3.0"/><use href="#v271" stroke-width="4.8"/><use href="#v272" stroke-width="6.6"/><use href="#v275" stroke-width="3.0"/><use href="#v276" stroke-width="3.6"/><use href="#v277" stroke-width="5.4"/><use href="#v281" stroke-width="3.0"/><use href="#v285" stroke-width="4.2"/><use href="#v286" stroke-width="3.6"/><use href="#v289" stroke-width="4.2"/><use href="#v290" stroke-width="3.0"/><use href="#v291" stroke-width="7.8"/><use href="#v293" stroke-width="4.2"/><use href="#v294" stroke-width="7.8"/><use href="#v295" stroke-width="6.6"/><use href="#v296" stroke-width="3.6"/><use href="#v298" stroke-width="2.4"/><use href="#v300" stroke-width="3.0"/><use href="#v303" stroke-width="2.4"/><use href="#v305" stroke-width="6.6"/><use href="#v309" stroke-width="7.8"/><use href="#v310" stroke-width="4.2"/><use href="#v311" stroke-width="5.4"/><use href="#v312" stroke-width="7.8"/><use href="#v317" stroke-width="7.8"/><use href="#v319" stroke-width="4.2"/><use href="#v322" stroke-width="7.8"/><use href="#v323" stroke-width="4.2"/><use href="#v326" stroke-width="4.2"/><use href="#v327" stroke-width="3.0"/><use href="#v329" stroke-width="7.8"/><use href="#v332" stroke-width="7.8"/><use href="#v333" stroke-width="5.4"/><use href="#v335" stroke-width="3.0"/><use href="#v340" stroke-width="3.0"/><use href="#v343" stroke-width="5.4"/><use href="#v344" stroke-width="3.6"/><use href="#v354" stroke-width="4.8"/><use href="#v355" stroke-width="2.4"/><use href="#v357" stroke-width="3.6"/><use href="#v364" stroke-width="4.2"/><use href="#v366" stroke-width="7.8"/><use href="#v368" stroke-width="3.0"/><use href="#v369" stroke-width="7.8"/><use href="#v372" stroke-width="6.6"/><use href="#v375" stroke-width="3.0"/><use href="#v376" stroke-width="4.2"/><use href="#v378" stroke-width="3.0"/><use href="#v387" stroke-width="3.0"/><use href="#v393" stroke-width="3.6"/><use href="#v395" stroke-width="5.4"/><use href="#v397" stroke-width="6.6"/><use href="#v399" stroke-width="6.6"/><use href="#v400" stroke-width="6.6"/><use href="#v403" stroke-width="3.6"/><use href="#v408" stroke-width="4.8"/><use href="#v412" stroke-width="5.4"/><use href="#v415" stroke-width="5.4"/><use href="#v416" stroke-width="4.2"/><use href="#v418" stroke-width="4.2"/><use href="#v419" stroke-width="4.8"/><use href="#v424" stroke-width="3.6"/><use href="#v426" stroke-width="6.6"/><use href="#v429" stroke-width="3.6"/><use href="#v431" stroke-width="2.4"/><use href="#v434" stroke-width="2.4"/><use href="#v436" stroke-width="6.6"/><use href="#v437" stroke-width="7.8"/><use href="#v438" stroke-width="3.6"/><use href="#v442" stroke-width="4.8"/><use href="#v445" stroke-width="2.4"/><use href="#v447" stroke-width="6.6"/><use href="#v452" stroke-width="5.4"/><use href="#v453" stroke-width="4.2"/><use href="#v460" stroke-width="4.2"/><use href="#v461" stroke-width="3.0"/><use href="#v462" stroke-width="3.0"/><use href="#v463" stroke-width="5.4"/><use href="#v466" stroke-width="4.2"/><use href="#v470" stroke-width="3.6"/><use href="#v471" stroke-width="2.4"/><use href="#v474" stroke-width="2.4"/><use href="#v477" stroke-width="6.6"/><use href="#v478" stroke-width="3.0"/><use href="#v480" stroke-width="4.2"/><use href="#v483" stroke-width="6.6"/><use href="#v485" stroke-width="4.2"/><use href="#v486" stroke-width="3.0"/><use href="#v488" stroke-width="4.8"/><use href="#v494" stroke-width="6.6"/><use href="#v505" stroke-width="3.0"/><use href="#v508" stroke-width="4.2"/><use href="#v511" stroke-width="2.4"/><use href="#v518" stroke-width="4.2"/><use href="#v522" stroke-width="7.8"/><use href="#v523" stroke-width="3.6"/><use href="#v524" stroke-width="4.8"/><use href="#v525" stroke-width="3.0"/><use href="#v527" stroke-width="7.8"/><use href="#v531" stroke-width="3.0"/><use href="#v533" stroke-width="6.6"/><use href="#v535" stroke-width="3.6"/><use href="#v536" stroke-width="7.8"/><use href="#v537" stroke-width="4.2"/><use href="#v538" stroke-width="3.6"/><use href="#v541" stroke-width="3.6"/><use href="#v544" stroke-width="4.2"/><use href="#v547" stroke-width="4.2"/><use href="#v551" stroke-width="2.4"/><use href="#v552" stroke-width="4.2"/><use href="#v553" stroke-width="4.2"/><use href="#v555" stroke-width="4.8"/><use href="#v557" stroke-width="7.8"/><use href="#v562" stroke-width="4.2"/><use href="#v563" stroke-width="7.8"/><use href="#v565" stroke-width="4.2"/><use href="#v566" stroke-width="4.2"/><use href="#v571" stroke-width="6.6"/><use href="#v574" stroke-width="3.0"/><use href="#v576" stroke-width="3.6"/><use href="#v581" stroke-width="3.6"/><use href="#v583" stroke-width="4.8"/><use href="#v587" stroke-width="3.6"/><use href="#v590" stroke-width="3.0"/><use href="#v601" stroke-width="4.2"/><use href="#v605" stroke-width="4.2"/><use href="#v607" stroke-width="3.6"/><use href="#v611" stroke-width="3.0"/><use href="#v612" stroke-width="4.8"/><use href="#v615" stroke-width="3.6"/><use href="#v617" stroke-width="4.2"/><use href="#v624" stroke-width="3.6"/><use href="#v625" stroke-width="4.2"/><use href="#v631" stroke-width="3.0"/><use href="#v632" stroke-width="2.4"/><use href="#v634" stroke-width="4.2"/><use href="#v635" stroke-width="6.6"/><use href="#v637" stroke-width="7.8"/><use href="#v638" stroke-width="3.6"/><use href="#v645" stroke-width="2.4"/><use href="#v648" stroke-width="4.8"/><use href="#v650" stroke-width="3.0"/><use href="#v651" stroke-width="4.8"/><use href="#v653" stroke-width="3.0"/><use href="#v654" stroke-width="3.6"/><use href="#v656" stroke-width="7.8"/><use href="#v657" stroke-width="4.2"/><use href="#v659" stroke-width="4.8"/><use href="#v663" stroke-width="7.8"/><use href="#v664" stroke-width="2.4"/><use href="#v669" stroke-width="3.0"/><use href="#v674" stroke-width="2.4"/><use href="#v676" stroke-width="5.4"/><use href="#v679" stroke-width="7.8"/><use href="#v680" stroke-width="4.8"/><use href="#v681" stroke-width="3.0"/><use href="#v683" stroke-width="3.0"/><use href="#v686" stroke-width="2.4"/><use href="#v689" stroke-width="2.4"/><use href="#v694" stroke-width="4.2"/><use href="#v697" stroke-width="3.6"/><use href="#v698" stroke-width="5.4"/><use href="#v704" stroke-width="4.2"/><use href="#v707" stroke-width="2.4"/><use href="#v713" stroke-width="4.2"/><use href="#v716" stroke-width="4.8"/><use href="#v717" stroke-width="3.0"/><use href="#v718" stroke-width="2.4"/><use href="#v719" stroke-width="2.4"/><use href="#v727" stroke-width="3.0"/><use href="#v729" stroke-width="6.6"/><use href="#v730" stroke-width="4.2"/><use href="#v732" stroke-width="7.8"/><use href="#v735" stroke-width="3.0"/><use href="#v736" stroke-width="3.6"/><use href="#v739" stroke-width="4.2"/><use href="#v740" stroke-width="7.8"/><use href="#v743" stroke-width="6.6"/><use href="#v744" stroke-width="4.2"/><use href="#v746" stroke-width="3.0"/><use href="#v748" stroke-width="4.8"/><use href="#v750" stroke-width="4.2"/><use href="#v751" stroke-width="4.2"/><use href="#v752" stroke-width="4.2"/><use href="#v758" stroke-width="3.0"/><use href="#v759" stroke-width="4.8"/><use href="#v764" stroke-width="4.8"/><use href="#v765" stroke-width="2.4"/><use href="#v766" stroke-width="3.6"/><use href="#v767" stroke-width="3.0"/><use href="#v771" stroke-width="2.4"/><use href="#v776" stroke-width="5.4"/><use href="#v782" stroke-width="3.6"/><use href="#v791" stroke-width="4.2"/><use href="#v792" stroke-width="6.6"/><use href="#v795" stroke-width="2.4"/><use href="#v796" stroke-width="4.2"/><use href="#v800" stroke-width="7.8"/><use href="#v801" stroke-width="3.6"/><use href="#v802" stroke-width="7.8"/><use href="#v803" stroke-width="4.8"/><use href="#v804" stroke-width="2.4"/><use href="#v805" stroke-width="4.8"/><use href="#v806" stroke-width="6.6"/><use href="#v807" stroke-width="4.8"/><use href="#v809" stroke-width="6.6"/><use href="#v817" stroke-width="3.0"/><use href="#v818" stroke-width="7.8"/></g><g fill="none" stroke="#c7a480" stroke-linecap="round" stroke-linejoin="round" opacity="1" ><use href="#v0" stroke-width="1.7"/><use href="#v5" stroke-width="1.1"/><use href="#v7" stroke-width="1.4"/><use href="#v11" stroke-width="3.1"/><use href="#v16" stroke-width="2.5"/><use href="#v19" stroke-width="1.7"/><use href="#v23" stroke-width="1.1"/><use href="#v26" stroke-width="2.5"/><use href="#v29" stroke-width="3.6"/><use href="#v31" stroke-width="2.5"/><use href="#v34" stroke-width="2.5"/><use href="#v41" stroke-width="2.0"/><use href="#v42" stroke-width="2.0"/><use href="#v45" stroke-width="2.0"/><use href="#v48" stroke-width="2.0"/><use href="#v49" stroke-width="1.7"/><use href="#v50" stroke-width="1.4"/><use href="#v51" stroke-width="2.0"/><use href="#v55" stroke-width="1.4"/><use href="#v56" stroke-width="2.2"/><use href="#v62" stroke-width="3.1"/><use href="#v63" stroke-width="1.1"/><use href="#v64" stroke-width="2.0"/><use href="#v65" stroke-width="3.6"/><use href="#v66" stroke-width="1.7"/><use href="#v67" stroke-width="2.0"/><use href="#v69" stroke-width="2.0"/><use href="#v70" stroke-width="2.0"/><use href="#v75" stroke-width="2.0"/><use href="#v77" stroke-width="1.7"/><use href="#v79" stroke-width="2.0"/><use href="#v80" stroke-width="3.6"/><use href="#v82" stroke-width="3.6"/><use href="#v87" stroke-width="3.1"/><use href="#v90" stroke-width="1.4"/><use href="#v93" stroke-width="1.4"/><use href="#v95" stroke-width="2.5"/><use href="#v99" stroke-width="1.7"/><use href="#v101" stroke-width="2.2"/><use href="#v102" stroke-width="3.6"/><use href="#v105" stroke-width="1.4"/><use href="#v109" stroke-width="2.0"/><use href="#v113" stroke-width="1.4"/><use href="#v117" stroke-width="3.1"/><use href="#v118" stroke-width="1.7"/><use href="#v119" stroke-width="2.0"/><use href="#v124" stroke-width="2.5"/><use href="#v125" stroke-width="3.1"/><use href="#v127" stroke-width="1.1"/><use href="#v132" stroke-width="1.4"/><use href="#v133" stroke-width="1.7"/><use href="#v138" stroke-width="3.1"/><use href="#v139" stroke-width="1.4"/><use href="#v140" stroke-width="2.2"/><use href="#v147" stroke-width="2.5"/><use href="#v152" stroke-width="1.4"/><use href="#v153" stroke-width="1.1"/><use href="#v161" stroke-width="3.6"/><use href="#v163" stroke-width="1.1"/><use href="#v165" stroke-width="1.7"/><use href="#v166" stroke-width="2.0"/><use href="#v168" stroke-width="1.4"/><use href="#v177" stroke-width="2.5"/><use href="#v178" stroke-width="2.2"/><use href="#v180" stroke-width="1.7"/><use href="#v183" stroke-width="1.4"/><use href="#v184" stroke-width="2.0"/><use href="#v187" stroke-width="1.4"/><use href="#v190" stroke-width="2.5"/><use href="#v191" stroke-width="1.4"/><use href="#v193" stroke-width="1.4"/><use href="#v197" stroke-width="1.1"/><use href="#v201" stroke-width="1.1"/><use href="#v202" stroke-width="1.1"/><use href="#v203" stroke-width="1.7"/><use href="#v204" stroke-width="2.2"/><use href="#v211" stroke-width="2.5"/><use href="#v215" stroke-width="1.4"/><use href="#v217" stroke-width="1.7"/><use href="#v218" stroke-width="1.4"/><use href="#v225" stroke-width="2.0"/><use href="#v226" stroke-width="1.7"/><use href="#v228" stroke-width="2.2"/><use href="#v229" stroke-width="2.5"/><use href="#v237" stroke-width="2.5"/><use href="#v243" stroke-width="1.7"/><use href="#v244" stroke-width="1.1"/><use href="#v247" stroke-width="2.0"/><use href="#v248" stroke-width="1.4"/><use href="#v253" stroke-width="1.7"/><use href="#v255" stroke-width="1.7"/><use href="#v258" stroke-width="1.4"/><use href="#v263" stroke-width="1.7"/><use href="#v268" stroke-width="2.2"/><use href="#v270" stroke-width="1.4"/><use href="#v271" stroke-width="2.2"/><use href="#v272" stroke-width="3.1"/><use href="#v275" stroke-width="1.4"/><use href="#v276" stroke-width="1.7"/><use href="#v277" stroke-width="2.5"/><use href="#v281" stroke-width="1.4"/><use href="#v285" stroke-width="2.0"/><use href="#v286" stroke-width="1.7"/><use href="#v289" stroke-width="2.0"/><use href="#v290" stroke-width="1.4"/><use href="#v291" stroke-width="3.6"/><use href="#v293" stroke-width="2.0"/><use href="#v294" stroke-width="3.6"/><use href="#v295" stroke-width="3.1"/><use href="#v296" stroke-width="1.7"/><use href="#v298" stroke-width="1.1"/><use href="#v300" stroke-width="1.4"/><use href="#v303" stroke-width="1.1"/><use href="#v305" stroke-width="3.1"/><use href="#v309" stroke-width="3.6"/><use href="#v310" stroke-width="2.0"/><use href="#v311" stroke-width="2.5"/><use href="#v312" stroke-width="3.6"/><use href="#v317" stroke-width="3.6"/><use href="#v319" stroke-width="2.0"/><use href="#v322" stroke-width="3.6"/><use href="#v323" stroke-width="2.0"/><use href="#v326" stroke-width="2.0"/><use href="#v327" stroke-width="1.4"/><use href="#v329" stroke-width="3.6"/><use href="#v332" stroke-width="3.6"/><use href="#v333" stroke-width="2.5"/><use href="#v335" stroke-width="1.4"/><use href="#v340" stroke-width="1.4"/><use href="#v343" stroke-width="2.5"/><use href="#v344" stroke-width="1.7"/><use href="#v354" stroke-width="2.2"/><use href="#v355" stroke-width="1.1"/><use href="#v357" stroke-width="1.7"/><use href="#v364" stroke-width="2.0"/><use href="#v366" stroke-width="3.6"/><use href="#v368" stroke-width="1.4"/><use href="#v369" stroke-width="3.6"/><use href="#v372" stroke-width="3.1"/><use href="#v375" stroke-width="1.4"/><use href="#v376" stroke-width="2.0"/><use href="#v378" stroke-width="1.4"/><use href="#v387" stroke-width="1.4"/><use href="#v393" stroke-width="1.7"/><use href="#v395" stroke-width="2.5"/><use href="#v397" stroke-width="3.1"/><use href="#v399" stroke-width="3.1"/><use href="#v400" stroke-width="3.1"/><use href="#v403" stroke-width="1.7"/><use href="#v408" stroke-width="2.2"/><use href="#v412" stroke-width="2.5"/><use href="#v415" stroke-width="2.5"/><use href="#v416" stroke-width="2.0"/><use href="#v418" stroke-width="2.0"/><use href="#v419" stroke-width="2.2"/><use href="#v424" stroke-width="1.7"/><use href="#v426" stroke-width="3.1"/><use href="#v429" stroke-width="1.7"/><use href="#v431" stroke-width="1.1"/><use href="#v434" stroke-width="1.1"/><use href="#v436" stroke-width="3.1"/><use href="#v437" stroke-width="3.6"/><use href="#v438" stroke-width="1.7"/><use href="#v442" stroke-width="2.2"/><use href="#v445" stroke-width="1.1"/><use href="#v447" stroke-width="3.1"/><use href="#v452" stroke-width="2.5"/><use href="#v453" stroke-width="2.0"/><use href="#v460" stroke-width="2.0"/><use href="#v461" stroke-width="1.4"/><use href="#v462" stroke-width="1.4"/><use href="#v463" stroke-width="2.5"/><use href="#v466" stroke-width="2.0"/><use href="#v470" stroke-width="1.7"/><use href="#v471" stroke-width="1.1"/><use href="#v474" stroke-width="1.1"/><use href="#v477" stroke-width="3.1"/><use href="#v478" stroke-width="1.4"/><use href="#v480" stroke-width="2.0"/><use href="#v483" stroke-width="3.1"/><use href="#v485" stroke-width="2.0"/><use href="#v486" stroke-width="1.4"/><use href="#v488" stroke-width="2.2"/><use href="#v494" stroke-width="3.1"/><use href="#v505" stroke-width="1.4"/><use href="#v508" stroke-width="2.0"/><use href="#v511" stroke-width="1.1"/><use href="#v518" stroke-width="2.0"/><use href="#v522" stroke-width="3.6"/><use href="#v523" stroke-width="1.7"/><use href="#v524" stroke-width="2.2"/><use href="#v525" stroke-width="1.4"/><use href="#v527" stroke-width="3.6"/><use href="#v531" stroke-width="1.4"/><use href="#v533" stroke-width="3.1"/><use href="#v535" stroke-width="1.7"/><use href="#v536" stroke-width="3.6"/><use href="#v537" stroke-width="2.0"/><use href="#v538" stroke-width="1.7"/><use href="#v541" stroke-width="1.7"/><use href="#v544" stroke-width="2.0"/><use href="#v547" stroke-width="2.0"/><use href="#v551" stroke-width="1.1"/><use href="#v552" stroke-width="2.0"/><use href="#v553" stroke-width="2.0"/><use href="#v555" stroke-width="2.2"/><use href="#v557" stroke-width="3.6"/><use href="#v562" stroke-width="2.0"/><use href="#v563" stroke-width="3.6"/><use href="#v565" stroke-width="2.0"/><use href="#v566" stroke-width="2.0"/><use href="#v571" stroke-width="3.1"/><use href="#v574" stroke-width="1.4"/><use href="#v576" stroke-width="1.7"/><use href="#v581" stroke-width="1.7"/><use href="#v583" stroke-width="2.2"/><use href="#v587" stroke-width="1.7"/><use href="#v590" stroke-width="1.4"/><use href="#v601" stroke-width="2.0"/><use href="#v605" stroke-width="2.0"/><use href="#v607" stroke-width="1.7"/><use href="#v611" stroke-width="1.4"/><use href="#v612" stroke-width="2.2"/><use href="#v615" stroke-width="1.7"/><use href="#v617" stroke-width="2.0"/><use href="#v624" stroke-width="1.7"/><use href="#v625" stroke-width="2.0"/><use href="#v631" stroke-width="1.4"/><use href="#v632" stroke-width="1.1"/><use href="#v634" stroke-width="2.0"/><use href="#v635" stroke-width="3.1"/><use href="#v637" stroke-width="3.6"/><use href="#v638" stroke-width="1.7"/><use href="#v645" stroke-width="1.1"/><use href="#v648" stroke-width="2.2"/><use href="#v650" stroke-width="1.4"/><use href="#v651" stroke-width="2.2"/><use href="#v653" stroke-width="1.4"/><use href="#v654" stroke-width="1.7"/><use href="#v656" stroke-width="3.6"/><use href="#v657" stroke-width="2.0"/><use href="#v659" stroke-width="2.2"/><use href="#v663" stroke-width="3.6"/><use href="#v664" stroke-width="1.1"/><use href="#v669" stroke-width="1.4"/><use href="#v674" stroke-width="1.1"/><use href="#v676" stroke-width="2.5"/><use href="#v679" stroke-width="3.6"/><use href="#v680" stroke-width="2.2"/><use href="#v681" stroke-width="1.4"/><use href="#v683" stroke-width="1.4"/><use href="#v686" stroke-width="1.1"/><use href="#v689" stroke-width="1.1"/><use href="#v694" stroke-width="2.0"/><use href="#v697" stroke-width="1.7"/><use href="#v698" stroke-width="2.5"/><use href="#v704" stroke-width="2.0"/><use href="#v707" stroke-width="1.1"/><use href="#v713" stroke-width="2.0"/><use href="#v716" stroke-width="2.2"/><use href="#v717" stroke-width="1.4"/><use href="#v718" stroke-width="1.1"/><use href="#v719" stroke-width="1.1"/><use href="#v727" stroke-width="1.4"/><use href="#v729" stroke-width="3.1"/><use href="#v730" stroke-width="2.0"/><use href="#v732" stroke-width="3.6"/><use href="#v735" stroke-width="1.4"/><use href="#v736" stroke-width="1.7"/><use href="#v739" stroke-width="2.0"/><use href="#v740" stroke-width="3.6"/><use href="#v743" stroke-width="3.1"/><use href="#v744" stroke-width="2.0"/><use href="#v746" stroke-width="1.4"/><use href="#v748" stroke-width="2.2"/><use href="#v750" stroke-width="2.0"/><use href="#v751" stroke-width="2.0"/><use href="#v752" stroke-width="2.0"/><use href="#v758" stroke-width="1.4"/><use href="#v759" stroke-width="2.2"/><use href="#v764" stroke-width="2.2"/><use href="#v765" stroke-width="1.1"/><use href="#v766" stroke-width="1.7"/><use href="#v767" stroke-width="1.4"/><use href="#v771" stroke-width="1.1"/><use href="#v776" stroke-width="2.5"/><use href="#v782" stroke-width="1.7"/><use href="#v791" stroke-width="2.0"/><use href="#v792" stroke-width="3.1"/><use href="#v795" stroke-width="1.1"/><use href="#v796" stroke-width="2.0"/><use href="#v800" stroke-width="3.6"/><use href="#v801" stroke-width="1.7"/><use href="#v802" stroke-width="3.6"/><use href="#v803" stroke-width="2.2"/><use href="#v804" stroke-width="1.1"/><use href="#v805" stroke-width="2.2"/><use href="#v806" stroke-width="3.1"/><use href="#v807" stroke-width="2.2"/><use href="#v809" stroke-width="3.1"/><use href="#v817" stroke-width="1.4"/><use href="#v818" stroke-width="3.6"/></g></g>
<g filter="url(#rg)"><g fill="none" stroke="#84501f" stroke-linecap="round" stroke-linejoin="round" opacity="0.95" ><use href="#v2" stroke-width="9.5"/><use href="#v4" stroke-width="7.5"/><use href="#v6" stroke-width="6.5"/><use href="#v8" stroke-width="8.5"/><use href="#v17" stroke-width="6.5"/><use href="#v27" stroke-width="6.5"/><use href="#v28" stroke-width="6.5"/><use href="#v35" stroke-width="10.5"/><use href="#v37" stroke-width="6.5"/><use href="#v46" stroke-width="10.5"/><use href="#v53" stroke-width="10.5"/><use href="#v57" stroke-width="7.5"/><use href="#v61" stroke-width="6.5"/><use href="#v68" stroke-width="10.5"/><use href="#v74" stroke-width="8.5"/><use href="#v98" stroke-width="12.5"/><use href="#v120" stroke-width="5.5"/><use href="#v121" stroke-width="12.5"/><use href="#v126" stroke-width="12.5"/><use href="#v131" stroke-width="6.5"/><use href="#v137" stroke-width="8.5"/><use href="#v141" stroke-width="7.5"/><use href="#v142" stroke-width="12.5"/><use href="#v145" stroke-width="10.5"/><use href="#v148" stroke-width="7.5"/><use href="#v149" stroke-width="12.5"/><use href="#v159" stroke-width="6.5"/><use href="#v162" stroke-width="6.5"/><use href="#v167" stroke-width="12.5"/><use href="#v170" stroke-width="7.5"/><use href="#v173" stroke-width="7.5"/><use href="#v185" stroke-width="10.5"/><use href="#v194" stroke-width="9.5"/><use href="#v196" stroke-width="8.5"/><use href="#v206" stroke-width="12.5"/><use href="#v208" stroke-width="12.5"/><use href="#v209" stroke-width="6.5"/><use href="#v210" stroke-width="6.5"/><use href="#v212" stroke-width="6.5"/><use href="#v216" stroke-width="8.5"/><use href="#v233" stroke-width="7.5"/><use href="#v241" stroke-width="8.5"/><use href="#v242" stroke-width="7.5"/><use href="#v246" stroke-width="6.5"/><use href="#v251" stroke-width="9.5"/><use href="#v256" stroke-width="6.5"/><use href="#v260" stroke-width="8.5"/><use href="#v278" stroke-width="12.5"/><use href="#v282" stroke-width="6.5"/><use href="#v283" stroke-width="8.5"/><use href="#v287" stroke-width="7.5"/><use href="#v288" stroke-width="7.5"/><use href="#v308" stroke-width="12.5"/><use href="#v316" stroke-width="5.5"/><use href="#v330" stroke-width="8.5"/><use href="#v334" stroke-width="12.5"/><use href="#v336" stroke-width="6.5"/><use href="#v338" stroke-width="8.5"/><use href="#v352" stroke-width="12.5"/><use href="#v356" stroke-width="12.5"/><use href="#v358" stroke-width="8.5"/><use href="#v370" stroke-width="12.5"/><use href="#v380" stroke-width="7.5"/><use href="#v391" stroke-width="6.5"/><use href="#v396" stroke-width="5.5"/><use href="#v407" stroke-width="6.5"/><use href="#v411" stroke-width="12.5"/><use href="#v421" stroke-width="6.5"/><use href="#v446" stroke-width="6.5"/><use href="#v454" stroke-width="6.5"/><use href="#v457" stroke-width="7.5"/><use href="#v464" stroke-width="7.5"/><use href="#v465" stroke-width="8.5"/><use href="#v468" stroke-width="12.5"/><use href="#v479" stroke-width="8.5"/><use href="#v482" stroke-width="8.5"/><use href="#v491" stroke-width="8.5"/><use href="#v498" stroke-width="9.5"/><use href="#v506" stroke-width="7.5"/><use href="#v510" stroke-width="12.5"/><use href="#v514" stroke-width="6.5"/><use href="#v516" stroke-width="9.5"/><use href="#v558" stroke-width="8.5"/><use href="#v559" stroke-width="7.5"/><use href="#v569" stroke-width="9.5"/><use href="#v573" stroke-width="10.5"/><use href="#v575" stroke-width="10.5"/><use href="#v578" stroke-width="8.5"/><use href="#v584" stroke-width="8.5"/><use href="#v586" stroke-width="6.5"/><use href="#v588" stroke-width="6.5"/><use href="#v589" stroke-width="7.5"/><use href="#v593" stroke-width="8.5"/><use href="#v595" stroke-width="12.5"/><use href="#v596" stroke-width="6.5"/><use href="#v602" stroke-width="8.5"/><use href="#v604" stroke-width="9.5"/><use href="#v614" stroke-width="6.5"/><use href="#v620" stroke-width="12.5"/><use href="#v629" stroke-width="7.5"/><use href="#v630" stroke-width="12.5"/><use href="#v647" stroke-width="12.5"/><use href="#v660" stroke-width="12.5"/><use href="#v662" stroke-width="7.5"/><use href="#v665" stroke-width="12.5"/><use href="#v668" stroke-width="7.5"/><use href="#v671" stroke-width="12.5"/><use href="#v682" stroke-width="8.5"/><use href="#v684" stroke-width="7.5"/><use href="#v685" stroke-width="9.5"/><use href="#v699" stroke-width="8.5"/><use href="#v710" stroke-width="8.5"/><use href="#v711" stroke-width="12.5"/><use href="#v722" stroke-width="6.5"/><use href="#v724" stroke-width="12.5"/><use href="#v726" stroke-width="12.5"/><use href="#v733" stroke-width="12.5"/><use href="#v734" stroke-width="12.5"/><use href="#v742" stroke-width="8.5"/><use href="#v761" stroke-width="7.5"/><use href="#v772" stroke-width="6.5"/><use href="#v774" stroke-width="5.5"/><use href="#v778" stroke-width="7.5"/><use href="#v785" stroke-width="12.5"/><use href="#v786" stroke-width="12.5"/><use href="#v787" stroke-width="8.5"/><use href="#v794" stroke-width="8.5"/><use href="#v797" stroke-width="7.5"/><use href="#v798" stroke-width="8.5"/><use href="#v799" stroke-width="12.5"/><use href="#v808" stroke-width="8.5"/><use href="#v815" stroke-width="9.5"/><use href="#v819" stroke-width="8.5"/></g><g fill="none" stroke="#b3875c" stroke-linecap="round" stroke-linejoin="round" opacity="1" ><use href="#v2" stroke-width="5.9"/><use href="#v4" stroke-width="4.3"/><use href="#v6" stroke-width="3.5"/><use href="#v8" stroke-width="5.1"/><use href="#v17" stroke-width="3.5"/><use href="#v27" stroke-width="3.5"/><use href="#v28" stroke-width="3.5"/><use href="#v35" stroke-width="6.7"/><use href="#v37" stroke-width="3.5"/><use href="#v46" stroke-width="6.7"/><use href="#v53" stroke-width="6.7"/><use href="#v57" stroke-width="4.3"/><use href="#v61" stroke-width="3.5"/><use href="#v68" stroke-width="6.7"/><use href="#v74" stroke-width="5.1"/><use href="#v98" stroke-width="8.3"/><use href="#v120" stroke-width="2.7"/><use href="#v121" stroke-width="8.3"/><use href="#v126" stroke-width="8.3"/><use href="#v131" stroke-width="3.5"/><use href="#v137" stroke-width="5.1"/><use href="#v141" stroke-width="4.3"/><use href="#v142" stroke-width="8.3"/><use href="#v145" stroke-width="6.7"/><use href="#v148" stroke-width="4.3"/><use href="#v149" stroke-width="8.3"/><use href="#v159" stroke-width="3.5"/><use href="#v162" stroke-width="3.5"/><use href="#v167" stroke-width="8.3"/><use href="#v170" stroke-width="4.3"/><use href="#v173" stroke-width="4.3"/><use href="#v185" stroke-width="6.7"/><use href="#v194" stroke-width="5.9"/><use href="#v196" stroke-width="5.1"/><use href="#v206" stroke-width="8.3"/><use href="#v208" stroke-width="8.3"/><use href="#v209" stroke-width="3.5"/><use href="#v210" stroke-width="3.5"/><use href="#v212" stroke-width="3.5"/><use href="#v216" stroke-width="5.1"/><use href="#v233" stroke-width="4.3"/><use href="#v241" stroke-width="5.1"/><use href="#v242" stroke-width="4.3"/><use href="#v246" stroke-width="3.5"/><use href="#v251" stroke-width="5.9"/><use href="#v256" stroke-width="3.5"/><use href="#v260" stroke-width="5.1"/><use href="#v278" stroke-width="8.3"/><use href="#v282" stroke-width="3.5"/><use href="#v283" stroke-width="5.1"/><use href="#v287" stroke-width="4.3"/><use href="#v288" stroke-width="4.3"/><use href="#v308" stroke-width="8.3"/><use href="#v316" stroke-width="2.7"/><use href="#v330" stroke-width="5.1"/><use href="#v334" stroke-width="8.3"/><use href="#v336" stroke-width="3.5"/><use href="#v338" stroke-width="5.1"/><use href="#v352" stroke-width="8.3"/><use href="#v356" stroke-width="8.3"/><use href="#v358" stroke-width="5.1"/><use href="#v370" stroke-width="8.3"/><use href="#v380" stroke-width="4.3"/><use href="#v391" stroke-width="3.5"/><use href="#v396" stroke-width="2.7"/><use href="#v407" stroke-width="3.5"/><use href="#v411" stroke-width="8.3"/><use href="#v421" stroke-width="3.5"/><use href="#v446" stroke-width="3.5"/><use href="#v454" stroke-width="3.5"/><use href="#v457" stroke-width="4.3"/><use href="#v464" stroke-width="4.3"/><use href="#v465" stroke-width="5.1"/><use href="#v468" stroke-width="8.3"/><use href="#v479" stroke-width="5.1"/><use href="#v482" stroke-width="5.1"/><use href="#v491" stroke-width="5.1"/><use href="#v498" stroke-width="5.9"/><use href="#v506" stroke-width="4.3"/><use href="#v510" stroke-width="8.3"/><use href="#v514" stroke-width="3.5"/><use href="#v516" stroke-width="5.9"/><use href="#v558" stroke-width="5.1"/><use href="#v559" stroke-width="4.3"/><use href="#v569" stroke-width="5.9"/><use href="#v573" stroke-width="6.7"/><use href="#v575" stroke-width="6.7"/><use href="#v578" stroke-width="5.1"/><use href="#v584" stroke-width="5.1"/><use href="#v586" stroke-width="3.5"/><use href="#v588" stroke-width="3.5"/><use href="#v589" stroke-width="4.3"/><use href="#v593" stroke-width="5.1"/><use href="#v595" stroke-width="8.3"/><use href="#v596" stroke-width="3.5"/><use href="#v602" stroke-width="5.1"/><use href="#v604" stroke-width="5.9"/><use href="#v614" stroke-width="3.5"/><use href="#v620" stroke-width="8.3"/><use href="#v629" stroke-width="4.3"/><use href="#v630" stroke-width="8.3"/><use href="#v647" stroke-width="8.3"/><use href="#v660" stroke-width="8.3"/><use href="#v662" stroke-width="4.3"/><use href="#v665" stroke-width="8.3"/><use href="#v668" stroke-width="4.3"/><use href="#v671" stroke-width="8.3"/><use href="#v682" stroke-width="5.1"/><use href="#v684" stroke-width="4.3"/><use href="#v685" stroke-width="5.9"/><use href="#v699" stroke-width="5.1"/><use href="#v710" stroke-width="5.1"/><use href="#v711" stroke-width="8.3"/><use href="#v722" stroke-width="3.5"/><use href="#v724" stroke-width="8.3"/><use href="#v726" stroke-width="8.3"/><use href="#v733" stroke-width="8.3"/><use href="#v734" stroke-width="8.3"/><use href="#v742" stroke-width="5.1"/><use href="#v761" stroke-width="4.3"/><use href="#v772" stroke-width="3.5"/><use href="#v774" stroke-width="2.7"/><use href="#v778" stroke-width="4.3"/><use href="#v785" stroke-width="8.3"/><use href="#v786" stroke-width="8.3"/><use href="#v787" stroke-width="5.1"/><use href="#v794" stroke-width="5.1"/><use href="#v797" stroke-width="4.3"/><use href="#v798" stroke-width="5.1"/><use href="#v799" stroke-width="8.3"/><use href="#v808" stroke-width="5.1"/><use href="#v815" stroke-width="5.9"/><use href="#v819" stroke-width="5.1"/></g><g fill="none" stroke="#caa882" stroke-linecap="round" stroke-linejoin="round" opacity="1" ><use href="#v2" stroke-width="3.3"/><use href="#v4" stroke-width="2.4"/><use href="#v6" stroke-width="1.9"/><use href="#v8" stroke-width="2.9"/><use href="#v17" stroke-width="1.9"/><use href="#v27" stroke-width="1.9"/><use href="#v28" stroke-width="1.9"/><use href="#v35" stroke-width="3.8"/><use href="#v37" stroke-width="1.9"/><use href="#v46" stroke-width="3.8"/><use href="#v53" stroke-width="3.8"/><use href="#v57" stroke-width="2.4"/><use href="#v61" stroke-width="1.9"/><use href="#v68" stroke-width="3.8"/><use href="#v74" stroke-width="2.9"/><use href="#v98" stroke-width="4.8"/><use href="#v120" stroke-width="1.4"/><use href="#v121" stroke-width="4.8"/><use href="#v126" stroke-width="4.8"/><use href="#v131" stroke-width="1.9"/><use href="#v137" stroke-width="2.9"/><use href="#v141" stroke-width="2.4"/><use href="#v142" stroke-width="4.8"/><use href="#v145" stroke-width="3.8"/><use href="#v148" stroke-width="2.4"/><use href="#v149" stroke-width="4.8"/><use href="#v159" stroke-width="1.9"/><use href="#v162" stroke-width="1.9"/><use href="#v167" stroke-width="4.8"/><use href="#v170" stroke-width="2.4"/><use href="#v173" stroke-width="2.4"/><use href="#v185" stroke-width="3.8"/><use href="#v194" stroke-width="3.3"/><use href="#v196" stroke-width="2.9"/><use href="#v206" stroke-width="4.8"/><use href="#v208" stroke-width="4.8"/><use href="#v209" stroke-width="1.9"/><use href="#v210" stroke-width="1.9"/><use href="#v212" stroke-width="1.9"/><use href="#v216" stroke-width="2.9"/><use href="#v233" stroke-width="2.4"/><use href="#v241" stroke-width="2.9"/><use href="#v242" stroke-width="2.4"/><use href="#v246" stroke-width="1.9"/><use href="#v251" stroke-width="3.3"/><use href="#v256" stroke-width="1.9"/><use href="#v260" stroke-width="2.9"/><use href="#v278" stroke-width="4.8"/><use href="#v282" stroke-width="1.9"/><use href="#v283" stroke-width="2.9"/><use href="#v287" stroke-width="2.4"/><use href="#v288" stroke-width="2.4"/><use href="#v308" stroke-width="4.8"/><use href="#v316" stroke-width="1.4"/><use href="#v330" stroke-width="2.9"/><use href="#v334" stroke-width="4.8"/><use href="#v336" stroke-width="1.9"/><use href="#v338" stroke-width="2.9"/><use href="#v352" stroke-width="4.8"/><use href="#v356" stroke-width="4.8"/><use href="#v358" stroke-width="2.9"/><use href="#v370" stroke-width="4.8"/><use href="#v380" stroke-width="2.4"/><use href="#v391" stroke-width="1.9"/><use href="#v396" stroke-width="1.4"/><use href="#v407" stroke-width="1.9"/><use href="#v411" stroke-width="4.8"/><use href="#v421" stroke-width="1.9"/><use href="#v446" stroke-width="1.9"/><use href="#v454" stroke-width="1.9"/><use href="#v457" stroke-width="2.4"/><use href="#v464" stroke-width="2.4"/><use href="#v465" stroke-width="2.9"/><use href="#v468" stroke-width="4.8"/><use href="#v479" stroke-width="2.9"/><use href="#v482" stroke-width="2.9"/><use href="#v491" stroke-width="2.9"/><use href="#v498" stroke-width="3.3"/><use href="#v506" stroke-width="2.4"/><use href="#v510" stroke-width="4.8"/><use href="#v514" stroke-width="1.9"/><use href="#v516" stroke-width="3.3"/><use href="#v558" stroke-width="2.9"/><use href="#v559" stroke-width="2.4"/><use href="#v569" stroke-width="3.3"/><use href="#v573" stroke-width="3.8"/><use href="#v575" stroke-width="3.8"/><use href="#v578" stroke-width="2.9"/><use href="#v584" stroke-width="2.9"/><use href="#v586" stroke-width="1.9"/><use href="#v588" stroke-width="1.9"/><use href="#v589" stroke-width="2.4"/><use href="#v593" stroke-width="2.9"/><use href="#v595" stroke-width="4.8"/><use href="#v596" stroke-width="1.9"/><use href="#v602" stroke-width="2.9"/><use href="#v604" stroke-width="3.3"/><use href="#v614" stroke-width="1.9"/><use href="#v620" stroke-width="4.8"/><use href="#v629" stroke-width="2.4"/><use href="#v630" stroke-width="4.8"/><use href="#v647" stroke-width="4.8"/><use href="#v660" stroke-width="4.8"/><use href="#v662" stroke-width="2.4"/><use href="#v665" stroke-width="4.8"/><use href="#v668" stroke-width="2.4"/><use href="#v671" stroke-width="4.8"/><use href="#v682" stroke-width="2.9"/><use href="#v684" stroke-width="2.4"/><use href="#v685" stroke-width="3.3"/><use href="#v699" stroke-width="2.9"/><use href="#v710" stroke-width="2.9"/><use href="#v711" stroke-width="4.8"/><use href="#v722" stroke-width="1.9"/><use href="#v724" stroke-width="4.8"/><use href="#v726" stroke-width="4.8"/><use href="#v733" stroke-width="4.8"/><use href="#v734" stroke-width="4.8"/><use href="#v742" stroke-width="2.9"/><use href="#v761" stroke-width="2.4"/><use href="#v772" stroke-width="1.9"/><use href="#v774" stroke-width="1.4"/><use href="#v778" stroke-width="2.4"/><use href="#v785" stroke-width="4.8"/><use href="#v786" stroke-width="4.8"/><use href="#v787" stroke-width="2.9"/><use href="#v794" stroke-width="2.9"/><use href="#v797" stroke-width="2.4"/><use href="#v798" stroke-width="2.9"/><use href="#v799" stroke-width="4.8"/><use href="#v808" stroke-width="2.9"/><use href="#v815" stroke-width="3.3"/><use href="#v819" stroke-width="2.9"/></g></g>
<g filter="url(#rg)"><g fill="none" stroke="#84501f" stroke-linecap="round" stroke-linejoin="round" opacity="0.95" ><use href="#v12" stroke-width="15.0"/><use href="#v21" stroke-width="15.0"/><use href="#v25" stroke-width="15.0"/><use href="#v33" stroke-width="15.0"/><use href="#v73" stroke-width="15.0"/><use href="#v86" stroke-width="15.0"/><use href="#v92" stroke-width="15.0"/><use href="#v104" stroke-width="15.0"/><use href="#v122" stroke-width="15.0"/><use href="#v146" stroke-width="15.0"/><use href="#v150" stroke-width="15.0"/><use href="#v176" stroke-width="15.0"/><use href="#v213" stroke-width="15.0"/><use href="#v220" stroke-width="15.0"/><use href="#v223" stroke-width="15.0"/><use href="#v232" stroke-width="15.0"/><use href="#v254" stroke-width="15.0"/><use href="#v280" stroke-width="15.0"/><use href="#v304" stroke-width="15.0"/><use href="#v320" stroke-width="15.0"/><use href="#v383" stroke-width="15.0"/><use href="#v389" stroke-width="15.0"/><use href="#v394" stroke-width="15.0"/><use href="#v432" stroke-width="15.0"/><use href="#v455" stroke-width="15.0"/><use href="#v475" stroke-width="15.0"/><use href="#v503" stroke-width="15.0"/><use href="#v539" stroke-width="15.0"/><use href="#v603" stroke-width="15.0"/><use href="#v628" stroke-width="15.0"/><use href="#v633" stroke-width="15.0"/><use href="#v652" stroke-width="15.0"/><use href="#v691" stroke-width="15.0"/><use href="#v693" stroke-width="15.0"/><use href="#v755" stroke-width="15.0"/><use href="#v780" stroke-width="15.0"/><use href="#v783" stroke-width="15.0"/></g><g fill="none" stroke="#b88d62" stroke-linecap="round" stroke-linejoin="round" opacity="1" ><use href="#v12" stroke-width="11.8"/><use href="#v21" stroke-width="11.8"/><use href="#v25" stroke-width="11.8"/><use href="#v33" stroke-width="11.8"/><use href="#v73" stroke-width="11.8"/><use href="#v86" stroke-width="11.8"/><use href="#v92" stroke-width="11.8"/><use href="#v104" stroke-width="11.8"/><use href="#v122" stroke-width="11.8"/><use href="#v146" stroke-width="11.8"/><use href="#v150" stroke-width="11.8"/><use href="#v176" stroke-width="11.8"/><use href="#v213" stroke-width="11.8"/><use href="#v220" stroke-width="11.8"/><use href="#v223" stroke-width="11.8"/><use href="#v232" stroke-width="11.8"/><use href="#v254" stroke-width="11.8"/><use href="#v280" stroke-width="11.8"/><use href="#v304" stroke-width="11.8"/><use href="#v320" stroke-width="11.8"/><use href="#v383" stroke-width="11.8"/><use href="#v389" stroke-width="11.8"/><use href="#v394" stroke-width="11.8"/><use href="#v432" stroke-width="11.8"/><use href="#v455" stroke-width="11.8"/><use href="#v475" stroke-width="11.8"/><use href="#v503" stroke-width="11.8"/><use href="#v539" stroke-width="11.8"/><use href="#v603" stroke-width="11.8"/><use href="#v628" stroke-width="11.8"/><use href="#v633" stroke-width="11.8"/><use href="#v652" stroke-width="11.8"/><use href="#v691" stroke-width="11.8"/><use href="#v693" stroke-width="11.8"/><use href="#v755" stroke-width="11.8"/><use href="#v780" stroke-width="11.8"/><use href="#v783" stroke-width="11.8"/></g><g fill="none" stroke="#d0b08c" stroke-linecap="round" stroke-linejoin="round" opacity="1" ><use href="#v12" stroke-width="8.1"/><use href="#v21" stroke-width="8.1"/><use href="#v25" stroke-width="8.1"/><use href="#v33" stroke-width="8.1"/><use href="#v73" stroke-width="8.1"/><use href="#v86" stroke-width="8.1"/><use href="#v92" stroke-width="8.1"/><use href="#v104" stroke-width="8.1"/><use href="#v122" stroke-width="8.1"/><use href="#v146" stroke-width="8.1"/><use href="#v150" stroke-width="8.1"/><use href="#v176" stroke-width="8.1"/><use href="#v213" stroke-width="8.1"/><use href="#v220" stroke-width="8.1"/><use href="#v223" stroke-width="8.1"/><use href="#v232" stroke-width="8.1"/><use href="#v254" stroke-width="8.1"/><use href="#v280" stroke-width="8.1"/><use href="#v304" stroke-width="8.1"/><use href="#v320" stroke-width="8.1"/><use href="#v383" stroke-width="8.1"/><use href="#v389" stroke-width="8.1"/><use href="#v394" stroke-width="8.1"/><use href="#v432" stroke-width="8.1"/><use href="#v455" stroke-width="8.1"/><use href="#v475" stroke-width="8.1"/><use href="#v503" stroke-width="8.1"/><use href="#v539" stroke-width="8.1"/><use href="#v603" stroke-width="8.1"/><use href="#v628" stroke-width="8.1"/><use href="#v633" stroke-width="8.1"/><use href="#v652" stroke-width="8.1"/><use href="#v691" stroke-width="8.1"/><use href="#v693" stroke-width="8.1"/><use href="#v755" stroke-width="8.1"/><use href="#v780" stroke-width="8.1"/><use href="#v783" stroke-width="8.1"/></g><g fill="none" stroke="#dcc4a6" stroke-linecap="round" stroke-linejoin="round" opacity="1" ><use href="#v12" stroke-width="4.2"/><use href="#v21" stroke-width="4.2"/><use href="#v25" stroke-width="4.2"/><use href="#v33" stroke-width="4.2"/><use href="#v73" stroke-width="4.2"/><use href="#v86" stroke-width="4.2"/><use href="#v92" stroke-width="4.2"/><use href="#v104" stroke-width="4.2"/><use href="#v122" stroke-width="4.2"/><use href="#v146" stroke-width="4.2"/><use href="#v150" stroke-width="4.2"/><use href="#v176" stroke-width="4.2"/><use href="#v213" stroke-width="4.2"/><use href="#v220" stroke-width="4.2"/><use href="#v223" stroke-width="4.2"/><use href="#v232" stroke-width="4.2"/><use href="#v254" stroke-width="4.2"/><use href="#v280" stroke-width="4.2"/><use href="#v304" stroke-width="4.2"/><use href="#v320" stroke-width="4.2"/><use href="#v383" stroke-width="4.2"/><use href="#v389" stroke-width="4.2"/><use href="#v394" stroke-width="4.2"/><use href="#v432" stroke-width="4.2"/><use href="#v455" stroke-width="4.2"/><use href="#v475" stroke-width="4.2"/><use href="#v503" stroke-width="4.2"/><use href="#v539" stroke-width="4.2"/><use href="#v603" stroke-width="4.2"/><use href="#v628" stroke-width="4.2"/><use href="#v633" stroke-width="4.2"/><use href="#v652" stroke-width="4.2"/><use href="#v691" stroke-width="4.2"/><use href="#v693" stroke-width="4.2"/><use href="#v755" stroke-width="4.2"/><use href="#v780" stroke-width="4.2"/><use href="#v783" stroke-width="4.2"/></g></g>
<g opacity=".62" filter="url(#vb)"><g fill="none" stroke="#9a6238" stroke-linecap="round" stroke-linejoin="round" opacity="1" ><use href="#v820" stroke-width="6.5" stroke-dasharray="0.1 3.6"/><use href="#v827" stroke-width="6.5" stroke-dasharray="0.1 3.6"/><use href="#v828" stroke-width="9.5" stroke-dasharray="0.1 5.8"/><use href="#v829" stroke-width="6.5" stroke-dasharray="0.1 3.6"/><use href="#v830" stroke-width="6.5" stroke-dasharray="0.1 3.6"/><use href="#v831" stroke-width="7.5" stroke-dasharray="0.1 4.3"/><use href="#v832" stroke-width="6.5" stroke-dasharray="0.1 3.6"/><use href="#v833" stroke-width="5.5" stroke-dasharray="0.1 2.9"/><use href="#v835" stroke-width="5.5" stroke-dasharray="0.1 2.9"/><use href="#v836" stroke-width="8.5" stroke-dasharray="0.1 5.0"/><use href="#v838" stroke-width="7.5" stroke-dasharray="0.1 4.3"/><use href="#v845" stroke-width="6.5" stroke-dasharray="0.1 3.6"/><use href="#v846" stroke-width="7.5" stroke-dasharray="0.1 4.3"/><use href="#v847" stroke-width="6.5" stroke-dasharray="0.1 3.6"/><use href="#v867" stroke-width="7.5" stroke-dasharray="0.1 4.3"/></g><g fill="none" stroke="#c6a07c" stroke-linecap="round" stroke-linejoin="round" opacity="1" ><use href="#v820" stroke-width="2.5" stroke-dasharray="0.1 3.6"/><use href="#v827" stroke-width="2.5" stroke-dasharray="0.1 3.6"/><use href="#v828" stroke-width="4.0" stroke-dasharray="0.1 5.8"/><use href="#v829" stroke-width="2.5" stroke-dasharray="0.1 3.6"/><use href="#v830" stroke-width="2.5" stroke-dasharray="0.1 3.6"/><use href="#v831" stroke-width="3.0" stroke-dasharray="0.1 4.3"/><use href="#v832" stroke-width="2.5" stroke-dasharray="0.1 3.6"/><use href="#v833" stroke-width="2.0" stroke-dasharray="0.1 2.9"/><use href="#v835" stroke-width="2.0" stroke-dasharray="0.1 2.9"/><use href="#v836" stroke-width="3.5" stroke-dasharray="0.1 5.0"/><use href="#v838" stroke-width="3.0" stroke-dasharray="0.1 4.3"/><use href="#v845" stroke-width="2.5" stroke-dasharray="0.1 3.6"/><use href="#v846" stroke-width="3.0" stroke-dasharray="0.1 4.3"/><use href="#v847" stroke-width="2.5" stroke-dasharray="0.1 3.6"/><use href="#v867" stroke-width="3.0" stroke-dasharray="0.1 4.3"/></g></g>
<g opacity=".7" filter="url(#rg2)"><g fill="none" stroke="#985f34" stroke-linecap="round" stroke-linejoin="round" opacity="1" ><use href="#v861" stroke-width="9.5" stroke-dasharray="0.1 5.8"/></g><g fill="none" stroke="#c29a76" stroke-linecap="round" stroke-linejoin="round" opacity="1" ><use href="#v861" stroke-width="4.0" stroke-dasharray="0.1 5.8"/></g></g>
<g opacity=".85" filter="url(#rg2)"><g fill="none" stroke="#965a2e" stroke-linecap="round" stroke-linejoin="round" opacity="1" ><use href="#v821" stroke-width="8.0"/><use href="#v834" stroke-width="7.0"/><use href="#v839" stroke-width="8.0"/><use href="#v840" stroke-width="6.0"/><use href="#v842" stroke-width="9.0"/><use href="#v848" stroke-width="6.0"/><use href="#v849" stroke-width="8.0"/><use href="#v850" stroke-width="6.0"/><use href="#v859" stroke-width="6.0"/><use href="#v860" stroke-width="6.0"/><use href="#v865" stroke-width="8.0"/><use href="#v866" stroke-width="7.0"/><use href="#v868" stroke-width="8.0"/><use href="#v880" stroke-width="7.0"/><use href="#v894" stroke-width="5.0"/><use href="#v895" stroke-width="7.0"/></g><g fill="none" stroke="#b98e66" stroke-linecap="round" stroke-linejoin="round" opacity="1" ><use href="#v821" stroke-width="4.3"/><use href="#v834" stroke-width="3.7"/><use href="#v839" stroke-width="4.3"/><use href="#v840" stroke-width="3.1"/><use href="#v842" stroke-width="5.0"/><use href="#v848" stroke-width="3.1"/><use href="#v849" stroke-width="4.3"/><use href="#v850" stroke-width="3.1"/><use href="#v859" stroke-width="3.1"/><use href="#v860" stroke-width="3.1"/><use href="#v865" stroke-width="4.3"/><use href="#v866" stroke-width="3.7"/><use href="#v868" stroke-width="4.3"/><use href="#v880" stroke-width="3.7"/><use href="#v894" stroke-width="2.5"/><use href="#v895" stroke-width="3.7"/></g><g fill="none" stroke="#cba988" stroke-linecap="round" stroke-linejoin="round" opacity="1" ><use href="#v821" stroke-width="2.1"/><use href="#v834" stroke-width="1.8"/><use href="#v839" stroke-width="2.1"/><use href="#v840" stroke-width="1.5"/><use href="#v842" stroke-width="2.4"/><use href="#v848" stroke-width="1.5"/><use href="#v849" stroke-width="2.1"/><use href="#v850" stroke-width="1.5"/><use href="#v859" stroke-width="1.5"/><use href="#v860" stroke-width="1.5"/><use href="#v865" stroke-width="2.1"/><use href="#v866" stroke-width="1.8"/><use href="#v868" stroke-width="2.1"/><use href="#v880" stroke-width="1.8"/><use href="#v894" stroke-width="1.2"/><use href="#v895" stroke-width="1.8"/></g></g>
<g filter="url(#rg2)"><g fill="none" stroke="#965c30" stroke-linecap="round" stroke-linejoin="round" opacity="0.95" ><use href="#v822" stroke-width="11.5"/><use href="#v825" stroke-width="11.5"/><use href="#v826" stroke-width="13.5"/><use href="#v837" stroke-width="11.5"/><use href="#v841" stroke-width="10.5"/><use href="#v844" stroke-width="10.5"/><use href="#v857" stroke-width="13.5"/><use href="#v858" stroke-width="9.5"/><use href="#v863" stroke-width="10.5"/><use href="#v864" stroke-width="13.5"/><use href="#v871" stroke-width="12.5"/><use href="#v873" stroke-width="13.5"/><use href="#v874" stroke-width="11.5"/><use href="#v875" stroke-width="13.5"/><use href="#v876" stroke-width="11.5"/><use href="#v877" stroke-width="10.5"/><use href="#v878" stroke-width="9.5"/><use href="#v879" stroke-width="8.5"/><use href="#v881" stroke-width="9.5"/><use href="#v884" stroke-width="11.5"/><use href="#v885" stroke-width="10.5"/><use href="#v898" stroke-width="11.5"/><use href="#v899" stroke-width="13.5"/><use href="#v906" stroke-width="13.5"/><use href="#v907" stroke-width="13.5"/><use href="#v908" stroke-width="13.5"/></g><g fill="none" stroke="#b88c62" stroke-linecap="round" stroke-linejoin="round" opacity="1" ><use href="#v822" stroke-width="7.5"/><use href="#v825" stroke-width="7.5"/><use href="#v826" stroke-width="9.1"/><use href="#v837" stroke-width="7.5"/><use href="#v841" stroke-width="6.7"/><use href="#v844" stroke-width="6.7"/><use href="#v857" stroke-width="9.1"/><use href="#v858" stroke-width="5.9"/><use href="#v863" stroke-width="6.7"/><use href="#v864" stroke-width="9.1"/><use href="#v871" stroke-width="8.3"/><use href="#v873" stroke-width="9.1"/><use href="#v874" stroke-width="7.5"/><use href="#v875" stroke-width="9.1"/><use href="#v876" stroke-width="7.5"/><use href="#v877" stroke-width="6.7"/><use href="#v878" stroke-width="5.9"/><use href="#v879" stroke-width="5.1"/><use href="#v881" stroke-width="5.9"/><use href="#v884" stroke-width="7.5"/><use href="#v885" stroke-width="6.7"/><use href="#v898" stroke-width="7.5"/><use href="#v899" stroke-width="9.1"/><use href="#v906" stroke-width="9.1"/><use href="#v907" stroke-width="9.1"/><use href="#v908" stroke-width="9.1"/></g><g fill="none" stroke="#ccab88" stroke-linecap="round" stroke-linejoin="round" opacity="1" ><use href="#v822" stroke-width="4.5"/><use href="#v825" stroke-width="4.5"/><use href="#v826" stroke-width="5.5"/><use href="#v837" stroke-width="4.5"/><use href="#v841" stroke-width="4.0"/><use href="#v844" stroke-width="4.0"/><use href="#v857" stroke-width="5.5"/><use href="#v858" stroke-width="3.5"/><use href="#v863" stroke-width="4.0"/><use href="#v864" stroke-width="5.5"/><use href="#v871" stroke-width="5.0"/><use href="#v873" stroke-width="5.5"/><use href="#v874" stroke-width="4.5"/><use href="#v875" stroke-width="5.5"/><use href="#v876" stroke-width="4.5"/><use href="#v877" stroke-width="4.0"/><use href="#v878" stroke-width="3.5"/><use href="#v879" stroke-width="3.0"/><use href="#v881" stroke-width="3.5"/><use href="#v884" stroke-width="4.5"/><use href="#v885" stroke-width="4.0"/><use href="#v898" stroke-width="4.5"/><use href="#v899" stroke-width="5.5"/><use href="#v906" stroke-width="5.5"/><use href="#v907" stroke-width="5.5"/><use href="#v908" stroke-width="5.5"/></g><g fill="none" stroke="#d6ba9c" stroke-linecap="round" stroke-linejoin="round" opacity="1" ><use href="#v822" stroke-width="2.2"/><use href="#v825" stroke-width="2.2"/><use href="#v826" stroke-width="2.6"/><use href="#v837" stroke-width="2.2"/><use href="#v841" stroke-width="2.0"/><use href="#v844" stroke-width="2.0"/><use href="#v857" stroke-width="2.6"/><use href="#v858" stroke-width="1.8"/><use href="#v863" stroke-width="2.0"/><use href="#v864" stroke-width="2.6"/><use href="#v871" stroke-width="2.4"/><use href="#v873" stroke-width="2.6"/><use href="#v874" stroke-width="2.2"/><use href="#v875" stroke-width="2.6"/><use href="#v876" stroke-width="2.2"/><use href="#v877" stroke-width="2.0"/><use href="#v878" stroke-width="1.8"/><use href="#v879" stroke-width="1.5"/><use href="#v881" stroke-width="1.8"/><use href="#v884" stroke-width="2.2"/><use href="#v885" stroke-width="2.0"/><use href="#v898" stroke-width="2.2"/><use href="#v899" stroke-width="2.6"/><use href="#v906" stroke-width="2.6"/><use href="#v907" stroke-width="2.6"/><use href="#v908" stroke-width="2.6"/></g></g>
<g filter="url(#rg2)"><g fill="none" stroke="#8a5326" stroke-linecap="round" stroke-linejoin="round" opacity="0.93" ><use href="#v823" stroke-width="22.0"/><use href="#v824" stroke-width="15.0"/><use href="#v843" stroke-width="19.0"/><use href="#v851" stroke-width="23.0"/><use href="#v852" stroke-width="22.0"/><use href="#v853" stroke-width="28.0"/><use href="#v854" stroke-width="32.0"/><use href="#v855" stroke-width="32.0"/><use href="#v856" stroke-width="19.0"/><use href="#v862" stroke-width="19.0"/><use href="#v869" stroke-width="26.0"/><use href="#v870" stroke-width="28.0"/><use href="#v872" stroke-width="16.0"/><use href="#v882" stroke-width="30.0"/><use href="#v883" stroke-width="16.0"/><use href="#v886" stroke-width="20.0"/><use href="#v887" stroke-width="32.0"/><use href="#v888" stroke-width="22.0"/><use href="#v889" stroke-width="17.0"/><use href="#v890" stroke-width="28.0"/><use href="#v891" stroke-width="20.0"/><use href="#v892" stroke-width="22.0"/><use href="#v893" stroke-width="20.0"/><use href="#v896" stroke-width="34.0"/><use href="#v897" stroke-width="22.0"/><use href="#v900" stroke-width="16.0"/><use href="#v901" stroke-width="16.0"/><use href="#v902" stroke-width="54.0"/><use href="#v903" stroke-width="24.0"/><use href="#v904" stroke-width="22.0"/><use href="#v905" stroke-width="16.0"/></g><g fill="none" stroke="#b98f66" stroke-linecap="round" stroke-linejoin="round" opacity="1" ><use href="#v823" stroke-width="18.8"/><use href="#v824" stroke-width="11.8"/><use href="#v843" stroke-width="15.8"/><use href="#v851" stroke-width="19.8"/><use href="#v852" stroke-width="18.8"/><use href="#v853" stroke-width="24.8"/><use href="#v854" stroke-width="28.8"/><use href="#v855" stroke-width="28.8"/><use href="#v856" stroke-width="15.8"/><use href="#v862" stroke-width="15.8"/><use href="#v869" stroke-width="22.8"/><use href="#v870" stroke-width="24.8"/><use href="#v872" stroke-width="12.8"/><use href="#v882" stroke-width="26.8"/><use href="#v883" stroke-width="12.8"/><use href="#v886" stroke-width="16.8"/><use href="#v887" stroke-width="28.8"/><use href="#v888" stroke-width="18.8"/><use href="#v889" stroke-width="13.8"/><use href="#v890" stroke-width="24.8"/><use href="#v891" stroke-width="16.8"/><use href="#v892" stroke-width="18.8"/><use href="#v893" stroke-width="16.8"/><use href="#v896" stroke-width="30.8"/><use href="#v897" stroke-width="18.8"/><use href="#v900" stroke-width="12.8"/><use href="#v901" stroke-width="12.8"/><use href="#v902" stroke-width="50.8"/><use href="#v903" stroke-width="20.8"/><use href="#v904" stroke-width="18.8"/><use href="#v905" stroke-width="12.8"/></g><g fill="none" stroke="#d3b594" stroke-linecap="round" stroke-linejoin="round" opacity="1" ><use href="#v823" stroke-width="13.8"/><use href="#v824" stroke-width="8.6"/><use href="#v843" stroke-width="11.6"/><use href="#v851" stroke-width="14.5"/><use href="#v852" stroke-width="13.8"/><use href="#v853" stroke-width="18.2"/><use href="#v854" stroke-width="21.2"/><use href="#v855" stroke-width="21.2"/><use href="#v856" stroke-width="11.6"/><use href="#v862" stroke-width="11.6"/><use href="#v869" stroke-width="16.8"/><use href="#v870" stroke-width="18.2"/><use href="#v872" stroke-width="9.4"/><use href="#v882" stroke-width="19.7"/><use href="#v883" stroke-width="9.4"/><use href="#v886" stroke-width="12.3"/><use href="#v887" stroke-width="21.2"/><use href="#v888" stroke-width="13.8"/><use href="#v889" stroke-width="10.1"/><use href="#v890" stroke-width="18.2"/><use href="#v891" stroke-width="12.3"/><use href="#v892" stroke-width="13.8"/><use href="#v893" stroke-width="12.3"/><use href="#v896" stroke-width="22.7"/><use href="#v897" stroke-width="13.8"/><use href="#v900" stroke-width="9.4"/><use href="#v901" stroke-width="9.4"/><use href="#v902" stroke-width="37.5"/><use href="#v903" stroke-width="15.3"/><use href="#v904" stroke-width="13.8"/><use href="#v905" stroke-width="9.4"/></g><g fill="none" stroke="#e0cab0" stroke-linecap="round" stroke-linejoin="round" opacity="1" ><use href="#v823" stroke-width="8.0"/><use href="#v824" stroke-width="4.9"/><use href="#v843" stroke-width="6.7"/><use href="#v851" stroke-width="8.5"/><use href="#v852" stroke-width="8.0"/><use href="#v853" stroke-width="10.7"/><use href="#v854" stroke-width="12.5"/><use href="#v855" stroke-width="12.5"/><use href="#v856" stroke-width="6.7"/><use href="#v862" stroke-width="6.7"/><use href="#v869" stroke-width="9.8"/><use href="#v870" stroke-width="10.7"/><use href="#v872" stroke-width="5.3"/><use href="#v882" stroke-width="11.6"/><use href="#v883" stroke-width="5.3"/><use href="#v886" stroke-width="7.1"/><use href="#v887" stroke-width="12.5"/><use href="#v888" stroke-width="8.0"/><use href="#v889" stroke-width="5.8"/><use href="#v890" stroke-width="10.7"/><use href="#v891" stroke-width="7.1"/><use href="#v892" stroke-width="8.0"/><use href="#v893" stroke-width="7.1"/><use href="#v896" stroke-width="13.4"/><use href="#v897" stroke-width="8.0"/><use href="#v900" stroke-width="5.3"/><use href="#v901" stroke-width="5.3"/><use href="#v902" stroke-width="22.4"/><use href="#v903" stroke-width="8.9"/><use href="#v904" stroke-width="8.0"/><use href="#v905" stroke-width="5.3"/></g></g>
<g fill="#7a461a" filter="url(#vb)"><ellipse cx="1604" cy="892" rx="4.0" ry="3.3" opacity="0.48" transform="rotate(7 1604 892)"/><ellipse cx="1672" cy="411" rx="5.4" ry="3.4" opacity="0.33" transform="rotate(121 1672 411)"/><ellipse cx="1624" cy="601" rx="3.5" ry="3.1" opacity="0.32" transform="rotate(84 1624 601)"/><ellipse cx="1355" cy="685" rx="2.6" ry="1.7" opacity="0.51" transform="rotate(95 1355 685)"/><ellipse cx="1513" cy="738" rx="4.2" ry="3.0" opacity="0.51" transform="rotate(79 1513 738)"/><ellipse cx="1266" cy="733" rx="5.7" ry="3.6" opacity="0.33" transform="rotate(124 1266 733)"/><ellipse cx="1431" cy="533" rx="5.3" ry="3.5" opacity="0.39" transform="rotate(118 1431 533)"/><ellipse cx="1661" cy="568" rx="4.4" ry="3.0" opacity="0.58" transform="rotate(92 1661 568)"/><ellipse cx="1309" cy="852" rx="3.6" ry="2.8" opacity="0.55" transform="rotate(11 1309 852)"/><ellipse cx="1736" cy="759" rx="3.8" ry="2.7" opacity="0.46" transform="rotate(169 1736 759)"/><ellipse cx="1681" cy="709" rx="3.6" ry="3.0" opacity="0.60" transform="rotate(87 1681 709)"/><ellipse cx="1462" cy="659" rx="4.6" ry="3.1" opacity="0.43" transform="rotate(23 1462 659)"/><ellipse cx="1506" cy="865" rx="4.1" ry="2.8" opacity="0.31" transform="rotate(38 1506 865)"/><ellipse cx="1877" cy="525" rx="3.8" ry="2.9" opacity="0.56" transform="rotate(154 1877 525)"/><ellipse cx="1265" cy="626" rx="4.1" ry="2.7" opacity="0.45" transform="rotate(96 1265 626)"/><ellipse cx="1712" cy="825" rx="3.1" ry="3.1" opacity="0.43" transform="rotate(50 1712 825)"/><ellipse cx="1529" cy="579" rx="2.5" ry="2.1" opacity="0.55" transform="rotate(45 1529 579)"/><ellipse cx="1497" cy="895" rx="3.2" ry="2.7" opacity="0.54" transform="rotate(180 1497 895)"/><ellipse cx="1315" cy="518" rx="2.4" ry="2.2" opacity="0.57" transform="rotate(55 1315 518)"/><ellipse cx="1427" cy="737" rx="2.3" ry="1.9" opacity="0.38" transform="rotate(5 1427 737)"/><ellipse cx="1398" cy="445" rx="2.2" ry="2.0" opacity="0.47" transform="rotate(54 1398 445)"/><ellipse cx="1364" cy="785" rx="2.8" ry="2.4" opacity="0.39" transform="rotate(165 1364 785)"/><ellipse cx="1535" cy="885" rx="4.6" ry="3.5" opacity="0.44" transform="rotate(158 1535 885)"/><ellipse cx="1319" cy="660" rx="2.7" ry="2.6" opacity="0.35" transform="rotate(19 1319 660)"/><ellipse cx="1283" cy="810" rx="3.2" ry="2.7" opacity="0.40" transform="rotate(17 1283 810)"/><ellipse cx="1927" cy="573" rx="4.9" ry="3.0" opacity="0.36" transform="rotate(62 1927 573)"/><ellipse cx="1816" cy="431" rx="4.9" ry="3.1" opacity="0.57" transform="rotate(60 1816 431)"/><ellipse cx="1371" cy="774" rx="3.6" ry="3.5" opacity="0.31" transform="rotate(149 1371 774)"/><ellipse cx="1837" cy="597" rx="2.5" ry="2.1" opacity="0.55" transform="rotate(79 1837 597)"/><ellipse cx="1196" cy="642" rx="3.8" ry="2.3" opacity="0.57" transform="rotate(42 1196 642)"/><ellipse cx="1544" cy="394" rx="2.7" ry="2.2" opacity="0.58" transform="rotate(66 1544 394)"/><ellipse cx="1531" cy="631" rx="3.4" ry="3.1" opacity="0.37" transform="rotate(141 1531 631)"/><ellipse cx="1509" cy="854" rx="3.8" ry="3.0" opacity="0.38" transform="rotate(59 1509 854)"/><ellipse cx="1724" cy="342" rx="4.0" ry="3.3" opacity="0.44" transform="rotate(141 1724 342)"/><ellipse cx="1856" cy="686" rx="2.7" ry="1.7" opacity="0.50" transform="rotate(12 1856 686)"/><ellipse cx="1555" cy="676" rx="3.7" ry="3.0" opacity="0.33" transform="rotate(46 1555 676)"/><ellipse cx="1658" cy="723" rx="3.1" ry="2.0" opacity="0.31" transform="rotate(106 1658 723)"/><ellipse cx="1554" cy="792" rx="3.6" ry="2.3" opacity="0.47" transform="rotate(103 1554 792)"/><ellipse cx="1526" cy="828" rx="2.9" ry="1.7" opacity="0.54" transform="rotate(22 1526 828)"/><ellipse cx="1234" cy="566" rx="1.9" ry="1.7" opacity="0.59" transform="rotate(167 1234 566)"/><ellipse cx="1926" cy="606" rx="2.3" ry="1.9" opacity="0.46" transform="rotate(72 1926 606)"/><ellipse cx="1556" cy="620" rx="4.3" ry="2.9" opacity="0.36" transform="rotate(43 1556 620)"/><ellipse cx="1337" cy="399" rx="3.5" ry="3.2" opacity="0.30" transform="rotate(129 1337 399)"/><ellipse cx="1453" cy="716" rx="4.2" ry="3.1" opacity="0.57" transform="rotate(150 1453 716)"/><ellipse cx="1370" cy="517" rx="3.3" ry="2.1" opacity="0.38" transform="rotate(120 1370 517)"/><ellipse cx="1538" cy="930" rx="4.0" ry="3.2" opacity="0.50" transform="rotate(178 1538 930)"/><ellipse cx="1766" cy="419" rx="2.7" ry="2.4" opacity="0.53" transform="rotate(165 1766 419)"/><ellipse cx="1195" cy="695" rx="4.7" ry="3.0" opacity="0.35" transform="rotate(5 1195 695)"/><ellipse cx="1624" cy="347" rx="2.3" ry="2.1" opacity="0.36" transform="rotate(96 1624 347)"/><ellipse cx="1199" cy="662" rx="5.7" ry="3.3" opacity="0.51" transform="rotate(133 1199 662)"/><ellipse cx="1399" cy="690" rx="4.0" ry="2.5" opacity="0.42" transform="rotate(57 1399 690)"/><ellipse cx="1864" cy="585" rx="3.3" ry="2.9" opacity="0.55" transform="rotate(157 1864 585)"/><ellipse cx="1308" cy="599" rx="5.2" ry="3.2" opacity="0.56" transform="rotate(157 1308 599)"/><ellipse cx="1422" cy="598" rx="3.0" ry="2.9" opacity="0.41" transform="rotate(92 1422 598)"/><ellipse cx="1246" cy="583" rx="4.2" ry="3.3" opacity="0.50" transform="rotate(153 1246 583)"/><ellipse cx="1861" cy="702" rx="2.9" ry="2.9" opacity="0.37" transform="rotate(117 1861 702)"/><ellipse cx="1591" cy="649" rx="5.4" ry="3.5" opacity="0.49" transform="rotate(9 1591 649)"/><ellipse cx="1772" cy="710" rx="2.6" ry="2.2" opacity="0.36" transform="rotate(143 1772 710)"/><ellipse cx="1512" cy="749" rx="4.2" ry="3.6" opacity="0.38" transform="rotate(120 1512 749)"/><ellipse cx="1746" cy="761" rx="3.2" ry="2.5" opacity="0.35" transform="rotate(122 1746 761)"/><ellipse cx="1311" cy="548" rx="3.2" ry="1.8" opacity="0.52" transform="rotate(16 1311 548)"/><ellipse cx="1491" cy="671" rx="2.9" ry="2.6" opacity="0.49" transform="rotate(3 1491 671)"/><ellipse cx="1440" cy="772" rx="4.3" ry="3.0" opacity="0.59" transform="rotate(114 1440 772)"/><ellipse cx="1428" cy="626" rx="5.3" ry="3.4" opacity="0.54" transform="rotate(107 1428 626)"/><ellipse cx="1348" cy="593" rx="3.6" ry="2.5" opacity="0.43" transform="rotate(2 1348 593)"/><ellipse cx="1340" cy="726" rx="6.2" ry="3.6" opacity="0.53" transform="rotate(144 1340 726)"/><ellipse cx="1315" cy="780" rx="3.3" ry="1.9" opacity="0.58" transform="rotate(59 1315 780)"/><ellipse cx="1483" cy="470" rx="2.9" ry="2.1" opacity="0.38" transform="rotate(124 1483 470)"/><ellipse cx="1198" cy="586" rx="2.9" ry="2.7" opacity="0.49" transform="rotate(124 1198 586)"/><ellipse cx="1666" cy="607" rx="4.7" ry="3.2" opacity="0.43" transform="rotate(169 1666 607)"/><ellipse cx="1228" cy="556" rx="1.9" ry="1.9" opacity="0.47" transform="rotate(25 1228 556)"/><ellipse cx="1305" cy="754" rx="5.3" ry="3.0" opacity="0.32" transform="rotate(65 1305 754)"/><ellipse cx="1460" cy="816" rx="3.1" ry="2.9" opacity="0.49" transform="rotate(70 1460 816)"/><ellipse cx="1419" cy="454" rx="3.8" ry="3.2" opacity="0.47" transform="rotate(176 1419 454)"/><ellipse cx="1505" cy="589" rx="3.4" ry="3.4" opacity="0.53" transform="rotate(122 1505 589)"/><ellipse cx="1754" cy="728" rx="3.0" ry="2.1" opacity="0.43" transform="rotate(111 1754 728)"/><ellipse cx="1512" cy="810" rx="5.3" ry="3.6" opacity="0.45" transform="rotate(179 1512 810)"/><ellipse cx="1424" cy="828" rx="3.2" ry="2.8" opacity="0.35" transform="rotate(47 1424 828)"/><ellipse cx="1349" cy="823" rx="4.5" ry="3.5" opacity="0.50" transform="rotate(131 1349 823)"/><ellipse cx="1401" cy="838" rx="2.5" ry="1.9" opacity="0.48" transform="rotate(45 1401 838)"/><ellipse cx="1414" cy="679" rx="4.8" ry="3.0" opacity="0.44" transform="rotate(55 1414 679)"/><ellipse cx="1837" cy="674" rx="4.4" ry="3.4" opacity="0.51" transform="rotate(144 1837 674)"/><ellipse cx="1411" cy="546" rx="4.4" ry="3.5" opacity="0.32" transform="rotate(138 1411 546)"/><ellipse cx="1573" cy="270" rx="3.5" ry="2.0" opacity="0.47" transform="rotate(86 1573 270)"/><ellipse cx="1586" cy="783" rx="3.4" ry="2.1" opacity="0.38" transform="rotate(46 1586 783)"/><ellipse cx="1413" cy="593" rx="1.9" ry="1.6" opacity="0.50" transform="rotate(162 1413 593)"/><ellipse cx="1583" cy="668" rx="3.1" ry="2.2" opacity="0.39" transform="rotate(125 1583 668)"/><ellipse cx="1626" cy="856" rx="5.2" ry="3.1" opacity="0.35" transform="rotate(60 1626 856)"/><ellipse cx="1494" cy="619" rx="3.1" ry="2.0" opacity="0.44" transform="rotate(145 1494 619)"/><ellipse cx="1921" cy="792" rx="3.0" ry="2.4" opacity="0.59" transform="rotate(113 1921 792)"/><ellipse cx="1547" cy="864" rx="2.4" ry="1.8" opacity="0.57" transform="rotate(5 1547 864)"/><ellipse cx="1303" cy="440" rx="3.0" ry="1.9" opacity="0.41" transform="rotate(4 1303 440)"/><ellipse cx="1499" cy="794" rx="6.1" ry="3.6" opacity="0.48" transform="rotate(144 1499 794)"/><ellipse cx="1578" cy="691" rx="4.2" ry="3.3" opacity="0.31" transform="rotate(125 1578 691)"/><ellipse cx="1392" cy="525" rx="3.2" ry="2.1" opacity="0.43" transform="rotate(3 1392 525)"/><ellipse cx="1524" cy="311" rx="3.5" ry="3.0" opacity="0.55" transform="rotate(123 1524 311)"/><ellipse cx="1482" cy="693" rx="2.8" ry="1.7" opacity="0.30" transform="rotate(99 1482 693)"/><ellipse cx="1541" cy="805" rx="2.7" ry="1.8" opacity="0.43" transform="rotate(178 1541 805)"/><ellipse cx="1672" cy="917" rx="5.8" ry="3.3" opacity="0.60" transform="rotate(12 1672 917)"/><ellipse cx="1256" cy="596" rx="2.1" ry="1.7" opacity="0.56" transform="rotate(119 1256 596)"/><ellipse cx="1929" cy="703" rx="1.8" ry="1.7" opacity="0.58" transform="rotate(65 1929 703)"/><ellipse cx="1450" cy="617" rx="4.3" ry="2.7" opacity="0.52" transform="rotate(178 1450 617)"/><ellipse cx="1612" cy="759" rx="5.7" ry="3.2" opacity="0.38" transform="rotate(22 1612 759)"/><ellipse cx="1896" cy="689" rx="3.4" ry="2.6" opacity="0.57" transform="rotate(97 1896 689)"/><ellipse cx="1857" cy="615" rx="5.0" ry="3.4" opacity="0.52" transform="rotate(148 1857 615)"/><ellipse cx="1549" cy="789" rx="3.0" ry="2.7" opacity="0.43" transform="rotate(153 1549 789)"/><ellipse cx="1648" cy="596" rx="1.9" ry="1.8" opacity="0.38" transform="rotate(106 1648 596)"/><ellipse cx="1350" cy="722" rx="5.1" ry="3.1" opacity="0.32" transform="rotate(86 1350 722)"/><ellipse cx="1789" cy="383" rx="3.0" ry="1.7" opacity="0.59" transform="rotate(138 1789 383)"/><ellipse cx="1838" cy="668" rx="3.3" ry="2.4" opacity="0.41" transform="rotate(131 1838 668)"/><ellipse cx="1445" cy="519" rx="5.4" ry="3.1" opacity="0.40" transform="rotate(128 1445 519)"/><ellipse cx="1313" cy="739" rx="3.8" ry="2.3" opacity="0.59" transform="rotate(115 1313 739)"/><ellipse cx="1861" cy="668" rx="4.0" ry="3.3" opacity="0.50" transform="rotate(7 1861 668)"/><ellipse cx="1270" cy="543" rx="4.6" ry="2.9" opacity="0.44" transform="rotate(20 1270 543)"/><ellipse cx="1523" cy="660" rx="3.7" ry="2.3" opacity="0.47" transform="rotate(133 1523 660)"/><ellipse cx="1403" cy="730" rx="2.9" ry="2.4" opacity="0.31" transform="rotate(170 1403 730)"/><ellipse cx="1755" cy="796" rx="2.7" ry="2.1" opacity="0.42" transform="rotate(131 1755 796)"/><ellipse cx="1484" cy="776" rx="3.8" ry="2.6" opacity="0.50" transform="rotate(167 1484 776)"/><ellipse cx="1454" cy="491" rx="4.3" ry="3.1" opacity="0.44" transform="rotate(10 1454 491)"/><ellipse cx="1344" cy="700" rx="3.0" ry="2.0" opacity="0.55" transform="rotate(177 1344 700)"/><ellipse cx="1328" cy="898" rx="3.0" ry="2.3" opacity="0.59" transform="rotate(162 1328 898)"/><ellipse cx="1177" cy="661" rx="3.3" ry="2.8" opacity="0.56" transform="rotate(115 1177 661)"/><ellipse cx="1275" cy="882" rx="1.6" ry="1.6" opacity="0.56" transform="rotate(51 1275 882)"/><ellipse cx="1507" cy="756" rx="5.1" ry="3.0" opacity="0.59" transform="rotate(129 1507 756)"/><ellipse cx="1472" cy="421" rx="3.1" ry="2.0" opacity="0.53" transform="rotate(165 1472 421)"/><ellipse cx="1442" cy="508" rx="2.8" ry="2.1" opacity="0.58" transform="rotate(33 1442 508)"/><ellipse cx="1766" cy="373" rx="4.6" ry="2.8" opacity="0.34" transform="rotate(125 1766 373)"/><ellipse cx="1877" cy="625" rx="3.4" ry="2.6" opacity="0.51" transform="rotate(11 1877 625)"/><ellipse cx="1672" cy="432" rx="3.2" ry="2.3" opacity="0.33" transform="rotate(11 1672 432)"/><ellipse cx="1500" cy="728" rx="2.8" ry="1.8" opacity="0.48" transform="rotate(24 1500 728)"/><ellipse cx="1547" cy="668" rx="3.8" ry="2.3" opacity="0.32" transform="rotate(5 1547 668)"/><ellipse cx="1436" cy="477" rx="3.2" ry="2.0" opacity="0.32" transform="rotate(115 1436 477)"/><ellipse cx="1722" cy="821" rx="3.4" ry="1.9" opacity="0.56" transform="rotate(103 1722 821)"/><ellipse cx="1532" cy="612" rx="2.3" ry="2.2" opacity="0.58" transform="rotate(159 1532 612)"/><ellipse cx="1750" cy="740" rx="4.6" ry="3.5" opacity="0.54" transform="rotate(34 1750 740)"/><ellipse cx="1385" cy="564" rx="3.5" ry="3.1" opacity="0.60" transform="rotate(179 1385 564)"/><ellipse cx="1931" cy="687" rx="2.8" ry="1.6" opacity="0.48" transform="rotate(162 1931 687)"/><ellipse cx="1611" cy="795" rx="4.7" ry="3.2" opacity="0.50" transform="rotate(145 1611 795)"/><ellipse cx="1510" cy="558" rx="2.9" ry="1.8" opacity="0.39" transform="rotate(68 1510 558)"/><ellipse cx="1280" cy="809" rx="3.9" ry="2.3" opacity="0.47" transform="rotate(118 1280 809)"/><ellipse cx="1525" cy="622" rx="3.3" ry="2.9" opacity="0.52" transform="rotate(110 1525 622)"/><ellipse cx="1514" cy="684" rx="3.5" ry="3.4" opacity="0.40" transform="rotate(168 1514 684)"/><ellipse cx="1553" cy="682" rx="3.6" ry="3.2" opacity="0.59" transform="rotate(152 1553 682)"/><ellipse cx="1517" cy="740" rx="3.8" ry="2.9" opacity="0.45" transform="rotate(92 1517 740)"/><ellipse cx="1622" cy="876" rx="4.9" ry="3.0" opacity="0.47" transform="rotate(154 1622 876)"/><ellipse cx="1729" cy="628" rx="3.6" ry="2.8" opacity="0.54" transform="rotate(151 1729 628)"/><ellipse cx="1692" cy="634" rx="2.6" ry="2.4" opacity="0.49" transform="rotate(4 1692 634)"/><ellipse cx="1338" cy="801" rx="5.2" ry="3.1" opacity="0.32" transform="rotate(64 1338 801)"/><ellipse cx="1480" cy="618" rx="2.4" ry="2.0" opacity="0.45" transform="rotate(6 1480 618)"/><ellipse cx="1497" cy="629" rx="5.2" ry="3.0" opacity="0.51" transform="rotate(80 1497 629)"/><ellipse cx="1535" cy="806" rx="4.1" ry="2.7" opacity="0.41" transform="rotate(79 1535 806)"/><ellipse cx="1406" cy="722" rx="5.3" ry="3.6" opacity="0.37" transform="rotate(27 1406 722)"/><ellipse cx="1378" cy="783" rx="2.7" ry="1.9" opacity="0.32" transform="rotate(59 1378 783)"/><ellipse cx="1577" cy="864" rx="2.9" ry="1.8" opacity="0.35" transform="rotate(56 1577 864)"/><ellipse cx="1335" cy="458" rx="4.2" ry="2.4" opacity="0.42" transform="rotate(18 1335 458)"/><ellipse cx="1558" cy="663" rx="2.8" ry="2.8" opacity="0.49" transform="rotate(73 1558 663)"/><ellipse cx="1461" cy="643" rx="2.9" ry="1.7" opacity="0.46" transform="rotate(4 1461 643)"/><ellipse cx="1469" cy="735" rx="5.8" ry="3.5" opacity="0.32" transform="rotate(172 1469 735)"/><ellipse cx="1891" cy="638" rx="3.7" ry="2.9" opacity="0.54" transform="rotate(19 1891 638)"/><ellipse cx="1576" cy="789" rx="3.6" ry="3.4" opacity="0.39" transform="rotate(29 1576 789)"/><ellipse cx="1477" cy="421" rx="3.7" ry="3.0" opacity="0.48" transform="rotate(146 1477 421)"/><ellipse cx="1619" cy="583" rx="3.0" ry="2.1" opacity="0.39" transform="rotate(28 1619 583)"/><ellipse cx="1865" cy="829" rx="3.5" ry="2.7" opacity="0.38" transform="rotate(115 1865 829)"/><ellipse cx="1303" cy="614" rx="3.9" ry="2.6" opacity="0.49" transform="rotate(125 1303 614)"/><ellipse cx="1556" cy="335" rx="2.9" ry="2.7" opacity="0.38" transform="rotate(59 1556 335)"/><ellipse cx="1404" cy="873" rx="4.6" ry="2.9" opacity="0.42" transform="rotate(120 1404 873)"/><ellipse cx="1521" cy="388" rx="4.3" ry="2.6" opacity="0.56" transform="rotate(61 1521 388)"/><ellipse cx="1437" cy="617" rx="5.2" ry="3.1" opacity="0.60" transform="rotate(70 1437 617)"/><ellipse cx="1222" cy="607" rx="2.9" ry="2.8" opacity="0.49" transform="rotate(131 1222 607)"/><ellipse cx="1532" cy="797" rx="4.3" ry="3.4" opacity="0.49" transform="rotate(147 1532 797)"/><ellipse cx="1534" cy="456" rx="5.1" ry="2.9" opacity="0.38" transform="rotate(157 1534 456)"/><ellipse cx="1532" cy="802" rx="5.2" ry="3.2" opacity="0.39" transform="rotate(110 1532 802)"/><ellipse cx="1229" cy="702" rx="4.7" ry="2.7" opacity="0.58" transform="rotate(30 1229 702)"/><ellipse cx="1257" cy="861" rx="4.7" ry="3.2" opacity="0.41" transform="rotate(118 1257 861)"/><ellipse cx="1496" cy="758" rx="2.4" ry="2.0" opacity="0.33" transform="rotate(132 1496 758)"/><ellipse cx="1428" cy="594" rx="4.8" ry="3.5" opacity="0.44" transform="rotate(111 1428 594)"/><ellipse cx="1832" cy="519" rx="4.5" ry="2.7" opacity="0.44" transform="rotate(114 1832 519)"/><ellipse cx="1914" cy="645" rx="4.6" ry="3.5" opacity="0.54" transform="rotate(110 1914 645)"/><ellipse cx="1611" cy="767" rx="5.7" ry="3.3" opacity="0.60" transform="rotate(179 1611 767)"/><ellipse cx="1227" cy="721" rx="4.1" ry="3.0" opacity="0.42" transform="rotate(52 1227 721)"/><ellipse cx="1901" cy="698" rx="5.7" ry="3.3" opacity="0.41" transform="rotate(6 1901 698)"/><ellipse cx="1796" cy="773" rx="3.6" ry="2.1" opacity="0.57" transform="rotate(22 1796 773)"/><ellipse cx="1475" cy="494" rx="2.9" ry="2.0" opacity="0.51" transform="rotate(20 1475 494)"/><ellipse cx="1730" cy="504" rx="5.2" ry="3.3" opacity="0.51" transform="rotate(126 1730 504)"/><ellipse cx="1498" cy="756" rx="2.6" ry="1.8" opacity="0.34" transform="rotate(45 1498 756)"/><ellipse cx="1430" cy="828" rx="2.2" ry="1.7" opacity="0.45" transform="rotate(104 1430 828)"/><ellipse cx="1347" cy="779" rx="1.9" ry="1.7" opacity="0.53" transform="rotate(160 1347 779)"/><ellipse cx="1581" cy="859" rx="2.9" ry="1.9" opacity="0.36" transform="rotate(179 1581 859)"/><ellipse cx="1613" cy="698" rx="5.2" ry="3.1" opacity="0.46" transform="rotate(58 1613 698)"/><ellipse cx="1696" cy="776" rx="2.6" ry="1.6" opacity="0.47" transform="rotate(142 1696 776)"/><ellipse cx="1618" cy="756" rx="2.3" ry="2.2" opacity="0.56" transform="rotate(102 1618 756)"/><ellipse cx="1708" cy="695" rx="4.5" ry="2.7" opacity="0.40" transform="rotate(45 1708 695)"/><ellipse cx="1479" cy="518" rx="2.7" ry="1.8" opacity="0.55" transform="rotate(115 1479 518)"/><ellipse cx="1244" cy="835" rx="4.6" ry="3.2" opacity="0.43" transform="rotate(42 1244 835)"/><ellipse cx="1836" cy="400" rx="6.2" ry="3.6" opacity="0.44" transform="rotate(111 1836 400)"/><ellipse cx="1470" cy="556" rx="3.9" ry="3.3" opacity="0.53" transform="rotate(137 1470 556)"/><ellipse cx="1311" cy="800" rx="3.5" ry="3.0" opacity="0.58" transform="rotate(34 1311 800)"/><ellipse cx="1317" cy="711" rx="3.7" ry="2.4" opacity="0.31" transform="rotate(95 1317 711)"/><ellipse cx="1561" cy="927" rx="2.7" ry="2.2" opacity="0.50" transform="rotate(41 1561 927)"/><ellipse cx="1396" cy="825" rx="3.5" ry="2.1" opacity="0.37" transform="rotate(54 1396 825)"/><ellipse cx="1284" cy="811" rx="3.5" ry="3.1" opacity="0.48" transform="rotate(44 1284 811)"/><ellipse cx="1562" cy="715" rx="3.8" ry="2.2" opacity="0.42" transform="rotate(126 1562 715)"/><ellipse cx="1869" cy="576" rx="3.4" ry="2.0" opacity="0.41" transform="rotate(45 1869 576)"/><ellipse cx="1486" cy="736" rx="4.8" ry="2.7" opacity="0.59" transform="rotate(130 1486 736)"/><ellipse cx="1493" cy="430" rx="2.7" ry="1.8" opacity="0.44" transform="rotate(136 1493 430)"/><ellipse cx="1414" cy="737" rx="4.5" ry="3.1" opacity="0.31" transform="rotate(139 1414 737)"/><ellipse cx="1496" cy="861" rx="3.5" ry="2.5" opacity="0.48" transform="rotate(40 1496 861)"/><ellipse cx="1611" cy="703" rx="4.1" ry="3.2" opacity="0.37" transform="rotate(27 1611 703)"/><ellipse cx="1302" cy="539" rx="4.8" ry="3.4" opacity="0.57" transform="rotate(3 1302 539)"/><ellipse cx="1615" cy="680" rx="3.4" ry="2.5" opacity="0.45" transform="rotate(87 1615 680)"/><ellipse cx="1682" cy="593" rx="3.8" ry="3.0" opacity="0.46" transform="rotate(157 1682 593)"/><ellipse cx="1689" cy="449" rx="2.7" ry="1.9" opacity="0.38" transform="rotate(94 1689 449)"/><ellipse cx="1447" cy="556" rx="3.8" ry="3.4" opacity="0.32" transform="rotate(138 1447 556)"/><ellipse cx="1381" cy="768" rx="1.9" ry="1.8" opacity="0.56" transform="rotate(55 1381 768)"/><ellipse cx="1345" cy="891" rx="2.8" ry="2.8" opacity="0.56" transform="rotate(179 1345 891)"/><ellipse cx="1277" cy="716" rx="2.2" ry="1.6" opacity="0.59" transform="rotate(104 1277 716)"/><ellipse cx="1619" cy="618" rx="4.5" ry="3.3" opacity="0.42" transform="rotate(116 1619 618)"/><ellipse cx="1598" cy="681" rx="2.7" ry="1.8" opacity="0.44" transform="rotate(65 1598 681)"/><ellipse cx="1690" cy="790" rx="3.2" ry="2.9" opacity="0.32" transform="rotate(5 1690 790)"/><ellipse cx="1304" cy="639" rx="2.5" ry="1.9" opacity="0.33" transform="rotate(59 1304 639)"/><ellipse cx="1356" cy="829" rx="4.2" ry="3.3" opacity="0.42" transform="rotate(154 1356 829)"/><ellipse cx="1375" cy="878" rx="2.8" ry="2.5" opacity="0.48" transform="rotate(145 1375 878)"/><ellipse cx="1315" cy="863" rx="5.6" ry="3.2" opacity="0.38" transform="rotate(151 1315 863)"/><ellipse cx="1506" cy="830" rx="3.0" ry="1.9" opacity="0.53" transform="rotate(87 1506 830)"/><ellipse cx="1589" cy="788" rx="2.5" ry="1.9" opacity="0.53" transform="rotate(30 1589 788)"/><ellipse cx="1554" cy="899" rx="5.1" ry="3.0" opacity="0.53" transform="rotate(59 1554 899)"/><ellipse cx="1601" cy="700" rx="4.1" ry="2.8" opacity="0.42" transform="rotate(29 1601 700)"/><ellipse cx="1518" cy="425" rx="4.0" ry="3.0" opacity="0.59" transform="rotate(104 1518 425)"/><ellipse cx="1355" cy="743" rx="6.1" ry="3.5" opacity="0.53" transform="rotate(148 1355 743)"/><ellipse cx="1810" cy="558" rx="1.9" ry="1.8" opacity="0.40" transform="rotate(91 1810 558)"/><ellipse cx="1535" cy="722" rx="2.3" ry="1.9" opacity="0.39" transform="rotate(78 1535 722)"/><ellipse cx="1499" cy="758" rx="2.3" ry="1.8" opacity="0.39" transform="rotate(133 1499 758)"/><ellipse cx="1390" cy="487" rx="3.0" ry="2.5" opacity="0.45" transform="rotate(69 1390 487)"/><ellipse cx="1215" cy="777" rx="4.2" ry="2.8" opacity="0.54" transform="rotate(121 1215 777)"/><ellipse cx="1927" cy="626" rx="3.6" ry="2.3" opacity="0.30" transform="rotate(17 1927 626)"/><ellipse cx="1573" cy="541" rx="2.7" ry="1.6" opacity="0.59" transform="rotate(88 1573 541)"/><ellipse cx="1613" cy="572" rx="5.1" ry="3.0" opacity="0.48" transform="rotate(35 1613 572)"/><ellipse cx="1724" cy="471" rx="4.6" ry="2.8" opacity="0.50" transform="rotate(161 1724 471)"/><ellipse cx="1363" cy="717" rx="3.9" ry="2.9" opacity="0.34" transform="rotate(157 1363 717)"/><ellipse cx="1384" cy="579" rx="4.2" ry="2.4" opacity="0.32" transform="rotate(135 1384 579)"/><ellipse cx="1933" cy="753" rx="5.6" ry="3.3" opacity="0.39" transform="rotate(119 1933 753)"/><ellipse cx="1550" cy="664" rx="3.3" ry="2.9" opacity="0.59" transform="rotate(40 1550 664)"/><ellipse cx="1484" cy="741" rx="2.7" ry="1.9" opacity="0.34" transform="rotate(146 1484 741)"/><ellipse cx="1578" cy="593" rx="2.5" ry="1.9" opacity="0.50" transform="rotate(149 1578 593)"/><ellipse cx="1529" cy="596" rx="3.9" ry="2.2" opacity="0.33" transform="rotate(10 1529 596)"/><ellipse cx="1517" cy="548" rx="3.8" ry="3.0" opacity="0.58" transform="rotate(49 1517 548)"/><ellipse cx="1370" cy="645" rx="3.6" ry="2.5" opacity="0.35" transform="rotate(128 1370 645)"/><ellipse cx="1204" cy="625" rx="4.8" ry="2.8" opacity="0.46" transform="rotate(170 1204 625)"/><ellipse cx="1503" cy="421" rx="2.3" ry="1.8" opacity="0.60" transform="rotate(166 1503 421)"/><ellipse cx="1357" cy="763" rx="4.7" ry="3.6" opacity="0.57" transform="rotate(51 1357 763)"/><ellipse cx="1803" cy="737" rx="4.1" ry="3.0" opacity="0.49" transform="rotate(119 1803 737)"/><ellipse cx="1358" cy="385" rx="2.8" ry="2.2" opacity="0.43" transform="rotate(113 1358 385)"/><ellipse cx="1269" cy="614" rx="2.9" ry="2.6" opacity="0.55" transform="rotate(77 1269 614)"/><ellipse cx="1348" cy="828" rx="3.5" ry="2.7" opacity="0.59" transform="rotate(158 1348 828)"/><ellipse cx="1871" cy="541" rx="4.4" ry="2.7" opacity="0.33" transform="rotate(13 1871 541)"/><ellipse cx="1484" cy="633" rx="3.8" ry="3.2" opacity="0.56" transform="rotate(43 1484 633)"/><ellipse cx="1591" cy="868" rx="4.3" ry="2.5" opacity="0.59" transform="rotate(88 1591 868)"/><ellipse cx="1297" cy="758" rx="6.0" ry="3.6" opacity="0.54" transform="rotate(97 1297 758)"/><ellipse cx="1341" cy="672" rx="2.8" ry="2.7" opacity="0.59" transform="rotate(99 1341 672)"/><ellipse cx="1342" cy="518" rx="2.7" ry="1.8" opacity="0.41" transform="rotate(133 1342 518)"/><ellipse cx="1624" cy="793" rx="5.7" ry="3.2" opacity="0.38" transform="rotate(173 1624 793)"/><ellipse cx="1202" cy="550" rx="4.8" ry="2.8" opacity="0.41" transform="rotate(74 1202 550)"/><ellipse cx="1543" cy="726" rx="5.9" ry="3.4" opacity="0.36" transform="rotate(101 1543 726)"/><ellipse cx="1489" cy="385" rx="3.3" ry="2.0" opacity="0.45" transform="rotate(67 1489 385)"/><ellipse cx="1586" cy="811" rx="2.7" ry="2.0" opacity="0.59" transform="rotate(176 1586 811)"/><ellipse cx="1675" cy="665" rx="3.9" ry="2.2" opacity="0.52" transform="rotate(117 1675 665)"/><ellipse cx="1525" cy="731" rx="2.9" ry="2.2" opacity="0.59" transform="rotate(171 1525 731)"/><ellipse cx="1854" cy="781" rx="3.7" ry="3.5" opacity="0.33" transform="rotate(128 1854 781)"/><ellipse cx="1627" cy="638" rx="2.1" ry="1.9" opacity="0.59" transform="rotate(137 1627 638)"/><ellipse cx="1634" cy="657" rx="3.7" ry="2.2" opacity="0.53" transform="rotate(116 1634 657)"/><ellipse cx="1675" cy="445" rx="5.3" ry="3.4" opacity="0.45" transform="rotate(101 1675 445)"/><ellipse cx="1236" cy="858" rx="3.2" ry="2.3" opacity="0.54" transform="rotate(23 1236 858)"/><ellipse cx="1405" cy="537" rx="3.3" ry="3.1" opacity="0.58" transform="rotate(31 1405 537)"/><ellipse cx="1384" cy="677" rx="3.1" ry="2.0" opacity="0.41" transform="rotate(72 1384 677)"/><ellipse cx="1179" cy="621" rx="1.9" ry="1.8" opacity="0.33" transform="rotate(17 1179 621)"/><ellipse cx="1291" cy="611" rx="3.5" ry="2.2" opacity="0.56" transform="rotate(43 1291 611)"/><ellipse cx="1313" cy="846" rx="2.8" ry="1.9" opacity="0.43" transform="rotate(82 1313 846)"/><ellipse cx="1394" cy="846" rx="4.7" ry="3.1" opacity="0.60" transform="rotate(98 1394 846)"/><ellipse cx="1387" cy="635" rx="2.1" ry="1.7" opacity="0.38" transform="rotate(158 1387 635)"/><ellipse cx="1303" cy="688" rx="2.0" ry="1.6" opacity="0.37" transform="rotate(130 1303 688)"/><ellipse cx="1823" cy="405" rx="4.4" ry="2.5" opacity="0.57" transform="rotate(124 1823 405)"/><ellipse cx="1917" cy="559" rx="3.5" ry="3.5" opacity="0.48" transform="rotate(76 1917 559)"/><ellipse cx="1384" cy="531" rx="6.3" ry="3.6" opacity="0.58" transform="rotate(78 1384 531)"/><ellipse cx="1474" cy="621" rx="4.6" ry="3.2" opacity="0.35" transform="rotate(118 1474 621)"/><ellipse cx="1417" cy="416" rx="3.2" ry="2.5" opacity="0.44" transform="rotate(144 1417 416)"/><ellipse cx="1904" cy="749" rx="3.4" ry="2.9" opacity="0.41" transform="rotate(93 1904 749)"/><ellipse cx="1419" cy="747" rx="3.0" ry="2.6" opacity="0.50" transform="rotate(127 1419 747)"/><ellipse cx="1433" cy="795" rx="2.5" ry="2.3" opacity="0.49" transform="rotate(161 1433 795)"/><ellipse cx="1483" cy="715" rx="4.7" ry="3.5" opacity="0.58" transform="rotate(91 1483 715)"/><ellipse cx="1488" cy="687" rx="2.2" ry="1.7" opacity="0.49" transform="rotate(167 1488 687)"/><ellipse cx="1411" cy="544" rx="5.5" ry="3.1" opacity="0.36" transform="rotate(22 1411 544)"/><ellipse cx="1876" cy="779" rx="3.5" ry="3.1" opacity="0.33" transform="rotate(148 1876 779)"/><ellipse cx="1862" cy="740" rx="3.6" ry="2.6" opacity="0.46" transform="rotate(180 1862 740)"/><ellipse cx="1337" cy="635" rx="4.6" ry="3.4" opacity="0.34" transform="rotate(112 1337 635)"/><ellipse cx="1504" cy="498" rx="4.3" ry="3.6" opacity="0.39" transform="rotate(43 1504 498)"/><ellipse cx="1574" cy="309" rx="2.3" ry="2.2" opacity="0.51" transform="rotate(124 1574 309)"/><ellipse cx="1214" cy="821" rx="3.4" ry="2.8" opacity="0.54" transform="rotate(46 1214 821)"/><ellipse cx="1329" cy="740" rx="4.6" ry="3.1" opacity="0.39" transform="rotate(130 1329 740)"/><ellipse cx="1634" cy="647" rx="3.7" ry="2.7" opacity="0.35" transform="rotate(62 1634 647)"/><ellipse cx="1524" cy="442" rx="5.2" ry="3.0" opacity="0.51" transform="rotate(79 1524 442)"/><ellipse cx="1246" cy="686" rx="3.3" ry="2.8" opacity="0.37" transform="rotate(85 1246 686)"/><ellipse cx="1912" cy="575" rx="3.2" ry="2.0" opacity="0.55" transform="rotate(49 1912 575)"/><ellipse cx="1340" cy="406" rx="4.2" ry="3.0" opacity="0.33" transform="rotate(52 1340 406)"/><ellipse cx="1504" cy="454" rx="3.9" ry="2.8" opacity="0.46" transform="rotate(106 1504 454)"/><ellipse cx="1312" cy="720" rx="1.9" ry="1.6" opacity="0.41" transform="rotate(83 1312 720)"/><ellipse cx="1420" cy="625" rx="5.9" ry="3.4" opacity="0.58" transform="rotate(133 1420 625)"/><ellipse cx="1206" cy="820" rx="3.6" ry="2.6" opacity="0.36" transform="rotate(14 1206 820)"/><ellipse cx="1724" cy="879" rx="3.1" ry="2.2" opacity="0.35" transform="rotate(20 1724 879)"/><ellipse cx="1470" cy="371" rx="1.8" ry="1.7" opacity="0.38" transform="rotate(4 1470 371)"/><ellipse cx="1244" cy="789" rx="2.8" ry="2.5" opacity="0.44" transform="rotate(68 1244 789)"/><ellipse cx="1808" cy="461" rx="5.5" ry="3.6" opacity="0.57" transform="rotate(159 1808 461)"/><ellipse cx="1273" cy="648" rx="1.8" ry="1.7" opacity="0.55" transform="rotate(75 1273 648)"/><ellipse cx="1711" cy="960" rx="3.4" ry="2.5" opacity="0.45" transform="rotate(178 1711 960)"/><ellipse cx="1337" cy="774" rx="2.5" ry="2.4" opacity="0.37" transform="rotate(9 1337 774)"/><ellipse cx="1563" cy="500" rx="3.6" ry="2.1" opacity="0.57" transform="rotate(36 1563 500)"/><ellipse cx="1280" cy="788" rx="4.3" ry="2.5" opacity="0.30" transform="rotate(177 1280 788)"/><ellipse cx="1278" cy="769" rx="3.9" ry="2.8" opacity="0.45" transform="rotate(41 1278 769)"/><ellipse cx="1673" cy="463" rx="2.6" ry="2.3" opacity="0.50" transform="rotate(78 1673 463)"/><ellipse cx="1563" cy="710" rx="2.6" ry="1.8" opacity="0.52" transform="rotate(136 1563 710)"/><ellipse cx="1353" cy="641" rx="4.4" ry="2.6" opacity="0.48" transform="rotate(92 1353 641)"/><ellipse cx="1397" cy="799" rx="3.6" ry="3.4" opacity="0.50" transform="rotate(55 1397 799)"/><ellipse cx="1454" cy="624" rx="3.3" ry="3.2" opacity="0.36" transform="rotate(82 1454 624)"/><ellipse cx="1387" cy="389" rx="3.3" ry="1.9" opacity="0.48" transform="rotate(59 1387 389)"/><ellipse cx="1481" cy="913" rx="3.4" ry="2.1" opacity="0.59" transform="rotate(74 1481 913)"/><ellipse cx="1900" cy="735" rx="4.1" ry="2.7" opacity="0.36" transform="rotate(117 1900 735)"/><ellipse cx="1480" cy="551" rx="4.2" ry="2.5" opacity="0.51" transform="rotate(110 1480 551)"/><ellipse cx="1432" cy="424" rx="3.8" ry="3.2" opacity="0.49" transform="rotate(32 1432 424)"/><ellipse cx="1258" cy="745" rx="4.1" ry="3.1" opacity="0.38" transform="rotate(72 1258 745)"/><ellipse cx="1565" cy="896" rx="4.8" ry="3.3" opacity="0.31" transform="rotate(10 1565 896)"/><ellipse cx="1361" cy="539" rx="3.9" ry="2.6" opacity="0.53" transform="rotate(159 1361 539)"/><ellipse cx="1535" cy="786" rx="5.2" ry="3.2" opacity="0.40" transform="rotate(167 1535 786)"/><ellipse cx="1302" cy="714" rx="3.3" ry="3.2" opacity="0.42" transform="rotate(63 1302 714)"/><ellipse cx="1455" cy="817" rx="3.6" ry="2.8" opacity="0.31" transform="rotate(65 1455 817)"/><ellipse cx="1464" cy="741" rx="2.5" ry="2.1" opacity="0.40" transform="rotate(98 1464 741)"/><ellipse cx="1541" cy="634" rx="3.1" ry="3.1" opacity="0.59" transform="rotate(173 1541 634)"/><ellipse cx="1312" cy="452" rx="2.4" ry="2.2" opacity="0.52" transform="rotate(148 1312 452)"/><ellipse cx="1710" cy="487" rx="4.7" ry="3.4" opacity="0.58" transform="rotate(27 1710 487)"/><ellipse cx="1422" cy="539" rx="3.2" ry="1.9" opacity="0.60" transform="rotate(51 1422 539)"/><ellipse cx="1331" cy="878" rx="4.5" ry="3.5" opacity="0.44" transform="rotate(88 1331 878)"/><ellipse cx="1511" cy="752" rx="4.0" ry="3.4" opacity="0.55" transform="rotate(134 1511 752)"/><ellipse cx="1516" cy="818" rx="3.1" ry="1.8" opacity="0.49" transform="rotate(66 1516 818)"/><ellipse cx="1713" cy="793" rx="2.2" ry="2.2" opacity="0.58" transform="rotate(113 1713 793)"/><ellipse cx="1513" cy="745" rx="3.7" ry="2.9" opacity="0.57" transform="rotate(178 1513 745)"/><ellipse cx="1386" cy="418" rx="3.1" ry="1.7" opacity="0.54" transform="rotate(175 1386 418)"/><ellipse cx="1274" cy="754" rx="4.1" ry="3.6" opacity="0.56" transform="rotate(150 1274 754)"/><ellipse cx="1500" cy="742" rx="3.9" ry="2.2" opacity="0.55" transform="rotate(178 1500 742)"/><ellipse cx="1558" cy="710" rx="3.7" ry="2.5" opacity="0.60" transform="rotate(88 1558 710)"/><ellipse cx="1414" cy="602" rx="4.9" ry="3.3" opacity="0.60" transform="rotate(160 1414 602)"/><ellipse cx="1287" cy="582" rx="3.8" ry="3.1" opacity="0.48" transform="rotate(158 1287 582)"/><ellipse cx="1339" cy="543" rx="5.0" ry="3.4" opacity="0.47" transform="rotate(179 1339 543)"/><ellipse cx="1203" cy="673" rx="3.8" ry="2.3" opacity="0.58" transform="rotate(96 1203 673)"/><ellipse cx="1532" cy="399" rx="2.5" ry="1.9" opacity="0.48" transform="rotate(106 1532 399)"/><ellipse cx="1372" cy="711" rx="3.2" ry="1.9" opacity="0.33" transform="rotate(11 1372 711)"/><ellipse cx="1456" cy="794" rx="3.1" ry="2.4" opacity="0.37" transform="rotate(109 1456 794)"/><ellipse cx="1326" cy="692" rx="3.2" ry="3.0" opacity="0.44" transform="rotate(67 1326 692)"/><ellipse cx="1281" cy="575" rx="3.8" ry="2.1" opacity="0.56" transform="rotate(94 1281 575)"/><ellipse cx="1508" cy="673" rx="3.4" ry="3.3" opacity="0.59" transform="rotate(165 1508 673)"/><ellipse cx="1536" cy="612" rx="4.4" ry="2.9" opacity="0.36" transform="rotate(6 1536 612)"/><ellipse cx="1340" cy="525" rx="2.8" ry="1.7" opacity="0.57" transform="rotate(104 1340 525)"/><ellipse cx="1318" cy="529" rx="4.0" ry="3.3" opacity="0.55" transform="rotate(59 1318 529)"/><ellipse cx="1412" cy="691" rx="4.2" ry="3.2" opacity="0.39" transform="rotate(64 1412 691)"/><ellipse cx="1521" cy="780" rx="2.2" ry="2.1" opacity="0.52" transform="rotate(148 1521 780)"/><ellipse cx="1355" cy="772" rx="5.0" ry="2.9" opacity="0.58" transform="rotate(108 1355 772)"/><ellipse cx="1605" cy="870" rx="3.4" ry="3.3" opacity="0.42" transform="rotate(83 1605 870)"/><ellipse cx="1757" cy="760" rx="4.3" ry="3.6" opacity="0.41" transform="rotate(3 1757 760)"/><ellipse cx="1374" cy="450" rx="4.2" ry="2.7" opacity="0.38" transform="rotate(31 1374 450)"/><ellipse cx="1469" cy="543" rx="5.7" ry="3.2" opacity="0.36" transform="rotate(112 1469 543)"/><ellipse cx="1903" cy="573" rx="3.6" ry="3.2" opacity="0.51" transform="rotate(99 1903 573)"/><ellipse cx="1273" cy="571" rx="3.5" ry="2.0" opacity="0.52" transform="rotate(175 1273 571)"/><ellipse cx="1595" cy="722" rx="3.4" ry="2.1" opacity="0.54" transform="rotate(94 1595 722)"/><ellipse cx="1386" cy="332" rx="2.4" ry="1.9" opacity="0.54" transform="rotate(33 1386 332)"/><ellipse cx="1403" cy="615" rx="4.0" ry="2.7" opacity="0.36" transform="rotate(52 1403 615)"/><ellipse cx="1704" cy="495" rx="3.8" ry="3.0" opacity="0.57" transform="rotate(154 1704 495)"/><ellipse cx="1702" cy="817" rx="2.0" ry="1.8" opacity="0.55" transform="rotate(3 1702 817)"/><ellipse cx="1465" cy="759" rx="5.8" ry="3.3" opacity="0.49" transform="rotate(105 1465 759)"/><ellipse cx="1633" cy="778" rx="4.3" ry="3.1" opacity="0.46" transform="rotate(4 1633 778)"/><ellipse cx="1371" cy="687" rx="3.2" ry="2.5" opacity="0.34" transform="rotate(60 1371 687)"/><ellipse cx="1379" cy="569" rx="3.5" ry="2.7" opacity="0.56" transform="rotate(84 1379 569)"/><ellipse cx="1390" cy="517" rx="2.8" ry="2.1" opacity="0.42" transform="rotate(63 1390 517)"/><ellipse cx="1282" cy="853" rx="3.5" ry="2.1" opacity="0.33" transform="rotate(111 1282 853)"/><ellipse cx="1604" cy="802" rx="3.5" ry="3.5" opacity="0.48" transform="rotate(74 1604 802)"/><ellipse cx="1487" cy="749" rx="3.2" ry="2.8" opacity="0.46" transform="rotate(142 1487 749)"/><ellipse cx="1447" cy="401" rx="3.6" ry="2.7" opacity="0.41" transform="rotate(100 1447 401)"/><ellipse cx="1525" cy="550" rx="4.2" ry="3.1" opacity="0.50" transform="rotate(61 1525 550)"/><ellipse cx="1496" cy="911" rx="1.8" ry="1.6" opacity="0.45" transform="rotate(174 1496 911)"/><ellipse cx="1272" cy="741" rx="5.9" ry="3.5" opacity="0.56" transform="rotate(105 1272 741)"/><ellipse cx="1384" cy="784" rx="4.5" ry="2.9" opacity="0.39" transform="rotate(56 1384 784)"/><ellipse cx="1386" cy="571" rx="3.0" ry="1.7" opacity="0.57" transform="rotate(17 1386 571)"/><ellipse cx="1476" cy="493" rx="3.3" ry="2.1" opacity="0.52" transform="rotate(169 1476 493)"/><ellipse cx="1294" cy="565" rx="3.2" ry="1.9" opacity="0.48" transform="rotate(105 1294 565)"/><ellipse cx="1468" cy="650" rx="4.3" ry="3.3" opacity="0.42" transform="rotate(21 1468 650)"/><ellipse cx="1396" cy="667" rx="2.8" ry="2.3" opacity="0.59" transform="rotate(3 1396 667)"/><ellipse cx="1515" cy="696" rx="5.1" ry="2.8" opacity="0.59" transform="rotate(177 1515 696)"/><ellipse cx="1548" cy="654" rx="4.0" ry="2.6" opacity="0.39" transform="rotate(57 1548 654)"/><ellipse cx="1594" cy="757" rx="5.5" ry="3.4" opacity="0.46" transform="rotate(92 1594 757)"/><ellipse cx="1583" cy="541" rx="3.7" ry="3.3" opacity="0.54" transform="rotate(10 1583 541)"/><ellipse cx="1703" cy="743" rx="5.0" ry="3.3" opacity="0.35" transform="rotate(9 1703 743)"/><ellipse cx="1232" cy="834" rx="3.5" ry="3.2" opacity="0.46" transform="rotate(105 1232 834)"/><ellipse cx="1274" cy="675" rx="4.8" ry="3.5" opacity="0.30" transform="rotate(117 1274 675)"/><ellipse cx="1606" cy="879" rx="2.9" ry="2.0" opacity="0.40" transform="rotate(22 1606 879)"/><ellipse cx="1453" cy="565" rx="4.1" ry="2.3" opacity="0.43" transform="rotate(133 1453 565)"/><ellipse cx="1920" cy="582" rx="3.7" ry="2.8" opacity="0.42" transform="rotate(7 1920 582)"/><ellipse cx="1659" cy="897" rx="2.8" ry="2.1" opacity="0.48" transform="rotate(46 1659 897)"/><ellipse cx="1445" cy="577" rx="4.9" ry="3.4" opacity="0.35" transform="rotate(160 1445 577)"/><ellipse cx="1279" cy="888" rx="5.0" ry="2.9" opacity="0.30" transform="rotate(153 1279 888)"/><ellipse cx="1641" cy="485" rx="4.1" ry="2.4" opacity="0.40" transform="rotate(95 1641 485)"/><ellipse cx="1512" cy="796" rx="3.3" ry="2.3" opacity="0.35" transform="rotate(19 1512 796)"/><ellipse cx="1433" cy="814" rx="3.5" ry="3.2" opacity="0.51" transform="rotate(48 1433 814)"/><ellipse cx="1433" cy="780" rx="3.1" ry="2.7" opacity="0.41" transform="rotate(85 1433 780)"/><ellipse cx="1880" cy="664" rx="2.0" ry="1.8" opacity="0.31" transform="rotate(99 1880 664)"/><ellipse cx="1411" cy="741" rx="3.6" ry="3.0" opacity="0.55" transform="rotate(55 1411 741)"/><ellipse cx="1483" cy="513" rx="2.2" ry="1.9" opacity="0.33" transform="rotate(68 1483 513)"/><ellipse cx="1507" cy="694" rx="3.9" ry="2.6" opacity="0.52" transform="rotate(105 1507 694)"/><ellipse cx="1670" cy="715" rx="2.8" ry="2.1" opacity="0.55" transform="rotate(14 1670 715)"/><ellipse cx="1256" cy="550" rx="3.0" ry="2.2" opacity="0.33" transform="rotate(151 1256 550)"/><ellipse cx="1493" cy="431" rx="3.4" ry="2.5" opacity="0.52" transform="rotate(118 1493 431)"/><ellipse cx="1663" cy="589" rx="3.8" ry="2.2" opacity="0.39" transform="rotate(145 1663 589)"/><ellipse cx="1461" cy="456" rx="3.8" ry="2.3" opacity="0.30" transform="rotate(88 1461 456)"/><ellipse cx="1634" cy="750" rx="3.4" ry="3.1" opacity="0.56" transform="rotate(4 1634 750)"/><ellipse cx="1565" cy="318" rx="2.7" ry="2.4" opacity="0.52" transform="rotate(72 1565 318)"/></g>
<g filter="url(#rg2)"><path d="M1890 772C1887 778 1878 799 1872 810C1866 821 1861 826 1853 836C1845 846 1832 860 1822 871C1812 882 1800 891 1790 899C1780 907 1770 915 1760 921C1750 927 1742 931 1732 934C1722 937 1710 940 1700 939C1690 938 1678 935 1670 931C1662 927 1655 918 1652 915L1656 884C1660 883 1673 878 1681 878C1689 878 1694 883 1702 881C1710 879 1722 873 1730 866C1738 859 1742 849 1748 840C1754 831 1757 817 1764 810C1771 803 1779 800 1788 796C1797 792 1809 792 1820 788C1831 784 1847 775 1852 772Z" fill="#cfb08c" stroke="#8a5326" stroke-width="3" stroke-linejoin="round"/><path d="M1850 796C1844 800 1822 812 1812 822C1802 832 1797 845 1788 856C1779 867 1768 881 1756 890C1744 899 1729 906 1716 909C1703 912 1686 908 1680 908" fill="none" stroke="#dcc4a4" stroke-width="34" stroke-linecap="round" filter="url(#vb4)"/><path d="M1846 800C1840 804 1820 816 1810 826C1800 836 1795 847 1786 858C1777 869 1766 883 1754 892C1742 901 1728 908 1716 911C1704 914 1689 910 1684 910" fill="none" stroke="#e6d4bc" stroke-width="14" stroke-linecap="round" filter="url(#vb4)" opacity=".8"/></g>
<circle cx="1255" cy="863" r="16" fill="none" stroke="#a07040" stroke-width="5" opacity=".7" filter="url(#vb)"/>
<g fill="#f4eee0" filter="url(#vb2)"><ellipse cx="1822" cy="704" rx="33" ry="11" transform="rotate(4 1822 704)"/><ellipse cx="1738" cy="738" rx="15" ry="7" transform="rotate(18 1738 738)"/><ellipse cx="1866" cy="799" rx="27" ry="18" transform="rotate(-25 1866 799)"/><ellipse cx="1697" cy="919" rx="42" ry="9" transform="rotate(16 1697 919)"/><ellipse cx="1633" cy="916" rx="17" ry="8" transform="rotate(20 1633 916)"/><ellipse cx="1644" cy="953" rx="28" ry="20" transform="rotate(5 1644 953)"/><ellipse cx="1597" cy="957" rx="9" ry="5" transform="rotate(0 1597 957)"/><ellipse cx="1786" cy="770" rx="20" ry="8" transform="rotate(30 1786 770)"/><ellipse cx="1352" cy="879" rx="10" ry="9" transform="rotate(0 1352 879)"/><ellipse cx="1366" cy="887" rx="8" ry="5" transform="rotate(0 1366 887)"/><ellipse cx="1453" cy="848" rx="7" ry="5" transform="rotate(20 1453 848)"/><ellipse cx="1478" cy="852" rx="8" ry="6" transform="rotate(0 1478 852)"/></g>
</g>
<path d="M1497.5 123L1343 1238" stroke="#ff00ff" stroke-width="1.1" fill="none"/>
<!-- ROI front edges -->
<g stroke="#fb8080" stroke-width="3" fill="none" stroke-linecap="round" id="roifront">
<path d="M1438 -27L927 496L853 733L1567 1058L2162 747L2117 510L1438 -27"/>
<path d="M1438 -27L1409 216L853 733M1409 216L2162 747M1573 878L1567 1058"/>
</g>
<g fill="#e6e6e6">
<circle cx="1409" cy="216" r="13"/><circle cx="927" cy="496" r="9"/><circle cx="853" cy="733" r="10"/>
<circle cx="2117" cy="510" r="9"/><circle cx="1574" cy="841" r="6.2"/><circle cx="2162" cy="747" r="10"/><circle cx="1567" cy="1058" r="8"/>
</g>
<!-- face handles -->
<circle cx="1123" cy="383" r="10.5" fill="#ff0000"/>
<circle cx="1828" cy="390" r="10.2" fill="#0000ff"/>
<circle cx="1266" cy="794" r="8" fill="#0000ff"/>
<circle cx="1824" cy="801" r="8" fill="#ff0000"/>
<circle cx="1521.4" cy="503.2" r="8.5" fill="#00ff00"/>
<circle cx="1507.5" cy="740" r="9.5" fill="#00ff00"/>
<!-- rotation handles -->
<g fill="none" stroke-width="7.7" stroke-linejoin="round" stroke-linecap="round">
<path d="M1439.5 556.5Q1506 514.3 1577.5 556.5L1513 601Z" stroke="#00ff00"/>
<path d="M1428 579L1501 621L1497 694Q1428.3 648.1 1428 579Z" stroke="#0000ff"/>
<path d="M1587.5 577L1525 620L1521 694Q1580.4 647.1 1587.5 577Z" stroke="#ff0000"/>
</g>
<circle cx="1504.8" cy="537.5" r="9" fill="#00ff00"/>
<circle cx="1445.4" cy="642.3" r="9.5" fill="#0000ff"/>
<circle cx="1567.3" cy="641.3" r="9.5" fill="#ff0000"/>
<circle cx="1514.5" cy="617" r="1.3" fill="#c85050"/>
<text x="1515" y="614" font-size="13.2" font-weight="bold" fill="#fc9c9c" stroke="#5a2424" stroke-width=".9" paint-order="stroke">ROI</text>
<!-- orientation labels -->
<g fill="#fff">
<text x="1005.5" y="687.5" font-size="93">R</text>
<text x="1997" y="747.7" font-size="65.8">L</text>
<text x="1669" y="138" font-size="76">S</text>
<text x="1325" y="636" font-size="63.4" fill="#f8f2f0" opacity=".9">P</text>
<text x="1516" y="1275.5" font-size="76">I</text>
</g>
</svg>
</div>
</body>
</html>
